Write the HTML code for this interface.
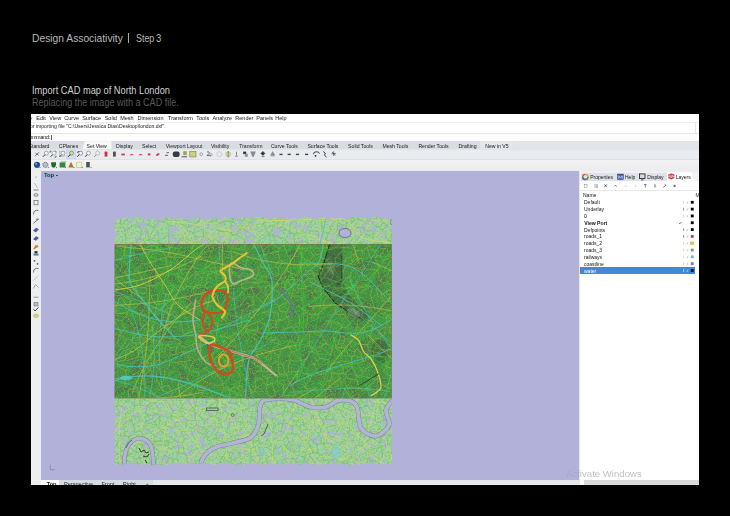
<!DOCTYPE html>
<html><head><meta charset="utf-8">
<style>
*{margin:0;padding:0;box-sizing:border-box}
html,body{width:730px;height:516px;overflow:hidden;background:#000}
body{position:relative;font-family:"Liberation Sans",sans-serif}
.a{position:absolute;white-space:nowrap}
#win{position:absolute;left:31px;top:114px;width:668px;height:371px;overflow:hidden;background:#fff;will-change:transform}
svg{position:absolute;left:0;top:0}
</style></head><body>
<div class="a" style="left:31.60px;top:32.73px;font-size:10.6px;line-height:10.6px;color:#b8b8b8;transform:scaleX(0.97);transform-origin:0 0">Design Associativity</div>
<div class="a" style="left:128.3px;top:33px;width:0.8px;height:10.3px;background:#a8a8a8"></div>
<div class="a" style="left:135.60px;top:32.73px;font-size:10.6px;line-height:10.6px;color:#b8b8b8;transform:scaleX(0.84);transform-origin:0 0">Step</div>
<div class="a" style="left:155.90px;top:32.73px;font-size:10.6px;line-height:10.6px;color:#b8b8b8;transform:scaleX(0.9);transform-origin:0 0">3</div>
<div class="a" style="left:32.00px;top:85.09px;font-size:11.0px;line-height:11.0px;color:#d0d0d0;transform:scaleX(0.842);transform-origin:0 0">Import CAD map of North London</div>
<div class="a" style="left:32.00px;top:97.19px;font-size:11.0px;line-height:11.0px;color:#585858;transform:scaleX(0.822);transform-origin:0 0">Replacing the image with a CAD file.</div>
<div id="win">
<div class="a" style="left:0.00px;top:0.00px;width:668.00px;height:8.00px;background:#fff;"></div>
<div class="a" style="left:0.00px;top:8.00px;width:668.00px;height:1.00px;background:#ededed;"></div>
<div class="a" style="left:0.00px;top:9.00px;width:668.00px;height:10.00px;background:#fff;"></div>
<div class="a" style="left:664.00px;top:9.00px;width:1.00px;height:10.00px;background:#e6e6e6;"></div>
<div class="a" style="left:0.00px;top:19.00px;width:668.00px;height:1.00px;background:#e6e6e6;"></div>
<div class="a" style="left:0.00px;top:20.00px;width:668.00px;height:7.00px;background:#fcfcfc;"></div>
<div class="a" style="left:0.00px;top:27.00px;width:668.00px;height:8.00px;background:#e1e4e8;"></div>
<div class="a" style="left:0.00px;top:27.00px;width:481.00px;height:8.00px;background:#d9dde3;"></div>
<div class="a" style="left:0.00px;top:35.00px;width:668.00px;height:1.00px;background:#e2e4e8;"></div>
<div class="a" style="left:0.00px;top:36.00px;width:668.00px;height:9.00px;background:#e9ebef;"></div>
<div class="a" style="left:0.00px;top:45.00px;width:668.00px;height:1.00px;background:#e0e2e6;"></div>
<div class="a" style="left:0.00px;top:46.00px;width:668.00px;height:11.00px;background:linear-gradient(#f2f2f4,#ececef);"></div>
<div class="a" style="left:0.00px;top:57.00px;width:10.00px;height:314.00px;background:#eceef1;"></div>
<div class="a" style="left:10.00px;top:57.00px;width:538.00px;height:309.00px;background:#b1b1d9;"></div>
<div class="a" style="left:548.00px;top:57.00px;width:1.00px;height:314.00px;background:#e4e6ea;"></div>
<div class="a" style="left:549.00px;top:57.00px;width:119.00px;height:314.00px;background:#ffffff;"></div>
<div class="a" style="left:10.00px;top:366.00px;width:538.00px;height:5.00px;background:#e7e8ec;"></div>
<div class="a" style="left:-2.00px;top:1.74px;font-size:5.5px;line-height:5.5px;color:#151515;">e</div>
<div class="a" style="left:5.30px;top:1.74px;font-size:5.5px;line-height:5.5px;color:#151515;">Edit</div>
<div class="a" style="left:18.30px;top:1.74px;font-size:5.5px;line-height:5.5px;color:#151515;">View</div>
<div class="a" style="left:33.30px;top:1.74px;font-size:5.5px;line-height:5.5px;color:#151515;">Curve</div>
<div class="a" style="left:51.20px;top:1.74px;font-size:5.5px;line-height:5.5px;color:#151515;">Surface</div>
<div class="a" style="left:73.70px;top:1.74px;font-size:5.5px;line-height:5.5px;color:#151515;">Solid</div>
<div class="a" style="left:89.20px;top:1.74px;font-size:5.5px;line-height:5.5px;color:#151515;">Mesh</div>
<div class="a" style="left:106.50px;top:1.74px;font-size:5.5px;line-height:5.5px;color:#151515;">Dimension</div>
<div class="a" style="left:137.00px;top:1.74px;font-size:5.5px;line-height:5.5px;color:#151515;">Transform</div>
<div class="a" style="left:165.30px;top:1.74px;font-size:5.5px;line-height:5.5px;color:#151515;">Tools</div>
<div class="a" style="left:181.50px;top:1.74px;font-size:5.5px;line-height:5.5px;color:#151515;">Analyze</div>
<div class="a" style="left:204.30px;top:1.74px;font-size:5.5px;line-height:5.5px;color:#151515;">Render</div>
<div class="a" style="left:225.30px;top:1.74px;font-size:5.5px;line-height:5.5px;color:#151515;">Panels</div>
<div class="a" style="left:244.30px;top:1.74px;font-size:5.5px;line-height:5.5px;color:#151515;">Help</div>
<div class="a" style="left:-1.00px;top:9.90px;font-size:5.08px;line-height:5.08px;color:#1a1a1a;">or importing file "C:\Users\Jessica Dias\Desktop\london.dxf".</div>
<div class="a" style="left:-1.60px;top:20.80px;font-size:5.2px;line-height:5.2px;color:#111;letter-spacing:-0.12px">ommand:</div>
<div class="a" style="left:20.20px;top:20.60px;width:0.70px;height:5.00px;background:#666;"></div>
<div class="a" style="left:51.00px;top:27.20px;width:29.50px;height:8.30px;background:#f7f8fa;clip-path:polygon(3px 0,100% 0,100% 100%,0 100%)"></div>
<div class="a" style="left:448.50px;top:27.20px;width:33.50px;height:8.30px;background:#e3e6eb;"></div>
<div class="a" style="left:-2.40px;top:29.84px;font-size:5.15px;line-height:5.15px;color:#1a1a1a;">Standard</div>
<div class="a" style="left:27.80px;top:29.84px;font-size:5.15px;line-height:5.15px;color:#1a1a1a;">CPlanes</div>
<div class="a" style="left:55.60px;top:29.84px;font-size:5.15px;line-height:5.15px;color:#1a1a1a;">Set View</div>
<div class="a" style="left:85.00px;top:29.84px;font-size:5.15px;line-height:5.15px;color:#1a1a1a;">Display</div>
<div class="a" style="left:111.00px;top:29.84px;font-size:5.15px;line-height:5.15px;color:#1a1a1a;">Select</div>
<div class="a" style="left:134.70px;top:29.84px;font-size:5.15px;line-height:5.15px;color:#1a1a1a;">Viewport Layout</div>
<div class="a" style="left:179.90px;top:29.84px;font-size:5.15px;line-height:5.15px;color:#1a1a1a;">Visibility</div>
<div class="a" style="left:208.20px;top:29.84px;font-size:5.15px;line-height:5.15px;color:#1a1a1a;">Transform</div>
<div class="a" style="left:239.90px;top:29.84px;font-size:5.15px;line-height:5.15px;color:#1a1a1a;">Curve Tools</div>
<div class="a" style="left:276.40px;top:29.84px;font-size:5.15px;line-height:5.15px;color:#1a1a1a;">Surface Tools</div>
<div class="a" style="left:317.10px;top:29.84px;font-size:5.15px;line-height:5.15px;color:#1a1a1a;">Solid Tools</div>
<div class="a" style="left:351.40px;top:29.84px;font-size:5.15px;line-height:5.15px;color:#1a1a1a;">Mesh Tools</div>
<div class="a" style="left:387.40px;top:29.84px;font-size:5.15px;line-height:5.15px;color:#1a1a1a;">Render Tools</div>
<div class="a" style="left:427.50px;top:29.84px;font-size:5.15px;line-height:5.15px;color:#1a1a1a;">Drafting</div>
<div class="a" style="left:454.20px;top:29.84px;font-size:5.15px;line-height:5.15px;color:#1a1a1a;">New in V5</div>
<div class="a" style="left:549.40px;top:56.60px;width:118.60px;height:2.00px;background:#eef0f3;"></div>
<div class="a" style="left:549.40px;top:58.60px;width:118.60px;height:8.80px;background:#f2f3f5;"></div>
<div class="a" style="left:550.00px;top:58.60px;width:85.50px;height:8.80px;background:#dfe3e9;"></div>
<div class="a" style="left:635.50px;top:58.20px;width:28.00px;height:9.40px;background:#ffffff;clip-path:polygon(0 0,90% 0,100% 100%,0 100%)"></div>
<div class="a" style="left:559.20px;top:60.77px;font-size:5.0px;line-height:5.0px;color:#151515;">Properties</div>
<div class="a" style="left:594.00px;top:60.77px;font-size:5.0px;line-height:5.0px;color:#151515;">Help</div>
<div class="a" style="left:616.20px;top:60.77px;font-size:5.0px;line-height:5.0px;color:#151515;">Display</div>
<div class="a" style="left:644.70px;top:60.77px;font-size:5.0px;line-height:5.0px;color:#151515;">Layers</div>
<div class="a" style="left:549.40px;top:76.20px;width:118.60px;height:0.50px;background:#e6e8ee;"></div>
<div class="a" style="left:552.00px;top:79.47px;font-size:5.0px;line-height:5.0px;color:#111;">Name</div>
<div class="a" style="left:664.60px;top:78.97px;font-size:5.0px;line-height:5.0px;color:#333;">M</div>
<div class="a" style="left:553.00px;top:86.37px;font-size:5.0px;line-height:5.0px;color:#151515;">Default</div>
<div class="a" style="left:553.00px;top:93.19px;font-size:5.0px;line-height:5.0px;color:#151515;">Underlay</div>
<div class="a" style="left:553.00px;top:100.01px;font-size:5.0px;line-height:5.0px;color:#151515;">0</div>
<div class="a" style="left:553.20px;top:106.74px;font-size:5.1px;line-height:5.1px;color:#151515;font-weight:bold;">View Port</div>
<div class="a" style="left:553.00px;top:113.65px;font-size:5.0px;line-height:5.0px;color:#151515;">Defpoints</div>
<div class="a" style="left:553.00px;top:120.47px;font-size:5.0px;line-height:5.0px;color:#151515;">roads_1</div>
<div class="a" style="left:553.00px;top:127.29px;font-size:5.0px;line-height:5.0px;color:#151515;">roads_2</div>
<div class="a" style="left:553.00px;top:134.11px;font-size:5.0px;line-height:5.0px;color:#151515;">roads_3</div>
<div class="a" style="left:553.00px;top:140.93px;font-size:5.0px;line-height:5.0px;color:#151515;">railways</div>
<div class="a" style="left:553.00px;top:147.75px;font-size:5.0px;line-height:5.0px;color:#151515;">coastline</div>
<div class="a" style="left:549.40px;top:153.20px;width:115.10px;height:6.90px;background:#3f8ad6;"></div>
<div class="a" style="left:664.50px;top:153.20px;width:3.50px;height:6.90px;background:#fff;border-radius:3px 0 0 3px"></div>
<div class="a" style="left:553.00px;top:154.57px;font-size:5.0px;line-height:5.0px;color:#ffffff;">water</div>
<div class="a" style="left:10.20px;top:365.60px;width:111.80px;height:5.40px;background:#d8dbe1;"></div>
<div class="a" style="left:10.40px;top:365.60px;width:17.40px;height:5.40px;background:#ffffff;"></div>
<div class="a" style="left:15.70px;top:367.66px;font-size:5.6px;line-height:5.6px;color:#111;font-weight:bold;">Top</div>
<div class="a" style="left:33.00px;top:367.66px;font-size:5.6px;line-height:5.6px;color:#222;">Perspective</div>
<div class="a" style="left:70.40px;top:367.66px;font-size:5.6px;line-height:5.6px;color:#222;">Front</div>
<div class="a" style="left:91.80px;top:367.66px;font-size:5.6px;line-height:5.6px;color:#222;">Right</div>
<div class="a" style="left:114.60px;top:367.66px;font-size:5.6px;line-height:5.6px;color:#555;">+</div>
<div class="a" style="left:10.90px;top:57.70px;width:13.40px;height:7.40px;background:#a4b6d2;"></div>
<div class="a" style="left:13.00px;top:58.81px;font-size:5.9px;line-height:5.9px;color:#1e2a46;font-weight:bold;letter-spacing:-0.1px">Top</div>
<div class="a" style="left:25.10px;top:61.10px;width:2.10px;height:1.00px;background:#3a4560;"></div>
<div class="a" style="left:535.00px;top:355.07px;font-size:9.6px;line-height:9.6px;color:#c2c2c4;clip-path:inset(0 0 0 13.6px)">Activate Windows</div>
<div class="a" style="left:535.00px;top:355.07px;font-size:9.6px;line-height:9.6px;color:rgba(140,140,185,0.35);clip-path:polygon(0 0,13px 0,13px 100%,0 100%)">Activate Windows</div>
<div class="a" style="left:553.00px;top:366.00px;width:115.00px;height:5.00px;background:#dadada;"></div>
</div>
<svg width="730" height="516" viewBox="0 0 730 516">
<defs><clipPath id="vpc"><rect x="41.2" y="170.8" width="537.6" height="308.8"/></clipPath></defs>
<g clip-path="url(#vpc)"><filter id="mblur" x="-2%" y="-2%" width="104%" height="104%"><feGaussianBlur stdDeviation="0.4"/></filter>
<g filter="url(#mblur)">
<filter id="spk" x="0" y="0" width="100%" height="100%" color-interpolation-filters="sRGB">
<feTurbulence type="fractalNoise" baseFrequency="0.7" numOctaves="2" seed="4" result="t"/>
<feColorMatrix in="t" type="matrix" values="0 0 0 0 0.24  0 0 0 0 0.72  0 0 0 0 0.24  0 4 0 0 -1.9" result="g"/>
<feComposite in="g" in2="SourceGraphic" operator="in"/>
</filter>
<filter id="blt" x="0" y="0" width="100%" height="100%" color-interpolation-filters="sRGB">
<feTurbulence type="fractalNoise" baseFrequency="0.07" numOctaves="3" seed="9" result="t"/>
<feColorMatrix in="t" type="matrix" values="0 0 0 0 0.36  0 0 0 0 0.38  0 0 0 0 0.33  0 0 -6 0 2.85" result="g"/>
<feComposite in="g" in2="SourceGraphic" operator="in"/>
</filter>
<filter id="spl" x="0" y="0" width="100%" height="100%" color-interpolation-filters="sRGB">
<feTurbulence type="fractalNoise" baseFrequency="0.55" numOctaves="2" seed="2" result="t"/>
<feColorMatrix in="t" type="matrix" values="0 0 0 0 0.44  0 0 0 0 0.78  0 0 0 0 0.42  0 5 0 0 -2.5" result="g"/>
<feComposite in="g" in2="SourceGraphic" operator="in"/>
</filter>
<filter id="lav" x="0" y="0" width="100%" height="100%" color-interpolation-filters="sRGB">
<feTurbulence type="fractalNoise" baseFrequency="0.16" numOctaves="2" seed="5" result="t"/>
<feColorMatrix in="t" type="matrix" values="0 0 0 0 0.69  0 0 0 0 0.69  0 0 0 0 0.85  0 0 7 0 -4.0" result="g"/>
<feComposite in="g" in2="SourceGraphic" operator="in"/>
</filter>
<clipPath id="lt"><path d="M114.5 218.1L118.7 219.7L122.6 218.3L127 217.1L131 218.7L136.2 216.8L139.4 216.8L144.6 218.9L146.8 219.9L152.6 218.8L157.1 217.1L159.2 218.3L161.4 217.2L164.4 216.6L168.2 218L173.6 218.3L178.2 218.2L182.8 218.1L185.9 220L191.9 219.4L196.7 217.6L199.7 217.5L201.9 219.2L205.5 219.5L209.1 219.9L214.5 216.5L217.3 219.7L221.2 219.9L224.8 216.8L229.3 219.2L232.4 216.8L235.7 219.9L240.7 216.9L243.7 216.9L246 219.3L248.7 218.5L252.5 217.2L257.4 217L262 216.9L265.7 217.2L268.7 219.9L273.9 217.6L279.5 217.2L283.1 219.5L287.6 216.9L293.6 217.2L296.6 219.2L299.9 217.5L302.2 216.8L306.6 217.4L311 217.8L314.8 219.9L318.7 218.5L324.2 217.1L326.8 219.7L332.1 217.4L334.8 219.1L340.6 217.2L346.4 219.6L350.8 218L353.2 216.6L359.1 217.3L363.9 217.4L369.2 218.6L372.4 217.1L377.2 216.7L380.2 218.5L385.6 218.7L388.7 219.7L391.5 216.6L391.9 216.5L391.9 244.0L114.5 244.0ZM114.5 398.4L391.9 398.4L391.9 465.3L391.1 463.6L387.7 464.6L385 463.5L381.1 465.3L378.4 464.1L375.6 463.6L369.8 463.3L365.1 463.7L361.3 463.7L359.2 464.9L356.2 463.2L354.1 464.2L351.6 465.3L346.4 464.5L342.1 463.5L340 463.1L337.8 465.1L334 462.8L328.7 464.5L324.7 463.7L321 464.8L317.9 464.2L315.2 464.6L309.4 463.5L304.1 463.2L300.1 465L296.8 463.8L293.3 463.1L287.6 463.3L283.9 464.8L279.2 464.5L273.7 464.2L269 463L266.3 464.8L261.6 464.5L259.6 464.7L253.9 463.8L249.9 463.6L247 464.1L242.6 465.2L237.6 465.1L232.2 464.2L227.9 463.5L224.3 463.5L218.8 462.8L214.3 465.1L209.8 463.8L206.3 463.7L202 463.1L196.9 464.3L191.4 463L186.6 464.4L181 463.3L176.2 463.5L170.6 463.5L166.4 465.1L160.4 464.5L155.4 464.1L150.9 465.2L145.1 463.5L139.4 465.3L137.3 464.9L132.9 463.6L128.3 462.8L122.7 464.4L120.2 463.9L116.7 464.9L114.5 464.2Z"/></clipPath>
<g clip-path="url(#lt)">
<rect x="114.5" y="214.5" width="277.4" height="252.8" fill="#a6d0a0"/>
<rect x="114.5" y="216.5" width="277.4" height="248.8" fill="#000" filter="url(#spl)" opacity="0.75"/>
<rect x="114.5" y="216.5" width="277.4" height="248.8" fill="#000" filter="url(#lav)"/>
<path d="M382.6 207l-12 -1.9M382.6 207l0.4 1.4M370.5 205.1l-0.8 1.5M383 208.4l-7 6.6M369.8 206.6l1.9 8.5M313.1 218.4l-6.3 12.2M313.1 218.4l7.7 1M320.9 219.4l1.5 10.8M306.8 230.6l11.7 0.7M376.1 227.2l-1 3.1M376.1 227.2l3.5 -0.7M379.6 226.6l2.8 3.5M382.4 230l5.4 9.6M391.5 201.6l-3.2 8M388.2 209.6l11.9 -0.6M383 208.4l4.5 1.8M382.5 223.2l5.4 1.4M382.5 223.2l-1.2 -4.9M381.3 218.3l7.3 -3.1M379.6 226.6l2.9 -3.3M382.4 230l5.5 -5.4M369.3 219.5l6.8 7.7M371.7 215l-0 0M387.5 210.2l1.1 5.1M395.2 216.2l6 -5.5M395.2 216.2l-4.6 0.6M400.1 208.9l1.1 1.8M364.8 222.2l4.5 -2.7M364.8 222.2l-6.7 -3.4M358.1 218.8l-1 -8M369.8 206.6l-10.2 -1.2M359.6 205.4l-3 4.3M357.1 210.8l-0.5 -1.2M325.3 250.4l15 7.5M317.6 246.5l6.7 0.7M317.6 246.5l0.9 -15.2M327.5 233.2l-5.1 -3M327.5 233.2l-1.1 11.9M329.4 231.9l-1.9 1.2M333.8 242.7l4.1 -6.9M337.8 235.8l-3.5 -3M326.3 245.1l4.6 -0.3M382.8 242.8l-0.3 14M382.8 242.8l-8.4 0.2M374.5 243l0 0M374.5 243l-6 3.1M368.5 246l-0.2 9M363.3 232.2l9.1 5.8M363.7 230.7l10.8 0.2M372.4 238l2.1 -7.1M363.5 227.7l0.2 3M333.8 242.7l7.7 -1.7M337.8 235.8l5.5 0.7M343.4 236.5l-1.9 4.5M348.8 231.1l5 -4.1M348.8 231.1l-3 -5.8M345.8 225.3l0.8 -2M346.6 223.3l8.7 -2.5M363.5 227.7l-9.6 -0.7M358.1 218.8l-1.4 0.5M295.1 246.3l2 2.6M295.1 246.3l6.1 1M301.2 247.4l-4.1 1.5M308.5 243.6l-4.2 3.4M308.5 243.6l-1.6 -3M295.1 246.3l-1.8 -1.1M306.9 240.5l-12.1 3.2M306.9 240.5l-1.8 -7.9M294.8 243.8l-1.2 -10.2M293.7 233.6l11.5 -0.9M306.8 230.6l-1.2 0.9M305.7 231.5l-0.5 1.2M329.4 231.9l2.7 -8.2M320.9 219.4l0.1 -0M309.7 212.1l6.4 -6.5M309.7 212.1l3.5 6.3M316.1 205.6l7.6 10M321 219.3l2.7 -3.7M337.4 223.1l6 2M337.4 223.1l0.2 7M343.4 225.1l-4.1 5.1M337.6 230.1l1.7 0.1M334.3 232.7l3.2 -2.6M332.1 223.7l3.1 -2.3M335.2 221.5l2.2 1.6M349 234.4l-4.2 1.2M349 234.4l-0.1 -3.3M344.8 235.7l-5.5 -5.5M345.8 225.3l-2.4 -0.2M344.8 235.7l-1.4 0.8M231 232.8l0.1 -11.7M231 232.8l-14.4 -3.1M231.2 221.1l-8 0.7M223.2 221.8l-5.1 2.4M216.7 229.6l1.4 -5.5M232.5 234.6l-1.4 -1.9M232.5 234.6l-4 9.4M224.7 245.2l3.7 -1.1M224.7 245.2l-9.3 -6M215.5 230.8l1.1 -1.2M214.4 208.7l2 12.4M216.4 221.2l1.7 3M249.8 202.2l-6.9 4M254.1 202.3l-4.3 -0.1M253.8 213.1l-0.2 0.1M244.7 209.1l-1.8 -2.8M242.9 206.3l0 -0.1M99.6 245.6l9.4 8.7M99.6 245.6l2.3 -2.2M104.4 237.8l-2.6 5.6M406.8 229.4l-2.1 3.3M404.7 232.7l-13.4 2.8M391.3 235.5l1 -6.8M394.8 227.2l-2.4 1.5M404.9 240.4l-14.6 -3.1M404.9 240.4l-0.2 -7.8M390.3 237.4l1 -1.9M390.3 237.4l-2.1 2.2M397.7 222.8l-2.5 -6.6M397.7 222.8l-3 4.4M402.9 222.1l2.2 -9.7M405.3 212.4l-0.1 0M397.7 222.8l5.2 -0.7M401.2 210.7l3.9 1.6M405.4 241.2l-0.5 -0.8M240 257.1l0 -2.2M240 254.8l13.1 -4.6M240 257.1l-11.6 0.7M224.7 245.2l-2.2 5.5M228.4 244.1l11.1 8.1M240 254.8l-0.5 -2.7M228.4 257.8l-5.8 -7.1M220.1 204.9l-0.3 1.3M241.1 207.1l-8.2 -1M241.1 207.1l-7.9 11.2M344.4 203.8l-9.9 -2M344.4 203.8l1.3 -1.1M341 212.6l-3.4 1M341 212.6l3.4 -8.7M337.5 213.6l-4.9 -7.1M334.2 202l-1.5 4.4M334.2 202l0.3 -0.2M353.5 209.6l3.1 0.1M353.5 209.6l-7.9 -6.9M349.6 213.2l-6.7 0.5M351.1 217l-4.7 3.7M342.9 213.7l3.6 7.1M356.7 219.3l-5.6 -2.3M353.5 209.6l-3.9 3.6M341 212.6l1.9 1.1M346.6 223.3l-0.1 -2.5M337.5 213.6l-1.8 2.3M348.2 258.8l-0.5 -0.5M341.9 256.6l-0.8 0.4M325.3 250.4l-1 -3.2M331 244.8l5.6 2.5M341.1 257l-4.6 -9.7M368.5 246l-9 -3.3M358 252.4l1.5 -9.6M357.2 239.4l6.1 -7.1M358.9 242l0.6 0.7M356.7 239.3l-3.5 -1.2M351.4 250.7l7.5 -8.7M351.4 250.7l-1.3 -1.5M356.7 239.3l-6.6 9.9M253.6 213.2l-2.8 9.3M244.7 209.1l-0.6 11.2M244.1 220.3l5.7 2M250.8 222.5l-0.9 -0.2M253.1 250.2l1.5 -2.9M259.1 245.6l-4.4 1.7M270.4 253.6l-11.4 -8M259.1 245.6l0 -0M239.5 252.2l5.2 -9M232.5 234.6l3.9 -0.3M236.3 234.4l8.5 5.4M244.9 239.8l-0.2 3.4M278.4 221.8l-1.5 -1.5M278.4 221.8l-0.7 2.1M277.7 223.8l-2.6 -0.8M274.2 221.6l0.9 1.5M253.8 213.1l8.9 3.1M257.4 205.5l6.3 2M263.7 207.5l-0.4 7.1M265.8 201.7l1.5 3.4M263.7 207.5l3.6 -2.4M297.1 254.3l3.5 -2M304.3 246.9l-3.8 5.4M282.4 202.9l-0.7 5M292.6 201.7l-1.1 2.3M281.7 207.8l9.7 -3.8M304.1 206.4l3.3 4.9M304.1 206.4l-3.9 -0.2M307.4 211.3l-7.6 4.8M299.8 216.1l-5.6 -5M292.6 201.7l7.7 4.5M292.7 210.8l1.5 0.3M297.9 220.5l1.9 -4.4M297.9 220.5l-6.7 0.6M291.2 221.1l-2.4 -1.9M288.8 219.2l2.1 -6.9M328.7 207l-6.9 -4.3M328.7 207l-2.3 7.3M321.8 202.8l2.4 12.4M326.4 214.3l-2.2 0.8M332.6 206.5l-4 0.6M335.7 215.9l-9.3 -1.6M242.6 220.9l-2 7.7M242.6 220.9l-9.5 -2.2M233.1 218.7l-0.5 0.5M240.2 228.9l-8.5 -8.4M240.2 228.9l0.4 -0.3M231.7 220.5l0.8 -1.3M244.1 220.3l-1.5 0.6M243.8 229.2l6 -6.9M243.8 229.2l-3.2 -0.6M233.2 218.3l-0.1 0.5M223 212.5l9.5 6.7M219.7 206.3l0.1 -0.1M236.3 234.4l3.9 -5.5M231.2 221.1l0.5 -0.6M108.4 203.3l-7.7 -0.8M109 254.3l6 -0.9M109.2 245.9l5.7 7.4M104.4 237.8l1.1 -1.2M117.6 245.7l0.5 -0.8M114.9 253.4l0.7 0.2M117.5 257.8l-1.9 -4.2M115.6 253.6l2.2 -3.9M216.4 221.2l-4.9 -0.6M211.5 220.6l-3.5 2.5M208.2 229.3l-0.1 -6.2M214.4 208.7l-0.2 -0M206.1 218.4l-0.7 -0.7M205.4 217.7l8.8 -9M214.3 208.7l-7.5 -4.2M215.5 239.2l-2.2 1.6M222.6 250.7l-4 3.2M213.3 240.8l0 7.1M213.3 247.9l5.2 5.9M218.6 253.9l-0.1 0.1M191 256.9l0.2 -0.1M191.2 256.8l3.8 -0.6M382.5 256.8l11.3 -1.4M350.7 255.9l3.9 3M350.7 255.9l1.7 -3M352.4 252.9l4.6 0.7M348.2 258.8l6.4 0M343.9 253.3l8.1 -0.8M352 252.5l0.4 0.4M351.4 250.7l0.6 1.8M344.6 250.5l-1.3 -4.4M344.6 250.5l4.2 -1.7M348.8 248.8l-0.2 -5.3M343.2 246.1l5.4 -2.6M343.9 253.3l0.7 -2.8M342.5 245.6l0.7 0.5M350.1 249.2l-1.4 -0.5M353.2 238.1l-4.6 5.4M260.3 239.8l-9.6 -4.9M260.3 239.8l8.4 -5.2M268.8 234.6l-5.4 -10.3M259.1 245.6l1.3 -5.8M244.9 239.8l5.9 -4.9M270.8 253.5l-1.1 -18.5M270.8 253.5l-0.4 0M269.8 235l-0.8 -0.4M269 234.6l-0.2 -0.1M264.3 221.8l6.9 -2.7M264.3 221.8l-0.9 2.5M269 234.6l6.1 -11.6M271.2 219.1l3 2.5M262.7 216.2l1.6 5.5M250.8 222.5l2.7 2.7M243.8 229.2l7 5.1M271.8 211.9l0.4 -6.5M271.8 211.9l1.6 3.9M273.4 215.8l6.6 -0.5M272.2 205.4l-0.1 0M281.6 207.9l0 0M281.6 207.9l-0.8 7.3M263.3 214.5l8.5 -2.6M267.3 205.1l4.9 0.3M271.2 219.1l2.2 -3.2M276.9 220.3l3.1 -4.9M281.7 207.8l-0.1 0.1M282.4 217l-1.6 -1.8M282.4 217l2.7 2M278.4 221.8l4 -4.7M290.6 248l4.4 5.8M295 253.7l-0 -0M297.1 254.3l-2.1 -0.6M277.7 223.8l0.1 0.1M285.1 219.1l-2.4 5.1M105.5 236.6l0.6 -8.3M196.5 214.4l0.9 0.2M196.5 214.4l-5.7 -9.1M197.4 214.6l2.1 -3.6M190.8 205.3l2.3 -3.5M186.3 216.5l10.2 -2.1M186.3 216.5l2.5 9.8M199.9 218.5l-2.5 -3.9M199.9 218.5l-0.4 2.6M199.5 221.1l-10.7 5.2M186.3 216.5l-0.3 -0.2M183.1 208.3l2.9 8.1M183.1 208.3l7.7 -3M199.9 218.5l5.5 -0.8M206.8 204.5l-7.3 6.5M183.1 208.3l-1.3 -0.9M193.9 233.2l8.7 -4M193.9 233.2l2.3 8.5M199.8 241.9l-3.5 -0.2M199.8 241.9l3.7 -5.6M203.5 236.3l-0.1 -6.8M203.4 229.6l-0.8 -0.4M195.9 242.1l0.4 -0.4M205 245.6l6.9 -4.4M211.9 241.2l-8.4 -4.9M211.9 241.2l1.4 -0.4M191 256.9l-3.5 -3.8M174.5 258l5.4 -9.4M187.5 253.1l-7.6 -4.5M209.5 251.7l2 1.3M209.5 251.7l-1.8 -0.1M213.3 247.9l-3.8 3.7M218.5 254l-6.9 -1M204.9 248.8l2.9 2.8M389 240.5l5.6 12.9M389 240.5l13.2 6.2M405.4 241.2l-2.6 5.4M388.2 239.6l0.8 1M402.8 246.7l-0.5 0.1M290.6 248l-0 -1.6M290.6 246.3l-0 0M275.8 255.4l1.8 -8.9M275.8 255.4l2.5 2.1M278.3 257.5l4.4 -8.6M278.5 245.9l4.9 -0.3M270.8 253.5l5 1.8M269.8 235l2.7 0.2M272.4 235.2l5.2 11.3M290.6 246.3l-7.9 2.6M286.4 241.2l-3 4.4M286.4 241.2l4.2 5.1M278.5 245.9l5.8 -7.3M272.6 235.2l11.6 3.4M286.4 241.2l-0.8 -2.5M285.6 238.7l-1.3 -0.1M293.7 233.6l-3.3 -0.5M285.6 238.7l4.8 -5.6M291.2 221.1l-1.4 10.8M290.3 233.1l-0.5 -1.2M108.7 220.4l-7.1 -2.6M108.7 220.4l1.7 -10.8M109.3 208l-9.5 4.9M109.3 208l1.2 1.6M109.9 223l-3.8 5.3M108.4 203.3l0.9 4.7M120.5 203.4l0.8 2.8M121.4 206.2l-7.3 4.2M114.1 210.4l-3.6 -0.8M179.4 223.8l9.2 3.5M184.2 233.9l4.3 -3.1M188.8 226.3l-0.3 1M186.1 216.3l-2.5 1.2M193.9 233.2l-5.4 -2.4M135.6 216l-1.8 -2.1M135.6 216l10.1 -0.4M145.8 215.6l1.6 -0.7M121.4 206.2l2.7 1.6M192.5 241.9l-9.4 -5.2M187.4 243.9l-4.9 -6.2M183.1 236.7l-0.7 1.1M195.9 242.1l-3.4 -0.3M187.5 253.1l-0.1 -9.2M179.9 248.6l-0.9 -1.2M179 247.4l-0.8 -3.8M178.2 243.6l1.1 -3.6M179.3 240l3.1 -2.3M394.5 254.4l7.5 4.6M394.5 254.4l0.1 -0.3M394.6 254.1l10.9 0.1M402 259l2.4 -1.6M404.4 257.4l1.2 -3.2M394.7 253.5l-0 0.6M283 226.6l-5.6 2.9M283 226.6l3.2 3.2M286.2 229.8l-11 2.9M277.4 229.5l-2.3 3.2M277.8 223.9l-0.4 5.6M282.7 224.2l0.3 2.4M289.8 231.9l-3.7 -2.2M272.6 235.2l2.5 -2.5M174.3 213.1l0.9 -1.9M174.3 213.1l-7 0.8M175.3 211.2l-8.2 -3.2M167.3 213.9l-0.2 -5.9M181.8 207.4l-5.9 3M181.9 207.4l-0 0M175.5 217.4l-1.2 -4.4M134.4 224.7l5.1 1.6M145.8 215.6l-3.9 8.5M147.4 215l0.8 0.5M148.2 215.5l2.1 10.1M141.9 224.2l8.4 1.4M154.8 217.4l5.7 -4.4M159.2 209.6l1.3 3.4M148.2 215.5l0.4 0M165.6 216.1l0.3 5.8M160.8 213.3l-2.7 7.5M166 221.9l-7.4 -0.6M158.6 221.3l-0.4 -0.6M169.4 226.2l-3.4 -4.3M169.4 226.2l1.6 -0.5M167.3 213.9l-1.7 2.2M160.5 213l0.4 0.3M154.8 217.4l3.3 3.3M124.6 212l7.3 2.2M124.6 212l-4.1 4.3M131.9 214.2l-10.4 10.6M120.6 216.4l-0 7.5M133.8 214l-1.9 0.2M124.1 207.8l0.5 4.2M134.4 224.7l-8.3 5.4M125.1 230.1l0.1 0M125.1 230.1l-3.5 -5.4M126 230.1l-0.9 0M109.9 223l10.7 0.8M127.6 251.9l0.1 2.9M126.6 256.6l1.1 -1.7M133.3 248.1l-5.6 3.5M133.3 248.1l1.5 -5.2M134.8 242.9l-9.3 -0.2M127.7 251.5l-2.9 -7.5M127.6 251.9l0.1 -0.4M140 252.4l-2.2 5.1M127.7 254.8l10.1 2.6M138 239.2l-3.2 3.7M125.1 230.1l0.3 12.6M138 239.2l2.4 -0.1M139.5 226.4l2.2 3.2M140.4 239.1l1.3 -9.5M169.4 226.2l-1.2 2.7M168.9 234l-0.7 -5M140 252.4l5.3 -3.3M140.4 239.1l3.9 2M144.3 241.1l1 7.9M145.3 249l2.9 2.3M148.2 251.3l0.3 0.1M148.5 251.4l3.2 0.9M149 237.7l-3.2 -8.7M149 237.7l5 -8.6M153.4 228l-2.8 -1.8M153.4 228l0.6 1.1M144.3 241.1l4.2 -2M148.5 239.1l0.5 -1.3M158.3 231.1l-0 1.1M158.3 231.1l-4.3 -2M158.3 232.2l-6.7 7.8M148.5 239.1l3.1 0.9M150.3 225.6l0.3 0.6M158.6 221.3l-5.2 6.7M158.3 232.2l0.6 8.8M151.6 240l6.6 2.3M158.9 241l-0.7 1.3M168.9 234l-0.4 0.7M158.9 241l9.7 -6.3M178.2 243.6l-9.7 0.7M168.5 244.3l0.1 -9.6M157.3 251.1l1.3 -7.9M157.3 251.1l4.6 3.8M158.5 243.2l9.6 1.5M168.1 244.7l0.3 7.7M168.4 252.4l-0.2 0.5M168.1 252.9l-4.3 1.9M163.8 254.8l-1.9 0.1M158.2 242.3l0.3 0.9M168.5 244.3l-0.4 0.4M179 247.4l-10.6 5" stroke="#5ec452" stroke-width="0.6" fill="none" opacity="0.85"/>
<path d="M386.6 203.9l0.1 12.7M110 245.4l6.8 7.4M110 245.4l3.4 -5.3M99.7 231.3l13.7 8.8M386.8 216.6l-2.6 3.4M384.1 220l14.4 3.2M361.9 204.7l10.5 15.3M347 216.7l9 28.3M372.3 220l-16.3 25M384.1 220l-3 2.1M381.1 222.1l-8.8 -2.1M118.1 223.5l4.9 3.1M113.4 240l12.1 -7.8M157.4 252l-19 -2.8M179.7 249.6l5.3 -11.8M157.4 252l6.8 -7.8M356 245l-0.4 1.6M360.2 253.7l25.1 -22.4M360.2 253.7l-1.9 -2.4M355.7 246.6l2.6 4.7M363.1 259l-3 -5.3M355.7 246.6l-20.7 -4.8M347 216.7l-8.3 0.6M338.8 217.3l-5.9 -11.7M335 241.8l1.7 -22.5M338.8 217.3l-2.1 2.1M320.9 239.1l8.5 4.2M320.9 239.1l-1.4 -18.5M336.7 219.4l-17.2 1.2M292.5 207l-12.1 1.5M248.6 255.7l-29.9 -7M248.9 252.4l9.5 -16.4M268.7 228.5l-10.3 7.5M154.9 228.3l0.2 2.5M137.4 246.3l17.7 -14.1M137.4 246.3l-5.2 -7.1M155.1 230.8l-0 1.4M166.4 212.6l16.7 21.4M138.4 249.1l-1 -2.9M116.7 252.7l15.5 -13.6M392.3 253.3l-11.4 -2.3M392.3 253.3l8.3 -14.1M380.9 251l8.2 -15.5M400.6 239.2l-11.3 -3.7M389.3 235.6l-0.1 -0M363.1 259l17.8 -8M398.5 223.2l-9.2 12.4M302.8 238.2l14.7 1.6M317.4 239.8l-5.8 14M275.3 226.5l2.4 0.3M299.1 232.4l3.6 5.8M320.9 239.1l-3.5 0.7M325.5 258.9l-13.9 -5.1M332.9 205.6l-6.8 -2.7M197.5 206.1l-7.2 7.8M318.6 219.7l5.1 -13.1M323.7 206.6l-17.6 0.8M304.9 211.6l-0.2 -0.7M304.8 210.9l1.3 -3.5M326.2 202.8l-2.4 3.8M299.1 232.4l8.8 -15.5M277.7 226.7l27.3 -15.1M292.5 207l12.3 3.9M257.4 211.2l-17.5 -2.3M245.8 218.2l-6.4 -4.5M258.4 236l-9.7 -6.2M245.8 218.2l3 11.6M199.3 206.2l2.5 3.9M197.5 206.1l1.8 0.1M218 213l0.8 6.7M218.7 219.7l20.3 -5.4M248.8 229.8l-11.5 -4.3M237.2 225.6l1.8 -11.3M248.9 252.4l-22 -19.5M237.2 225.6l-10.3 7.4M218.7 248.7l0.4 -1.5M219.1 247.2l7.6 -14.3M226.9 232.9l-0.3 -0M218.1 223.7l1 2.5M218.1 223.7l-17.6 -1M219.1 226.2l-11 10M208.1 236.2l-17.1 6.3M200.5 222.6l-11.4 7.9M189.1 230.6l-4.2 5.5M185 237.8l-0.1 -1.7M218.7 219.7l-0.6 3.9M226.6 232.9l-7.5 -6.7M201.8 210.2l-1.3 12.5M219.1 247.2l-11 -11M185 237.9l0 -0" stroke="#d0d868" stroke-width="0.6" fill="none" opacity="0.9"/>
<path d="M390 224.7l0.7 -20.3M366.2 242l-15.2 -6.4M273.4 256.2l26.5 -2.2M272 240.9l8.3 0.4M373.8 232.8l-3.3 -29.6M166.6 208.8l-18.1 13.2M148.5 222l12.6 18.2M161.1 240.3l15.5 -25.1M185.7 211.2l4.9 3.1M280.3 241.3l8.1 -4.3M307.6 256.3l-1.8 -20.4M344.6 238.3l-7.3 2.5M337.3 240.8l-24.1 -16.9M317.1 213.1l-3.8 10.8M347.4 237.5l-2.8 0.8M307.3 229.5l-1.5 6.3M202.6 231.5l-8.1 -3.3M221.4 212.4l-4.9 4.5M217 236.5l-3.4 -13.7M176.6 215.1l9.1 -4M127.4 234.9l0 -0.3M127.4 234.9l-4.9 3.3M140.2 214.9l-4.5 -9.1M230 220.2l16.9 2.4M247.7 242.5l5.4 -3.9M272 240.9l-2.7 -3.2M269.3 237.7l-14.2 1.1M288.4 237.1l-0.5 -11.5M307.3 229.5l-15.9 -7.5M269.3 237.7l1 -3.2M287.9 225.6l-17.6 9M117.3 217l-13.7 -3.7M101.4 237.6l2.9 -1.6M101.4 237.6l0.4 -23.5M122.5 238.2l-18.2 -2.2M289.2 217.7l-13.8 -7.7M291.4 222.1l-2.2 -4.4M272.9 211.2l-2.9 8.8M275.4 209.9l-2.5 1.3" stroke="#8ad4cc" stroke-width="0.6" fill="none" opacity="0.85"/>
<path d="M155.3 248.3C156.9 248.8 161.6 250.4 164.8 251.5C167.9 252.6 171 253.8 174.1 255.1C177.2 256.3 180.3 257.6 183.3 259C186.3 260.5 189.3 262 192.2 263.5C195.2 265 198.1 266.6 201 268.2C204 269.9 206.8 271.5 209.7 273.3C212.5 275.1 215.3 276.9 218 278.8C220.7 280.7 224.7 283.7 226.1 284.7M119.6 217.1C119.1 218.7 117.4 223.4 116.5 226.6C115.5 229.8 114.7 233 113.9 236.3C113.1 239.5 112.4 242.8 111.7 246C111 249.3 110.4 252.6 109.8 255.8C109.2 259.1 108.7 262.4 108.2 265.7C107.7 269 107.3 272.3 106.8 275.6C106.4 278.9 106 282.2 105.6 285.5C105.1 288.8 104.7 292.2 104.3 295.5C103.9 298.8 103.5 302.1 103.2 305.4C102.9 308.7 102.6 312 102.3 315.4C102 318.7 101.8 322 101.5 325.3C101.2 328.7 100.9 332 100.6 335.3C100.4 338.6 100.1 341.9 99.8 345.3C99.6 348.6 99.3 351.9 99.1 355.2C98.8 358.6 98.7 361.9 98.5 365.2C98.3 368.5 97.9 373.5 97.8 375.2M234.3 231.6C232.6 231.3 227.7 230.3 224.5 229.7C221.2 229.1 217.9 228.5 214.6 227.9C211.3 227.3 208.1 226.7 204.8 226.1C201.5 225.5 198.2 225 194.9 224.5C191.6 224 188.3 223.6 185 223.1C181.7 222.7 178.4 222.3 175.1 222C171.7 221.6 166.8 221.3 165.1 221.1M183.1 232.5C183.7 234.1 185.6 238.7 186.7 241.8C187.9 245 189.1 248.1 190.2 251.2C191.3 254.4 192.3 257.6 193.3 260.7C194.3 263.9 195.2 267.1 196.1 270.3C196.9 273.6 197.7 276.8 198.4 280.1C199.1 283.3 199.7 286.6 200.2 289.9C200.8 293.2 201.3 296.5 201.7 299.8C202.2 303.1 202.6 306.4 202.9 309.7C203.2 313 203.4 316.4 203.6 319.7C203.7 323 203.9 326.4 203.9 329.7C203.9 333 203.9 336.4 203.8 339.7C203.7 343 203.4 346.3 203.2 349.7C202.9 353 202.5 356.3 202 359.6C201.6 362.9 201 366.2 200.4 369.5C199.8 372.7 199.1 376 198.3 379.2C197.5 382.5 196.7 385.7 195.7 388.9C194.8 392.1 193.8 395.3 192.6 398.4C191.5 401.6 190.3 404.7 189.1 407.8C187.9 410.9 185.9 415.5 185.2 417M342 214.3C340.7 213.3 336.8 210.1 334.2 208C331.7 205.9 329.1 203.7 326.6 201.5C324.1 199.3 321.7 197 319.3 194.7C316.9 192.4 314.5 190.1 312.1 187.8C309.7 185.4 307.4 183 305.1 180.6C302.7 178.3 300.4 175.9 298.1 173.5C295.8 171.1 293.5 168.6 291.2 166.2C289 163.8 286.7 161.3 284.5 158.8C282.2 156.4 279.9 154 277.6 151.6C275.3 149.1 271.9 145.5 270.7 144.3M321.4 233.7C322.5 232.4 325.8 228.8 328 226.2C330.1 223.6 332.2 221 334.2 218.4C336.2 215.7 338.1 213 340 210.2C341.9 207.5 343.7 204.7 345.4 201.8C347.2 199 348.8 196.1 350.4 193.2C352 190.3 353.6 187.3 355.1 184.3C356.6 181.3 358 178.3 359.3 175.3C360.7 172.2 362 169.2 363.3 166.1C364.6 163 366.4 158.4 367 156.8M266.9 244.1C267.1 245.8 267.6 250.7 268.1 254C268.6 257.3 269.1 260.6 269.8 263.9C270.4 267.2 271.1 270.4 271.9 273.7C272.6 276.9 273.5 280.1 274.4 283.3C275.3 286.6 276.3 289.7 277.4 292.9C278.4 296 279.6 299.2 280.8 302.3C282 305.4 283.3 308.5 284.7 311.5C286 314.5 287.4 317.6 288.9 320.6C290.4 323.6 292.8 328 293.5 329.4M175.4 214.1C174.8 212.5 173 207.9 171.8 204.8C170.6 201.6 169.4 198.5 168.2 195.4C167.1 192.3 165.9 189.2 164.6 186.1C163.4 183 162.1 179.9 160.9 176.8C159.6 173.7 158.4 170.6 157.1 167.5C155.9 164.5 154.6 161.4 153.2 158.3C151.9 155.3 150.5 152.2 149.2 149.2C147.8 146.2 146.4 143.1 145.1 140.1C143.7 137 142.4 134 141.1 130.9C139.8 127.8 138.5 124.8 137.2 121.7C135.9 118.6 134.5 115.6 133.2 112.5C131.9 109.4 130.7 106.4 129.4 103.3C128.1 100.2 126.8 97.1 125.4 94.1C124.1 91.1 122.6 88 121.2 85C119.8 82 118.5 79 117 76C115.6 73 114.1 70 112.6 67C111 64 109.5 61.1 107.9 58.2C106.2 55.3 103.7 51 102.8 49.5M229.2 210.1C230.8 210.6 235.7 211.8 238.9 212.6C242.1 213.5 245.3 214.4 248.5 215.4C251.7 216.3 254.9 217.3 258.1 218.2C261.3 219.2 264.5 220.2 267.6 221.2C270.8 222.2 274 223.3 277.2 224.3C280.3 225.3 283.5 226.2 286.7 227.3C289.9 228.3 293 229.4 296.2 230.5C299.3 231.6 302.5 232.7 305.6 233.9C308.7 235 311.9 236.1 315 237.3C318.1 238.5 321.2 239.7 324.3 241C327.3 242.3 330.4 243.7 333.4 245C336.5 246.4 339.5 247.8 342.5 249.2C345.5 250.6 348.6 252 351.6 253.5C354.6 254.9 357.5 256.4 360.5 257.8C363.5 259.3 366.5 260.7 369.6 262.2C372.6 263.6 375.6 265 378.6 266.4C381.7 267.8 384.7 269.1 387.7 270.5C390.7 271.9 393.8 273.4 396.8 274.8C399.8 276.3 402.8 277.7 405.7 279.3C408.7 280.8 413 283.3 414.5 284.1M241.3 225.2C242.3 223.8 245.1 219.7 247 216.9C248.8 214.2 250.8 211.4 252.6 208.7C254.5 205.9 256.4 203.2 258.3 200.4C260.1 197.6 262 194.9 263.8 192.1C265.6 189.3 267.4 186.5 269.2 183.6C270.9 180.8 272.6 177.9 274.2 175C275.8 172.1 277.3 169.1 278.7 166.1C280.2 163.1 281.6 160 282.9 157C284.2 153.9 285.4 150.8 286.5 147.7C287.7 144.5 288.7 141.4 289.7 138.2C290.8 135 291.7 131.8 292.7 128.7C293.7 125.5 295 120.7 295.5 119.1M368.3 216.2C367.1 217.3 363.3 220.6 360.8 222.8C358.3 225 355.8 227.2 353.3 229.4C350.9 231.7 348.4 233.9 346 236.2C343.6 238.5 341.2 240.9 338.9 243.3C336.6 245.7 334.4 248.2 332.2 250.7C330 253.2 327.9 255.8 325.8 258.4C323.8 261 321.7 263.7 319.7 266.3C317.7 269 314.8 273 313.8 274.4M179.8 223.7C180.7 225 183.6 229.1 185.5 231.9C187.4 234.6 189.3 237.4 191.1 240.1C192.9 242.9 194.7 245.8 196.4 248.6C198.2 251.4 200 254.2 201.7 257.1C203.5 259.9 205.3 262.7 207.1 265.5C208.9 268.3 210.6 271.2 212.5 274C214.3 276.7 216.2 279.5 218.1 282.2C220 285 221.9 287.7 223.8 290.4C225.7 293.2 227.7 295.8 229.6 298.5C231.6 301.2 233.6 303.9 235.5 306.6C237.5 309.3 239.4 312 241.5 314.7C243.5 317.3 245.5 320 247.6 322.6C249.7 325.2 251.8 327.8 254 330.3C256.2 332.8 258.4 335.3 260.7 337.7C263 340.1 265.3 342.5 267.8 344.7C270.2 347 272.7 349.3 275.2 351.5C277.7 353.6 280.3 355.8 282.9 357.8C285.5 359.9 288.2 361.9 290.9 363.8C293.6 365.7 296.4 367.6 299.2 369.3C302 371.1 306.4 373.6 307.8 374.5M267.2 213C266.8 211.3 265.5 206.5 264.8 203.3C264 200 263.3 196.8 262.5 193.5C261.7 190.3 261 187 260.2 183.8C259.4 180.5 258.6 177.3 257.8 174.1C257 170.8 256.2 167.6 255.4 164.4C254.6 161.1 253.8 157.9 252.9 154.7C252.1 151.5 251.2 148.2 250.3 145C249.4 141.8 248.6 138.6 247.8 135.4C246.9 132.1 246 128.9 245.1 125.7C244.2 122.5 242.8 117.7 242.3 116.1" stroke="#d8dc70" stroke-width="0.6" fill="none" opacity="0.85" stroke-linejoin="round"/>
<path d="M106.3 461.3l0.6 4.3M105.5 466.9l1.4 -1.3M103.7 473.8l-0.1 4.5M103.7 473.8l1.7 -6.9M110 466.7l-3.2 -1.1M110 466.7l-3.3 10.3M106.1 452.3l2 4.9M111.3 467.1l4.5 -4.1M115.8 463l-4 -5M111.8 457.9l-3.7 -0.7M344.3 479.2l-5.5 -3.5M337.1 477.3l-2.1 0.5M399.5 477.8l0.3 -0.5M399.8 477.2l0.1 -0M103.7 387.8l2.7 1.1M121.3 384l-0.7 0.3M115.8 463l6.1 0.2M111.8 457.9l6.2 -3.7M121.9 463.2l1.2 -1.8M123.1 461.4l-3.1 -7.2M118 454.2l2.1 -0.1M134.7 476.8l-1.7 -2.1M133 474.7l-5.9 3.7M313.9 475.8l-3.8 1.1M306.6 476.1l3.5 0.7M335 477.8l-3.7 -3.3M331.3 474.5l-8.3 3.1M360 477.2l2.7 -1.3M363.2 476.1l-0.6 -0.1M373.9 477.6l-2.8 -3.4M363.2 476.1l7.9 -1.9M372.3 461.6l7.5 -0.8M372.3 461.6l-1.9 5.4M370.4 467l2.5 3.2M372.8 470.2l6.4 -3.2M379.8 460.8l-0.6 6.2M373.9 477.6l9 -1.5M382.9 476.1l-2.2 -7.7M371.1 474.2l1.7 -4M380.8 468.4l-1.6 -1.3M370.6 460.4l-2.3 -2.6M370.6 460.4l-2.2 5.4M367.2 465.3l1.2 0.5M367.2 465.3l0.3 -6.7M367.5 458.6l0.8 -0.8M372.3 461.6l-1.7 -1.2M369.4 454.3l-1.1 3.5M369.4 454.3l10.9 5.3M370.4 467l-1.9 -1.2M361.5 466.2l1.1 9.8M361.5 466.2l5.7 -0.9M383.5 477.5l0.2 -0.8M383.6 476.7l5.4 -0.4M389 476.3l2 2.4M382.4 453l10.9 -1M382.4 453l-1.2 -5.4M381.3 447.5l0.1 -0.2M386.3 445.2l-4.9 2.1M303.1 386.7l-2.8 -0.9M300.4 385.8l-2.9 0M382.4 453l-0 4.7M393.3 452l1.4 0.6M394.7 452.6l0.8 2.7M400 459.1l-2.6 5.4M399.6 468.4l-2.4 -3.1M397.2 465.3l0.2 -0.8M399.9 477.2l-0.2 -8.7M387.1 460.5l-1.3 -1.7M395.5 455.3l4.4 3.7M133.3 424.8l7.5 -4.2M133.3 424.8l-2.4 -4.6M130.9 420.1l1.4 -5.1M132.3 415.1l5.9 2.2M140.8 420.6l-2.5 -3.3M128.8 436.7l-3.8 -1.3M128.8 436.7l2.1 -0.6M130.9 436.2l2.5 -2.2M134.6 432.3l-1.2 1.6M134.6 432.3l-1.3 -7.6M123.1 422.7l1.9 12.7M123.1 422.7l7.8 -2.6M121.3 384l3 0.8M113 476.2l1.5 -5.7M112.1 468.6l2.5 1.9M106.7 477l1.1 -0.4M119.1 470.6l-4.5 -0.1M119.1 470.6l-2 5.5M117.1 476.1l-2.9 0.7M119.1 470.6l2.9 -1.4M121.9 469.3l0.2 -0.3M128.8 436.7l-1.4 9.1M121.6 450.7l-4.8 -5M121.6 450.7l3.3 -1.6M127.5 445.8l-2.6 3.2M125 435.4l-5.3 0.5M116.8 445.6l2.9 -9.7M119.3 477.6l3 0.9M117.1 476.1l2.1 1.5M123.3 477.8l-1.3 -8.5M123.3 477.8l-1 0.7M123.3 477.8l3.9 0.7M154.1 478.9l-9.8 -0.5M155.3 477.8l-1.8 -6.1M155.3 477.8l4.5 0.2M159.8 478.1l2.5 -12.6M161 464.5l-5.8 0M161 464.5l1.1 0.9M155.2 464.5l-1.6 6.4M162.1 465.3l0.1 0.2M153.5 471.7l0.1 -0.8M154.5 464.1l-0.1 -0M153.6 470.9l-6.5 -1.4M154.4 464.1l-7.3 5.5M154.5 464.1l-1.8 -12.8M151.4 463.1l3 1M151.4 463.1l-3.5 -7.7M147.9 455.5l4.8 -4.2M133 474.7l-0 -2.2M122.2 468.9l9.6 3M133 472.5l-1.3 -0.7M300.6 472.8l-7.5 5.3M300.6 472.8l-8.6 1.7M225.8 419.9l3.1 -6.3M225.6 410.9l3.3 2.8M225.6 410.9l-2.4 1.4M222.1 419.4l1.1 -7.2M230.2 422.2l-3.5 10.1M224.5 428.3l2.1 4M225.8 419.9l1 1.7M221.1 426.5l-0.2 -6.8M221.1 426.5l3.4 1.7M222.1 419.4l-1.2 0.3M235.8 421.1l-1.5 -5.8M234.1 422.6l-4 -0.4M234.2 415.3l-4.7 -1.6M229.6 384.5l-4.9 -0.8M215.7 384.6l1.4 2.4M224.7 383.6l-7.6 3.4M166.2 401.5l0.2 -10.3M166.4 391.2l-6.9 1.7M195.7 474.7l-0.6 -0.9M195.1 473.9l-4.3 -1.2M189.2 474.2l1.6 -1.5M204.8 479l-5.8 -3.3M196.9 470.9l-1.2 -8.9M196.9 470.9l5.2 -3.2M195.7 462l5.8 -3.6M202 467.7l-0.6 -9.3M347.1 463.9l3.9 0.9M347.1 463.9l-0 -1.3M347.1 462.7l4.3 -4.2M351.7 460.1l5.8 5.5M357.6 465.6l-6.5 1M351 464.9l-0.1 1.5M351 466.4l0.1 0.2M351 466.4l-5.1 0.6M347.1 462.7l-4.6 0.7M344.4 466.9l-1.9 -3.5M345.8 467l-0.8 0.3M381.3 447.5l-8.4 1.1M369.4 454.3l-0.7 -2.6M372.9 448.6l-4.1 3M367.5 458.6l-3.2 0.9M361.2 455.6l3.1 3.9M361.2 455.6l5.5 -4.7M368.8 451.7l-2 -0.8M387.8 463.1l-2.6 5.2M387.8 463.1l4.2 6M385.2 468.3l6 1.7M392 469.1l-0.6 0.8M391.4 469.9l-0.2 0.1M380.8 468.4l4.4 -0M387.1 460.5l0.7 2.6M397.2 465.3l-5.2 3.7M389 476.3l2.2 -6.3M399.8 477.2l-8.4 -7.3M284.7 403.8l-8.4 1.8M284.7 403.8l-0.3 8.1M284.4 412l-1.9 1.4M281.8 413.2l0.7 0.2M276 406.6l0.4 -0.9M294.7 395.7l-9.5 -4M297.4 400.1l-0.4 0M304.9 408.6l-4.4 -6.9M304.9 408.6l-3.1 2.2M301.8 410.8l-3.8 -1.9M298 408.9l-2 -7.4M297.1 400.1l-1.1 1.4M245.4 386.9l5 -2.1M138.2 417.3l5.8 -4.3M131.4 411.6l2.5 -2.9M106.1 452.3l2.5 -4M103.4 440.9l5.1 7.4M118 454.2l-8.5 -6.2M108.6 448.3l0.9 -0.3M121.6 450.7l-1.6 3.5M116.8 445.6l-7.3 2.4M109.5 448l0 -0M144.7 475l2.3 -2.2M144.7 475l-3.7 -5.4M147 472.9l-0.1 -3.2M146.9 469.7l-2.6 -2.8M155.3 477.8l-1.2 1.1M144.3 478.5l0.3 -3.4M135.9 469.1l-2.9 3.5M135.9 469.1l5.1 0.5M147.2 469.6l-0.3 0.1M190.8 472.7l-5.1 -8.4M141.9 444.7l-1.1 7.1M140.8 451.8l3 0.3M143.8 452l0.5 -0.7M142.3 444.6l2 6.7M133.4 434l15.4 8.2M137.8 443.9l4.1 0.7M142.3 444.6l6.6 -2.4M134.6 432.3l5.5 -1.9M140.1 430.5l9.3 11.6M149.4 442.1l-0.6 0.1M125 461l0.7 0.1M131.7 471.9l-2.3 -5.2M125.7 461.1l3.7 5.6M135.9 469.1l-0.1 -1.7M135.8 467.4l-3.9 -4.3M127 456.7l0.2 -1.5M127 456.7l4.4 -2.6M127.2 455.2l2.6 -1.6M131.4 454.1l-1.6 -0.6M125 461l2 -4.3M124.9 449l1.3 1.9M126.2 450.9l1 4.2M126.2 450.9l3.6 2.6M292.5 440.8l-3.4 2M292.5 440.8l3.7 3.7M296.2 444.5l-9.9 2.4M289 442.8l-3 3.2M286 446l0.2 0.9M286.4 434.8l-0 0.1M286.4 434.8l5.9 -1M286.4 434.9l2.6 8M292.3 433.8l0.2 0.1M283 440.9l3.4 -6M284.2 444.2l1.9 1.8M286.3 447.4l-0 -0.5M286.3 447.4l-2.6 3.1M278.9 448.2l3.3 -3.5M361.2 455.6l-2.2 0.4M364.3 459.5l-2.9 2.9M359.1 455.9l2.4 6.4M361 465.7l0.5 0.5M361 465.7l-0.1 -2.2M361 463.5l0.5 -1.2M342.5 463.4l-0.9 -0.9M341.6 462.5l9.9 -5M361 465.7l-2.5 0.3M361 463.5l-9.2 -7.1M351.5 457.5l0.3 -1M304.1 461.4l-2.2 -4.8M304.1 461.4l1.6 -5.5M305.7 455.9l-3.8 0.7M300.6 472.8l0.9 -0.4M305.4 473.9l0.2 0M256.7 479.6l-0.3 -1.6M248.6 477.4l-1.1 2.8M248.6 477.4l6.5 -0.2M260.1 473.9l-0.1 -0.6M260.1 473.9l5.4 2.2M260 473.2l2.8 -4.6M265.5 476.1l2.8 -2.3M268.3 473.8l1.1 -1.3M269.4 472.5l-6.5 -3.9M260.5 465.3l2.2 2.2M260.5 465.3l6.2 -5.7M266.7 459.6l1.1 5.2M267.8 464.8l-5.1 2.8M269.4 472.5l2.8 -1.3M267.8 464.8l5.4 4.5M262.9 468.7l-0.1 -1.1M273.2 469.3l-1 2M239.5 431l4.1 -5.7M243.6 425.2l3.5 6.1M242 436.8l-1.5 -2M243.6 422.8l-7.8 -1.7M243.6 422.8l0.3 0.3M232.7 429.6l6.8 1.4M234.2 415.3l3.9 -3.8M232.4 407.8l3.9 2M238.1 411.5l-1.8 -1.7M227 388.9l1.4 4.5M245.4 386.9l0.4 2.5M241.9 395.4l3.9 -5.9M237.9 391.6l1.3 2.3M219.1 426.7l-0.4 -0.2M221 419.7l-0.4 -0.1M220.5 419.6l-2.9 4M140.1 430.5l4.6 -3M144.7 427.5l0.7 -2.3M145 422.8l0.4 1.8M145.4 425.2l0 -0.6M192.9 428.2l3.6 -2.7M192.9 428.2l13.8 8.5M196.5 425.5l8 2.3M204.4 427.8l1.5 2.7M205.9 430.5l0.8 6.2M194.7 439.5l-4.2 -10.4M184.1 439.7l-2.7 -8.2M181.4 431.5l0 -0M181.4 431.4l4.8 -4.2M224.6 476.9l8.8 1.4M192.1 450.7l-5.7 4.3M192.1 450.7l9.9 -3.7M201.5 458.4l2 -2.9M186.4 455l0.4 7.4M207.4 439.3l-0.6 -2.5M207.4 439.3l0.2 1.4M190.5 429.1l2.4 -0.8M184.1 439.7l-1.2 2.1M203.1 444.2l-1.1 2.9M168.8 469l1 3.2M204.8 479l5.4 -1.9M322.3 475.4l0.8 2.2M322.3 475.4l3.5 -6.5M325.8 468.8l2.8 -0M328.7 468.8l-0.1 -0M338.9 475.7l0.1 -0.1M338.9 475.6l-1 -6M337.9 469.6l-2.5 -4.2M328.7 468.8l6.6 -3.4M325.8 468.8l-3.5 -2.8M323.7 459.7l-1.3 6.4M323.7 459.7l4.7 1.2M328.7 468.8l-0.3 -7.9M337.9 469.6l6.5 -2.7M341.6 462.5l-4.5 -2.4M335.3 465.4l1.8 -5.3M360 477.2l-2.1 -0.3M358.6 466l-2.3 2.4M356.9 476.9l0.9 0M356.3 468.3l-1.7 0.8M356.9 476.9l-3 -1.3M351.1 466.6l0 0.2M351.1 466.7l3.4 2.3M405.8 422.7l0.5 -0.4M386.3 445.2l1.4 -1.3M381.4 447.3l-1.6 -4.3M379.8 443l1.7 -6.4M381.4 436.6l2.5 -1.3M387.7 443.9l-0.1 -5.9M297.4 400.1l6.9 -5.7M303.1 386.7l3.3 2.6M294.7 395.7l2.4 4.4M263.4 417.9l0.3 -1.4M263.4 417.9l-6.2 1.9M263.8 416.5l-7.4 -4.6M257.2 419.8l-5.4 -1.6M251.9 418.2l0.5 -5.6M256.4 411.8l-1 0M264.6 415.8l-0.8 0.7M261.5 406.5l-5.1 5.3M283 423.8l-1.8 7M281.2 430.8l5.2 4M292.5 426.3l-0.2 7.5M292.5 426.3l-5 -2.7M283.9 423l3.6 0.6M289.7 411.5l3.2 2.4M289.7 411.5l-5.3 0.5M282.5 413.4l1 4.5M292.9 413.9l-1.4 3.4M283.9 423l-0.4 -5.1M287.5 423.7l4.1 -5.9M291.6 417.7l0 -0.4M239.2 452.5l-0.5 -1.1M239.2 452.5l11.1 3M245.2 443.8l5.8 4.5M251 448.3l-0.7 7.1M247.4 440.5l11.4 0.3M258.9 440.8l0.4 -2.5M274.1 407.1l-3 -5.6M274.1 407.1l-4.2 1.9M269.9 409.1l-1.9 -2.1M275.1 416.1l6.7 -2.8M275.1 416.1l-5.4 -5.8M269.6 410.3l0.2 -1.2M276 406.6l-1.9 0.5M284.9 403.4l-5.3 -5.1M279.7 398.3l5.3 -6.5M285 391.8l0.1 -0.1M284.7 403.8l0.2 -0.4M276.4 405.7l0.4 -6.6M276.8 399.1l2.9 -0.7M289.7 411.5l3.9 -8.8M293.6 402.7l-6.1 -0.5M293.6 402.7l2.4 -1.2M403.6 456.6l0.3 -0.5M400.3 449.3l-4.6 0.7M395.7 450l0.1 -2.3M401 444.4l2.4 2.2M395.7 447.7l0.3 -0.5M402.7 457.4l-2.4 -8.1M403.9 446.8l-0.5 -0.2M394.7 452.6l0.9 -2.6M388.8 443.8l7 4M400.5 441.6l-1.5 -2.2M400.5 441.6l0.5 2.8M394.8 440.5l1.3 -1.6M394.8 440.5l1.2 6.7M399 439.4l-2.9 -0.5M388.8 443.8l6.1 -3.2M102.4 431.7l-0.7 -0.1M102.4 431.7l3.4 -2.7M105.8 429l-2.8 -7.2M100.7 406.3l5.1 -4.6M100.7 406.3l3.7 6.6M123.1 422.7l-1.4 -0.9M131.4 411.6l-3.2 -0.6M121.7 421.8l6.5 -10.8M149.3 401.3l-7.9 -2.9M145.5 389.9l-6.7 4.2M145.5 389.9l-1.7 -4.1M143.8 385.8l-7.5 -0.1M135.3 391l0.2 -1.8M135.3 391l0.8 2.9M136.1 393.9l2.7 0.2M136.3 385.7l-0.9 3.5M124.9 385.3l4.5 -0.2M124.9 385.3l1.1 5.9M126 391.2l5.1 -1.8M131.2 389.4l-1.1 -3.2M129.4 385.2l0.7 1M124.3 384.8l0.6 0.6M135.3 391l-4.1 -1.5M135.4 389.2l-5.3 -3M166.4 391.2l3.6 -2.4M164.9 384l-3.3 0.4M164.9 384l5 3.8M159.5 392.8l-1.1 -1M169.9 387.8l0.2 1M158.3 391.8l3.3 -7.4M113.1 437.7l-1.7 4.4M111.4 442l-7.4 -3M117.6 435.2l2.2 0.8M109.5 448l1.9 -6M102.4 431.7l1.9 6.2M105.8 429l6 -1.4M168.8 469l3.3 -3.4M181.7 466.3l-7.7 7.4M181.7 466.3l0.3 -0.8M182.1 465.5l-9.9 0.1M292.5 426.3l2.6 -1.7M298.5 434.9l3 -3.1M298.5 434.9l-6.1 -1M301.5 431.9l-2.4 -5.2M299.1 426.7l-4 -2M291.6 417.7l4.2 5.4M287.4 448.3l6.3 0.7M288.4 450l5.5 1.6M293.8 448.9l0.1 2.6M297.4 445.2l-1.2 -0.7M297.4 445.2l-3.6 3.7M286.3 447.4l1.1 0.8M283 452.2l0.7 -1.6M285.5 458.2l6.4 0.7M292 457.6l-0.1 1.3M294.1 453.1l-0.2 -1.6M318.5 466.7l-4.3 -1.4M314.3 465.2l1.6 9.3M318.5 473.8l-2.7 0.7M321.5 454.9l2.1 4.8M321.5 454.9l-1.5 -0.3M320 454.6l-5.5 7.9M322.4 466.1l-3.8 0.6M313.9 465l0.6 -2.5M313.9 465l0.4 0.2M322.3 475.4l-3.8 -1.6M313.9 475.8l2 -1.3M323.9 453.4l7.6 -0.2M324.9 447.8l8.6 -0.9M331.5 453.2l2.1 -6.3M323.9 453.4l-2.3 1.4M328.4 460.9l6.8 -2.5M331.5 453.2l3.7 5.2M337.1 460.1l-0.1 -0.5M335.1 458.4l1.8 1.1M326 443.2l-1.8 0.8M326 443.2l9 1.2M324.9 447.8l-0.8 -3.7M333.6 446.9l1.4 -2.5M257.1 470.4l-5.5 -2.8M257.1 470.4l0.1 0.2M257.3 470.6l-3.9 2.7M249.3 469.5l1.6 -1.8M251 467.6l0.7 -0.1M258.3 464.1l0.9 0.8M259.2 464.9l-2.1 5.5M259.2 464.9l1.3 0.4M260 473.2l-2.8 -2.6M255.1 477.2l-1.7 -3.9M256.5 478l3.6 -4.1M292 474.5l-0.8 -1.3M301.4 472.4l-2.1 -1.8M299.4 470.7l-4.6 -0.7M294.8 470l-3.6 3.2M283 478.2l1.2 -5M284.2 473.2l6.5 -0.1M291.2 473.2l-0.4 -0.2M275.5 478.1l7.6 0.1M275.5 478.1l-0.9 1.5M268.3 473.8l1.9 4.9M274.6 479.6l-4.4 -0.9M225.2 407.9l0.8 -2.1M225.2 407.9l-4.4 -0.6M226 405.8l-7 -4.7M223.2 412.2l-5.2 0.9M218 413.1l0.5 -5.4M241.1 410.4l-1.4 -3.4M241.1 410.4l1.6 0.3M242.7 410.7l5.5 -2M240.9 401.6l7.3 7.1M240.9 401.6l-1.2 5.4M248.1 408.7l0 -0M243.6 422.8l-0.9 -12.2M243.9 423.1l5.4 -1.1M249.3 422l2.6 -3.8M240.8 400.7l1.7 -4.6M240.8 400.7l0.1 0.9M248.4 407.8l-0.3 0.9M248.4 407.8l-0.2 -9M242.5 396.1l2.8 1M248.2 398.8l-2.9 -1.8M245.3 397l4.8 -7.2M250.4 384.7l2.7 4M253 388.7l-2.9 1.1M215.7 384.6l-9.3 0.3M206.4 384.9l-0.2 -1.1M237 395.7l-5.5 2.8M237 395.7l-1.3 7.3M231.6 398.5l-1.7 4.1M233.9 403.6l1.3 -0.2M233.9 403.6l-2.6 -0.3M231.2 403.4l-1.4 -0.8M235.7 402.9l-0.5 0.5M239.1 393.9l-2.1 1.7M240.8 400.7l-5.1 2.3M228.8 402.8l-4.9 -5.2M228.8 402.8l1 -0.2M224 397.6l4.4 -4.2M239.7 406.9l-4.5 -3.5M226 405.8l2.9 -3M215.2 416l0.2 0.4M215.2 416l-4.5 0.5M208.6 418.7l2 -2.2M214.6 421.9l-1.4 2.2M212.3 424.4l0.9 -0.3M218 413.1l-2.5 1.9M215.6 415l-0.4 1M220.5 419.6l-5.1 -3.1M204.2 408.6l6.4 7.9M204.2 408.6l-9.2 3.7M195 412.3l9.4 8.7M204.4 420.9l4.2 -2.3M204.4 420.9l0 6.8M205.9 430.5l6.3 -6.1M218.6 426.5l-2.3 0.2M216.4 426.7l-3.2 -2.6M207.4 439.3l9 -12.6M160 415.9l-0.1 -0M160 415.9l-1 12.4M160 415.9l-5.1 5.6M154.9 421.5l2.1 4.8M159 428.3l-2 -2M157 426.3l0 0.1M150.4 423l6.6 3.3M154.1 421.2l0.7 0.3M144.7 427.5l10.2 8.9M160.6 430.7l-1.5 -2.4M145.4 425.2l11.6 1.1M160.5 431.4l-5.6 5M150.4 423l-5 1.6M149.3 401.3l0.5 1.5M161.1 399.3l-6.2 3.8M150.3 392l2.1 -1.1M158.3 391.8l-6 -0.9M154.9 403.2l-5.1 -0.4M152.8 442.4l0.6 -1.2M154.9 436.4l-1.5 4.6M153.3 441.2l0.1 -0.3M166.2 401.5l2.8 2M159.1 409.5l-4.2 -6.3M196.8 398.1l-9 -1M196.8 398.1l4.5 -4.4M201.2 393.7l-9.2 -6M192 387.7l-4.6 9M187.4 396.7l0.3 0.4M170.1 388.8l5.2 5.1M175.9 395.1l-0.1 -0.4M175.3 393.9l0.6 0.8M160.6 430.7l4.6 -5.6M160 415.9l8.5 1.8M168.5 417.7l-3.3 7.4M168.3 435.4l-7.8 -4M165.2 425.2l7.3 2.9M170.2 437.4l-1.9 -2M181.4 431.4l-6.2 -5.1M172.4 428l2.7 -1.7M239.6 475.9l3.3 0.6M239.6 475.9l7.5 -5M242.9 476.5l4.1 -3.3M247.1 471l-0.1 2.2M233.4 478.3l1.3 -2.5M234.8 475.8l4.8 0.1M247.1 470.4l-0.1 0.5M247.1 470.4l-3.9 -2M235.2 473.5l8.1 -5.1M210.3 477.1l0.2 -1M224.6 476.9l-1.6 -3.7M216.5 471.5l6.5 1.7M201.4 473.7l2.8 -4.9M201.4 473.7l4.7 -2.5M206.1 471.3l-1.9 -2.4M204.2 468.8l0 0M199.1 475.7l2.3 -2M202 467.7l2.2 1.1M210.4 476.1l-1.3 -2.5M209.2 473.6l-3.1 -2.4M203.4 455.6l3.9 2.8M204.2 468.8l5.7 -4.9M207.3 458.4l2.6 5.6M209.2 473.6l1.4 -9M216.5 471.5l-0.8 -5.7M174.3 477.8l-0.2 -4M353.9 475.6l-0.9 -0.1M351.1 466.7l-0.7 4.3M353 475.5l-2.5 -4.4M345 467.3l0.2 3.3M403.7 435.2l2.1 -5.8M399 439.4l3.6 -4M403.7 435.2l-1.2 0.2M387.6 438l2.8 -2M395.2 437.3l-4.7 -1.3M405.6 389.7l-6 -3.4M399.6 386.3l-0.4 -1.9M304.9 408.6l4.2 0.3M300.4 401.7l8.7 0.6M309.3 408.5l-0.1 -6.2M304.4 394.3l6.2 6.2M309.2 402.3l1.4 -1.8M273.7 423.1l2.2 1.2M279.8 423.3l-5.7 -5.3M274.2 418l-1.2 0.9M273 418.9l-0.9 2.5M272.7 432.5l3.2 -8.2M272.7 432.5l-0.4 -0.6M272.3 431.8l1.5 -8.8M270.8 429.7l1.5 2.1M283 423.8l-3.2 -0.6M269.6 410.3l-4.7 5.3M265 415.6l8.1 3.3M264.2 420.9l3.2 2M264.2 420.9l-0.7 -3M265 415.6l-0.4 0.2M268.5 427.8l-1.1 -4.9M295.4 412.7l-1.4 1.3M295.4 412.7l6.4 0.9M294 414l5.1 5M299.1 419l3.1 -0.6M301.9 413.6l1.1 4.1M303 417.7l-0.8 0.7M298 408.9l-2.6 3.8M292.9 413.9l1 0.1M301.8 410.8l0.1 2.8M295.7 423.1l3.3 -4.1M303.9 424.5l-4.8 2.2M303.9 424.5l-1.7 -6M250 459.6l1 8.1M250 459.6l0.7 -0.9M250.6 458.6l7.6 5.2M271 401.5l0.4 -5.1M268 407l-4 -2.8M264 404.2l7.5 -7.7M107.9 419.7l-0.6 -4.3M103.1 421.8l4.9 -2.1M111.8 427.6l1.1 -3.2M104.4 412.9l7.2 -4.7M111.6 408.1l2.5 6M121.7 421.8l-4.2 -1.9M105.8 401.6l2.1 -1.4M111.7 406l-3.8 -5.7M106.4 388.9l4.2 4.3M120.6 384.2l-9.7 8.9M125.9 392.7l-5.4 4.2M119.1 396.8l-8.2 -3.6M110.9 393.2l-0.3 0M119.3 413.2l-2.9 -7.1M116.4 406.2l1.4 -1M117.8 405.2l6.4 2M124.1 407.2l1.3 2.9M117 415.7l2.3 -2.5M111.7 406l4.7 0.2M119.1 396.8l-1.3 8.4M128.9 400.5l5.6 4.6M128.9 400.5l1.8 -5.4M134.5 405.2l1.1 -10.9M130.7 395.1l4.9 -0.8M124.1 401l4.8 -0.4M133.9 408.7l1 -2.6M134.9 406.2l-0.4 -1M125.9 392.7l4.8 2.4M137.4 405.3l-2.4 0.8M137.4 405.3l4.1 -7M136.1 393.9l-0.5 0.4M152.3 390.9l0.4 -3M186.4 455l-2.3 -1.3M184.1 453.7l-1.8 -11.3M153.3 441.2l15.5 1.3M153.4 441l15.9 -0.5M168.8 442.5l0.5 -2M184.1 453.7l-5.3 -0.4M178.8 453.3l-0.1 -9M182.3 442.4l-2.8 0.8M179.5 443.2l-0.8 1.1M170.2 437.4l0.1 0.4M179.5 443.2l-9.3 -5.5M152.8 442.4l0.3 1.1M168.8 442.5l-0.2 3M168.6 445.5l-15.6 -2M155.1 464.4l3.4 -13.5M152.7 451.3l1.8 -3.4M158.5 450.9l-4 -2.9M147.9 455.5l-2 -0.1M146 455.4l-2.2 -3.4M144.3 451.3l8.8 -7.4M154.5 447.9l-1.4 -4M153.1 443.9l-0 -0.4M167.2 462l1.9 -0.7M167.2 462l1.8 -3.2M162.1 465.3l5.1 -3.3M172.1 465.6l0 -2.3M131.9 463.1l-0.6 -0.7M137.7 463.9l-0.8 -4.7M136.9 459.1l-1.3 -0.1M135.5 459l-4.2 3.3M125.7 461.1l2.2 -0.1M128 460.9l3.4 1.4M135.8 451.2l0.7 0.5M135.8 451.2l-1.7 0.1M136.5 451.8l-2.6 5.9M134.2 451.3l-2.5 2.8M131.7 454.1l0.2 2.6M137.8 443.9l-2 7.3M140.8 451.8l-2.6 1M138.2 452.8l-1.7 -1M127.5 445.8l6.7 5.5M139 457.1l-2.1 2.1M135.5 459l-1.6 -1.4M137.7 463.9l1.9 -0.6M151.4 463.1l-5.1 0.5M146.3 463.6l-1.2 1.2M333.3 436.6l-3.7 -1.2M326 443.2l1.4 -6.8M336 443.6l-1 0.8M337 459.5l7.3 -7.3M344.2 452.2l-4.1 -7.9M351.8 456.4l0 -2.4M344.2 452.2l7.6 1.8M366.7 450.8l-4.7 -4.8M357.8 445.6l4.2 0.4M357.8 445.6l-1.7 0.4M356.1 445.9l-4.2 8M351.9 453.9l-0.1 0.1M320 454.6l-2.3 -1.9M309.8 455.5l4.7 7.1M309.8 455.5l-0.1 -1.4M309.6 454.1l3.4 -1.1M317.7 452.7l-4.3 0.2M313 453l0.4 -0.1M307.1 452.4l-0.4 -1.6M307.1 452.4l-6.7 1M300.4 453.4l-1.2 -2.2M299.2 451.1l0.3 -4.1M300 455.7l0.5 -2.3M300 455.7l2 0.9M305.7 455.9l2.3 -2.4M300 455.7l-4.8 4.4M294.1 453.1l5.1 -2M295.2 460.1l-3.1 -1M291.9 458.9l0.2 0.2M297.4 445.2l1.3 0M298.5 434.9l2.9 5.3M299.5 447l-0.5 -1.3M298.7 445.2l0.3 0.5M297.2 461.9l7 0.4M298.1 465l9.8 3.1M308.4 466.8l-0.6 1.3M295.2 460.1l1.3 1.3M304.1 461.4l0 0.9M296.5 461.4l0.7 0.4M305.6 473.9l2.3 -5.8M299.4 470.7l-1.3 -5.7M309.8 455.5l-3 8.7M309.6 454.1l-1.6 -0.6M313.9 465l-5.4 1.8M290.3 466.7l0 0.1M290.3 466.7l4.4 0M290.3 466.8l4.1 2.4M294.7 466.7l-0.3 2.5M284.2 473.2l-0.3 -0.6M290.8 473.1l-0.4 -6.3M290.2 466.6l-6.3 6M290.2 466.6l0.1 0.1M292.1 459.1l-2.3 5.5M296.5 461.4l-1.8 5.3M289.8 464.6l0.4 2M294.8 470l-0.4 -0.8M285.9 465.7l-2.5 6.1M285.9 465.7l-4.9 -4.4M283.4 471.8l-6.9 -4.7M276.5 467.2l1.3 -5M289.8 464.6l-3.9 1.1M284 472.6l-0.5 -0.8M285.5 458.2l-4.4 3.1M273.2 469.3l3.3 -2.1M265.5 476.1l-0 0.1M212.8 394l2.3 -3.7M217.5 388.4l-2.4 2M204.4 394.9l8.4 -0.9M217.7 399.8l-11.4 -0.6M217.7 399.8l0.4 -0.9M204.4 394.9l-1.4 -1.5M203 393.5l1.6 -3.8M204.6 389.7l10.5 0.7M224 397.6l-3.8 -0.7M217.1 387l0.4 1.4M219 401.1l-1.3 -1.3M217.7 399.8l-0 -0M206.4 384.9l-1.1 2.2M204.6 389.7l0.7 -2.6M253 388.7l2.7 1.3M257 389.2l-1.3 0.9M201.2 393.7l1.7 -0.2M192 387.7l-1.3 -2.7M186.8 396.5l0.7 0.2M186.8 396.5l-3 -8M190.7 385l-6.9 3.6M175.9 395.1l3.1 1.7M186.8 396.5l-7.7 0.3M175.8 394.7l6.6 -6M183.8 388.6l-1.3 0.1M159.1 409.5l-1 4.1M158.1 413.7l-3.1 0.1M155 413.7l-6.7 -8.4M144 413l1.4 -0.1M137.4 405.3l10.4 0.4M145.4 413l2.4 -7.2M147.8 405.7l0.5 -0.5M196.5 425.5l-1.8 -12.7M194.9 412.3l-0.3 0.5M239.2 452.5l-0.1 4.6M250.3 455.4l0.8 1.5M250.6 458.6l0.4 -1.7M243.3 468.4l-1.9 -6.1M241.4 462l-0 0.2M219.1 426.7l-3.7 12M209.4 440.9l5.9 -2.2M215.4 438.7l-0.1 0.1M177.6 475.2l1.8 2.5M177.6 475.2l3.8 -2.5M181.7 466.3l-0.2 6.4M189.2 474.2l-4.1 3M185.8 464.3l-3.5 1.1M348.8 478.4l2.8 -2.4M342.6 473.9l1.6 -1.3M348.3 479.3l0.5 -0.9M353 475.5l-1.3 0.5M345.2 470.6l-1 2M357.8 445.6l3.3 -12M362 446l4.4 -5.2M361.1 433.6l3 3.2M366.3 440.8l3.8 -0.7M405.8 422.7l-2.2 1.8M405.8 429.4l-1.7 -1.7M403.6 424.6l0.6 3.1M395.2 437.3l1 -6.8M398.7 430.9l-2.5 -0.4M399.2 384.4l-9.8 2.7M386.7 383.7l2.6 3.4M342.4 427.3l-2.2 1.2M340.2 428.5l3.8 8.7M343.9 437.2l5.9 -7.1M349.8 430.1l0.1 0M346 419.2l-3.6 8.1M349.2 418.7l0.6 11.4M339.3 428.5l-4.2 -3.3M334.7 418.5l-0.4 1M335.2 425.2l-0.9 -5.7M346 419.2l-4.7 -4.6M333.3 436.6l6 -8.1M340.1 444.3l4.6 -3.9M344.7 440.4l-0.8 -3.2M344.7 440.4l2.9 -0.2M349.9 430.1l0.2 0.1M350.1 430.2l-2.4 10M356.1 445.9l-3.9 -4.5M352.2 441.4l-4.5 -1.2M334.7 418.5l-3 -4.9M341.3 414.6l-0.2 -3.9M341.1 410.6l-4.4 -1.3M331.6 413.7l5.1 -4.3M249.3 422l0.6 0.7M247.1 431.3l2.3 0.8M242.6 439.4l2.5 2.6M250.6 435.2l-0.1 -2.5M259.2 438.3l0.1 -0.2M259.2 434.9l-8.6 -2.2M250.6 432.8l0.1 -0.1M257.2 419.8l0.6 4.5M249.9 422.7l2.3 2.1M257.8 424.3l-5.6 0.6M264.2 420.9l-1.7 2.7M257.8 424.3l2.1 1.4M250.7 432.7l3.2 -3.4M252.2 424.8l1.7 4.4M259.2 434.9l0.1 -0.7M253.9 429.3l2.5 0.7M259.3 434.2l-3 -4.3M259.9 425.6l-0 0.1M259.9 425.7l-3.6 4.2M254 447.6l4.5 7.9M254 447.6l3.9 -2.5M258 445.1l3.5 10.4M258.6 455.5l2.2 0.2M251 448.3l3 -0.7M251.1 456.9l7.5 -1.4M258.3 463.8l2.4 -8M245.2 443.8l-0.1 -1.8M258.9 440.8l0.5 2.2M259.4 443l-0.1 0.2M182.3 465.3l-6.1 -6.5M178.8 453.3l-0.1 0M178.7 453.3l-2.5 5.5M172.2 463.3l1.2 -3.9M176.1 458.8l-2.8 0.6M140.4 462.3l-0.2 -4.8M143.3 458.3l-3.2 -0.8M146.3 463.6l-2.5 -3.7M146 455.4l-2.7 2.9M139 457.1l1.1 0.5M335.2 425.2l-7.9 2M329.6 435.4l-2.4 -6.5M327.3 427.2l-0.1 1.6M319.8 412.3l8.9 -0.3M319.8 412.3l-0.8 2.5M319 414.8l3.8 6.2M329 412.5l-0.2 -0.5M329 412.5l-3.3 6.9M325.7 419.4l-2.8 1.6M322.8 420.9l-0 -0M334.2 419.5l-8.6 -0.2M331.6 413.7l-2.7 -1.2M323.5 423.5l-0.7 -2.6M323.5 423.5l0.2 0.3M303.9 424.5l0 0M308.4 430.2l-4.5 -5.6M309.8 446.2l0.1 -0.1M309.8 446.2l-2 0.9M309.9 446.1l-3 -6.8M307.8 447.1l-1 -1M306.8 446.1l-1.5 -6M306.9 439.3l-1.5 0.8M313 453l-3.2 -6.8M313.4 452.9l-2 -7.5M311.4 445.5l-1.6 0.6M306.7 450.8l1 -3.7M299 445.7l7.8 0.4M301.4 440.3l3.9 -0.2M308.4 430.2l1 0.3M308.9 437.9l0.6 -7.5M308.9 437.9l-2 1.4M217 406.6l0.5 -6.4M217 406.6l-4.3 1.6M217.5 400.2l-7.5 6.3M212.7 408.2l-2.8 -1.7M218.5 407.7l-1.5 -1.1M217.7 399.8l-0.2 0.4M206.5 406l-0.2 -6.8M204.2 408.6l2.3 -2.6M257 389.2l2.7 -0M248.2 398.8l3.1 -1M255.7 390l-0.2 3.1M251.3 397.8l4.2 -4.7M152.3 418.6l-6.8 3M152.6 415.4l-6.4 -0.9M145.5 421.5l0.7 -7.1M160 415.9l-1.9 -2.2M155 413.7l-2.4 1.7M145 422.8l0.5 -1.2M145.4 413l0.8 1.5M182 405.6l5.9 -5.2M182 405.6l-0.3 2.5M181.7 408.1l13 3.9M187.9 400.4l6.6 10M194.5 410.4l0.2 1.6M187.8 397.1l0.1 3.3M179.1 396.8l2.9 8.8M196.8 398.1l-2.3 12.3M194.9 412.3l-0.2 -0.3M177.8 386l0.8 -0.7M169.9 387.8l2.7 -4M175.3 393.9l2.6 -7.9M182.5 388.7l-0.8 -1.4M178.7 385.3l1.3 -0.2M226.6 432.3l0.1 0.2M232.7 429.6l-4.2 3.3M226.7 432.5l1.8 0.4M215.4 438.7l8.3 -4.1M215.3 438.7l11.7 5.7M223.6 434.6l3.4 9.9M240.5 434.8l-9.7 1.5M228.5 432.8l2.3 3.5M242.6 439.4l-10.4 1.8M230.8 436.3l1.4 5M209.4 440.9l5 5M214.4 446l4.9 11.2M365.6 428.9l2.1 6.3M365.6 428.9l1.8 -0.8M367.4 428.1l1.5 0.1M368.9 428.3l4.3 7.4M367.7 435.2l4.3 2.9M373.2 435.6l-0.8 2.3M372.4 437.9l-0.3 0.2M364.1 436.7l3.7 -1.5M379.8 443l-7.4 -5.1M377 433.7l-3.8 2M383.9 435.3l0.9 -4.1M377 433.7l1.7 -5.7M384.9 431.2l-6.1 -3.2M368.9 428.3l8.2 -4.6M378.8 428l-1.7 -4.3M394.8 399.6l-6.7 -5.8M394.8 399.6l0.2 -8.6M388.1 393.8l1.5 -5.8M395 391l-5.4 -3M378.1 387.7l9.3 6.6M389.4 387.1l0.3 0.9M398.1 390.4l1.5 -4.1M398.1 390.4l-3 0.6M365.9 386.6l-0.1 -0.1M358.3 421.8l-5.4 -1.2M352.9 420.6l-1.7 9.5M360.2 430.7l0.5 -0.7M360.2 430.7l-4.3 1.2M355.9 431.9l-4.7 -1.8M366 417.3l1.4 10.8M366 417.3l-4.5 0.9M365.6 428.9l-4.9 1.1M349.2 418.7l1 -0.2M350.2 418.5l2.7 2.1M361.1 433.6l-0.9 -2.9M352.2 441.4l3.7 -9.5M358.4 409.8l-4.4 -0.7M358.4 409.8l0.6 4.5M353.9 409.1l-2.1 1.9M361.5 418.2l-2.6 -3.9M350.2 418.5l1 -2.3M341.1 410.6l2.1 -2.9M343.2 407.7l8.6 3.3M331.4 400.1l-0.1 5.1M331.4 400.1l4 -2M333.2 406.2l-1.9 -1M333.2 406.2l7.8 -4.5M341 401.8l-2.3 -2.6M336.7 409.4l-3.5 -3.2M329.1 407.1l2.2 -1.8M329.1 407.1l-0.4 5M343.2 407.7l0.6 -3.9M343.8 403.8l-2.8 -2.1M320.6 410.5l1.8 -6.4M322.5 404.1l1.1 -0.5M319.7 411.4l0.9 -1M319.7 411.4l0.1 0.8M329.1 407.1l-3 -0.6M324.1 396.2l1.7 0.3M324.1 396.2l-0.6 7.3M325.8 396.5l5.6 3.6M329.2 386.6l-7.6 3.6M320.9 389.2l0.7 1M263.6 431.7l-1.5 0M262 428.9l3 -1.2M266.3 428.1l-1.3 -0.4M259.3 434.2l2.8 -2.6M259.9 425.7l2.1 3.2M268.5 427.8l-2.3 0.3M169.2 457.6l2.6 0.4M169.2 457.6l-4.7 -2.7M171.8 458l1.9 -6.7M164.2 453.2l5 -4.8M169.3 448.4l1.8 0.6M169 458.8l0.2 -1.3M173.3 459.4l-1.5 -1.3M161 464.5l3.5 -9.6M178.7 453.3l-5 -2M168.6 445.5l0.6 2.8M178.8 444.2l-7.7 4.7M323.5 423.5l-8.8 7M311.3 429.5l0.5 -2.5M314.6 423.5l-2.8 3.4M319 414.8l-6.1 1.1M314.6 423.5l-1.7 -7.7M327.4 436.4l-1.6 0M323.7 423.8l-3.5 8.5M322.6 432.2l-2.4 0.1M314.7 430.6l3.2 2.7M320.2 432.3l-2.3 1M271.6 387.6l1.3 6M271.6 387.6l-3.8 -1M267.8 386.6l-2.6 5.7M266 394l-0.8 -1.7M266 394l5.6 2.2M271.9 396.1l-0.3 0.1M274.6 392.5l-1.7 1M265.7 383.5l2 3.1M276.8 399.1l-4.9 -3M248.4 407.8l7.9 -4.5M251.3 397.8l4.7 4M256 401.8l0.3 1.6M255.4 411.9l1.4 -8.2M256.8 403.7l-0.5 -0.4M261.5 406.5l0.5 -1.2M256.8 403.7l5.3 1.7M264 404.2l-0 -0M262 405.4l1.9 -1.2M266 394l-0.4 0.3M265.6 394.3l-2.3 8.4M264 404.2l-0.6 -1.5M169.2 404.9l3.3 5.9M172.5 410.8l6 -1M181.7 408.1l-2.9 1.6M178.8 409.7l-0.3 0.1M168.5 417.7l1.6 -0.8M175.2 426.3l-0.7 -3.4M170.2 416.9l4.3 6M172.5 410.8l-1.4 4.5M170.2 416.9l0.9 -1.6M231.6 443.4l-3.9 1.6M227.7 445l-2.2 3.9M229.9 452.4l3.7 -0.1M229.9 452.4l-4 -1.1M237.2 450.8l-3.7 1.5M232.3 441.3l-0.7 2.1M227 444.5l0.7 0.5M238.8 451.3l-1.6 -0.5M214.4 446l11 2.9M231.4 465.1l-7 1.7M231.4 465.1l1.2 1M233.2 469.1l-0.7 -2.9M233.2 469.1l-9.7 2.7M223.5 471.7l0.8 -4.9M235.2 473.5l-2 -4.5M241.3 462.2l-8.8 3.9M215.6 465.8l4.8 -3.9M220.4 461.9l3.9 4.9M222.9 456.3l-2.2 1.8M222.9 456.3l6.4 1M229.3 457.3l1.6 1.1M220.8 458.1l0 0.3M220.8 458.4l10.2 3.8M230.9 458.4l0.8 1.9M225.9 451.3l-2.9 5M229.9 452.4l-0.6 4.9M233.5 452.3l-2.7 6.1M220.4 461.9l0.4 -3.5M231.4 465.1l-0.4 -3M239.1 457.1l-7.4 3.2M395.2 400.4l-0.4 -0.8M403.2 395.9l-0.8 0.8M399.5 411.2l7.1 3.9M398.6 408.7l6.2 -2.4M398.4 416l1.1 -4.8M397.1 417l-7.2 -4.8M394.8 406.5l-4.4 3.9M406.6 417.1l-5.3 1.1M406.6 417.1l0.1 -2M401.3 418.2l-2.9 -2.2M394.8 406.5l-0.5 -3.2M395.2 400.4l-0.9 2.9M402.4 396.8l2.3 9.5M391 423.5l4.2 -3.4M395.2 420.1l5.9 1.3M392.6 426.3l10 -2.2M392.6 426.3l-0.9 -0.5M401 421.4l1.5 2.8M389.4 428.8l2.3 -3M377.4 422.9l7 -3.3M384.3 419.6l2.4 0.1M386.8 419.7l4.2 3.8M397.1 417l-1.9 3.1M389.9 412.3l-3.2 7.4M401.3 418.2l-0.2 3.2M403.6 424.6l-1 -0.4M396.2 430.5l-3.6 -4.2M366 417.3l0.3 -0.2M358.4 409.8l2.6 -1.7M366.3 417.1l-5.4 -9M374.9 419.8l-7.3 -3.3M374.9 419.8l1.2 -6.9M376.1 412.9l-3.3 -2.2M372.8 410.7l-2.9 -0.9M377.4 422.9l-2.5 -3M366.3 417.1l1.3 -0.6M384.3 419.6l-4.1 -8.4M390.3 410.4l-3.7 -1.3M380.2 411.2l0 -0.2M386.6 409l-6.4 2M372.8 410.7l6.2 -3.9M380.3 411l-1.3 -4.3M367.7 394.2l-7.4 -1.6M367.7 394.2l-1.7 -7.6M365.8 386.5l-7.2 2.5M360.2 392.6l-1.5 -3.6M358.2 388.8l0.5 0.2M317.1 407.5l1 -1.4M322.5 404.1l-2.5 0.3M321.9 394.6l-0.1 -0.4M321.9 394.6l-3.6 3.2M321.8 394.2l-10.8 -1.5M317.5 398.2l-3.8 1.6M311 392.7l1.7 6.9M312.6 399.6l1.1 0.1M319.9 404.3l-1.7 -6.5M318.1 406.1l-0.6 -7.9M316.4 407.2l-2.7 -7.5M316.4 407.2l0.7 0.3M310.5 400.5l2.1 -0.9M320.9 389.2l-1.2 -0.7M311 392.7l-2 -2.5M319.7 388.5l-10.7 1.7M306.4 389.3l0.7 -0.1M307.1 389.2l1.9 1M266.6 447.6l6.6 4.1M267 457.4l6.1 -2M273.2 451.7l0.2 2.8M262.8 455.5l1.3 -4.4M273.4 454.5l-0.3 0.9M266.7 459.6l0.3 -2.2M277.8 462.2l-4.7 -6.8M261.5 455.5l1.3 -0M259.3 443.2l4.8 7.8M283 452.2l-9.6 2.3M308.3 421.9l1.7 1.2M308.3 421.9l-3.2 -4.6M310 423.1l1.9 -7.5M310 414.7l1.9 1M303.9 424.5l4.4 -2.6M309.5 430.4l1.8 -0.9M311.8 427l-1.8 -3.9M312.9 415.8l-0.9 -0.2M309 408.9l1 5.8M321.3 438.1l-3 -3M321.3 438.1l-0.2 4.7M318.3 435.2l-5 5.7M321.1 442.9l-3.9 2M317.2 444.9l-2.9 -1.6M314.3 443.3l-1.1 -2.5M325.8 436.4l-4.5 1.7M324.1 444.1l-3.1 -1.2M308.9 437.9l4.4 2.9M317.7 452.7l-0.5 -7.8M255.5 393.1l0.4 0.4M265.6 394.3l-1.6 0.8M255.8 393.5l8.1 1.6M180.6 416.7l2.8 -0.3M180.6 416.7l-1.3 1.5M182.3 421.3l3.8 1.1M186.1 422.4l1.4 -2.6M187.5 419.8l-4.2 -3.3M178.8 409.7l4.5 6.8M171.1 415.3l8.2 3M174.5 422.9l7.8 -1.6M186.2 427.3l-0.1 -4.9M378.1 387.7l-1.2 4M368.1 394.9l5.6 0.1M376.9 391.8l-3.1 3.2M366.7 398.9l0.2 7.2M366.7 398.9l7.5 4.9M367 406.1l2.2 1.4M374.3 403.8l-5.1 3.7M368.1 394.9l-1.5 2.5M366.6 397.3l0.1 1.5M376.6 402.3l-2.8 -7.4M376.6 402.3l-2.4 1.5M360.9 408.1l0.1 -0.2M369.9 409.8l-0.7 -2.3M361.1 407.9l4.9 -1.7M366 406.2l0.9 -0.1M366.6 397.3l-6.1 1.7M360.2 392.6l-2.3 3.5M357.9 396.1l2.6 3M361.1 407.9l-2.6 -5.7M366 406.2l-5.9 -6.1M358.5 402.2l1.6 -2.1M360.5 399.1l-0.4 1M329.2 386.6l2.8 0.3M332 386.9l1.5 3.1M335.4 398.2l-0.1 -7M316.8 383.9l1 2.3M317.8 386.3l-8 -0.5M319.7 388.5l-1.9 -2.3M307.1 389.2l2.7 -3.5M259.4 443l5.3 1.2M266.6 447.4l0.1 0.3M264.7 444.2l0.5 0.3M266.6 447.4l4.7 -2.3M273.2 451.7l1 -2.7M271.3 445.1l2.9 3.9M278.9 448.2l-3.7 -0.2M276.4 445l-1.3 3M283 440.9l-7.3 -2.1M275.1 448l-0.9 1M257.1 400.7l5.4 0.8M259.1 397.6l1.5 0.5M256 401.8l1.1 -1M263.3 402.7l-0.9 -1.2M378.9 403.6l3.8 -0.7M384.8 401.1l0.1 -4.8M386.6 409l-4 -6.1M379 406.7l-0.1 -3.1M376.6 402.3l1.1 0.6M376.9 391.8l5.4 3.5M394.2 403.3l-9.5 -2.1M387.4 394.3l-2.5 2M351.6 397.8l2.7 4.6M351.6 397.8l-3.7 0.7M344.1 403.6l3.9 -5.1M344.1 403.6l9.1 2M353.2 405.6l1.2 -3.1M353.3 395.5l4.6 0.5M343.8 403.8l0.3 -0.2M338.7 399.1l3.3 -4.9M342 394.2l5.3 3.4M347.3 397.6l0.7 1M358.2 388.8l-5 -1.1M270 442.6l-2.6 -4.4M270 442.6l0.3 0M270.3 442.6l5.4 -3.9M275.7 438.7l-1.2 -5.1M272.7 432.7l1.8 0.9M272.7 432.7l-3.1 1.5M269.6 434.1l-2.3 2.5M264.7 444.2l2.8 -6M265.2 444.5l4.8 -1.9M271.3 445.1l-1 -2.4M275.7 438.7l-0 -0M281.2 430.8l-6.7 2.8M272.7 432.5l0.1 0.2M342 388.5l10.7 0.1M342 388.5l-0.5 1.2M341.8 390.3l5 2.3M341.8 390.3l-0.3 -0.6M346.8 392.7l5.7 -3.4M352.6 389.3l0.1 -0.7M353.2 387.7l-0.5 0.9M335.3 391.1l6.2 -1.4M342 394.2l-0.2 -3.9M353.3 395.5l-0.7 -6.3" stroke="#5ec452" stroke-width="0.6" fill="none" opacity="0.85"/>
<path d="M393.9 477.1l0.1 -2.4M394 474.6l-8.7 -10.4M402.4 457.9l-10.1 -0.7M392.3 457.3l-7.1 7M106.7 408.3l4.4 9.5M175.9 411.8l-6.6 -10.1M175.9 411.8l11.3 -14.6M173.3 395.3l4.5 -1.8M177.8 393.5l3.4 0.2M187.2 397.1l-6.1 -3.5M159.4 383.4l1 3.6M162.3 448.7l3 -20.6M162.3 448.7l-10.2 -3.9M141.3 432.2l0.6 -8.4M165.3 428.1l-23.5 -4.3M169 401.8l0.3 -0.2M169 401.8l-5.6 11.9M171.9 424.8l4.3 -4.2M171.9 424.8l-3.1 0.4M175.9 411.8l1.6 4.8M168.8 425.2l-5.4 -11.5M177.5 416.5l-1.3 4M171.9 424.8l5.7 5.7M196.2 426.2l-0.3 2.8M195.5 422.9l-19.3 -2.3M177.6 430.5l18.3 -1.4M162.6 449.4l10.9 1.9M160.9 462.8l0.9 0.6M161.8 463.4l8.7 1.9M159.7 463.5l1.2 -0.7M333.3 477.4l0.6 -4.9M297.5 478.5l-14.4 -8M275.1 470.6l8 -0.1M297.5 478.5l6.6 -9.5M304 469l-14.1 -9.4M283 470.5l6.9 -11M362.2 396.4l-3 -0.2M367.3 397.6l6.1 19M367.3 397.6l-5.1 -1.3M349 398.8l7.9 15.1M349 398.8l0.4 -1.9M349.4 397l9.8 -0.8M356.8 414l16.5 2.7M356.8 414l-8.3 4.5M348.6 418.5l-10.9 -7.2M345.9 391.7l-10.2 -1M329.9 393.1l3.1 18.9M346.8 445.3l2 6.7M346.8 445.3l-18.9 2.7M331.1 466.6l17.7 -14.5M331.1 466.6l-4.7 -2.9M331.1 466.6l2.8 5.9M326.4 463.6l-11.8 0.5M304 469l6.8 -6M314.6 464.2l-3.8 -1.1M324.9 426.1l-15.1 -5.2M324.9 426.1l4.4 -5.3M314.1 406l17 7.6M314.1 406l-6.8 12.1M307.3 418.1l2.5 2.7M377.7 475.8l-19.1 -9.8M377.7 475.8l2.4 -5.9M358.6 466l0.4 -3.2M359 462.8l3.2 -1.5M385.3 464.2l-0.9 0.3M384.3 464.5l-4.3 5.5M350.9 453.6l-2.1 -1.6M347.5 440.6l-0.7 4.7M350.9 453.6l15.6 -8.9M354 435.1l3.5 -0.7M357.5 434.3l9 10.3M260.3 406.7l9.1 8M260.3 406.7l13.2 -15.7M273.8 414.3l6.7 -12M280.5 402.3l-7 -11.3M274 388l-0.6 3M143.9 469l-7.9 5M136 474l-4 5.7M146.3 465.6l-2.4 3.5M162.6 449.2l0 0.1M146.3 465.6l-1.9 -2.1M152.1 444.7l-4.9 3.2M144.4 463.4l2.8 -15.5M152.5 401.2l-1 -2.8M151.5 398.4l-7.3 -4.7M150.4 409.9l-7.3 7.2M143 417.1l-6.8 -20M169 401.8l-16.5 -0.6M163.4 413.7l-13.1 -3.8M141.8 423.8l-1.2 -2.2M140.7 421.6l2.4 -4.5M113.9 470.2l1.5 2.7M132 479.7l-10.4 -5.9M236.5 451.7l4.1 -3.8M240.6 447.9l8.2 1.2M252 450.1l-3.2 -1.1M252 450.1l2.9 8.3M211.1 453.8l18.6 3.1M213.7 444.5l11.5 0.7M225.2 445.2l8.4 7.3M215.8 479.9l-7.8 -6.4M215.8 479.9l8.4 -13M224.2 466.9l-14.6 -3.9M208 473.5l-2.4 -5.6M205.5 467.9l-12.7 -0.4M182.1 461.2l7.2 -0.8M192.8 467.6l-3.6 -7.1M185.5 450.4l-11.9 0.8M185.5 450.4l4.1 7.1M200.6 385.6l-1.9 8.2M208.4 396.2l-9.6 -2.4M177.5 416.5l15.8 -10.8M193.3 405.7l-1.3 -6.5M167.7 446.6l18 -4.2M185.7 442.4l0.2 -0.5M185.5 450.4l0.2 -8.1M162.6 449.2l5.1 -2.6M177.6 430.5l2.2 5.6M197.4 435.8l-1.4 -6.8M197.4 435.8l-11.5 6M286.5 389.2l-12.5 -1.2M329.9 393.1l-3.3 -0.9M289.4 393.6l8.2 0.3M340.5 429l-7.8 -6.3M340.5 429l4.2 -5.9M344.7 423.1l-12 -0.5M343.1 437.2l-2.6 -8.2M343.1 437.2l-18.1 -3.2M347.5 440.6l-4.4 -3.4M354 435.1l-5.6 -14.6M348.4 420.5l-3.7 2.6M348.4 420.5l0.2 -2M333 412l-1.9 1.6M324.5 434.8l2.4 11.7M326.9 446.5l-19.4 3.4M307 441l1.3 -1.2M309.8 420.8l-1.6 18.9M327.9 448l-1 -1.5M306.8 453l4.1 10M306.8 453l0.7 -3.1M307.3 418.1l-10.3 0.5M307 441l-0.6 -0.3M392.3 457.3l-5.7 -12.5M384.3 464.5l-10.7 -8.5M362.2 461.4l8.1 -6.1M366.5 444.7l2.9 1.4M369.4 446l0.9 9.3M370.3 455.3l3.3 0.7M386.3 440.3l-6 -3.8M380.3 436.5l-7.2 -15M373.8 417.1l-0.7 4.5M400 446.9l-7.6 -9M402.4 457.9l-2.3 -11M386.6 444.7l-0.3 -4.4M369.4 446l10.9 -9.5M357.5 434.3l15.6 -12.7M236.5 451.7l-2.8 0.8M240.5 446.2l-13.6 -12.4M248.7 449l6.5 -18.3M255.3 430.7l-13.3 6.9M267.5 420.9l9.8 18.7M267.5 420.9l-11 9.9M256.6 430.9l9.1 11.9M277.3 439.6l-9.6 3.6M265.7 442.7l2 0.5M269.3 414.7l-1.8 6.3M255.4 430.6l1.2 0.3M252 450.1l13.7 -7.4M284.1 402.2l4.8 -6M284.1 402.2l9.4 9M289 396.2l7.3 8.6M293.5 411.2l2.7 -6.3M280.5 402.3l3.7 -0M273.8 414.3l15.7 6.9M293.8 418.1l-4.4 3M298.7 402.5l-2.4 2.4M112.3 404l2.2 -0.9M114.5 403.1l0 -3.7M106.7 408.3l5.6 -4.3M125.4 417.9l-5.3 3.8M120.1 421.7l-9 -3.9M124.1 412l-9.6 -8.9M118 393.2l-3.5 6.3M135.1 396.9l-5.5 2.3M136.2 397.1l-1.1 -0.1M118 393.2l4.9 0.7M108 453l5.9 0.9M113.9 470.2l2.6 -9.9M243.3 466.6l3.8 2.5M243.3 466.6l-10.2 6.9M227.1 466.1l6 7.4M242.9 463l0.4 3.6M227.1 466.1l-2.9 0.8M258 470.7l-1.8 -10.7M258 470.7l3 3.5M271.2 471.5l-8.5 -14.3M271.2 471.5l-10.2 2.8M262.7 457.2l-6.6 2.8M254.9 458.4l1.3 1.6M247.1 469.1l10.9 1.7M275 470.7l-3.7 0.7M275.1 470.6l-0.4 -7.5M268.1 453l6.6 10.1M268.1 453l-5.3 4.1M210.9 454.1l-0.4 0.8M210.5 454.9l-16.5 -0.6M197.6 436l0.9 10.4M189.6 457.5l4.4 -3.2M197.6 436l-0.2 -0.2M236.1 386.6l6.9 -0.4M243.1 386.2l4.2 5.1M236.1 386.6l-3.3 4M224.6 395.6l8.3 -5.1M247.6 396.9l-12.4 -3M235.2 393.9l-2.4 -3.4M248.9 406.5l-11.4 3.3M325.3 392.8l-11.8 10M313.5 402.7l-2 -1.6M311.5 401.2l-4.3 -10.8M315.4 388.1l-8.3 2.3M326.6 392.3l-1.4 0.5M314.1 406l-0.7 -3.2M293.8 418.1l3.2 0.5M304 387.3l3.2 3.1M299 438.8l-12.6 -4M299 438.8l-7.2 14.4M286.3 434.8l-5 4.9M281.3 439.7l3.5 8.6M284.8 448.3l5.9 5M291.8 453.2l-1.1 0.1M289.4 421.1l-3.1 13.6M277.3 439.6l4 0.1M274.7 463.2l10.1 -14.8M290 459.5l0.7 -6.2M226.9 433.8l-0.1 -0.3M242 437.6l-6 -10.4M226.8 433.6l9.1 -6.3M226.8 433.6l-9.7 -3.5M196.2 426.2l20.2 -2M216.4 424.2l0.8 5.9M251.8 425.6l-15.8 1.5M106.1 434.5l8.3 -1.5M120.1 421.7l-4.8 10.4M115.3 432.1l-0.9 0.8M121.6 473.8l5.3 -7.6M136 474l-5.6 -8.1M130.4 465.9l-3.5 0.3M128.6 448.4l3.9 -7.7M128.6 448.4l3.6 7M141.3 450.3l-5.8 -11.4M137.2 457.1l-3 -0.5M123.5 460.3l8.6 -5M147.1 447.9l-5.9 2.4M130.4 465.9l3.7 -9.3M208.4 396.2l6.1 5.4M193.3 405.7l4.2 6.2M207.2 408.7l-9.8 3.2M195.5 422.9l2.2 -9.4M234.9 410.8l-1.3 3.4M233.5 414.2l-16.9 8.7M223.9 401.7l-3.6 0.8M220.4 402.5l-5.6 11.9M214.7 414.4l0.3 6M224.6 395.6l-0.7 6.1M236 427.1l-2.4 -12.9M216.4 424.2l0.3 -1.2M207.2 408.7l7.5 5.7M197.7 413.5l17.4 6.9" stroke="#d0d868" stroke-width="0.6" fill="none" opacity="0.9"/>
<path d="M112 401l5.7 9.7M132.3 400.8l-14.6 9.9M385.6 477.9l-23.3 -2.8M228.6 396.8l1.3 -4.9M275.8 460.6l2.9 6.4M275.8 460.6l-13.3 8.5M256.7 467.2l-0.5 12.1M301 466l1.7 -5M301 466l-1.4 0.6M299.6 466.6l-20.3 -14.9M302.7 461l-7.3 -17.5M289.3 436.7l6.1 6.7M289.3 436.7l-11.1 10.6M278.2 447.4l1.1 4.3M275.8 460.6l3.5 -9M294 474.1l5.6 -7.5M314.4 447.7l-19 -4.2M319.2 444.4l-4.8 3.3M319.2 444.4l0.8 -6.7M292.4 427.9l-3.1 8.8M320 437.7l-9.4 -8.9M362.3 475.1l-3.3 -5.7M359 469.4l6 -14.9M267.4 444.3l-1.6 -0.2M232.9 456.2l-3.2 -4.8M241.5 407.4l17.2 -14.4M258.7 393l4.4 22.1M258.1 416.7l-8.4 13.6M263.1 415.1l7 2.3M130 479.6l2.4 -24.7M319.2 444.4l9.6 14M301 466l1.3 0.6M347.2 470.3l-2.1 0.6M347.2 470.3l11.8 -0.9M333.8 426.9l0.6 -21.8M315.8 414.6l18.6 -9.5M315.8 414.6l-11.7 -10.9M299.9 392.1l4 7.3M299.9 392.1l-4.6 -2.6M295.2 389.5l-4.1 6.6M304.1 403.8l-0.2 -4.4M302.5 390.7l-2.6 1.3M303.9 399.4l30.5 -1.4M334.4 405.1l1.7 -2.8M365.1 454.5l-1.8 -2.4M363.2 452.1l-17.5 -4.4M332.4 432.4l9.8 5.5M330.5 459.4l-1.7 -1M330.5 459.4l14.8 -11.9M134 400.8l6.7 6.3M134 424.1l9.8 -6.3M140.8 407.2l3 10.7M139.8 394.1l15.6 6.5M130 479.6l18.7 -4.8M132.5 454.9l2.7 -5.2M154.5 467l-5.7 7.8M154.5 467l-15.3 -16.2M143.7 417.9l5.5 1.7M149.2 419.5l4.7 9.7M153.9 429.3l-20.2 15.1M248 429.6l-7.7 -22.1M235 407l5.3 0.6M228.2 432.3l7 -11.1M274.3 417l-1.9 -10.2M277.4 417.7l3.4 0.2M280.5 402.4l-2.6 -3.3M267.4 444.3l10 -26.7M284.9 419.4l-4.1 -1.5M333.5 465.7l1.9 2.3M345.3 447.5l0.5 0.2M397.4 397.5l1.5 1.2M385.6 472.2l14.1 -24.8M351.2 423.1l2.2 7.8M363.1 433.9l6.3 -5.6M342.1 438l11.4 -7.1M227.1 430.3l-13.3 -5.6M227.1 430.3l-6.1 -14.1M221 416.2l-1 0.1M233 405.9l-12 10.3M228.2 432.3l-1.1 -2M210.6 434.9l-4.5 2.4M210.6 434.9l1 -1.7M211.6 433.2l-0.7 -3.8M210.8 429.4l-12.5 -8.5M206.1 437.3l-15.6 -6.3M219.8 452.7l-6.3 3.1M228.3 433.8l-16.8 -0.6M213.7 424.7l-2.9 4.8M199.1 416.6l-0.9 4.4M212.6 455.7l-30.5 16M189 383.6l-11 14.8M178 398.4l-16.8 -3M197.6 410.4l1.5 -4.6M199.1 405.8l13.5 -8.6M154.5 467l22.7 -3.5M173.5 453.3l3.6 10.2M107.1 466.8l-7 -14.4M115.7 458.6l-5.8 -11.8M109.9 446.8l-9.8 5.6M399.7 447.4l-4.2 -0.9M387.4 445.7l8.1 0.7M223.3 473.4l-2.2 -0.2M231.6 472.7l-8.3 0.7M213.7 468.5l7.4 4.7M182 471.6l-3.7 -6.9M190.4 430.4l-8.6 -6.1M174.1 448.2l16.2 -17M181.8 424.3l-14.9 8.3M173.5 453.3l0.6 -5.1M165.1 431.2l1.8 1.4M198.9 447.5l-5.7 -9.3M186.5 457.2l6.6 -19.1M202.9 447.3l-4 0.2M178.4 464.7l8.1 -7.5M115.2 440.9l-1.5 0.8M113.7 441.7l-12.9 -5.2M110.5 434.2l-5.3 -1.9M384.9 422.8l-11.4 4.2M384.9 422.8l5.8 -4.3M372.1 402.9l1 24M375.3 397.7l-2.3 4.4M351.4 406.5l20.7 -3.6M180.4 408.6l-0.2 0.3M181.8 424.3l-3.9 -10.2M167.3 418.4l2.8 -2.1M167.3 418.4l-11.2 -4.2M170.1 416.4l-5.9 -9.5M158.9 402.2l5.3 4.7" stroke="#8ad4cc" stroke-width="0.6" fill="none" opacity="0.85"/>
<path d="M174.9 460C176.3 460.8 180.6 463.3 183.6 464.9C186.5 466.5 189.4 468.1 192.4 469.6C195.4 471.1 198.4 472.5 201.4 473.9C204.5 475.2 207.6 476.5 210.6 477.8C213.7 479.1 216.8 480.3 220 481.4C223.1 482.6 226.3 483.6 229.4 484.6C232.6 485.6 235.8 486.5 239 487.4C242.3 488.3 245.5 489 248.8 489.7C252 490.5 255.3 491.1 258.6 491.8C261.8 492.4 265.1 493 268.4 493.7C271.7 494.3 274.9 494.8 278.2 495.4C281.5 495.9 284.8 496.5 288.1 497C291.4 497.4 294.7 497.8 298 498.1C301.3 498.5 304.7 498.8 308 499C311.3 499.2 316.3 499.3 318 499.3M261.5 468.8C260.8 467.3 258.7 462.7 257.4 459.7C256.1 456.6 254.8 453.6 253.5 450.5C252.3 447.4 251.1 444.2 250 441.1C248.9 438 247.9 434.8 246.9 431.6C245.9 428.4 245 425.2 244.1 422C243.3 418.8 242.5 415.5 241.7 412.3C241 409 240.3 405.8 239.6 402.5C238.9 399.3 237.9 394.3 237.6 392.7M376.6 418.8C376.8 417.1 377.2 412.1 377.5 408.8C377.7 405.5 377.9 402.2 378 398.8C378.2 395.5 378.3 392.2 378.4 388.8C378.6 385.5 378.8 382.2 379 378.8C379.2 375.5 379.4 372.2 379.6 368.9C379.8 365.5 380.1 362.2 380.2 358.9C380.4 355.6 380.5 352.2 380.6 348.9C380.6 345.6 380.5 342.2 380.4 338.9C380.3 335.6 380.1 332.2 379.9 328.9C379.6 325.6 379.3 322.3 379 318.9C378.7 315.6 378.4 312.3 378 309C377.6 305.7 376.9 300.7 376.7 299.1M168.5 407.6C169.6 408.9 172.6 412.9 174.6 415.6C176.6 418.2 178.7 420.8 180.7 423.5C182.8 426.1 184.8 428.8 186.8 431.4C188.8 434.1 190.9 436.7 192.8 439.4C194.8 442.1 196.8 444.8 198.7 447.5C200.7 450.2 202.6 452.9 204.5 455.7C206.4 458.4 209.2 462.5 210.2 463.9M103.9 441.4C105.1 440.2 108.6 436.6 111 434.3C113.4 432 115.7 429.6 118.2 427.4C120.6 425.1 123.1 422.8 125.6 420.7C128.1 418.5 130.7 416.4 133.3 414.3C135.9 412.2 138.6 410.2 141.2 408.2C143.9 406.2 146.5 404.1 149.2 402.2C151.9 400.2 156.1 397.4 157.4 396.5M385.1 468.6C383.5 468.2 378.7 466.9 375.5 466C372.3 465.2 369 464.3 365.8 463.5C362.6 462.7 359.3 462 356.1 461.3C352.8 460.6 349.5 460.1 346.2 459.5C342.9 459 339.6 458.4 336.3 458C333 457.6 329.7 457.1 326.4 456.8C323.1 456.5 318.1 456.3 316.4 456.2M207.5 406.1C206 406.8 201.5 408.8 198.4 410.2C195.4 411.6 192.3 412.9 189.3 414.3C186.3 415.8 183.3 417.2 180.3 418.7C177.3 420.2 174.4 421.7 171.4 423.3C168.5 424.9 165.5 426.4 162.6 428C159.7 429.6 156.8 431.3 153.9 432.9C151 434.6 148.1 436.2 145.3 437.9C142.4 439.6 139.5 441.3 136.7 443.1C133.9 444.9 131.1 446.7 128.3 448.5C125.5 450.3 122.7 452.1 119.9 454C117.2 455.9 114.5 457.8 111.8 459.8C109.1 461.8 106.4 463.8 103.8 465.9C101.2 467.9 98.6 470.1 96.1 472.2C93.5 474.3 91 476.5 88.5 478.7C85.9 480.8 82.1 484.1 80.8 485.1M314.9 407.8C315.5 409.4 317.1 414.1 318.3 417.3C319.4 420.4 320.7 423.5 322 426.5C323.2 429.6 324.6 432.7 325.9 435.7C327.3 438.8 328.7 441.8 330.2 444.8C331.7 447.7 333.3 450.7 335 453.6C336.6 456.5 338.4 459.3 340.1 462.1C341.9 465 343.7 467.7 345.5 470.5C347.4 473.3 349.2 476.1 351 478.9C352.9 481.7 354.7 484.5 356.5 487.3C358.3 490.1 360.1 492.9 361.9 495.7C363.6 498.5 365.3 501.4 367.1 504.3C368.8 507.1 370.5 510 372.1 512.9C373.8 515.7 376.2 520.1 377 521.6M393.4 406.5C395.1 406.5 400.1 406.6 403.4 406.5C406.8 406.5 410.1 406.4 413.4 406.3C416.8 406.2 420.1 406.1 423.4 405.9C426.8 405.7 430.1 405.4 433.4 405C436.7 404.7 440 404.3 443.3 403.8C446.6 403.4 449.9 402.8 453.2 402.2C456.5 401.5 459.7 400.8 462.9 400C466.2 399.2 471 397.8 472.6 397.4M298.7 458C299.5 456.5 301.7 452 303 449C304.4 445.9 305.8 442.9 307 439.8C308.2 436.7 309.4 433.6 310.5 430.4C311.6 427.3 312.7 424.1 313.7 420.9C314.7 417.8 315.7 414.6 316.7 411.4C317.7 408.2 318.6 405 319.6 401.8C320.5 398.6 321.5 395.4 322.4 392.2C323.4 389 324.9 384.3 325.4 382.7M359.5 460.4C360 458.9 361.6 454.1 362.6 450.9C363.6 447.8 364.5 444.6 365.4 441.4C366.3 438.1 367.2 434.9 368 431.7C368.9 428.5 369.8 425.3 370.6 422C371.5 418.8 372.3 415.6 373.1 412.3C373.9 409.1 374.6 405.9 375.4 402.6C376.2 399.4 377 396.1 377.8 392.9C378.6 389.7 379.5 386.4 380.4 383.2C381.3 380 382.3 376.9 383.4 373.7C384.4 370.5 386.3 365.9 386.8 364.3M387.7 412C386.5 410.8 382.9 407.4 380.5 405C378.2 402.6 375.9 400.2 373.7 397.7C371.4 395.3 369.2 392.8 367 390.3C364.8 387.8 362.6 385.2 360.5 382.7C358.3 380.2 356.2 377.6 354 375.1C351.9 372.5 349.7 370 347.6 367.4C345.4 364.9 342.1 361.2 341 359.9M227 459.5C226.9 457.8 226.5 452.8 226.3 449.5C226 446.2 225.6 442.9 225.2 439.6C224.9 436.2 224.5 432.9 224 429.6C223.6 426.3 223.2 423 222.7 419.7C222.3 416.4 221.8 413.1 221.3 409.8C220.7 406.5 220.2 403.2 219.5 400C218.8 396.7 218.2 393.4 217.4 390.2C216.6 387 215.7 383.7 214.7 380.6C213.8 377.4 212.7 374.2 211.6 371.1C210.5 367.9 209.3 364.8 208.1 361.7C206.8 358.6 205.4 355.6 204 352.6C202.6 349.6 201.1 346.6 199.5 343.6C198 340.7 196.4 337.8 194.7 334.9C193.1 331.9 191.4 329.1 189.7 326.2C188 323.3 186.3 320.5 184.6 317.6C182.9 314.8 181.2 311.9 179.4 309.1C177.6 306.2 175.9 303.4 174 300.6C172.2 297.9 169.3 293.8 168.3 292.4M361 439.2C359.9 438 356.7 434.1 354.5 431.6C352.3 429.1 350 426.7 347.7 424.3C345.4 421.9 343 419.6 340.6 417.2C338.3 414.9 335.9 412.5 333.5 410.2C331.1 407.9 328.7 405.6 326.3 403.3C323.9 401 321.5 398.7 319 396.4C316.5 394.2 314 392 311.4 389.9C308.8 387.8 306.2 385.7 303.6 383.7C300.9 381.7 298.2 379.7 295.5 377.8C292.8 375.8 290.1 373.9 287.3 372.1C284.5 370.2 281.8 368.4 278.9 366.6C276.1 364.9 273.2 363.2 270.3 361.6C267.3 360 264.4 358.5 261.4 357.1C258.4 355.6 255.3 354.3 252.2 352.9C249.2 351.6 244.5 349.8 243 349.1M371 401.8C372.7 401.9 377.7 402.3 381 402.5C384.3 402.8 387.6 403 391 403.3C394.3 403.6 397.6 403.9 400.9 404.2C404.2 404.5 407.6 404.8 410.9 405.2C414.2 405.5 417.5 405.8 420.8 406.2C424.1 406.5 427.5 406.8 430.8 407.1C434.1 407.5 437.4 407.9 440.7 408.2C444 408.6 447.3 408.9 450.7 409.3C454 409.7 457.3 410.1 460.6 410.5C463.9 411 467.2 411.4 470.5 412C473.8 412.6 477 413.2 480.3 413.9C483.5 414.6 486.8 415.4 490 416.2C493.2 417 496.5 418 499.6 419C502.8 420 506 421.1 509.1 422.2C512.2 423.4 516.9 425.2 518.4 425.8M299.8 415.4C301.1 416.5 304.8 419.8 307.4 421.9C309.9 424.1 312.5 426.2 315.1 428.3C317.7 430.4 320.3 432.5 322.9 434.5C325.5 436.6 328.2 438.6 330.8 440.6C333.5 442.6 336.1 444.7 338.8 446.6C341.5 448.6 344.2 450.5 347 452.4C349.7 454.3 353.9 457 355.3 457.9M390.5 460.4C391.4 459 394 454.7 395.8 452C397.7 449.2 399.5 446.4 401.5 443.7C403.4 441 405.5 438.3 407.5 435.7C409.5 433.1 411.6 430.5 413.8 427.9C415.9 425.4 418.1 422.8 420.3 420.3C422.5 417.8 424.7 415.4 427 412.9C429.2 410.5 431.5 408 433.8 405.6C436.1 403.2 438.5 400.8 440.9 398.5C443.3 396.2 445.7 393.9 448.2 391.7C450.7 389.5 453.3 387.4 455.9 385.3C458.5 383.2 461.1 381.2 463.8 379.2C466.4 377.1 469.1 375.1 471.7 373.1C474.4 371.1 477.1 369.1 479.7 367.1C482.4 365.1 485.1 363.1 487.8 361.2C490.5 359.2 493.2 357.3 495.9 355.4C498.6 353.5 501.4 351.6 504.2 349.7C507 347.9 509.8 346.1 512.6 344.3C515.4 342.6 518.3 340.8 521.1 339.1C524 337.5 526.9 335.8 529.8 334.2C532.8 332.6 537.3 330.4 538.7 329.7M271.5 436.4C271.6 438.1 272.1 443.1 272.3 446.4C272.5 449.7 272.6 453.1 272.7 456.4C272.7 459.7 272.8 463.1 272.8 466.4C272.8 469.7 272.7 473.1 272.6 476.4C272.5 479.7 272.4 483.1 272.2 486.4C272 489.7 271.7 493 271.5 496.4C271.2 499.7 270.9 503 270.6 506.3C270.3 509.6 269.7 514.6 269.5 516.3M121.6 408.2C121.4 409.9 120.6 414.8 120.3 418.1C119.9 421.4 119.7 424.8 119.5 428.1C119.3 431.4 119.2 434.8 119.2 438.1C119.1 441.4 119.2 444.8 119.3 448.1C119.4 451.4 119.5 454.7 119.8 458.1C120 461.4 120.3 464.7 120.6 468C120.9 471.4 121.3 474.7 121.7 478C122.1 481.3 122.6 484.6 123.1 487.9C123.6 491.2 124.6 496.1 124.9 497.7M241.8 448.2C242.1 449.9 243.1 454.8 243.6 458.1C244.2 461.4 244.7 464.7 245.1 468C245.5 471.3 245.9 474.6 246.1 477.9C246.4 481.2 246.6 484.6 246.7 487.9C246.8 491.2 246.9 494.5 246.9 497.9C246.9 501.2 246.8 504.5 246.7 507.9C246.6 511.2 246.5 514.5 246.3 517.9C246.1 521.2 245.8 524.5 245.4 527.8C245 531.1 244.6 534.4 244 537.7C243.5 541 243 544.3 242.3 547.6C241.7 550.9 241 554.1 240.2 557.4C239.3 560.6 238.5 563.8 237.5 567C236.5 570.2 235.5 573.3 234.3 576.5C233.2 579.6 232 582.7 230.7 585.8C229.4 588.9 228 591.9 226.6 594.9C225.2 597.9 223.7 600.9 222.1 603.9C220.6 606.8 218.2 611.2 217.4 612.7M100 439.8C99.7 438.1 98.8 433.2 98.3 429.9C97.8 426.6 97.3 423.3 96.9 420C96.6 416.7 96.2 413.4 96 410.1C95.8 406.7 95.6 403.4 95.6 400.1C95.5 396.7 95.5 393.4 95.6 390.1C95.7 386.7 95.9 383.4 96.2 380.1C96.5 376.8 96.8 373.5 97.2 370.1C97.7 366.8 98.1 363.5 98.6 360.2C99.1 356.9 99.7 353.7 100.3 350.4C101 347.1 101.7 343.9 102.5 340.6C103.3 337.4 104.2 334.2 105.2 331C106.1 327.8 107.2 324.6 108.3 321.5C109.4 318.3 110.6 315.2 111.9 312.2C113.1 309.1 114.4 306 115.8 302.9C117.1 299.9 119.2 295.4 119.9 293.9M208.2 402.8C209.4 401.7 213.3 398.5 215.8 396.4C218.4 394.2 220.9 392.1 223.5 390C226.1 387.9 228.8 385.9 231.4 383.9C234.1 381.8 236.7 379.8 239.4 377.8C242.1 375.8 244.8 373.9 247.5 372C250.2 370.1 252.9 368.1 255.7 366.2C258.4 364.3 261.2 362.4 264 360.6C266.8 358.8 269.6 357.1 272.5 355.4C275.4 353.8 279.9 351.4 281.3 350.6M296.9 428.4C297.7 429.8 300.3 434.1 301.9 437C303.6 439.9 305.3 442.7 307.1 445.6C308.8 448.5 310.5 451.3 312.2 454.2C313.9 457 315.7 459.9 317.4 462.7C319.1 465.6 320.9 468.4 322.6 471.2C324.4 474.1 326.1 476.9 327.8 479.8C329.5 482.7 331.1 485.6 332.8 488.5C334.4 491.4 336.1 494.2 337.7 497.2C339.3 500.1 340.9 503 342.4 506C343.9 509 345.3 512 346.7 515C348.2 518 350.2 522.6 350.9 524.1M268.3 463.8C269.9 464.2 274.7 465.7 277.9 466.5C281.1 467.4 284.3 468.3 287.6 469C290.8 469.8 294.1 470.5 297.3 471.1C300.6 471.7 303.9 472.3 307.2 472.7C310.5 473.2 313.8 473.5 317.1 473.9C320.5 474.2 323.8 474.4 327.1 474.5C330.4 474.7 333.8 474.8 337.1 474.7C340.4 474.7 343.8 474.7 347.1 474.5C350.4 474.3 353.8 474.1 357.1 473.8C360.4 473.5 363.7 473.2 367 472.8C370.4 472.4 373.7 472.1 377 471.7C380.3 471.2 383.6 470.7 386.9 470.2C390.2 469.7 393.5 469.2 396.8 468.7C400.1 468.2 403.4 467.8 406.6 467.2C409.9 466.7 413.2 466.2 416.5 465.6C419.8 465.1 424.7 464.1 426.3 463.8M320.7 426.4C320.1 424.8 318.1 420.2 316.9 417.1C315.7 414 314.6 410.9 313.5 407.7C312.4 404.6 311.4 401.4 310.5 398.2C309.5 395 308.6 391.8 307.7 388.6C306.9 385.3 306.1 382.1 305.4 378.8C304.7 375.6 304 372.3 303.4 369C302.9 365.8 302.3 362.5 301.9 359.2C301.5 355.9 301.1 352.5 300.8 349.2C300.5 345.9 300.3 342.6 300.2 339.2C300.1 335.9 300.2 330.9 300.1 329.2M123.8 474.2C125.5 474.4 130.4 475 133.7 475.4C137.1 475.8 140.4 476.2 143.7 476.6C147 476.9 150.3 477.2 153.6 477.5C157 477.8 160.3 478 163.6 478.3C166.9 478.6 170.2 478.8 173.6 479C176.9 479.2 180.2 479.4 183.6 479.5C186.9 479.6 191.9 479.6 193.6 479.6M98.5 393C97.8 394.5 95.7 399.1 94.1 402C92.6 405 90.9 407.9 89.2 410.7C87.5 413.6 85.8 416.4 83.9 419.2C82.1 422 80.2 424.7 78.2 427.4C76.2 430.1 74.2 432.7 72.1 435.3C70 437.9 67.8 440.5 65.7 443C63.5 445.5 61.3 448 59 450.5C56.8 452.9 54.4 455.3 52.1 457.7C49.8 460.2 47.6 462.6 45.2 464.9C42.9 467.3 40.5 469.6 38.1 471.9C35.6 474.2 33.2 476.5 30.7 478.7C28.2 480.9 25.7 483.1 23.2 485.3C20.7 487.5 16.9 490.8 15.6 491.9M350.1 412.2C348.6 411.3 344.3 408.9 341.3 407.3C338.4 405.7 335.4 404.2 332.4 402.8C329.4 401.3 326.4 399.9 323.4 398.6C320.3 397.2 317.2 396 314.1 394.8C311 393.5 307.9 392.4 304.7 391.3C301.6 390.2 298.4 389.2 295.2 388.1C292.1 387.1 288.9 386.1 285.7 385.1C282.5 384.1 277.8 382.6 276.2 382.1M200.3 475C198.7 475.5 194 477.1 190.9 478.2C187.7 479.4 184.6 480.6 181.6 481.9C178.5 483.2 175.4 484.6 172.4 486C169.4 487.5 166.5 489 163.5 490.6C160.6 492.2 157.7 493.8 154.9 495.6C152 497.3 149.2 499.1 146.5 501C143.7 502.9 141 504.8 138.3 506.8C135.7 508.8 133.1 510.9 130.5 513C128 515.2 125.4 517.3 122.9 519.6C120.4 521.8 118 524 115.6 526.4C113.2 528.7 110.9 531.1 108.6 533.5C106.3 536 104.1 538.5 101.9 541C99.7 543.5 97.6 546 95.4 548.5C93.2 551 90 554.9 88.9 556.1M235.8 435.2C235.3 433.6 233.9 428.8 233 425.6C232.1 422.3 231.3 419.1 230.5 415.9C229.7 412.6 228.9 409.4 228.1 406.2C227.3 402.9 226.5 399.7 225.6 396.5C224.8 393.2 224 390 223.1 386.8C222.2 383.6 221.3 380.4 220.3 377.2C219.4 374 218.4 370.8 217.4 367.6C216.3 364.5 215.2 361.3 214.1 358.2C213 355.1 211.9 351.9 210.7 348.8C209.6 345.6 208.4 342.5 207.2 339.4C206.1 336.3 204.9 333.2 203.8 330C202.7 326.9 201.6 323.7 200.6 320.6C199.5 317.4 198.5 314.2 197.6 311C196.6 307.8 195.7 304.6 194.9 301.4C194.1 298.1 193.3 294.9 192.6 291.6C191.9 288.4 191.3 285.1 190.6 281.8C190 278.6 189.3 275.3 188.7 272C188.2 268.7 187.3 263.8 187.1 262.2M387.1 448.2C386.4 449.7 384.4 454.3 383.2 457.4C381.9 460.5 380.5 463.5 379.3 466.6C378.1 469.7 376.9 472.8 375.8 476C374.6 479.1 373.5 482.2 372.5 485.4C371.5 488.6 370.4 491.8 369.5 495C368.6 498.2 367.8 501.4 367 504.6C366.3 507.9 365.5 511.1 364.9 514.4C364.3 517.7 363.7 521 363.3 524.3C362.8 527.6 362.4 530.9 362.1 534.2C361.8 537.5 361.6 540.9 361.4 544.2C361.3 547.5 361.2 550.9 361.2 554.2C361.3 557.5 361.4 560.9 361.5 564.2C361.7 567.5 361.9 570.8 362.2 574.2C362.5 577.5 363.1 582.4 363.3 584.1M343.2 436.3C344.6 437.3 348.6 440.2 351.3 442.1C354 444.1 356.8 446 359.5 447.9C362.3 449.8 365 451.7 367.8 453.5C370.5 455.4 373.3 457.3 376 459.2C378.8 461 381.6 462.8 384.4 464.6C387.2 466.4 390 468.3 392.8 470C395.7 471.7 398.5 473.5 401.4 475.1C404.4 476.7 407.3 478.3 410.3 479.8C413.2 481.3 416.3 482.7 419.3 484.1C422.4 485.4 425.5 486.7 428.6 487.9C431.7 489.1 434.8 490.2 437.9 491.4C441 492.6 444.2 493.7 447.3 494.9C450.4 496 455.2 497.7 456.7 498.2M98.5 452.2C97.7 450.8 95.1 446.5 93.4 443.6C91.6 440.8 89.9 437.9 88.1 435.1C86.4 432.3 84.6 429.4 82.9 426.5C81.2 423.7 79.6 420.8 77.9 417.9C76.2 415 74.6 412.1 72.9 409.2C71.3 406.3 69.6 403.4 68 400.5C66.4 397.6 64.1 393.2 63.3 391.7" stroke="#d8dc70" stroke-width="0.6" fill="none" opacity="0.85" stroke-linejoin="round"/>
<ellipse cx="143" cy="224.5" rx="4" ry="2.5" fill="#b1b1d9" opacity="0.85"/>
<ellipse cx="171.6" cy="230.5" rx="3" ry="3" fill="#b1b1d9" opacity="0.85"/>
<ellipse cx="235.3" cy="228.5" rx="3" ry="4" fill="#b1b1d9" opacity="0.85"/>
<ellipse cx="251.8" cy="234.7" rx="2.5" ry="2.5" fill="#b1b1d9" opacity="0.85"/>
<ellipse cx="276.7" cy="231.6" rx="4" ry="3" fill="#b1b1d9" opacity="0.85"/>
<ellipse cx="305.5" cy="227.5" rx="3" ry="2.5" fill="#b1b1d9" opacity="0.85"/>
<ellipse cx="373.3" cy="228.5" rx="3" ry="3" fill="#b1b1d9" opacity="0.85"/>
<ellipse cx="160" cy="219" rx="5" ry="2" fill="#b1b1d9" opacity="0.85"/>
<ellipse cx="290" cy="219" rx="4" ry="2" fill="#b1b1d9" opacity="0.85"/>
<ellipse cx="330" cy="220" rx="3" ry="2" fill="#b1b1d9" opacity="0.85"/>
<path d="M262 221C268.3 220.8 286.6 220.3 300 220C313.4 219.7 333 216.9 342.5 219C352 221.1 353.1 229.3 356.8 232.6C360.6 235.9 359.5 237.1 365 238.8C370.5 240.5 385.6 242.2 389.7 242.9" stroke="#d8d860" stroke-width="0.9" fill="none" stroke-linejoin="round" stroke-linecap="round" opacity="0.9"/>
<path d="M192 244C195.8 242.7 207 238.5 215 236C223 233.5 232.2 231.3 240 229C247.8 226.7 258.3 223.2 262 222" stroke="#c8d058" stroke-width="0.8" fill="none" stroke-linejoin="round" stroke-linecap="round" opacity="0.8"/>
<path d="M320 244C320.5 242 322 236.3 323 232C324 227.7 325.5 220.3 326 218" stroke="#58c0c8" stroke-width="1.0" fill="none" stroke-linejoin="round" stroke-linecap="round" opacity="0.9"/>
<ellipse cx="345" cy="233" rx="6" ry="4.6" fill="#b1b1d9" stroke="#4a4a5a" stroke-width="0.6"/>
<ellipse cx="391.5" cy="222" rx="1" ry="3" fill="none" stroke="#666" stroke-width="0.5"/>
<path d="M394 399C392.7 400.8 386.8 405.7 386 410C385.2 414.3 390.7 420.7 389 425C387.3 429.3 380.7 435.5 376 436C371.3 436.5 364.3 433.2 361 428C357.7 422.8 359.5 409.7 356 405C352.5 400.3 345 399.7 340 400C335 400.3 331 405.8 326 407C321 408.2 315.7 408.2 310 407C304.3 405.8 299 400.8 292 399.5C285 398.2 273.2 398.6 268 399.5C262.8 400.4 262.1 400.8 260.5 405C258.9 409.2 260.1 419.1 258.5 424.5C256.9 429.9 255.2 434.4 251 437.5C246.8 440.6 239.2 441.2 233 443C226.8 444.8 219 445.5 214 448C209 450.5 205.3 454.3 203 458C200.7 461.7 200.5 468 200 470" stroke="#4a4a60" stroke-width="4.8" fill="none" stroke-linejoin="round" stroke-linecap="round" opacity="0.45"/>
<path d="M394 399C392.7 400.8 386.8 405.7 386 410C385.2 414.3 390.7 420.7 389 425C387.3 429.3 380.7 435.5 376 436C371.3 436.5 364.3 433.2 361 428C357.7 422.8 359.5 409.7 356 405C352.5 400.3 345 399.7 340 400C335 400.3 331 405.8 326 407C321 408.2 315.7 408.2 310 407C304.3 405.8 299 400.8 292 399.5C285 398.2 273.2 398.6 268 399.5C262.8 400.4 262.1 400.8 260.5 405C258.9 409.2 260.1 419.1 258.5 424.5C256.9 429.9 255.2 434.4 251 437.5C246.8 440.6 239.2 441.2 233 443C226.8 444.8 219 445.5 214 448C209 450.5 205.3 454.3 203 458C200.7 461.7 200.5 468 200 470" stroke="#b3b3d8" stroke-width="3.8" fill="none" stroke-linejoin="round" stroke-linecap="round" opacity="1"/>
<path d="M154 470C153.5 466 153.3 451.2 151 446C148.7 440.8 143.7 438.8 140 438.5C136.3 438.2 131.6 440.8 129 444C126.4 447.2 125.2 453.7 124.5 458C123.8 462.3 124.9 468 125 470" stroke="#4a4a60" stroke-width="4.4" fill="none" stroke-linejoin="round" stroke-linecap="round" opacity="0.45"/>
<path d="M154 470C153.5 466 153.3 451.2 151 446C148.7 440.8 143.7 438.8 140 438.5C136.3 438.2 131.6 440.8 129 444C126.4 447.2 125.2 453.7 124.5 458C123.8 462.3 124.9 468 125 470" stroke="#b3b3d8" stroke-width="3.4" fill="none" stroke-linejoin="round" stroke-linecap="round" opacity="1"/>
<path d="M268 424 l-4 10 l-3 2" stroke="#445" stroke-width="0.8" fill="none"/>
<path d="M141 452 l3 -2 l2 3 l3 -1 M143 456 l4 1 l2 -3 M139 448 l2 4 M145 460 l2 3" stroke="#2a2a3a" stroke-width="0.9" fill="none"/>
<path d="M126 448 q2 -6 6 -8" stroke="#2a2a3a" stroke-width="0.6" fill="none"/>
<ellipse cx="336" cy="452" rx="4" ry="9" fill="#80ccd0" opacity="0.6"/>
<ellipse cx="262" cy="452" rx="3" ry="6" fill="#80ccd0" opacity="0.5"/>
<rect x="206.5" y="408" width="11.5" height="2.5" fill="none" stroke="#334" stroke-width="0.6"/>
<circle cx="232.6" cy="415" r="1.5" fill="none" stroke="#334" stroke-width="0.5"/>
</g>
<clipPath id="dk"><rect x="114.5" y="244.0" width="277.4" height="154.39999999999998"/></clipPath>
<g clip-path="url(#dk)">
<rect x="114.5" y="244.0" width="277.4" height="154.39999999999998" fill="#4c8a48"/>
<rect x="114.5" y="244.0" width="277.4" height="154.39999999999998" fill="#000" filter="url(#blt)" opacity="0.65"/>
<rect x="114.5" y="244.0" width="277.4" height="154.39999999999998" fill="#000" filter="url(#spk)"/>
<path d="M329.6 244 L343 244 L342 256 L341 270 L343 283 L348 294 L358 305 L369 314 L366 322 L352 317 L336 305 L323 289 L318 277 L324 261 Z" fill="#3a4a40" opacity="0.5"/>
<path d="M329.6 244 L324.4 261 L318.3 276.6 L322.6 287 L334.8 302.7 L350.5 313.2 L364.5 320" stroke="#101810" stroke-width="0.8" fill="none"/>
<path d="M341.8 255.7 L341.8 280 L336.6 285.3" stroke="#182018" stroke-width="0.6" fill="none"/>
<ellipse cx="354" cy="313" rx="7" ry="4" fill="#8a9488" opacity="0.55" transform="rotate(25 354 313)"/>
<ellipse cx="331" cy="268" rx="4" ry="7" fill="#7a8478" opacity="0.4"/>
<ellipse cx="380" cy="352" rx="9" ry="12" fill="#3e5044" opacity="0.5"/>
<path d="M401.4 250.4l2.6 -6.7M401.4 250.4l-6.2 -7.6M395.2 242.7l8.8 0.9M403 235.4l1.7 0.6M99.7 333.6l0.6 -5.8M134.5 258.9l-2 4.7M134.5 258.9l5.8 3.5M140.3 270.4l0.8 -4.3M140.3 270.4l-1.1 -0.3M132 266l7.2 4.1M132 266l-0.1 -0.6M131.9 265.3l0.6 -1.8M132 266l-5.7 7.2M402.2 302.1l-4.1 -4.2M398 297.9l1.9 -3.7M405 292.6l-5 1.6M401.4 250.4l0.8 2.6M395.2 242.7l-2.7 -1.1M402.2 253l-5.9 2.7M396.3 255.6l-5.8 -2.3M390.5 253.3l2 -11.8M149.7 274.1l0.3 0.1M149.7 274.1l-4.3 9.9M150 274.2l2.7 13.3M145.3 284l4.5 4.2M149.9 288.2l1 0.1M162.8 283.2l-3.9 -3.6M162.8 283.2l-1.2 7.8M158.9 279.6l-6.1 7.8M152.8 287.5l8.1 3.8M160.9 291.3l0.7 -0.2M156.9 297.2l3.2 -4M152.6 295.8l-1.6 -7.5M160 293.2l0.8 -1.9M144 293.8l5.9 -5.5M152.6 295.8l-4.4 5.3M148.2 301l-3.7 -4.8M134.5 258.9l-0.8 -3.2M133.7 255.6l3.5 -2M140.3 262.4l3.6 -3.5M137.2 253.7l6.7 5.2M133.7 255.6l-0.6 -0.3M132.5 263.5l-5.1 -3.2M122.4 267.6l3.9 5.5M122.4 267.6l0.7 -4.3M106 263.5l0.6 0.4M106.6 264l-4.7 7.4M401.3 308.9l0.3 2.6M370.1 389.7l-2.3 4.7M367.8 394.4l8.2 4.3M376 398.7l4.3 -2.1M381.3 389.5l-0.4 6.5M380.9 396l-0.5 0.7M386.1 407.5l2.2 5.6M348.1 337.4l7.2 -2M348.1 337.4l5.1 -6.4M355.3 335.3l-1.3 -4.2M353.2 330.9l0.8 0.1M401.3 308.9l-0.4 -0.2M398 297.9l-0.7 0.6M376.3 318.1l-1.7 -3.9M365.2 308.9l5.2 -1.9M345.2 340.1l8.9 2.3M345.2 340.1l2.8 -2.8M355.3 335.3l1.1 2.4M354.2 342.4l1.1 0.1M356.4 337.7l-0.6 4.1M318.4 303.4l0.1 1.5M318.5 304.9l2.1 4.1M320.6 309l1.2 0.5M325.6 295.5l4.4 3.1M330.5 302.1l-0.7 2.4M340.4 292.7l-5.7 -4.8M340.4 292.7l-10.4 5.9M334.7 287.9l-4 -0.3M324.9 293.3l5.8 -5.7M324.9 293.3l0.8 2.2M306.2 305.6l5.5 -5.4M306.2 305.6l-0 0.1M306.2 305.7l12.3 -0.7M318.4 303.4l-1.1 -1.5M317.3 301.9l-5.6 -1.7M304.2 294.8l2 10.8M141.1 266.1l6.7 -3.1M143.9 258.9l2.8 -0.8M147.7 263l-1.1 -4.9M147.9 272.6l1.8 1.5M150 265.3l1.2 -0.4M158.9 269.1l2.6 -2.8M151.2 264.8l4.2 -4.9M161.5 266.3l-1.6 -3.2M158.8 277.6l8.3 -2M162.8 283.2l7.7 0.1M167.1 275.7l3.4 7.7M167.1 292.5l-5.5 -1.4M167.1 292.5l6.8 -7M170.5 283.3l3.4 2.1M402.2 253l1.5 0.3M102.4 370.7l4.7 -1.4M107.1 369.3l4.4 3.3M218.4 386.5l-1.6 3.1M102.1 335l2.5 0.5M102.1 335l-1.7 7.3M104.5 335.5l1.9 5.4M106.4 340.9l-6.1 1.4M99.7 333.6l2.4 1.4M143.9 293.7l-4.9 -9.3M138.9 293.5l-1.8 -0.9M137.1 292.6l-0.7 -2.8M136.4 289.8l2.6 -5.4M126.5 291l1.8 -1.9M126.5 294.7l6 2.2M137.1 292.6l-4.6 4.3M136.4 289.8l-8 -0.7M144 293.8l-0.1 -0M145.3 284l-6.1 -0.8M136.7 308.3l8.1 2.8M136.7 308.3l-0.3 -1.3M136.4 307l1.3 -1M144.8 311.1l3.2 -3M147.9 308.2l-0.2 -2.9M146.3 304.8l1.4 0.4M135 311.1l7.4 6M142.5 317.1l2.3 -5.9M137.2 253.7l5.1 -5.7M142.3 247.9l6.3 7.4M154.6 257.8l0.8 2.1M154.6 257.8l-5.6 -2.5M150 265.3l-2.2 -2.3M148.9 255.3l-0.3 0M129.3 256.9l-9.4 -0.8M123.2 263.3l-4 -5.2M119.2 258.2l0.7 -2M121.7 267.8l-4.8 3.2M121.7 267.8l-8 -2.7M113.7 265.1l3.3 5.9M122.4 267.6l-0.8 0.1M111 262.8l1.1 -1.2M112.1 261.6l7.1 -3.5M107.7 264.2l3.5 11.7M114.5 278l-0.4 0M114.5 278l2.4 -7M111.1 275.9l2.9 2.1M101.9 271.3l4.4 5.2M111.1 275.9l-4.8 0.7M106.4 276.5l-5.2 3.2M101.2 279.8l-0.3 0.8M101.3 247.8l0.8 -0.1M102.1 247.7l2.9 2.3M366.9 350.1l-3.2 2M366.9 350.1l1 -6.3M357.5 349.7l-2.2 -7.2M357.5 349.7l4 2.6M380.1 381l-5 -3.8M375.1 377.1l-6.1 1.1M369 378.3l-0.8 6.9M386.2 384.4l0 -0.3M386.2 384.4l-4.9 5.1M370.1 389.7l-1.9 -4.3M386.2 384.1l-6.2 -3.1M368.2 385.4l0 -0.1M406.5 351.3l-6.3 2.6M402.1 344.1l-1.9 9.9M376.4 353l3 -3.6M367.9 343.8l4.2 -4.3M379.4 344.5l0 4.9M393.4 404.8l1.6 -1.4M393.4 404.8l-0.1 0.3M395 403.4l1.1 -0.2M402.4 405.7l-6.3 -2.5M349.4 412.1l-8.2 0.3M383.4 397.5l1.3 7.2M393.4 404.8l-6.5 -1.5M390.6 397.4l4.5 6M390.6 397.4l-3.7 1.6M386.2 384.4l5.5 5.2M380.9 396l2.5 1.5M391.8 389.7l-1.2 7.7M380.4 396.7l0.9 8.8M384.2 405.2l-2.9 0.3M384.2 405.2l0.5 -0.5M386.1 407.5l-1.9 -2.4M373.4 407.5l3.5 1.8M376.8 409.3l1.7 3.9M376 398.7l-3 8.4M381.3 405.5l-4.5 3.9M373.1 407.1l0.3 0.4M387.2 299.5l4.7 1.6M387.2 299.5l-0.2 -3.7M397.3 298.5l-4.8 2.8M392.5 301.2l1.1 5.7M377.9 292.5l-4.8 6M373.1 298.5l8.3 2.5M381.4 301l1.5 -0.1M387.2 299.5l-3.6 1.6M391.9 301.1l-6.4 9.9M376.8 318.4l1.3 -0.4M376.8 318.4l-0.5 -0.3M378 318l3.4 -6.4M374.6 314.2l-0.2 -7.2M377.4 307.8l4 3.9M371.6 301.2l5.8 2.6M371.6 301.2l0.2 4.1M371.8 305.3l0.2 0.1M372 305.4l4.9 -0.8M377.4 303.8l-0.5 0.9M371.1 299.1l0.5 2.1M381.4 301l-4 2.8M370.4 307.1l1.4 -1.7M377.4 307.8l-0.5 -3.1M383.7 301.1l-0.7 -0.2M214.4 313.8l1.5 5.1M214.4 313.8l0.5 -3.8M215.9 318.9l8.4 -6.2M224.3 312.8l-5.3 -3.9M214.9 310l4 -1.1M224.3 312.8l2.6 -0.1M219 308.9l5.7 -5M226.9 312.7l-2.2 -8.8M362.6 332.9l-4.9 4M362.6 332.9l1 3.4M357.7 337l5.5 0.9M356.4 337.7l1.3 -0.8M363.2 340.7l0 -2.9M372.1 337.8l-8.5 -1.5M330.5 302.1l9.8 1.3M338.8 309.6l-4.4 -0.4M334.4 309.2l-0.4 -0.2M312.5 290.4l0.8 -3.6M313.3 286.9l3.8 6.7M317.3 301.9l-1.8 -7.3M324.9 293.3l-3.6 -2.2M321.3 291.1l-4.2 2.4M275.7 364.5l-6.2 0.9M275.7 364.5l-0.2 -5.5M267.9 361l1.5 4.4M312.1 345.1l-9.7 3.8M312.1 345.1l-0.1 -2.1M302.4 348.9l-0.9 -0.4M301.6 348.5l1.7 -9.1M306.1 338.3l-2.9 1.1M321.1 349.3l1.7 -6M315 339.1l-3 3.9M315.9 339l0.8 0.3M322.9 343.3l-6.1 -4M295.3 342.4l4.2 6.3M297.9 338.5l2.5 10M289.7 336.8l-0.3 2.8M298.4 337.5l-0.5 1M298.9 337.2l4.3 2.2M301.6 348.5l-1.1 0M320.6 309l-5.1 3.7M225.7 301l3 -3.7M215.7 296.8l-0.4 -1.1M215.3 295.7l0.5 -2.8M215.8 292.9l8.6 -1M195.6 293.5l-0.1 3.8M184.5 297.8l9.3 3.2M195.4 297.3l-1.6 3.7M161.5 266.3l6.8 0.4M167.1 275.7l2.9 -5.3M169.9 270.3l-1.7 -3.6M164.2 254.8l5 10.5M202.4 277.8l2.5 -5.9M204.9 271.9l1.5 0.2M213.1 280.6l-6.7 -8.4M213.1 280.6l-1 0.5M212.1 281.1l-7.9 0.3M217.8 288.6l7.7 -1.5M217.5 281.8l6.3 1.1M223.8 282.9l1.9 4.1M225.7 287l-0.2 0.1M213.1 280.6l3.4 -0.8M216.5 279.8l1 2.1M210.8 288l1.3 -6.9M396.3 255.6l1.3 3.8M403.8 253.2l0.7 6.7M401 260.8l3.4 -0.9M404.5 259.9l1.9 1.5M403 235.4l-10.1 -1.5M392.5 241.6l-1.5 -3.5M392.9 233.9l-1.9 4.2M391 238.1l-0 -0M234.9 258.4l4.1 -7.3M234.9 258.4l1.2 3.6M242.6 251.1l-0.4 -0.5M242.6 251.1l0.8 10M238.9 251.1l3.3 -0.5M236 262l7.4 -1M223.7 265.9l8.1 6.4M223.7 265.9l4.2 -7.7M227.9 258.1l7 0.3M231.8 272.3l4.4 -6.4M236 262l0.1 3.9M242.6 251.1l9.1 7.9M251.7 258.9l-5 4.4M243.4 261l3.3 2.3M238.9 251.1l-8 -6.4M230.9 244.7l-8.8 6M101.4 404.6l1.4 0.5M111.7 410l-3.3 -2M109.4 403.7l-1 4.4M118.5 408.1l1.5 -1M118.5 408.1l-0.1 -0.1M120 407.2l1.9 -4.9M121.9 402.3l-3.5 -3.8M116.2 399.1l-1.7 4.5M116.2 399.1l2.3 -0.6M108.2 402.2l1.2 1.4M135.9 406.8l0.3 1.4M135.9 406.8l-8.6 -2.7M136.2 408.3l-7.8 2M127.3 404.2l-5.2 3.2M137.3 409.7l-1.1 -1.5M120 407.2l2.1 0.2M124.2 401.3l3.1 2.9M105.9 385.3l2.3 -4.8M102.4 370.7l-0.3 -0.8M104.4 362.4l-1.7 -2.5M104.4 362.4l-3.1 4.3M102.1 369.9l-0.9 -3.2M108.3 363.8l-3.9 -1.4M101 355.6l0.5 0.2M101.5 355.9l1.2 4.1M108.3 363.8l2.1 -1M110.4 362.8l-2.3 -8.2M294.2 408.9l-3.6 -3.1M290.6 405.8l-0.8 -0.2M315.6 409l0 -11M305.6 410.5l-1.8 -1.9M315.6 398l-5.3 1.6M310.3 399.6l-6.4 7.7M303.8 408.6l0.2 -1.2M318.3 413.3l-2.7 -4.3M303.7 408.6l0.1 -0.1M301.3 395.4l2.9 0.6M304.1 396l6.2 3.6M298.4 400.9l5.6 6.4M290.6 405.8l7.8 -4.9M357.4 389.5l3.6 -4.6M355.2 380.5l-1.1 4.6M355.2 380.5l3.5 -0.5M358.6 380l2.4 5M356.8 389.3l-2.6 -4.2M350.8 355.5l-3.7 -0.3M350.8 355.5l1.4 -3.8M347.1 355.3l0.5 -3.1M352.2 351.7l-3.3 -1.3M357.5 349.7l-5.3 2M352.8 361.7l3.1 -0.2M352.8 361.7l-0.9 -0.9M351.8 360.8l-1 -5.3M358.7 358.6l2.8 -6.3M354.2 342.4l-6.1 7M348.1 349.4l0.9 1M345 347.3l-0.3 6.1M345 347.3l3.1 2.1M344.6 353.4l3 -1.3M343.4 361.4l4.2 -1.3M343.4 361.4l-2 -3.9M347.6 360.1l-1.6 -4.4M341.4 357.5l1.5 -2.2M346 355.7l-2.3 -0.6M351.8 360.8l-4.2 -0.7M344.6 353.4l-0.9 1.7M352.8 361.7l-0.7 1.2M352.1 362.9l-4.8 2.8M343.4 361.4l-0.9 3.2M347.3 365.7l-4.9 -1.2M238.1 409.7l-1 1M137 403.2l9.1 -3.3M137 403.2l0.3 -1.1M137.3 402.1l5.8 -4.8M143.1 397.3l2.8 2.1M206.6 389.3l-1.8 0.6M216.8 389.5l0.3 3M217.1 392.5l-2.2 4.8M205.7 396.2l-1 -6.2M205.7 396.2l2.7 0.7M214.9 397.3l-6.4 -0.4M204.8 389.9l-0.1 0.1M100.4 315.5l0.1 -2.4M100.3 327.8l0.6 -0.7M107.1 313l0.2 6.8M101.3 316.8l5.9 3.1M107.1 313l0.6 -0.3M107.2 319.9l0.7 0.9M107.9 320.8l4.9 -4.7M107.7 312.7l5.2 3.3M110.2 338.2l-3.1 -4.6M110.2 338.2l1.1 -4.7M111.3 333.5l-1.2 -0.7M110.1 332.8l-3 0.8M111.3 333.5l2.1 0.5M111.6 327l-0.4 0.4M113.5 328.4l-0 5.6M120.8 306.4l9.4 0.5M130.1 306.9l0.3 4.4M130.5 311.3l-10.4 1.8M119.9 312.3l0.2 0.8M120.3 302.1l0.5 4.3M120.3 302.1l2.4 -1.9M122.7 300.2l9.5 4M132.2 304.2l-2 2.7M132.2 304.2l1 -0.4M131.8 312.1l-1.4 -0.8M131.8 312.1l2 -0.2M128.3 289.1l2 -7.4M130.3 281.6l8 0.3M126.5 291l-6.2 -4.1M126.5 274.4l-0.1 1.1M119.1 279.5l-4.7 -1.5M125.9 276.7l0.4 -1.2M134.3 300.2l4.4 -2.3M134.3 300.2l5.6 1.8M138.7 297.9l2 1M140.4 301.9l-0.5 0.1M122.7 300.2l3.2 -4.9M133.2 303.8l1.1 -3.6M144.5 296.3l-3.9 2.6M148.2 301l0.1 2.8M148.3 303.8l-0.6 1.4M146.3 304.8l-5.9 -2.9M153.1 249.4l-4.1 5.9M153.1 249.4l8 -0.9M162.1 250l-1.1 -1.5M136.8 232l-4.3 8.7M114.7 238.4l-3.7 -6.3M133 255.4l-4.9 -7.7M119.9 256.1l-0.1 -3.3M119.8 252.8l8.3 -5.2M114.7 238.4l1.6 2.9M116.3 241.3l5.6 -1.4M132.2 243.4l-3.7 2.2M132.2 243.4l10.2 2.2M142.3 245.5l-0.1 2.4M132.2 243.4l0.4 -2.6M128.8 236.4l-5.7 4.1M128.5 245.6l-5.4 -5M122 240l1.1 0.5M107.8 251.1l7.6 -6.9M107.8 251.1l2.9 1.7M105.2 250.8l2.5 0.3M119.8 252.8l-2.1 -2M358.7 358.6l6.1 4.8M363.7 352.1l4.3 8.7M364.8 363.5l3.2 -2.7M394 351.5l-6.3 0.9M387.8 352.4l-2.2 -2.1M378 370.7l7.2 -5.2M379.4 349.4l6.2 0.9M386.6 359.7l-9.8 -4.9M371.3 361.8l-3.3 -1M376.8 354.8l-1.8 5.8M378 370.7l-0 0M401.8 343.7l-7 8.4M401.8 343.7l0.3 0.3M394.9 352.1l-0.8 -0.6M386.6 359.7l1.1 2.1M396 353.7l-8.4 8.1M406.9 356.7l-0.4 -5.4M401.3 342.4l0.5 1.3M404.1 360l1.7 2.8M404.1 360l-4.6 -2.1M399.5 358l-2.4 3.6M397.1 361.5l2.5 6.6M403.9 368.2l-4.2 -0.1M406.9 356.7l-2.7 3.3M388 364.1l-0.3 -2.3M388 364.1l9.2 -2.6M385 339.3l2.1 1.1M387.2 340.7l6.2 3.3M406.1 319.5l-5 8.9M387.6 381.4l0.5 -1.7M375.1 377.1l1.1 -4.6M376.2 372.6l1.6 -1.4M388.2 379.7l-0.4 -2M391.8 389.7l1 0.3M396.1 403.2l1.8 -6.7M392.8 389.9l2.7 2.3M387.6 381.4l13.3 1.4M401 382.9l-0.9 4.2M392.8 389.9l7.3 -2.9M398 396.5l4.1 -0.3M402 396.1l0.6 -4M400.1 387l4.4 2.9M402.6 392.1l1.9 -2.2M349.4 412.1l0.2 -1M355 407.2l-3.1 1.5M351.9 408.7l-2.4 2.4M357.4 401.7l7.1 -5.3M357.4 401.7l0.2 2.3M362.6 408.1l6.8 -2.9M365.8 396.3l-1.2 0.1M357.6 390l-2.3 5.5M357.6 390l6.9 6.4M355.9 400.7l1.5 0.9M355 407.2l2.6 -3.2M357.4 389.5l0.3 0.5M361 384.9l7.2 0.4M340.4 292.7l1.8 0.3M342.3 293.1l3.5 2M340.2 303.4l5.7 -7M345.9 296.5l-0.1 -1.4M342.3 293.1l-0 -9.5M342.2 283.6l3.4 -2.9M347.4 290.2l-0.6 4.1M345.7 295.1l1 -0.8M338.8 309.6l0.5 0.8M339.3 310.4l8.3 -0.7M354.4 319.4l0.3 -0.8M354.4 319.4l4.2 8.7M354.7 318.6l7.4 -0.1M354.7 318.6l-0 0M358.7 328.2l4.8 0.7M363.3 318.9l-1.2 -0.4M363.3 318.9l1.5 9.4M364.8 328.3l-1.3 0.6M354 331.1l4.7 -2.9M372.1 329.1l4.6 -10.7M372.1 329.1l-7.3 -0.8M368.1 316l-4.8 2.9M373.6 331.8l-1.5 6M339.3 310.4l0 0.2M348.7 314.2l-1 -4.5M348.7 314.2l-5.8 3.6M284.4 281.4l10.4 -8.5M282.3 279.7l4.7 -10M287 269.8l1 -0.4M294.7 273l-0.1 -0.9M287.9 269.4l6.7 2.7M313.8 284.6l4.8 0.2M313.8 284.6l-0.2 0.3M313.5 284.9l-0.3 2M319.8 286.1l-1.2 -1.3M330.7 287.6l-2.9 -4.4M319.8 286.1l8 -2.9M391.6 312l4.4 7.5M391.6 312l-0 -0.2M391.6 311.8l0.2 -0.2M391.9 311.6l6.6 1.7M396.1 319.5l2.1 -4.1M393.6 306.9l-1.7 4.7M401.5 311.5l-3.1 1.8M405.8 319.5l-9.6 1.7M405.8 319.5l-7.6 -4.1M396.2 321.2l-0.1 -1.7M397.4 259.9l-7.2 3.7M390.2 263.6l-1.7 -9M405 292.6l0.3 -5.5M406 285.4l-0.7 1.7M397.5 291.6l-1.8 -2M405.3 287l-5.6 -3.2M395.7 289.6l4 -5.7M399.7 283.9l-0.7 -2.9M397.4 259.9l-0.8 6.2M390.2 263.6l0.1 4.7M387 295.8l-0.8 -9.8M377.9 292.5l0.5 -5.2M386.2 286l-7.8 1.3M366.7 296.8l0.1 -1.7M369 282.4l-7 3.8M365.6 276l-5.9 8.6M362 286.3l-2.3 -1.6M366.7 295.1l-4.4 -6.3M362.3 288.8l-0.3 -2.6M374.8 285.9l-1.3 -1.8M375.7 277.1l-2.1 7M207.3 333.2l-0.9 7.1M206.4 340.3l4.4 1.2M210.8 341.5l2.4 -5.5M211.6 378.3l1 -2.1M212.6 376.2l1.2 -1.1M213.8 375.1l6.2 0.4M256 312l-9.3 -2.4M259 308.6l-7 -4M252 304.6l-5.5 4.1M342.9 355.3l-3.2 -5.7M343.6 331.9l-5.3 1M343.6 331.9l0.8 8.3M344.4 340.2l-1.5 1.3M338.3 332.9l-5.5 6.8M332.8 339.6l0.1 0.1M332.9 339.7l10 1.8M339.2 365.5l-6.1 4.8M339.2 365.5l1.8 0.4M341.6 368.3l-0.5 -2.4M339.9 371.1l-6.2 1.6M333.2 370.3l0.5 2.4M329.9 332.4l0.8 2.6M329.9 332.4l-7 -2M322.9 330.4l-0.2 0M322.7 330.5l-1.8 2.4M320.8 333.3l0 -0.4M322.5 337.6l2.7 3M331.6 338.7l-6.3 1.9M337.4 332l-3.3 -7.2M315.9 339l4.9 -5.7M316.7 339.3l5.8 -1.7M332.8 339.6l-1.2 -0.9M326.7 352.6l4.1 -0.7M314.2 336.9l-7.4 -0.7M311.6 332.5l-4.2 -0M306.7 336.2l0.6 -3.8M306.1 338.3l0.6 -2.1M304.2 294.8l-0.8 -0.8M303.4 294l4.4 -2.6M313.5 284.9l-2.7 1.5M324.5 314l2.9 0.3M327.4 314.3l4.8 2.3M333.8 318.1l1.8 5.6M324.6 326.2l5.1 -2.9M322.5 320.1l1.3 -1.2M334 309l-6.5 5.3M334.4 309.2l-2.1 7.4M339.3 310.6l-5.5 7.5M342.9 317.7l-0.8 3.1M245.7 341.9l2.7 -8.7M240.6 339.4l2.2 -8.4M248.4 333.3l-5.6 -2.3M255.6 346l-3 0.1M254.3 356.9l-8.3 -2.4M252.5 346.1l-6.5 8.4M240.8 363.6l8.8 3.7M240.8 363.6l-0.2 0.1M240.7 363.7l-2.7 10.9M247.7 373.2l2 -5.9M238.2 375.3l-0.3 -0.5M238 374.8l-0 -0.1M275.7 358.1l0.1 -5.9M275.7 358.1l-4.4 -2.7M271.3 355.4l2.1 -4.6M275.8 352.2l-2.4 -1.4M272.2 348.8l-3.2 0.8M272.2 348.8l1.2 2M269 349.6l-0 5.6M275.8 358.2l-0.1 -0.1M267.9 361l-3.4 -2.9M268.9 355.1l-4.4 2.9M276.3 342.7l0.6 -0.4M276.3 342.7l-0.6 -0M281 335.2l-1.6 5.4M275.7 342.7l-4.4 -2.9M271 338.9l1.2 -6.2M272.2 332.7l2.7 -2M271.3 339.8l-4.6 3.4M271 338.9l-8.5 -3.4M266.7 343.2l-7.8 -5.4M262.5 335.5l-3.6 2.4M289.3 352.1l-3.7 -2.5M289.3 352.1l3.1 -0.4M292.4 351.7l-1 -6.5M291.3 345.2l-5.5 0.3M285.6 347l0.2 -1.5M293.6 352l-1.2 -0.3M293.6 352l5.9 -3.4M291.6 342.1l-0.2 3.1M289.3 339.7l-3.6 2.4M285.7 342.1l0.1 3.3M285.7 342.1l-6.4 -1.5M296.1 307.6l2.5 1.2M294.1 317.6l2 0M294.1 317.6l-1.1 -1.1M294.9 305.6l1.2 2M287.8 306.6l-1.5 1.8M286.3 308.4l0.7 5.4M292.2 311.4l-5.3 2.4M298.7 328l-2.8 -0.6M298.7 328l2.2 -0.8M295.9 327.4l0.3 -9.7M299.9 314.8l1.7 1.8M301.7 316.6l-0.8 10.6M307.4 332.5l-3.5 -4.8M300.9 327.2l3 0.4M289.7 336.8l-0.5 -1.5M295.9 327.4l-1 0M289.2 335.3l0 -0.1M289.2 335.3l-6.9 -0.9M294.1 317.6l-3.1 3.8M291 321.4l0.6 3.8M291 321.4l-2.7 -3.9M287 313.8l-1.5 1.7M288.3 317.5l-2.8 -2.1M294.9 305.6l-0.6 -3M278.2 297l1.3 -0.6M279.5 296.4l14.8 6.3M268.9 291.3l0.1 -3.7M284.4 281.4l1.4 2.7M282.3 279.7l-1.2 -0.3M281.1 279.5l-12.2 8.1M277.5 297.2l0.7 -0.2M285.8 284.1l-1.4 6.5M284.3 290.6l-0.7 1.9M279.5 296.4l4.1 -3.9M253.4 299.7l5.7 2.1M253.4 299.7l-1.4 4.9M259 308.6l2.3 -0.6M261.3 308.1l-2.1 -6.3M257.2 291.8l-4.6 5.2M268.1 292.4l-9 9.4M261.3 308.1l0.9 0.3M262.2 308.3l0.2 -0.1M268.1 292.4l-4.7 14.7M263.5 307.1l-1.1 1.2M254.2 247.6l2.4 1.4M254.2 247.6l-2 11.4M252.1 259l3.5 1.4M256.6 249l2.8 9.2M255.6 260.3l3.8 -2.1M238.2 290.8l4.9 2.3M238.2 290.8l-5 2.1M241.6 304.8l2.7 -9.4M244.3 295.4l-1.3 -2.3M229.1 288.4l-1.3 -1.3M229.1 288.4l4.1 4.6M227.7 287.1l-2.1 -0.1M252.6 297l-8.3 -1.6M205.6 287.1l-1.4 -5.4M198.9 285.6l5.3 -3.9M204.6 294.7l-1 -0.6M203.6 294.1l-1.1 -1.4M210.8 288l-5.2 -0.8M195.6 293.5l-0.4 -8.3M195.6 293.5l0 -0M201.9 292.6l-1.6 0.1M193.6 283.6l1.5 1.7M193.6 283.6l-0.4 -2.9M202.4 277.8l-5 0.4M197.4 278.3l-4.1 2.4M188.8 280.1l1.9 -0.6M188.8 280.1l-10 -0.5M189.1 272.8l-5.2 -4.1M178.9 279.7l-0.2 -5.2M184.8 291.4l4.1 -11.3M184.8 291.4l0.7 0.8M197.4 278.3l-2.9 -6.8M184.2 266.2l-9 -6.2M175.2 260l-6.1 5.3M194.4 271.5l3.5 -5M184.2 266.2l3.1 -2.8M197.9 266.5l-3.1 -3.2M216 267.3l-3.2 -3.4M216 267.3l-5.9 4.6M212.8 263.9l-9 3M210.1 271.9l-3.8 0.2M203.1 267.8l0.7 -1M212.8 263.2l-7.6 -3.2M281.1 279.5l-6.2 -8.5M273.8 264.4l13.2 -5.4M287 259l0.9 10.4M274.8 268.3l0.1 0.1M260.4 239.7l-2.5 -1.6M264 230.8l2.8 1M257.9 238.1l1.4 -5.2M273.3 231.2l-0.6 0.4M264.3 252.7l-0.2 -6.2M259.1 249l3.5 -3.6M264.1 246.5l-1.4 -1.1M256.6 249l2.5 -0.1M266.2 257.1l-2 -4.3M252.7 237.8l-8.9 5.8M256.1 239l-3 7M253.1 246l-8.9 2.2M260.4 239.7l2.3 5.7M254.2 247.6l-1.1 -1.6M257.9 238.1l-1.8 1M242.2 250.6l2 -2.4M234.2 238.4l-3.3 4.1M230.9 244.7l0 -2.3M231.9 273.7l-0.3 0.5M231.6 274.2l-0.6 2.7M231 276.9l0.3 2.6M237.7 275.8l1.9 9M231.3 279.4l3 4.1M234.3 283.5l3.8 4.1M239.6 284.8l-1.5 2.8M231.8 272.3l0.1 1.4M243 275.8l0.9 -0.3M240.9 268.9l3 6.7M240.9 268.9l-3.4 -2.7M236.2 265.9l1.4 0.2M227.7 287.1l3.6 -7.6M225 280.9l-1.3 2M229.1 288.4l5.2 -4.8M238.2 290.8l-0.1 -3.2M250.9 283.7l-0 -0M219.7 277.3l-3 1.8M215.7 276.8l1 2.2M215.7 276.8l1.6 -9.3M220.9 276.1l-1.3 -8.9M217.4 267.6l2.3 -0.4M225 280.9l-5.3 -3.6M231.6 274.2l-10.7 1.9M216.5 279.8l0.3 -0.7M216 267.3l1.3 0.2M223.7 265.9l-1.8 0M221.8 265.9l-2.2 1.3M243.9 275.6l0.5 -0.1M244.4 275.5l7.5 4.5M368.9 246.6l-4.2 -4.7M368.9 246.6l6 -0.1M374.9 246.6l2.1 -1.6M377.8 235.3l13.2 2.8M377.8 235.3l-1.1 8.2M391 238.1l-10.9 7.8M377 245l3.1 1M387.5 254.7l-4.8 -1.3M380.1 245.9l2.7 7.5M377.3 234.9l0.7 -2.3M377.3 234.9l-9 -1.2M377.8 235.3l-0.5 -0.4M366.8 238.4l1.5 -4.7M374.9 246.6l0.1 3.7M382.7 253.4l-4.3 1.7M375 250.2l3.5 4.8M356.8 283.2l-2.5 -5.8M356.8 283.2l2.9 1.4M365.6 276l-8.2 0.3M354.4 277.4l3 -1.1M345.7 280.7l4.4 -5.3M347.4 290.2l3.5 -14.8M334.5 257.7l3.2 9.7M334.9 257l9.9 3.7M344.8 260.7l-3.4 5.5M221.8 265.9l-5.1 -11.3M222.1 250.7l-2.5 -0.1M219.6 250.7l-2.9 3.9M226.3 231.4l-0.3 0.1M222.6 232l-1.4 -2M234.2 238.4l0.2 -4.2M230.3 241.9l0.7 0.6M230.3 241.9l-4.2 -10.4M226.3 231.4l4.6 0.6M234.4 234.2l-3.5 -2.2M215.3 239.1l1.3 1.5M216.5 240.7l4.6 -3M214.1 233.4l8 -0.5M230.3 241.9l-9.2 -4.2M215.9 245l3.7 5.7M213.5 232.2l0.4 -0.6M213.5 232.2l0.6 1.3M222.6 232l-0.4 0.9M105.9 385.3l2.6 3.6M108.5 388.9l-4.7 3.9M116.2 399.1l-3.9 -3.9M118.5 398.5l0.7 -0.9M112.5 391l-0.2 4.2M119.1 397.5l-2.2 -7.8M163.2 313.9l-2.3 4.8M155.1 314.1l2.6 4.4M160.9 318.8l-3.2 -0.3M213.3 322l-9.4 -4.7M199.1 320.2l-2.2 4.2M197.1 324.8l-0.3 -0.5M115.5 380.8l4.3 0.1M119.9 381l1.9 -1.6M121.7 379.4l-4.3 -5M114.2 379.8l-0.7 -1.2M109.5 389.1l3 1.9M109.5 389.1l4.8 -9.3M117.8 389.2l-2.2 -8.3M118.5 389.1l-0.7 0M118.5 389.1l4.2 -3M122.6 386.1l-2.8 -5.1M108.3 380.6l5.3 -1.9M108.5 388.9l0.9 0.2M111.9 373.8l1.9 2.2M282.6 407l3 -4.3M282.6 407l-13.8 -4M285.6 402.7l-1 -3.4M283.1 398.3l-0.8 -0.1M282.3 398.2l-13.1 3.4M268.9 403l-0.1 -0.3M290.4 395.2l-5.8 4.1M290.4 395.2l8 5.4M289.8 405.6l-4.2 -2.9M274.8 389.4l-3.5 -0.1M283.5 386l-0.4 12.3M283.5 386l7.2 -0M290.7 385.9l1.1 7.2M301.3 395.4l-1.8 -3M291.8 393.1l7.6 -0.8M350.6 393.3l3.2 -3.2M350.6 393.3l-4.1 2.2M346.5 395.5l-1 -1.1M345.5 394.4l3.9 -7.5M353.8 390.1l-4.5 -3.2M348.4 379.2l2.4 0.2M350.8 379.5l-0.2 5.3M350.6 384.8l-1.4 1.5M340.2 388.8l4.7 -4.3M340.2 388.8l0.1 2.9M340.3 391.7l5.2 2.7M344.9 384.5l0.2 -0.1M355.2 380.5l-3.5 -1.4M351.6 379.1l-0.8 0.3M354.1 385.1l-3.5 -0.3M330 400.4l4.5 -0.4M334.4 400l-2.4 8.6M326.3 405.7l-0.2 -0.4M326.3 405.7l5 3.1M331.3 408.8l0.7 -0.3M329.8 393.6l-11.2 2.9M318.6 396.6l7.6 8.7M330.3 393.4l-0.5 0.2M330.3 393.4l5.5 1.4M335.9 397.8l-1.4 2.2M335.9 397.8l5.8 6.7M338.6 408.3l3.1 -3.9M338.6 408.3l-6.6 0.2M318.3 413.3l8 -7.6M318.6 396.6l-0.1 -0.1M341.2 412.4l-2.6 -4.1M355.9 361.5l3.6 6.2M358.3 368.4l1.2 -0.8M358.3 368.4l-5.9 -1.4M352.3 367l-0.2 -0.3M358.3 368.4l-3.4 2.4M352.3 367l2.6 3.8M345.3 375.2l3.5 -3.7M345.3 375.2l-3.4 -6.7M341.9 368.5l6.2 1.7M348 370.2l0.7 0.9M348.7 371.1l0.1 0.5M351.6 379.1l1.2 -5.7M344.9 376.1l0.4 -0.9M344.9 376.1l3.4 3.1M347.3 365.7l0.7 4.5M341.6 368.3l0.3 0.2M352.1 366.7l-3.3 4.3M354.9 370.8l-1.1 2.2M352.8 373.4l1 -0.4M225.9 404.9l5.4 -1.9M225.9 404.9l-1 1.5M225.2 408.6l5.6 -2.2M230.8 406.5l1.3 -2.1M231.3 403l0.8 1.4M225.1 409.9l0.9 2.1M225.1 409.9l0.1 -1.3M238.1 409.7l0.5 -1.7M238.6 408.1l-7.8 -1.6M233 399.4l4.4 1.1M239.9 406l-2.4 -5.4M239.9 406l-1.2 1.8M226.9 401l3 -1.5M229.9 399.6l-3.7 -4.9M224.5 396.4l0.1 -0.6M233 399.4l-0.1 -0.1M232.9 399.3l-3 0.3M223.7 405.4l-2.7 -5.1M217.1 392.5l7.5 3.3M214.9 397.3l0.7 1.8M258.2 405l4.5 8.4M268.8 402.7l-10.5 2.3M145.9 395.5l4.9 -4.8M150.4 389.9l0.4 0.7M150.4 389.9l-11.3 1.7M139.1 391.6l4.5 4.3M143.1 397.3l0.5 -1.3M146 399.4l-0 -3.9M137.3 402.1l1 -10.6M165.3 396.9l4.4 1.3M165.3 396.9l-3.9 5.7M161.4 402.6l4.3 -0.7M165.7 401.9l4.1 -3.7M157.9 399.2l-9 5.3M157.9 399.2l-2.9 -4.8M154.6 394.2l0.4 0.1M146.1 399.9l2.5 1.1M150.8 390.7l3.8 3.5M137 403.2l-1 1.6M136 404.7l-0.1 2.1M137.3 409.7l11.4 -2M148.7 407.7l0.1 -3.3M148.7 407.7l0.3 0.2M216.3 404.4l-0.7 -5.2M216.3 404.4l-1.2 2.3M215.1 406.7l-5.7 -1M210.5 403.6l-1.1 2.1M223.7 405.4l-7.4 -1.1M215.6 399.1l-0 0M208.5 396.9l2.1 6.7M214.8 412.1l0 -0.2M211.6 378.3l-5.6 0.5M204.8 389.9l-1 -6.4M206.1 378.8l-2.3 4.6M214.9 310l-2.3 -3.8M212.6 306.2l-0.7 -1.7M204.6 294.7l0.7 4.7M205.2 299.4l6.2 5.1M211.9 304.5l-0.5 -0M193.8 301l0.1 0.4M200.3 300.3l0.2 1.6M200.5 301.9l-2.3 0.9M205.2 299.4l-2.8 3.8M200.5 301.9l2 1.2M208.2 305.1l-5.1 -0.5M202.4 303.2l0.8 1.4M197.8 306.6l0.3 0.9M197.8 306.6l-4.8 -2.6M193 304l-3.5 4.4M190.5 313.5l7.3 1.2M190.5 313.5l-0.3 -4.3M197.8 314.7l0.1 -1.2M197.9 313.5l-4.1 -4M201 308.8l-2.9 -1.3M193.9 301.4l-0.9 2.5M115.6 291.4l0.2 -0.8M109.7 304.1l10.6 -2M109.7 304.1l0.8 -5.6M116.3 297.7l-5.8 0.8M120.3 302.1l-0 -0M115.1 292.7l0.5 -1.2M115.1 292.7l0.1 1.3M116.3 297.7l-1.2 -3.8M102.5 302l1.8 -4.8M104.3 297.2l-1.1 -5.4M110.5 298.5l-1.4 -1.2M115.1 292.7l-5.6 -0.4M109.9 295.8l-0.4 -3.6M100.9 327.1l0 -0M101 327.1l1.4 -2.4M107.9 320.8l0 0.6M108 321.3l-1 0.8M102.3 324.6l4.6 -2.5M112.9 316l6.4 -1.2M108 321.3l3.9 3.3M111.9 324.7l5.7 -2.5M119.3 314.8l-1.4 6.7M117.6 322.2l0.3 -0.7M131.8 312.1l-0.2 1.1M120.1 313.1l-0.1 0.9M120 314l7.9 5.9M172.5 301.5l1 -3.6M172.5 301.5l7.9 4.8M183.4 299.7l-0.9 6.4M183.4 299.7l-8.5 -2.5M180.4 306.4l1.7 0.1M184.5 297.8l-1.1 1.8M189.5 308.4l-7 -2.4M167.1 292.5l0.2 1.1M167.3 293.6l6.2 4.3M190.5 313.5l-1.3 6M182.1 306.4l-1.2 7.7M180.8 314.1l8.3 5.4M199.1 320.2l-1.3 -5.4M196.9 324.4l-6.9 -2.1M189.1 319.5l0.9 2.8M170.1 314.9l-1.7 4.8M168.4 319.6l1.8 1.3M170.2 321l8.5 0.3M154.9 312.5l4.2 -3.8M159.1 308.7l7.2 2.8M166.4 320.8l-5.5 -2.1M170.1 314.9l-0.9 -3.3M166.3 311.5l2.9 0.1M180.8 314.1l-2.3 2.2M169.2 311.6l0.3 -0.8M139 277.9l-6.7 -2.8M139 277.9l2.2 -6.2M132.3 275.1l8.4 -4.1M141.2 271.7l-0.6 -0.7M160.1 233.9l-14.4 6.3M160.5 234.9l-0.1 10.8M148.7 243.9l-3.2 -2.5M153.1 249.4l-4.4 -5.6M161 248.5l-0.6 -2.8M164.2 254.8l0.1 -1.9M162.1 250l1 0.5M164.3 252.9l-1.2 -2.4M111.1 232.2l-7.1 2.8M112.8 243.2l-4.7 -2.6M108.1 240.6l-4.1 -5.6M104 234.9l-2.9 0.4M106.6 246l-6.7 -6.7M105 249.9l1.6 -3.9M108.1 240.6l-1.5 2.4M364.8 363.5l-0.1 0.6M360.1 368l0.6 -0M360.7 367.9l3.9 -3.9M357.7 375.1l2.4 -7M360.1 368.1l1.3 8.7M359.8 377.6l1.6 -0.7M353.8 373l3.9 2.1M358.6 380l1.2 -2.4M387.1 340.5l4.6 -2.6M393.4 344l3.9 -2.2M401.3 342.4l-1.6 -1.4M399.7 368.1l-0.5 0.3M399.2 368.4l1 6.5M401 382.9l1.7 -1.8M402.7 381.1l0.8 -0.2M361.7 307.1l3.5 -9.2M365.1 297.9l-4.8 -0.8M360.3 297.2l-7.7 7M360.4 307.5l-0.4 0M365.2 308.9l-3.6 -1.9M362.1 318.5l-1.7 -11M366.7 296.8l-1.6 1.1M348.7 314.2l3.5 1.9M352.2 316.1l2.7 -10.4M350.8 303.5l1.8 0.7M354.7 318.6l5.3 -11.1M358.3 295.8l-10.8 -1.7M351.1 291.2l-3.6 2.9M362.3 288.8l-3.3 2.2M360.3 297.2l-2.1 -1.4M356.8 283.2l-5.8 7.9M354.4 277.4l-3.5 -2M353.2 330.9l-1.4 -0.9M354.4 319.4l-2.4 1.8M351.8 330l0.3 -8.8M343.9 329.8l3.2 -0.7M351.8 330l-4.6 -0.9M337.8 235.3l-7.6 -5.4M330.2 229.9l-0.1 -0.4M290.8 241.4l-3.4 -0.6M283.8 242.1l-0.5 7.6M273.8 264.4l-0.1 -0.1M273.7 264.3l-1 -1.9M272.6 262.4l10 -9.6M287 259l0.9 -1.7M287.9 257.3l-5.2 -4.5M282.4 229.8l-1.8 2.3M282.4 229.8l7.8 2.3M292.2 240.4l-2 -8.3M295.8 270.7l-1.7 -14M287.9 257.3l4.3 -1.4M294.1 256.7l-1.9 -0.8M290.4 244.3l1.9 8.5M281.9 251.5l1.4 -1.8M292.4 252.7l-0.2 3.2M297.4 240l4.4 3M292.4 252.7l10.1 -8.9M396.2 321.2l-1.5 2M394.6 323.2l-6.7 -2.4M401.1 328.3l-2.9 0.5M394.8 324.2l0.4 0.8M388.2 274.9l-0.4 -3.4M387.9 271.5l-2.3 -1.7M388 275.4l-10.7 0.7M387.5 254.7l-4.6 7.6M385.6 269.8l-2.6 -7.4M377.5 256l1 -1M383 262.4l-3 -0.4M393 288l5 -6.4M393 288l-6.4 -2.3M386.5 285.7l0.4 -1.9M395.7 289.6l-2.7 -1.6M386.2 286l0.3 -0.3M377.3 276.1l-1.6 0.9M399.1 278.4l-2.6 -2.3M396.5 276.1l5.8 -7.6M402.8 268.4l-0.6 0.1M399.5 279l-0.4 -0.6M388.2 274.9l8.2 1.2M396.6 266.1l5.7 2.4M211.5 343.2l2.7 0.7M216.7 339.9l-2.4 4M211.5 343.2l-4.8 6.9M206.7 350.1l-1.7 -2.7M213.8 375.1l0.3 -2.2M220 375.5l2.3 -0.9M214.1 372.9l6.3 -3.1M223.3 371.3l-1 3.3M232.9 399.3l-0.8 -3.2M232.1 396.1l0.3 -0.4M240 395.3l-2.5 5.3M240 395.3l-1.7 -3.3M238.3 391.9l-5.9 3.7M232.1 396.1l-4.3 -2.1M226.1 394.6l0.2 -0.2M226.3 394.5l1.5 -0.4M226.3 394.5l-1.5 -4.5M268.6 399.4l-7.4 -5.9M261.2 393.5l0.3 -1.3M243.6 378.3l7.7 7M243.6 378.3l7.3 -1.3M251.3 385.3l4.5 -4.4M250.6 390.8l3.1 5.7M250.6 390.8l-8.4 4.8M253.6 396.5l-1 7.5M251.9 404.4l0.8 -0.4M261.2 393.5l-7.6 3M250.1 387.1l1.2 -1.8M250.1 387.1l0.4 3.6M256.5 380.7l-0.7 0.2M261.1 388.7l0.5 3.5M250.1 387.1l-12.6 -1.1M240 395.3l2.2 0.3M237.6 386l0.7 5.9M239.9 406l9.6 -1.8M206.7 313.6l-0.6 -2.3M204.3 316l-3.4 -6M206.1 311.3l-1.3 -1.3M204.8 310l-3.7 -0.7M201.1 309.3l-0.2 0.7M216 321.7l-0.1 -2.8M214.4 313.8l-7.7 -0.2M203.9 317.3l0.5 -1.3M212.6 306.2l-6.5 5.1M197.9 313.5l3 -3.5M208.2 305.1l-3.4 4.9M234.4 310l2.8 7.6M232.4 317l4.5 1.1M237.1 317.6l-0.3 0.5M226.9 312.7l0.2 0.1M227 312.8l-0.2 4.9M244.3 325.5l0.2 -0.1M242.1 327l2.2 -1.5M241.9 329.5l0.9 1.5M249.5 333l-1.1 0.3M246.5 324.8l-2 0.6M244.6 315.1l-0.1 0.1M244.6 315.1l2.9 9.2M247.5 324.3l-1 0.5M237.1 317.6l4.7 -1.3M229.5 327.6l2.6 -0.9M232.1 326.7l4.4 -4.6M226 320.5l10.4 -0M220.5 327.2l0.1 0.1M225.1 338.3l8 1.1M225.1 338.3l-4.5 -11M233.1 339.4l0.9 -4M234 335.4l-4.5 -7.8M236.8 331.4l-2.8 4M236.8 331.4l-4.7 -4.7M242.1 327l-5.6 -4.9M236.8 331.4l5.1 -1.9M226.9 317.7l-0.9 2.8M216 321.7l4.4 4.8M213.1 333.5l7.4 -6.3M224.9 338.7l-2.5 1.5M224.9 338.7l0.2 -0.4M216.7 339.9l5.7 0.2M344.9 384.5l-2.2 -3.6M339.9 371.1l1.3 5.1M315.7 353.8l4.5 4.1M326.7 352.6l-1.8 5.7M320.2 357.9l4.8 0.4M341.4 357.5l-4.3 -0.1M339.7 349.7l-6.5 2.9M337.1 357.4l-3.9 -4.9M337.1 357.4l-1.4 4.9M330.9 351.9l0.2 0.1M328.3 363.2l3.3 -0.3M328.3 363.2l0.2 5.7M333 370.1l-4.5 -1.2M333 370.1l-0.9 -7.1M332.1 363.1l-0.5 -0.2M325 358.3l-0 3.5M324.8 370.8l3.8 -1.9M324.8 370.8l-0.1 -8.7M324.7 362.1l0.3 -0.2M333.2 370.3l-0.2 -0.2M335.7 362.3l-3.6 0.8M285.1 360l0.7 0.9M285.1 360l-7.4 5.5M285.7 360.9l-2.6 7.5M233.1 339.4l0.7 0.7M240.6 339.4l-4.6 0.9M254.3 356.9l3.2 2.7M257.5 359.6l-0 0.4M246 354.5l-1 -0.1M240.8 363.6l2.4 -6.7M251.6 366.7l5.5 -5.9M243.2 356.9l1.7 -2.5M257.4 360l-0.4 0.8M275.5 328.4l-5.6 -2.2M275.5 328.4l1.4 -2.4M269.9 326.2l3.2 -4.2M276.3 301.8l0.6 -1.5M283.1 316.1l2.4 -0.6M283.1 316.1l-0.5 -0.4M268.9 291.3l-0.1 0M274.4 303.9l-10.9 3.2M274.5 315.1l-2.4 3.1M274.5 315.1l-2.8 -5.2M268.5 313.3l3 5.4M271.7 309.9l-2.9 1.2M279.3 314l-4.8 1.1M262.9 314.9l3.3 -0.5M262.9 314.9l-0.7 -6.6M262.3 308.2l6.5 2.8M270.6 319.4l-4.5 -5M270.6 319.4l0.5 -0.1M271.1 319.3l0.4 -0.6M250.6 332.3l3.4 -1.4M258.7 337.9l-4.7 -7M258.7 337.9l-1 1.5M257.8 339.4l-5.8 -0.7M245.8 342l-0.1 -0.1M245.8 342l2.1 -0.8M265.5 345.9l-8.1 -3.5M265.5 345.9l0 2.1M265.5 348l-2.8 2.4M262.7 350.4l-6.5 -4.8M256.1 345.5l0.9 -2.6M257.1 342.9l0.3 -0.6M266.7 343.2l-1.2 2.6M258.9 337.9l-0.2 0.1M257.8 339.4l-0.4 3M269 349.6l-3.5 -1.6M260.9 357.7l3.6 0.3M260.9 357.7l1.8 -7.4M255.6 346l0.6 -0.5M257.5 359.6l3.4 -1.9M245.8 342l0.1 0.6M245.9 342.7l6.6 3.5M247.9 341.2l9.1 1.7M265.2 329.1l0.2 -2.9M265.2 329.1l-1 1M264.2 330.1l-9.4 -1.4M265.3 326.2l-1 -4.2M264.3 322l-2.9 -1.7M261.4 320.3l-5.7 0.4M254.3 322.5l0.8 -1.4M255.1 321.2l0.7 -0.4M272.2 332.7l-7 -3.6M274.9 330.7l0.6 -2.3M269.9 326.2l-4.6 -0.1M254 330.9l0.8 -2.2M270.6 319.4l-6.4 2.6M273.1 322.1l-2 -2.8M262.9 314.9l-1.5 5.4M247.5 324.3l6.8 -1.7M246.2 313.6l8.9 7.5M282.5 353.9l1.7 -4.2M284.2 349.8l-4.1 -0.3M280.2 357.4l0.1 0M280.1 349.4l-0.4 0.7M285 359.8l2.6 -4.7M289.3 352.1l-1.7 2.9M275.8 358.2l4.4 -0.8M285.1 360l-0.1 -0.2M275.7 364.5l0.9 1M276.6 365.5l1 0M311.6 332.5l0.8 -6.7M303.9 327.7l3.1 -2.2M307 325.4l5.4 0.3M312.4 325.8l4.4 -1.2M322.5 320.1l-5.3 2.7M322.7 330.5l-5.8 -5.9M316.8 324.6l-0 0M297.2 296l-6.5 -2.8M290.7 293.2l2.5 -4.7M301.6 293l-1 -5.7M293.2 288.5l7.3 -1.5M283.7 292.5l7.1 0.7M294.3 302.7l2.9 -6.7M303.4 294l-1.8 -1M292.5 288.2l0.7 0.3M310.8 286.4l-10.2 0.9M208.5 245.5l7.5 -0.5M208.5 245.5l-3 -4.1M175.2 260l-0 -1.9M175.2 258.1l-0.3 -0.6M267.4 283.5l6.6 -11M268.2 240.1l0.9 0.4M272.6 231.6l-1.4 8.3M271.3 239.9l-2.1 0.5M264.1 246.5l4.1 -0.8M269.2 240.5l-1 5.3M268.7 257.6l2.4 -4M268.7 257.6l-1.2 -0.1M271.1 253.6l-2.6 -7.4M268.2 245.8l0.3 0.4M245.6 269.9l0.3 1.2M245.6 269.9l0.2 -4.6M245.9 271.1l7 -1.4M252.9 269.7l-6.8 -4.9M245.7 265.3l0.4 -0.5M240.9 268.9l4.6 1M244.4 275.5l1.5 -4.4M237.5 266.1l8.2 -0.8M246.7 263.3l-0.5 1.5M274.8 268.3l-7.2 3.1M273.9 272.5l-7.8 2M267.6 271.4l-1.5 3.2M251.9 280l5 -3.6M252.9 269.7l1.9 0.4M254.8 270l2 6.4M267.6 271.4l-4.4 -0.6M262.9 279.5l-4.8 -2.8M263.2 270.7l-5 5.9M273.7 264.3l-10.2 4.1M263.2 270.7l0.3 -2.3M256.9 276.4l1.3 0.2M364.7 241.9l-1.5 0.6M344.5 229.6l-1.2 4.4M343.3 234l11 -1.2M355.6 230.8l-1.2 2M347.8 253.9l0.6 0.9M347.8 253.9l-4 -3.1M345.3 260.5l3 -5.7M334.7 255.6l9.1 -4.8M334.5 257.7l-2.8 2.2M323.6 254.9l3.2 4.5M327.3 251.4l6.6 2.8M331.7 259.9l-4.9 -0.5M323.6 254.9l-0 0M327.3 251.4l-0.1 -0.9M318.7 251l4.8 3.9M318.7 251l1.3 -3.4M327.2 250.5l-7.2 -2.8M352.1 270.8l6 -6.2M352.1 270.8l-4.6 -8.2M347.5 262.5l6.1 0.3M350.1 275.4l-0.3 -0.1M350.8 275.4l1.3 -4.6M341.4 266.2l3.5 4.4M345.3 260.5l2.2 2.1M349.7 275.3l-4.9 -4.6M349.7 254.7l-1.4 0M349.7 254.7l3.9 8.1M212.8 263.2l0.6 -4.8M205.2 260.1l0 -0.3M205.2 259.7l0.3 -0.2M216.7 254.6l-1.1 0.6M213.4 258.4l2.3 -3.3M111.2 396.2l-4.5 -0.9M107.8 400.9l0.3 -0.5M123.2 395.6l-0.5 -2.5M123.2 395.6l2.8 1.8M127.8 389.5l1.1 7.2M126 397.3l2.9 -0.6M118.5 389.1l4.2 3.9M124.2 401.3l1.8 -4M136 404.7l-6.8 -7.9M156.2 322.5l1.5 -4M156.2 322.5l6.7 3.8M162.9 326.3l1 -0.6M165.6 323.7l-1.7 2M197.1 324.8l0.2 0.6M197.3 325.4l7.1 5.1M207.3 333.2l-1.9 -1.1M204.5 330.5l0.9 1.6M170.2 321.1l5.6 5.5M175.9 326.5l-4.4 1.6M177.8 338.1l-7.2 4.4M170.6 337.9l3.1 -2.2M170.6 337.9l-0 4.6M173.7 335.7l2.8 0.5M170.2 321.1l-0.1 -0.1M167.5 386.2l-0.6 0.6M167.5 386.2l-0.3 -2.5M151.4 382.1l12 -2.2M163.4 380l3.9 3.7M112.8 350.4l1.3 -2.1M114.1 348.3l-6.7 -1.6M108.2 352.4l-0.7 -5.7M115.6 355.8l-2.7 -5.4M115.6 355.8l-7.5 -1.2M107.7 354.3l0.5 -1.9M116 345.9l-7.6 -3.5M116 345.9l-3.1 -6.4M110.6 340.3l-2.1 1.9M110.6 340.3l2.4 -0.8M107.5 346.7l1 -4.2M110.2 338.2l0.4 2.1M104.5 335.5l2.5 -1.9M106.4 340.9l2 1.4M107.1 333.6l0 -0M113.4 334l4.5 2.1M278.5 410.2l3 -1.2M290.7 385.9l0 -0M290.7 385.9l1.7 -0.5M299.5 392.4l1.7 -5.1M307.8 388l-4.9 -2.4M302.9 385.6l-1.8 1.7M154.7 413.2l3.3 -9.8M161.3 402.6l-1.5 -0.6M159.9 402l-1.9 1.4M161.4 402.6l-0.1 0M169.8 412.1l-0.4 -9.6M165.7 401.9l3.8 0.7M149.1 407.9l9 -4.5M165.3 396.9l1.7 -10M157.9 399.2l2 2.8M210.8 410.5l-2.8 -4.2M207.9 406.4l-0.5 -0M209.4 405.7l-1.5 0.6M202.9 400.1l3.1 5.7M206 405.8l1.4 0.6M212.6 376.2l-6.7 -6.7M205.9 369.5l-2.5 -0.3M202.4 372.3l0.2 3.1M100.9 280.6l5.9 5.3M115.8 290.6l-1.5 -1.4M110.6 283.6l3.6 5.6M108.7 310.2l-8.4 -4.2M102.6 302.8l-2.3 3.2M102.6 302.8l6.9 1.5M119.9 312.3l-1.6 -0.6M119.3 314.8l0.7 -0.8M118.3 311.7l-8.9 -7.2M102.5 302l0 0.8M109.7 304.1l-0.2 0.2M109.7 327.7l-3.5 2.8M109.7 327.7l-2.9 -0.5M106.8 327.3l-2.6 1.1M106.2 330.5l-2 -2.2M107.1 333.6l-0.9 -3M111.9 324.7l-0.3 2.3M101 327.1l3.2 1.3M121.3 330.1l-1 1.4M118 336.1l1.1 -0.1M120.4 331.5l-1.3 4.5M128.4 325l-5.6 4.7M131.1 323.7l5.6 10.4M122.8 329.7l6.4 4.1M129.2 333.8l5 1.1M134.2 334.9l2.5 -0.8M117.9 321.5l10.5 3.4M134.6 321.2l-3.5 2.6M120.8 338.5l-1.7 -2.5M120.8 338.5l8.4 -4.7M186.8 324.3l-5.9 2.2M186.8 324.3l3.5 14.7M189.7 339.3l-8.8 -12.8M189.7 339.3l0.6 -0.3M180.9 326.5l0 -0M190 322.3l-3.2 2.1M178.7 321.3l2.3 5.2M177.8 338.1l3.1 3.9M188.9 340.1l-8 2M180.3 327l-3.8 9.2M180.3 327l0.6 -0.5M180.3 327l-4.5 -0.5M147.9 308.2l7 4.3M159.5 306.9l-5.3 -4.3M156.9 297.2l0.6 2.1M157.5 299.3l-3.3 3.3M163.5 301.3l2 -1M162.4 302.3l-0 0.2M165.5 300.3l4.8 2.3M170.3 302.6l-0.8 8.1M160 293.2l3.5 8.1M167.3 293.6l-1.9 6.8M157.5 299.3l4.9 3M159.5 306.9l2.8 -4.4M169.5 310.8l-0 -0.1M172.5 301.5l-2.2 1.1M364.1 370.1l4.1 -2.4M364.1 370.1l2.2 5.9M367.4 376.4l3.4 -6.6M370.8 369.8l-0.2 -0.8M370.6 369l-0.9 -1.1M369.8 367.8l-1.6 -0.1M360.7 367.9l3.3 2.2M361.4 376.8l4.9 -0.9M369 378.3l-1.7 -1.9M376.2 372.6l-5.4 -2.7M377.9 371.1l0.1 -0.4M371.3 361.8l-1.5 6.1M397.8 369l-0.5 0.8M397.8 369l-9.9 -4.8M397.4 369.8l-9.3 2.6M388.1 372.4l-0.9 -7.1M387.2 365.3l0.8 -1.1M388 364.1l-0 0.1M399.2 368.4l-1.3 0.6M385.2 365.5l2 -0.2M387.8 377.7l0.3 -5.4M398.5 377.4l1.6 -2.5M398.5 377.4l-5.2 0.1M400.2 374.9l-0 0M388.2 379.7l5.1 -2.2M341.7 404.4l1 -0.4M349.6 411.1l-0.3 -0.4M342.6 404.1l2.6 2M342.6 404.1l0.6 -0.9M355.9 400.7l-3.9 -0.7M346.7 396.1l5.4 4M350 404.3l-1.3 0.7M350.1 403.2l-1.9 0.3M351.9 408.7l-1.9 -4.4M349.3 410.7l-0.6 -5.7M352 400.1l-1.9 3.2M346.9 321.5l1.2 5.2M346.9 321.5l5 -0.2M351.9 321.3l-3.8 5.4M342.1 320.8l4.8 0.7M347.2 329.1l0.9 -2.5M352 321.3l-0.1 0M299.3 269l2.8 0M299.3 269l1.8 -8M302.2 269.1l2.8 -2.4M304.9 266.6l0.1 -5.5M301.1 261l3.8 -0M294.1 256.7l1.9 -0M313.5 266.9l-8.5 -5.7M306.1 272.3l-4 8.7M302.2 281l2.5 -0.3M304.7 280.8l9.2 -8.4M314.1 271.8l-0.2 0.5M300.1 282l-1.6 -1.3M313.8 284.6l-1.4 -1.9M312.3 282.7l-7.6 -2M312.3 282.7l1.5 -10.4M296 256.7l7.4 -4.9M302.4 243.9l0.8 0.7M303.4 251.8l5.2 3.9M318.7 251l-5 0.4M323.5 254.9l-1.4 1.4M312.4 256.9l-0.9 -1.2M312.4 256.9l3.7 10.7M316.1 267.6l-2.6 -0.7M311.5 255.7l-2.9 0M382.7 320.6l2.6 0.6M385.3 321.2l2.3 7.7M387.5 328.9l-0.7 3.4M386.8 332.3l-2.9 1.9M382.7 333.6l1.2 0.7M378 318l4.6 2.6M388 320.7l-2.7 0.4M373.6 331.8l9.1 1.8M385 339.3l-1.1 -5.1M397.3 334.2l-3.5 0.6M393.8 334.8l-6 -2.5M387.8 332.3l3.3 -1.9M391.6 337.9l2.2 -3.1M399.3 337.4l-2.1 -3.2M398.2 328.9l-0.8 3.4M395.2 325l-4.1 5.5M386.8 332.3l1 0M376.9 266.4l0.6 -2.9M381.3 268.8l-3 -5.4M377.5 263.6l0.9 -0.2M377.1 270.6l-4.7 -1.8M240.7 363.7l-4.6 -1M236.1 362.7l-8.2 4.3M214.1 372.9l-0.5 -5.7M220.4 369.8l-2.5 -2.8M217.8 367l-4.3 0.2M236.1 384.1l0.2 0.8M236.1 384.1l-9.9 -2.7M227.1 388.4l-2 -6M232.2 388.4l-0.9 0.5M238.2 375.8l-2.2 8.3M237.6 386l-1.2 -1.1M238 374.8l-8.4 0.5M229.5 375.2l-3.7 3.7M225.8 379l0.4 2.4M227.8 394.1l3.5 -5.1M224.7 390l2.3 -1.6M218.8 385.6l6.2 -3.2M222.3 374.6l3.5 4.3M333.7 372.7l-0.1 0.5M341.1 376.2l-5.9 2.2M333.6 373.2l1.6 5.2M275 371.6l1.1 -3.8M277.8 373.7l3.1 -3M289.9 379.9l0.8 6M289.9 379.9l-8.7 1.2M281.2 381.1l-0.4 0.3M280.9 381.4l0.5 2.8M274.8 389.4l3.2 -2.8M281.4 384.2l-3.3 2.4M239.4 346.1l-1.9 2.4M237.5 348.5l6.2 4.6M244.4 347.8l0.1 5.7M243.7 353.1l0.8 0.3M232.9 348l4.7 0.5M236 340.2l3.4 5.8M245.9 342.7l-1.5 5.1M245 354.4l-0.5 -1M269.5 365.4l-0.9 1.6M257.4 360l3.4 3.2M268.6 367l-7.7 -3.8M256.5 380.7l0.1 -0.1M256.5 380.6l-0.8 -7M257.1 360.8l2.5 8M255.7 373.6l3.8 -4.8M260.9 363.1l4.3 6.8M265.2 370l-3.7 0.2M261.1 388.7l7.9 -2.1M275 371.6l-2.9 0.8M277.8 373.7l0.1 0.1M278.3 379.6l2.5 1.8M278.1 386.6l-6.2 -5.6M273.2 380.1l-1.4 0.9M269.9 386.9l1.9 -5.9M282.9 317l3.9 8.4M282.9 317l-2.7 3.4M280.2 320.4l-2.2 5.2M283.3 327.4l1.3 -0.4M291.6 325.3l-4.8 0.2M283.1 316.1l-0.2 0.9M272.1 318.2l8.1 2.2M276.9 326l1.2 -0.4M282.3 334.4l1 -7M310.8 378.2l0.4 10.4M316.6 394.2l-0.2 -0.3M307.8 388l3.3 0.6M316.4 393.9l-4 -4.6M307.1 325.2l6.4 -7.5M307.1 325.2l-0.1 -8.4M307.6 316.5l5.6 0.7M313.2 317.2l0.2 0.5M307 325.4l0.1 -0.2M317.2 322.9l-3.8 -5.2M286.6 284l5.6 -1.2M292.2 282.9l-0.1 4.8M285.8 284.1l0.8 -0.1M292.5 288.2l-0.4 -0.5M298.5 280.7l-6.3 2.2M209.4 231.9l4.1 0.3M209.4 231.9l-1.6 1.2M207.8 233.1l0 1.5M202.4 231.2l-2.6 1.5M199.9 232.7l-4.2 -1.3M160.5 234.9l9.1 4.9M169.6 239.8l4 -2.8M171.9 232.1l0 0.1M173.6 237l-1.6 -4.8M163.1 250.5l8.9 -4.2M174.9 257.5l0.6 -9.1M177.6 237.4l-4 -0.4M177.6 237.4l0.1 1.9M171.9 244.4l0.1 1.8M182.3 246.1l-0.5 0.5M175.2 258.1l8.1 -3.8M191.2 262.5l1.2 -11.5M185 255.3l-1.7 -1M208.5 245.5l-0.5 0.7M205.4 241.4l-4.6 -1M200.8 240.4l-2.1 1.6M208 246.2l-5.1 3.3M197.8 246.7l5.1 2.8M192.4 251l0.4 -0.7M192.8 250.3l0.3 -0M193 250.3l6.1 6.2M205.2 259.7l-4.5 -3.5M199.1 256.5l1.5 -0.2M277 241.8l1.5 0.9M277 241.8l-1 0.1M278.5 242.7l1.9 8.1M274.2 245.5l-1 6.6M283.8 242.1l-5.3 0.6M268.5 246.1l5.7 -0.7M281.9 251.5l-1.5 -0.8M271.1 253.6l2.1 -1.5M254.8 270l0.8 -2.6M255.6 260.6l-0 6.9M358 264.6l1 -0.6M359.1 264.1l3.6 3M349.7 254.7l7.2 -0.8M359.1 264.1l0.9 -6.1M368.6 270.2l0 -0.9M372.4 268.8l-3.1 -0.2M368.6 269.4l0.7 -0.7M377.5 263.6l-6.1 -2.3M369.4 268.6l2 -7.3M368.9 246.6l-0.1 2.8M358.3 249.9l4.8 0.8M358.3 249.9l0.7 -5.3M363.1 242.5l-4.1 2.1M368.8 249.4l-5.7 1.4M359 244.6l-1.5 -0.9M354.4 232.8l-0.5 3.2M353.9 236l3.6 7.7M337.8 235.3l1.2 2.3M343.3 234l-2.6 3.7M340.8 237.7l-1.9 -0.1M208.8 251.4l-5.6 0.2M209.8 253.6l-2.3 1M207.5 254.6l-4.3 -2.6M208 246.2l0.8 5.2M202.9 249.6l0.3 2M215.6 255.1l-5.8 -1.5M205.5 259.5l2.1 -5M200.7 256.3l2.5 -4.2M197.8 246.7l-4.8 3.6M234.4 234.2l2.6 -3.3M237 230.9l-0.1 -0.7M236.9 229.9l0.1 0.3M246.8 229.9l-3.6 2.9M246.8 229.9l4.6 7.2M251.3 237.1l-8.4 1.5M237 230.9l6.2 1.9M259.2 232.9l-1 -1.5M156.2 322.5l-6.4 7.2M162.9 326.3l-4.3 6.8M149.8 329.7l8.3 3.5M158.6 333.1l-0.5 0M173.7 335.7l-3 -3M170.7 332.7l-7.7 3.3M145.4 332l1.8 -0.7M147.3 331.3l1.8 -1.5M149.1 329.7l-2.6 -8.5M134.6 321.2l2 -1M139.9 335.4l-3.2 -1.3M149.8 329.7l-0.7 0.1M133.8 311.9l3.1 8M120.8 338.5l1.9 3.8M134.2 334.9l-5.7 4.9M128.5 339.8l-5.8 2.5M164.9 331.6l1 -2.6M165.9 329l4.2 1.3M170.1 331.1l-0 -0.7M163.9 325.7l2 3.3M161.1 334.2l3.8 -2.6M170.7 332.7l-0.6 -1.6M161.1 334.2l1.9 1.8M170.4 329.1l-0.3 1.3M180.9 342l-0.7 1.6M169.2 346l0.7 0.1M181.7 383.8l4.2 -2.2M182.4 374l-5.7 3.2M173.3 390.7l-5.8 -4.5M148.4 367.4l-4.3 12.2M148.4 367.4l0.8 -0.5M296.2 378.3l1.6 -3.8M296.2 378.3l0.7 1.8M297.8 374.5l8.9 -1.5M302.8 383.5l4.6 -8.4M289.9 379.9l0.5 -1.9M290.4 378l5.8 0.3M292.4 385.4l4.5 -5.3M295 371.8l2.9 2.7M295 371.8l4.8 -4.3M299.7 367.5l7 5.5M310.8 378.2l-3.3 -3.2M204.6 352.2l-7.8 -1.1M203.1 360.7l-10.2 -7M203.2 360.7l-2 3.7M203.2 360.7l-0 -0.1M201.1 364.4l-2.5 0.2M192.9 353.6l-2.5 2.3M192.9 353.6l0 -0M198.6 364.7l-8.2 -8.7M200.3 408.1l-3.3 3.7M202.9 412l-5.8 -0.2M206 405.8l-2.7 2.3M200.3 408.1l-2.4 -4.3M173.3 390.7l0.6 1.7M173.8 392.4l7.1 1.8M181.4 387.2l2.8 1.9M184.3 389.1l-1.3 4.6M180.9 394.1l2 -0.5M185.9 381.6l3 0.2M184.3 389.1l0.2 0M188.9 381.8l-1.1 4.7M184.5 389.1l3.3 -2.5M108.6 291.7l-3.4 -1.4M111.5 289.5l-5 -2.8M105.2 290.3l1.4 -3.6M103.2 291.8l1.9 -1.5M330.1 229.5l-4.3 0.4M324.1 229.5l1.6 0.4M328.1 280.8l-0.2 -0.8M328.1 280.8l7.7 0.3M335.7 274.1l2 2.8M335.7 274.1l-2.4 -2.9M333.2 271.3l-1.5 -0.2M337.5 278.6l-1.7 2.4M334.7 287.9l1.1 -6.8M331.7 259.9l-1.7 10M330 270l1.7 1.1M342.2 283.6l-4.8 -4.9M320.5 278.3l3.4 0.4M320.5 278.3l-3.6 -8.9M323.8 278.7l4.2 -9.2M316.8 269.4l0.3 -0.7M323.2 268.2l-5.8 0.4M314.1 271.8l2.8 -2.4M330 270l-2 -0.4M316.1 267.6l1 1.1M224.9 338.7l0.7 10.8M222.4 340.2l-4.4 6M218 346.2l-0.9 0.4M206.8 350.2l-0 -0.1M206.8 350.2l1.8 0.8M208.5 351l8.5 -4.1M217.1 346.6l-0.1 0.3M225.3 362.1l2.4 5M219.6 364.9l1 -2M219.6 364.9l5.2 5.2M227.7 367l-1.8 2.3M223.3 371.3l1.5 -1.2M227.8 367.1l-0.1 -0M234 355l-2.1 2.9M232 357.8l-5.6 -0.2M232.5 348.7l1.5 3M232.5 348.7l-6.2 1.9M226.2 350.6l-1.5 3.9M226.4 357.7l-1.7 -3.2M243.2 356.9l-9.2 -2M243.7 353.1l-9.8 -1.5M236.1 362.7l-4.1 -4.9M225.3 362.1l1.1 -4.4M232.9 348l-0.4 0.7M212.3 367l-3.9 -1.7M212.3 367l0.8 -0.2M205.9 369.5l6.4 -2.5M203.5 369.2l-0.1 -0.2M203.4 369l5 -3.8M213.6 367.2l-0.4 -0.5M203.2 360.7l0.8 0.1M209.4 351.8l8.2 1.3M212.7 360.5l2.9 -1.2M218.6 354.5l-1 -1.4M208.5 351l0.9 0.8M217 346.9l0.6 6.3M206.8 350.2l-2.1 1.9M342.7 380.9l-4.9 1.3M335.2 378.4l2.6 3.8M340.2 388.8l-0.9 -1.1M339.3 387.6l-1.4 -5.5M318.4 396.5l5.5 -7.6M316.6 394.2l6.2 -11.4M316.4 393.9l2.4 -13.8M318.8 380.1l-0.1 -0.2M307.4 372.8l-0.2 0.2M307.4 372.8l12.8 2.7M318.7 379.9l1.5 -4.4M308.4 370.9l9.6 -2.5M318 368.4l4.2 4.5M320.2 375.6l2 -2.6M324.8 370.8l-1.6 2.1M333.6 373.2l-8.4 1.4M325.2 374.5l-2.1 -1.6M316.1 349.6l-8 3.2M302.4 348.9l1.6 3.4M308.1 352.8l-4.1 -0.5M291.3 368.9l-0.2 1.2M291.1 370.1l3.8 1.7M299.7 367.5l-0.9 -2M320.2 357.9l-2.7 3.8M324.7 362.1l-5.7 2M317.5 361.7l1.5 2.3M318 368.4l0.8 -4M323.1 372.9l-0.9 0M319 364.1l-0.1 0.3M283.4 369.1l-0 0M283.4 369.1l-0.6 5.1M289.7 371.2l-0.9 3.5M288.8 374.7l-4.2 1.5M284.6 376.2l-1.9 -2M276.6 365.5l-0.5 2.3M283.1 368.4l0.3 0.6M281 370.7l2.4 -1.6M285.7 360.9l1.3 0.7M287 361.6l4.3 7.3M277.9 373.8l4.8 0.4M290.4 378l-1.6 -3.3M281.2 381.1l3.4 -4.8M268.1 371.5l-2.5 5.5M268.1 371.5l-0.4 -0.7M267.8 370.8l-0.8 -0.2M259.7 380.1l-1.8 0.2M257.9 380.2l2.6 -6.6M272.1 372.4l-4 -0.9M268.6 367l-0.8 3.8M261.5 370.2l-0.9 3.4M269 386.6l-9.3 -6.5M200.8 238.9l4.7 -3.2M200.3 235.4l5.2 0.3M207.8 234.5l-2.2 1.1M199.9 232.7l0.5 2.7M198.7 242l-4.9 -2.4M192.8 250.3l-5.8 -5.2M195.6 231.4l-3.7 3.3M193.8 239.6l-1.9 -5M172 232.2l7.2 1.9M179 230.5l0.2 3.5M177.6 237.4l2 -2.4M179.5 235l-0.4 -1M263.3 268.2l-0.5 -2.2M258.8 267.3l3.2 -1.6M262.8 266l-0.7 -0.2M263.5 268.4l-0.2 -0.3M255.6 267.4l3.3 -0.1M267.5 257.4l-4.7 8.6M374.3 257.3l-3.3 -4.8M371.4 261l-6 -3.6M365.4 257.4l2.3 -4.5M367.7 252.9l1.3 -1.4M375 250.2l-4 2.3M377.5 256l-3.2 1.3M360 257.9l5.4 -0.5M368.8 249.4l0.2 2.1M350.2 245.5l4.3 -1.6M350.2 245.5l-6.9 -3.9M354.5 243.9l-6.9 -4.8M343.3 241.6l-0.7 -2.2M357.5 243.8l-3 0.1M343.8 250.8l-0.8 -1.9M343 248.9l0.3 -7.4M353.9 236l-6.3 3M340.8 237.7l1.8 1.7M333.9 254.2l1.2 -3.6M327.9 246.2l-0.1 0.1M338.9 237.6l-1.8 10.9M333.4 244.3l2.9 4.4M337.1 248.4l-0.8 0.3M330.8 245.6l2.6 -1.3M343 248.9l-5.9 -0.5M338.9 237.5l-0 0M335 250.6l1.3 -1.8M164.8 339.5l-0.5 4.1M167.5 346.2l1.7 -0.2M167.5 346.2l-2.8 -1.6M158.1 333.1l-1.6 8.7M117.2 346.8l2.8 0.2M122.7 342.3l-0.1 1.5M122.6 343.8l-2.5 3.2M197.1 349l-5.2 -9.1M200 344.7l-0.4 -1.2M205.1 347.4l-5 -2.7M188.9 340.1l1.2 6.1M190.1 346.2l2.9 7.5M190.3 339.1l0.4 -0.1M190.7 339l1.2 0.9M205.4 340.8l-2.8 -0.6M202.6 340.1l-3 3.3M203.3 334.5l-8.9 -0.6M203.3 334.5l-2 3.1M201.3 337.6l-7.9 -1.3M197.3 325.4l-2.9 8.5M190.7 339l2.7 -2.7M174.6 373.9l1.4 3.3M174.6 373.9l-5.9 -3.7M168.7 370.2l-6 5.5M180.2 343.6l0 1.3M190.1 346.2l-5.8 5.4M184.3 351.5l-2.5 -2.8M181.8 348.8l-1.6 -3.8M138.3 391.5l-1 -1.2M139 384.1l-1.7 6.2M129.3 396.9l7.1 -6.5M137.3 390.3l-0.9 0M120.1 347l0.1 2.1M115.6 355.8l2.6 -0.9M110.4 362.8l3 0.3M115.6 355.8l-2.3 7.2M111.5 372.6l4 -7.5M125.7 354.2l-1.6 2.4M125.7 354.2l-3.1 -3.3M118.2 354.9l2.1 2.1M193.8 399l1.5 -3.5M172.8 404.2l-2.2 7.6M194.7 384l-5.8 -2.3M194.7 384l2.2 -4.4M197 378.5l-6.1 -5.5M197 378.5l-0.1 1.1M188.9 381.8l0.1 -0M195 384.7l-5.7 2.5M195 384.7l-0 -0M203.2 383.3l-8.3 1.4M202.4 372.3l-11.8 -0.1M202.5 375.4l-5.6 3.1M190.6 372.3l0.3 0.8M203.8 383.5l-0.6 -0.2M189.7 371.1l-6.9 2.5M182.4 374l0.4 -0.4M301.8 243l6 -8.8M303.2 244.5l4.6 -0.3M313 236.3l0.5 0.9M313.7 251.4l-1 -3.8M312.7 247.6l-4.9 -3.4M321.5 230.6l0.2 2.1M321.7 232.7l-6.3 5.5M331.7 380.5l0.1 5.4M331.7 380.5l-3.9 -0.4M325.1 382.7l1.9 3.9M327.1 386.6l2.8 1.6M329.9 388.2l2 -2.3M335.2 378.4l-3.5 2.1M325.2 374.5l2.6 5.6M323.1 382.9l2 -0.2M323.9 388.9l3.2 -2.4M330.3 393.4l-0.4 -5.2M287 361.6l8.9 -1.7M296.3 363.6l-0.2 -3.4M295.9 359.9l0.1 0.4M293.6 352l2.4 7.2M295.9 359.9l0.1 -0.7M304 352.3l0.1 3.7M296 359.2l8.1 -3.2M191.9 234.7l-4.2 -0.2M187 245.1l-0.4 -0.1M182.3 246.1l2 -0.8M182 235.4l2.3 9.8M184.4 245.2l2.2 -0.3M186.7 229.6l0.5 4.5M187.3 234.1l-0.4 0.1M179 230.5l1.7 -1.4M182 235.4l4.9 -1.3M164.7 344.6l-5.5 5.4M156.5 341.9l-1.5 1.2M159.2 349.9l-4.3 -6.9M147.3 331.3l5.3 12.1M152.6 343.3l2.4 -0.3M133.1 358.8l-1.2 -5.2M133.1 358.8l-6.9 -0.2M131.8 353.5l0.1 0.1M122.6 350.9l9 0.8M131.6 351.6l-0 -2.8M131.6 348.9l2.8 -2.7M170.1 364.3l-0.6 -7.6M170.1 364.3l-0.6 0.5M169.5 364.8l-10.8 0M167 355.4l2.5 1.3M167 355.4l-6.6 0.8M168.7 370.2l0.7 -5.4M156.6 367.1l2 -2.2M167.5 346.2l-0.5 9.2M158.3 353.5l-0.1 -0.4M158.2 353.1l1.1 -3.2M198.6 364.7l-8.1 4.4M190.4 355.9l-0.8 0.4M189.6 356.3l0.9 12.8M189.6 356.3l-2.5 -0.2M187.1 356.2l-0.1 0.1M189.7 371.1l0.2 -1.2M190 369.9l0.5 -0.8M172.5 355.4l2.5 -0M175 355.4l2 -6.2M172.3 349.9l4.6 -0.7M169.5 356.7l3 -1.2M180.2 344.9l-3.3 4.2M176.7 356.2l-1.7 -0.8M179.5 367.9l-4.4 2.8M179.5 367.9l-0.1 -1.2M179.4 366.7l-4.6 -2.3M175.1 370.7l-2 -5.9M190 369.9l-7.1 -6.1M182.9 363.8l-3.5 2.9M170.1 364.3l3 0.6M135.3 380.6l-6 7.2M132 377l1.3 -0.5M132 377l-5.3 6.6M126.7 383.6l-0.3 2M126.4 385.6l2 2.1M128.4 387.7l1 0M139 384.1l-3.6 -3.5M136.4 390.4l-7 -2.6M135.2 371.8l-2 4.7M123.1 378.9l3.6 4.7M124.2 376.5l3.1 -0.1M127.3 376.3l4.7 0.7M121.7 379.4l1.4 -0.5M117.4 374.4l0.9 -0.6M124.2 376.5l-1.7 -2.6M127.3 376.3l-2 -7.4M122.5 373.8l2.8 -4.9M124.3 361l-3.4 -1M120.8 360l-2.6 5.5M127.1 367.1l-1.2 0.5M125.9 367.5l-7.1 -1.6M118.3 365.5l0.5 0.4M126.2 358.7l-1.9 2.3M120.3 357l0.5 3M131.9 366.8l1.9 -6.7M133.9 360.2l-0.8 -1.3M115.5 365l2.8 0.4M131.9 366.8l3.3 5M118.3 373.7l0.5 -7.8M189.2 399.3l-5.7 3.7M183.5 402.9l-0.1 -4.1M183 393.7l2.2 3.2M184.5 389.1l5.5 4.2M189.9 393.2l-2.2 3.2M180.9 394.1l-0.1 3.8M180.9 398l2.5 0.8M190.8 389.3l-0.5 3.9M190.8 389.3l4.4 -3.6M194.7 393.9l3.2 -4M197.9 389.9l-2.7 -4.2M189.3 387.2l1.5 2M189.9 393.2l0.4 -0.1M195 384.7l0.3 0.9M191.1 401.1l2.7 -2.1M191.1 401.1l-1.9 -1.9M195.2 395.6l-0.5 -1.7M178 407.5l-4.2 3.8M178 407.5l4.7 3.9M182.8 411.4l-0.2 1M182.6 412.3l-6.5 0.4M179.2 404.8l-1.1 2.7M184.3 410l-1.6 -5.9M184.3 410l-1.5 1.4M170.6 411.8l3.3 -0.5M174.7 403.2l3.7 0.6M174.7 403.2l-2.3 -5.1M178.3 403.8l-0.9 -5.4M177.4 398.4l-3.5 -3.3M173.9 395.1l-1.5 2.4M172.4 397.5l-0.1 0.6M179.2 404.8l-0.9 -1M180.9 398l-3.4 0.4M169.7 398.1l2.7 -0.7M191.9 410.2l0.5 -3.1M190 409.8l-7.2 -5.8M192.4 407l-1.5 -2.9M190.9 404.1l-7.5 -0.9M183.5 403.2l-0.7 0.8M184.3 410l5.7 -0.2M191.1 401.1l-0.1 3M183.5 402.9l-0 0.3M330.5 237.6l-1.3 -0.6M329.2 237l-0.8 -1.7M312.7 247.6l5 -4.4M320.1 245.4l-2.4 -2.1M315.4 238.1l2 2.2M317.7 243.3l-0.2 -2.9M300.8 364.6l1.8 -3.2M308.1 364.9l0.1 -0.9M308.3 364l-0.1 -2.7M308.2 361.3l-1.2 -0.8M298.8 365.5l2 -0.9M296.1 360.3l6.6 1.1M308.4 370.9l-0.3 -6M304.1 356l2.9 4.5M318.8 364.4l-10.6 -0.3M134.4 346.2l3.7 -2.2M140.1 340.7l-1.9 3.3M182.9 361.8l-0.1 0.9M182.8 362.7l-7 0.3M182.9 363.8l-0.1 -1.1M176.7 356.2l0.8 3M327.4 234.7l-5.4 -1.6M328 235.1l-5.3 1.5M322 233.1l0.7 3.5M325.7 229.9l1.7 4.8M321.7 232.7l0.3 0.4M328.3 235.3l-0.3 -0.2M322.8 237.7l2.4 1.6M317.8 240.3l7 1.6M325.2 239.3l-0.4 2.6M322.7 236.6l0.1 1.1M133.9 360.2l1.2 -0.2M135.1 360l11.1 0M131.9 353.7l4.3 -1.2M138.1 344l0.8 2.3M138.9 346.3l0.3 2.3M136.2 352.5l3.1 -3.9M146.2 360l0.1 -0.6M146.6 359.2l-0.3 0.2M158.2 353.1l-5.7 -3.1M146.6 359.2l5.8 -9.1M152.6 343.3l-3.1 3.3M136.2 352.5l2.6 -0M139.2 348.6l1 3.1M135.1 360l3.5 -5.1M138.6 354.9l0.2 -2.4M146.3 359.4l-1.2 -4M145.1 355.4l-2.4 -1.9M142.7 353.6l-0.7 -0.8M138.9 346.3l3.9 3.2M142 352.8l0.8 -3.3M143.6 349.3l2.4 3.7M143.6 349.3l3.3 -3.6M145.9 353l3.3 -6.3M146.9 345.7l2.4 1.1M142.8 349.5l0.7 -0.1M149.5 346.7l-0.2 0" stroke="#44c040" stroke-width="0.45" fill="none" opacity="0.6"/>
<path d="M209.5 295.1C209.3 296.8 208.4 301.7 207.8 305C207.2 308.3 206.5 311.5 205.9 314.8C205.3 318.1 204.6 321.4 204.1 324.6C203.5 327.9 203.1 331.2 202.6 334.5C202.2 337.8 201.7 341.1 201.3 344.4C200.9 347.8 200.5 351.1 200.2 354.4C199.8 357.7 199.5 361 199.1 364.3C198.8 367.6 198.1 372.6 197.9 374.3M183.5 258.5C183.7 256.9 184.6 252 185.1 248.7C185.6 245.4 186 242.1 186.4 238.8C186.8 235.5 187.2 232.1 187.5 228.8C187.8 225.5 188 222.2 188.2 218.8C188.3 215.5 188.2 212.2 188.2 208.8C188.1 205.5 188 202.2 187.9 198.8C187.7 195.5 187.6 192.2 187.5 188.9C187.3 185.5 187.1 182.2 186.8 178.9C186.5 175.6 186.2 172.2 185.9 168.9C185.5 165.6 185 162.3 184.5 159C183.9 155.7 182.9 150.8 182.6 149.2M216.2 410.6C217.8 410.8 222.8 411.4 226.1 411.8C229.4 412.2 232.7 412.6 236 413C239.3 413.4 242.6 413.8 246 414.3C249.3 414.8 252.5 415.3 255.8 415.8C259.1 416.2 262.5 416.7 265.8 417.1C269 417.6 272.3 418.1 275.6 418.6C278.9 419.1 282.2 419.6 285.5 420.1C288.8 420.6 292.1 421.1 295.4 421.7C298.7 422.3 301.9 423 305.2 423.6C308.5 424.3 311.7 425 315 425.7C318.2 426.5 321.5 427.2 324.7 428.1C327.9 429 332.7 430.5 334.3 431M204.5 402.2C205.5 403.5 208.6 407.5 210.5 410.2C212.4 412.9 214.2 415.7 216 418.5C217.7 421.4 219.4 424.2 221 427.2C222.6 430.1 224.1 433.1 225.5 436.1C226.9 439.1 228.2 442.2 229.5 445.3C230.7 448.4 231.8 451.5 232.9 454.7C233.9 457.8 234.9 461 235.7 464.3C236.6 467.5 237.3 470.7 238 474C238.7 477.3 239.2 480.6 239.7 483.9C240.2 487.2 240.6 490.5 240.9 493.8C241.3 497.1 241.5 500.4 241.7 503.8C241.8 507.1 241.9 510.4 241.8 513.8C241.7 517.1 241.6 520.4 241.3 523.7C241.1 527.1 240.8 530.4 240.5 533.7C240.1 537 239.4 542 239.2 543.6M99.1 412.8C98.1 411.4 95.1 407.4 93.2 404.7C91.2 402 89.2 399.4 87.2 396.7C85.3 394 83.4 391.3 81.5 388.5C79.6 385.7 77.8 382.9 76.1 380.1C74.4 377.2 72.8 374.3 71.2 371.3C69.7 368.4 68.2 365.4 66.9 362.3C65.5 359.3 64.3 356.2 63.1 353.1C61.9 350 60.9 346.8 59.9 343.6C58.8 340.4 57.9 337.2 57 334C56.1 330.8 54.7 326 54.2 324.4M376.7 413.3C377.5 411.9 379.9 407.5 381.5 404.5C383 401.6 384.6 398.6 386.1 395.7C387.7 392.7 389.2 389.8 390.8 386.8C392.4 383.9 394.1 381 395.7 378.1C397.4 375.2 399 372.3 400.7 369.4C402.3 366.6 404 363.7 405.8 360.8C407.5 358 409.3 355.2 411.1 352.4C412.9 349.6 414.8 346.9 416.8 344.2C418.7 341.4 420.7 338.7 422.6 336C424.6 333.4 427.6 329.3 428.6 328M330.9 263.6C331.8 265 334.3 269.3 336.2 272.1C338 274.9 340 277.6 342 280.3C344 282.9 346.1 285.6 348.2 288.1C350.4 290.6 352.6 293.1 354.9 295.5C357.2 297.9 359.6 300.2 362.1 302.5C364.5 304.8 367 306.9 369.6 309.1C372.2 311.2 374.9 313.2 377.6 315.1C380.3 317.1 383 319 385.8 320.8C388.6 322.5 391.5 324.2 394.4 325.9C397.4 327.5 400.3 329 403.3 330.4C406.3 331.9 409.4 333.2 412.5 334.5C415.6 335.7 418.7 336.9 421.9 337.9C425 339 428.2 340.1 431.4 341C434.6 341.9 439.5 343 441.1 343.5M243.4 250.5C242.7 249 240.7 244.4 239.3 241.4C237.9 238.4 236.5 235.4 235 232.4C233.5 229.4 231.9 226.4 230.4 223.5C228.8 220.6 227.2 217.6 225.6 214.7C223.9 211.8 222.2 209 220.5 206.1C218.7 203.3 216.9 200.5 215.2 197.7C213.4 194.8 211.5 192.1 209.7 189.2C208 186.4 206.2 183.6 204.4 180.8C202.7 177.9 200.9 175.1 199.2 172.3C197.5 169.4 195.7 166.6 194 163.7C192.2 160.9 190.4 158.1 188.7 155.2C186.9 152.4 185.2 149.6 183.4 146.7C181.7 143.9 179.9 141.1 178.2 138.2C176.4 135.4 174.7 132.5 173 129.7C171.3 126.8 169.6 123.9 168 121C166.3 118.1 164.7 115.2 163.2 112.2C161.6 109.3 160.2 106.3 158.7 103.3C157.3 100.3 155.9 97.3 154.5 94.2C153.1 91.2 151.7 88.2 150.4 85.1C149 82.1 147.6 79.1 146.3 76C145 72.9 143.7 69.8 142.4 66.8C141.2 63.7 139.2 59.1 138.6 57.5M221.9 307.5C220.6 306.4 216.7 303.3 214.1 301.3C211.4 299.3 208.8 297.2 206.1 295.2C203.5 293.2 200.8 291.3 198 289.4C195.3 287.5 192.4 285.7 189.6 283.9C186.8 282.2 184 280.4 181.1 278.7C178.2 277 175.3 275.4 172.4 273.9C169.4 272.3 166.5 270.8 163.5 269.2C160.5 267.7 156.1 265.5 154.6 264.7M389.6 339.2C388 338.7 383.2 337.2 380 336.3C376.8 335.4 373.6 334.5 370.4 333.6C367.1 332.8 363.9 331.9 360.7 331.1C357.5 330.3 354.2 329.5 351 328.6C347.8 327.7 344.6 326.8 341.4 325.8C338.2 324.8 335.1 323.8 331.9 322.6C328.8 321.4 325.7 320.1 322.7 318.8C319.6 317.4 316.6 316 313.6 314.6C310.6 313.1 307.7 311.6 304.7 310C301.8 308.4 298.8 306.9 295.9 305.2C293.1 303.5 290.2 301.8 287.4 300C284.6 298.2 281.9 296.3 279.2 294.3C276.5 292.4 273.9 290.3 271.3 288.2C268.7 286.1 264.9 282.8 263.6 281.8M376.8 308.8C378.3 309.5 382.8 311.8 385.8 313.2C388.8 314.7 391.8 316.1 394.8 317.5C397.8 318.9 400.9 320.3 403.9 321.6C407 322.8 410.1 324 413.3 325.2C416.4 326.3 419.5 327.4 422.7 328.4C425.9 329.3 429.1 330.2 432.4 331C435.6 331.7 438.9 332.4 442.2 333C445.5 333.6 448.8 334 452.1 334.4C455.4 334.9 458.7 335.2 462 335.5C465.3 335.9 468.7 336.1 472 336.4C475.3 336.6 478.6 336.7 482 336.8C485.3 337 488.6 337.1 492 337.2C495.3 337.3 498.6 337.5 501.9 337.7C505.3 337.9 508.6 338.2 511.9 338.5C515.2 338.8 518.6 339.1 521.9 339.5C525.2 339.9 528.5 340.2 531.8 340.7C535.1 341.2 540 342.1 541.7 342.4M320.5 365.4C319.7 363.9 317.1 359.6 315.6 356.7C314 353.7 312.5 350.8 311 347.8C309.6 344.8 308.2 341.7 306.9 338.7C305.6 335.6 304.3 332.5 303 329.4C301.8 326.3 300.5 323.3 299.3 320.2C298.1 317.1 296.9 313.9 295.7 310.8C294.5 307.7 293.4 304.6 292.1 301.5C290.9 298.4 289.6 295.3 288.2 292.3C286.9 289.2 285.5 286.2 284.1 283.2C282.7 280.1 280.5 275.6 279.8 274.1M382.7 229.3C382 230.8 379.9 235.4 378.4 238.4C377 241.3 375.4 244.3 373.8 247.2C372.2 250.2 370.6 253.1 368.9 255.9C367.2 258.8 365.4 261.6 363.5 264.4C361.7 267.1 359.7 269.8 357.7 272.5C355.7 275.1 353.6 277.7 351.4 280.3C349.3 282.8 347 285.3 344.7 287.7C342.5 290.1 338.9 293.7 337.7 294.9M114.1 254.6C112.4 254.5 107.5 254.1 104.1 253.8C100.8 253.5 97.5 253.2 94.2 252.9C90.9 252.6 87.5 252.2 84.2 251.9C80.9 251.5 77.6 251.1 74.3 250.6C71 250.1 67.7 249.6 64.4 249C61.2 248.4 57.9 247.8 54.6 247C51.4 246.3 48.2 245.4 45 244.5C41.8 243.5 38.6 242.5 35.5 241.3C32.3 240.2 27.7 238.3 26.2 237.7M346.8 277.2C345.3 277.9 340.7 280 337.7 281.3C334.7 282.7 331.6 284 328.6 285.4C325.5 286.8 322.5 288.1 319.4 289.5C316.4 290.9 313.4 292.3 310.4 293.7C307.4 295.2 304.4 296.7 301.4 298.1C298.4 299.6 295.4 301.1 292.4 302.5C289.5 304 286.5 305.5 283.5 307.1C280.6 308.6 277.6 310.2 274.7 311.9C271.8 313.5 269 315.2 266.1 316.9C263.2 318.6 259 321.2 257.5 322.1M268.6 385.1C270.2 384.5 274.9 382.9 278.1 381.8C281.3 380.8 284.5 379.9 287.7 379C290.9 378.1 294.1 377.3 297.4 376.6C300.6 375.8 303.9 375.1 307.1 374.4C310.4 373.7 313.7 373 316.9 372.3C320.2 371.7 323.5 371 326.7 370.4C330 369.7 333.3 369 336.5 368.3C339.8 367.6 343 366.9 346.3 366C349.5 365.2 352.7 364.4 355.9 363.4C359.1 362.4 362.3 361.3 365.4 360.2C368.5 359 371.6 357.8 374.6 356.4C377.7 355.1 380.7 353.6 383.7 352.1C386.7 350.6 389.6 349.1 392.5 347.5C395.4 345.9 398.3 344.2 401.2 342.5C404.1 340.9 407 339.2 409.9 337.6C412.8 336 415.8 334.4 418.7 332.9C421.6 331.3 424.6 329.7 427.5 328.1C430.4 326.5 433.4 324.9 436.3 323.4C439.3 321.9 443.8 319.8 445.3 319M120.7 250.8C122.4 251.1 127.3 252 130.6 252.7C133.8 253.4 137.1 254.2 140.3 255C143.5 255.7 146.8 256.6 150 257.3C153.3 258.1 156.5 258.8 159.8 259.5C163 260.3 166.3 261.1 169.5 261.8C172.8 262.6 176 263.3 179.3 264.1C182.5 264.8 185.8 265.6 189 266.3C192.3 267 195.5 267.8 198.8 268.5C202 269.2 206.9 270.2 208.5 270.5M296.1 406.8C297.6 407.6 302.2 409.7 305.2 411.2C308.1 412.7 311 414.3 313.9 416C316.8 417.6 319.7 419.4 322.5 421.1C325.4 422.8 328.2 424.6 331.1 426.3C333.9 428 336.8 429.7 339.7 431.4C342.5 433.1 345.4 434.8 348.3 436.5C351.1 438.2 353.9 440 356.8 441.8C359.6 443.6 362.4 445.4 365.1 447.3C367.9 449.1 370.6 451 373.3 453C376 454.9 378.7 456.9 381.4 458.9C384 461 386.6 463 389.2 465.2C391.7 467.3 394.2 469.6 396.6 471.9C399 474.2 402.4 477.8 403.6 479M298.6 327.2C298.7 328.9 298.8 333.9 299 337.2C299.1 340.5 299.3 343.9 299.6 347.2C299.8 350.5 300.1 353.8 300.4 357.1C300.8 360.5 301.2 363.8 301.6 367.1C302.1 370.4 302.7 373.7 303.3 376.9C304 380.2 304.8 383.4 305.6 386.7C306.4 389.9 307.3 393.1 308.3 396.3C309.2 399.5 310.2 402.7 311.3 405.8C312.3 409 313.4 412.1 314.5 415.3C315.6 418.5 316.6 421.6 317.7 424.8C318.8 427.9 319.8 431.1 321 434.2C322.1 437.4 323.2 440.5 324.4 443.6C325.5 446.8 326.8 449.9 327.9 453C329.1 456.1 330.2 459.2 331.3 462.4C332.4 465.5 333.5 468.7 334.5 471.9C335.4 475.1 336.4 478.3 337.2 481.5C338 484.7 338.6 488 339.3 491.3C339.9 494.6 340.5 497.8 341 501.1C341.6 504.4 342 507.7 342.5 511C342.9 514.3 343.3 517.6 343.6 521C343.9 524.3 344.3 529.3 344.4 530.9M344.4 380.5C345 382.1 346.9 386.7 348.2 389.8C349.5 392.8 350.8 395.9 352.1 399C353.4 402 354.8 405.1 356.1 408.2C357.4 411.2 358.8 414.3 360.1 417.3C361.4 420.4 362.7 423.5 364 426.5C365.3 429.6 366.5 432.7 367.8 435.8C369.1 438.9 370.4 441.9 371.7 445C372.9 448.1 374.2 451.2 375.4 454.3C376.6 457.4 377.8 460.5 378.8 463.7C379.9 466.8 381 470 382 473.2C383 476.4 383.8 479.6 384.7 482.8C385.6 486 386.9 490.8 387.3 492.4M168.7 234.5C167.8 233.1 165.1 228.9 163.2 226.2C161.3 223.5 159.3 220.8 157.2 218.2C155.1 215.5 153 213 150.8 210.5C148.6 208 146.3 205.5 144 203.2C141.6 200.8 139.2 198.5 136.8 196.2C134.3 194 131.8 191.8 129.2 189.7C126.6 187.7 123.9 185.7 121.2 183.7C118.5 181.8 115.7 179.9 113 178C110.2 176.1 107.4 174.3 104.6 172.5C101.8 170.8 98.9 169 96 167.4C93.1 165.8 90.1 164.3 87.1 162.9C84.1 161.5 81 160.1 77.9 158.9C74.9 157.6 71.7 156.4 68.6 155.3C65.5 154.2 62.3 153.1 59.1 152.1C55.9 151.2 52.7 150.3 49.4 149.5C46.2 148.8 42.9 148.1 39.7 147.5C36.4 146.9 33.1 146.3 29.8 145.9C26.5 145.5 23.2 145.1 19.8 144.9C16.5 144.6 13.2 144.4 9.9 144.3C6.5 144.1 1.5 144 -0.1 144M302.1 285.9C302 284.2 301.7 279.2 301.6 275.9C301.5 272.6 301.3 269.2 301.3 265.9C301.3 262.6 301.3 259.2 301.5 255.9C301.6 252.6 301.9 249.3 302.2 245.9C302.6 242.6 303 239.3 303.6 236C304.1 232.7 304.8 229.5 305.5 226.2C306.2 223 307 219.7 307.8 216.5C308.7 213.3 309.6 210 310.5 206.8C311.4 203.6 312.4 200.5 313.4 197.3C314.5 194.1 315.6 191 316.8 187.9C318 184.8 319.2 181.7 320.5 178.6C321.8 175.5 323.2 172.5 324.5 169.4C325.8 166.4 327.2 163.3 328.5 160.3C329.9 157.2 331.3 154.2 332.8 151.2C334.3 148.2 335.7 145.2 337.3 142.3C338.9 139.3 340.5 136.5 342.2 133.6C343.8 130.7 345.5 127.8 347.3 125C349 122.1 350.8 119.3 352.5 116.5C354.3 113.6 356.1 110.8 357.8 108C359.5 105.1 361.2 102.2 362.9 99.3C364.5 96.4 366.9 92 367.7 90.6M181.7 409.3C183 410.3 187 413.4 189.7 415.3C192.4 417.2 195.2 419 198 420.8C200.8 422.7 203.6 424.4 206.5 426.2C209.3 427.9 212.2 429.5 215.2 431.1C218.1 432.7 221.1 434.3 224.1 435.7C227.1 437.1 230.1 438.4 233.2 439.7C236.3 441 239.4 442.1 242.6 443.2C245.7 444.3 248.9 445.3 252.1 446.2C255.3 447.1 258.6 447.9 261.8 448.7C265.1 449.4 268.3 450.1 271.6 450.7C274.9 451.3 278.2 451.7 281.5 452.1C284.8 452.5 288.2 452.8 291.5 453C294.8 453.3 298.1 453.5 301.5 453.6C304.8 453.6 308.1 453.6 311.5 453.5C314.8 453.4 319.8 453.1 321.5 453.1M372.4 379.2C373.8 378.4 378.1 375.9 381 374.2C383.8 372.4 386.7 370.7 389.5 368.9C392.3 367.1 395.2 365.4 397.9 363.5C400.7 361.7 403.4 359.8 406.2 357.9C408.9 355.9 411.6 354 414.3 352C417 350.1 419.7 348.1 422.4 346.2C425.1 344.2 427.8 342.2 430.5 340.3C433.1 338.3 435.8 336.3 438.5 334.4C441.3 332.5 444 330.6 446.8 328.7C449.6 326.9 452.3 325 455.2 323.2C458 321.5 460.8 319.7 463.7 318.1C466.6 316.4 471 314.1 472.5 313.3M343.8 388.7C344.8 390.1 347.8 394.1 349.8 396.7C351.8 399.4 353.8 402.1 355.9 404.7C358 407.3 360.1 409.9 362.3 412.4C364.5 414.9 366.8 417.3 369 419.8C371.3 422.2 373.5 424.7 375.9 427.1C378.2 429.5 380.5 431.9 382.8 434.2C385.2 436.6 387.6 438.9 390.1 441.1C392.5 443.4 395.1 445.5 397.6 447.7C400.2 449.8 402.7 451.9 405.4 454C408.1 456 412.2 458.8 413.6 459.8M148.5 326.1C147.5 327.4 144.4 331.3 142.4 334C140.4 336.6 138.4 339.4 136.5 342.1C134.6 344.8 132.7 347.6 130.9 350.3C129 353.1 127.1 355.9 125.3 358.6C123.4 361.4 121.6 364.2 119.8 367C118 369.8 116.1 372.6 114.4 375.4C112.7 378.3 111.1 381.2 109.5 384.1C107.9 387.1 106.4 390.1 105 393.1C103.5 396.1 102.1 399.1 100.8 402.1C99.5 405.2 98.2 408.3 97 411.4C95.8 414.5 94.6 417.6 93.5 420.8C92.5 423.9 91.6 427.1 90.6 430.3C89.7 433.5 88.9 436.8 88.1 440C87.3 443.2 86.6 446.5 86 449.8C85.4 453.1 84.9 456.4 84.4 459.7C84 463 83.6 466.3 83.3 469.6C82.9 472.9 82.5 476.2 82.2 479.5C81.9 482.9 81.5 487.8 81.3 489.5M237.6 387.2C235.9 387.4 231 387.9 227.7 388.4C224.4 388.8 221.1 389.4 217.8 390.1C214.6 390.8 211.3 391.6 208.1 392.5C204.9 393.3 201.7 394.2 198.5 395.1C195.3 396.1 192.1 397.1 188.9 398C185.7 398.9 182.5 399.9 179.3 400.8C176.1 401.8 172.9 402.7 169.7 403.7C166.5 404.7 161.8 406.3 160.2 406.8M392.3 234.1C390.8 234.8 386.2 236.7 383.1 237.9C379.9 239 376.8 240.1 373.6 241C370.4 242 367.1 242.8 363.9 243.6C360.7 244.4 357.4 245 354.1 245.6C350.8 246.2 347.5 246.6 344.2 247C340.9 247.4 337.6 247.6 334.2 247.8C330.9 248 327.6 248.1 324.2 248.2C320.9 248.3 317.6 248.2 314.2 248.2C310.9 248.1 307.6 248 304.3 247.8C300.9 247.6 297.6 247.4 294.3 247C291 246.6 287.7 246.1 284.4 245.5C281.1 245 276.2 244 274.6 243.7M300.5 349.2C300.7 347.6 301.4 342.6 301.7 339.3C302.1 336 302.4 332.7 302.7 329.3C303 326 303.3 322.7 303.5 319.4C303.7 316 303.8 312.7 303.9 309.4C303.9 306 303.9 302.7 303.9 299.4C303.8 296 303.7 292.7 303.5 289.4C303.2 286.1 302.9 282.7 302.5 279.4C302 276.1 301.5 272.8 300.9 269.6C300.3 266.3 299.1 261.4 298.7 259.8M316.9 231C315.2 231.1 310.2 231.4 306.9 231.4C303.6 231.4 300.2 231.3 296.9 231.2C293.6 231 290.3 230.7 286.9 230.4C283.6 230 280.3 229.6 277 229.1C273.8 228.5 270.5 227.8 267.2 227.1C264 226.4 260.7 225.7 257.5 224.9C254.2 224.1 249.4 222.8 247.8 222.4M247 257.6C245.4 258.1 240.6 259.5 237.5 260.6C234.3 261.7 231.1 262.7 228 264C224.9 265.2 221.9 266.5 218.8 267.9C215.8 269.3 212.8 270.8 209.9 272.3C206.9 273.9 204 275.6 201.2 277.3C198.4 279 195.6 280.9 192.8 282.8C190.1 284.7 187.4 286.7 184.8 288.7C182.1 290.7 179.6 292.9 177 295C174.5 297.2 172 299.4 169.5 301.6C167.1 303.9 164.7 306.3 162.5 308.7C160.2 311.1 158 313.6 155.8 316.2C153.7 318.7 150.6 322.7 149.5 324M201.5 373.8C202.6 372.6 205.9 368.8 208.1 366.3C210.4 363.9 212.7 361.5 215 359C217.3 356.6 219.6 354.2 221.8 351.7C224.1 349.3 226.3 346.9 228.6 344.4C230.8 341.9 232.9 339.3 235.1 336.8C237.3 334.3 239.4 331.7 241.6 329.2C243.8 326.7 245.9 324.1 248.1 321.6C250.3 319.1 252.5 316.6 254.8 314.2C257 311.7 259.3 309.3 261.7 306.9C264 304.5 266.3 302.2 268.7 299.8C271.2 297.5 273.6 295.3 276.1 293.1C278.6 290.8 281.1 288.7 283.6 286.5C286.1 284.3 288.6 282.1 291.1 279.8C293.6 277.6 296.1 275.4 298.6 273.2C301.1 271.1 303.7 268.9 306.3 266.8C308.8 264.7 311.4 262.5 314 260.5C316.7 258.5 319.4 256.5 322.1 254.6C324.8 252.7 327.6 250.8 330.4 249C333.2 247.2 336 245.4 338.8 243.6C341.6 241.8 344.5 240.1 347.3 238.3C350.1 236.5 354.3 233.8 355.7 232.9M192.8 245.4C192.1 246.9 190.1 251.5 188.7 254.5C187.3 257.5 185.9 260.6 184.5 263.6C183.1 266.6 181.6 269.6 180.1 272.6C178.7 275.6 177.3 278.6 175.8 281.6C174.3 284.6 172.8 287.5 171.3 290.5C169.8 293.5 168.4 296.5 166.9 299.5C165.4 302.5 164 305.5 162.4 308.4C160.9 311.4 159.4 314.4 157.8 317.3C156.2 320.3 154.7 323.2 153.1 326.1C151.6 329.1 150 332 148.5 335C147 338 145.4 340.9 143.9 343.9C142.4 346.9 140.9 349.9 139.4 352.8C137.8 355.8 136.3 358.7 134.6 361.6C133 364.5 131.3 367.4 129.6 370.2C127.8 373.1 126 375.9 124.1 378.6C122.3 381.4 120.4 384.2 118.4 386.8C116.4 389.5 114.4 392.1 112.3 394.7C110.1 397.3 107.9 399.7 105.6 402.2C103.4 404.7 101.1 407.1 98.8 409.5C96.4 411.8 94 414.2 91.7 416.5C89.3 418.8 86.9 421.2 84.5 423.5C82.1 425.8 78.5 429.2 77.2 430.4M342.2 347.6C343.8 348.1 348.5 349.6 351.7 350.5C354.9 351.5 358.1 352.4 361.4 353.1C364.6 353.9 367.9 354.6 371.2 355.3C374.4 355.9 377.7 356.6 381 357C384.3 357.5 387.6 357.9 390.9 358.2C394.2 358.5 397.6 358.7 400.9 358.8C404.2 358.9 407.6 359 410.9 359C414.2 359 417.6 358.9 420.9 358.8C424.2 358.6 427.6 358.3 430.9 358.1C434.2 357.8 437.5 357.5 440.8 357.2C444.2 356.9 447.5 356.6 450.8 356.3C454.1 356 457.4 355.7 460.8 355.4C464.1 355.1 469.1 354.6 470.7 354.4M222.1 254.1C222.5 252.5 223.7 247.6 224.6 244.4C225.4 241.2 226.3 238 227.2 234.7C228.1 231.5 229 228.3 229.8 225.1C230.6 221.9 231.4 218.6 232.2 215.4C233 212.1 233.7 208.9 234.5 205.7C235.2 202.4 236 199.2 236.7 195.9C237.4 192.6 238 189.4 238.7 186.1C239.5 182.9 240.2 179.6 240.9 176.4C241.6 173.1 242.4 169.9 243.1 166.6C243.8 163.3 244.6 160.1 245.3 156.8C246 153.6 246.6 150.3 247.2 147C247.8 143.7 248.4 140.5 248.8 137.2C249.3 133.9 249.6 130.5 249.9 127.2C250.2 123.9 250.4 120.6 250.6 117.2C250.7 113.9 250.6 108.9 250.6 107.2M243.6 386.4C242.6 387.7 239.6 391.7 237.5 394.3C235.4 396.9 233.3 399.5 231.1 402C228.8 404.5 226.5 406.9 224.2 409.3C221.9 411.6 219.4 413.9 217 416.2C214.5 418.4 212 420.6 209.5 422.8C207 425.1 204.5 427.3 202 429.4C199.4 431.5 196.8 433.6 194.2 435.7C191.6 437.8 189 439.8 186.4 441.9C183.7 444 181.2 446.1 178.5 448.1C175.9 450.1 173.2 452.1 170.6 454.2C167.9 456.2 165.3 458.2 162.6 460.3C160 462.3 157.3 464.3 154.7 466.3C152 468.3 149.4 470.3 146.7 472.4C144.1 474.4 141.5 476.5 138.9 478.6C136.3 480.6 133.6 482.7 131 484.7C128.3 486.7 124.2 489.6 122.9 490.6M162 249.7C160.5 249.1 155.8 247.2 152.8 245.9C149.7 244.6 146.7 243.2 143.6 241.8C140.6 240.5 137.6 239.1 134.5 237.7C131.5 236.3 128.5 234.9 125.5 233.5C122.4 232.1 119.4 230.7 116.4 229.3C113.4 227.9 110.3 226.5 107.3 225.2C104.2 223.8 101.2 222.4 98.2 221.1C95.1 219.7 90.6 217.7 89 217M355 402.8C356.2 401.6 359.6 397.9 361.8 395.5C364.1 393 366.3 390.5 368.5 388C370.7 385.5 372.9 383 375.1 380.5C377.2 377.9 379.4 375.4 381.4 372.7C383.4 370.1 385.4 367.4 387.3 364.6C389.1 361.9 390.9 359.1 392.6 356.2C394.4 353.3 396 350.4 397.6 347.5C399.2 344.6 400.7 341.6 402.3 338.7C403.8 335.7 405.4 332.8 407 329.8C408.5 326.9 410.1 323.9 411.6 321C413.1 318 414.5 315 415.9 311.9C417.3 308.9 418.5 305.8 419.7 302.7C420.9 299.6 422 296.4 423 293.3C424 290.1 425.4 285.3 425.9 283.7M204.4 295.6C204.9 297.2 206.6 301.9 207.8 305C209 308.1 210.3 311.2 211.6 314.3C212.9 317.3 214.2 320.4 215.5 323.5C216.8 326.5 218.2 329.6 219.6 332.6C221 335.6 222.4 338.6 223.8 341.6C225.3 344.6 226.8 347.6 228.3 350.6C229.9 353.5 231.5 356.4 233.1 359.4C234.7 362.3 236.4 365.2 238 368.1C239.7 371 241.3 373.9 243 376.7C244.7 379.6 246.4 382.5 248.1 385.4C249.8 388.2 251.4 391.1 253.1 394C254.7 397 256.3 399.9 257.8 402.8C259.3 405.8 260.7 408.8 262.2 411.8C263.6 414.9 265 417.9 266.3 420.9C267.7 424 269.1 427 270.4 430C271.8 433.1 273.2 436.1 274.6 439.1C276 442.2 277.4 445.2 278.8 448.2C280.3 451.2 282.5 455.7 283.3 457.2M379.3 264.7C378.1 265.8 374.3 269 371.7 271.2C369.2 273.4 366.7 275.6 364.2 277.8C361.7 279.9 359.1 282.1 356.6 284.3C354.1 286.4 351.6 288.6 349 290.8C346.5 292.9 343.9 295.1 341.3 297.1C338.7 299.2 336 301.2 333.4 303.2C330.7 305.2 328 307.1 325.2 309C322.4 310.8 319.6 312.6 316.7 314.3C313.8 316 310.9 317.5 307.9 319.1C305 320.6 302 322.1 298.9 323.5C295.9 324.8 292.9 326.2 289.8 327.4C286.7 328.6 283.5 329.8 280.4 330.8C277.2 331.9 272.4 333.3 270.8 333.8M370 282.9C370.8 281.5 373.1 277.1 374.8 274.2C376.5 271.3 378.3 268.5 380.1 265.7C381.9 262.9 383.7 260.1 385.6 257.3C387.4 254.6 389.4 251.8 391.3 249.1C393.3 246.4 395.3 243.8 397.3 241.2C399.4 238.5 401.4 235.9 403.5 233.3C405.6 230.7 407.8 228.2 410.1 225.8C412.3 223.3 414.6 220.9 417 218.5C419.3 216.1 421.7 213.8 424.1 211.5C426.6 209.3 429 207 431.5 204.8C434 202.6 436.6 200.4 439.2 198.4C441.8 196.3 444.4 194.3 447.1 192.3C449.8 190.3 453.8 187.3 455.2 186.3M392.7 278C393.8 279.3 397.1 283.1 399.2 285.6C401.4 288.2 403.5 290.7 405.6 293.3C407.8 295.8 409.9 298.4 412 301C414.1 303.6 416.2 306.2 418.2 308.8C420.2 311.5 422.2 314.2 424.1 316.9C426 319.6 427.9 322.4 429.8 325.1C431.7 327.9 433.6 330.6 435.5 333.4C437.4 336.1 439.2 338.9 441.2 341.6C443.1 344.3 445.1 347 447 349.7C449 352.4 451 355 453 357.7C455 360.4 457 363.1 459 365.7C461 368.3 463.1 371 465.2 373.5C467.3 376.1 469.5 378.6 471.8 381.1C474.1 383.5 476.4 385.9 478.8 388.2C481.2 390.5 483.7 392.7 486.2 394.9C488.8 397 491.4 399.1 494.1 401.1C496.7 403.1 499.5 405 502.2 406.9C505 408.7 509.3 411.2 510.8 412.1M324.3 247.8C322.6 247.8 317.6 247.8 314.3 247.9C311 248 307.6 248 304.3 248.2C301 248.4 297.6 248.6 294.3 248.9C291 249.2 287.7 249.7 284.4 250.2C281.1 250.7 277.8 251.4 274.6 252C271.3 252.7 268 253.4 264.8 254.3C261.6 255.1 258.4 256.1 255.2 257.1C252.1 258.1 248.9 259.3 245.8 260.4C242.7 261.6 239.6 262.9 236.5 264.2C233.5 265.5 230.4 266.9 227.4 268.4C224.4 269.8 221.5 271.3 218.5 272.9C215.6 274.4 212.7 276.1 209.8 277.8C206.9 279.5 204.1 281.3 201.3 283.1C198.5 284.9 195.8 286.8 193 288.7C190.3 290.6 187.7 292.6 185.1 294.7C182.5 296.8 179.9 299 177.5 301.2C175 303.5 171.5 307 170.3 308.2M226.4 342.9C225.1 344 221.2 347.1 218.7 349.2C216.1 351.4 213.6 353.6 211.2 355.8C208.7 358.1 206.2 360.3 203.8 362.6C201.4 364.9 199 367.2 196.7 369.6C194.4 372.1 192.2 374.5 190 377.1C187.9 379.6 185.8 382.3 183.8 384.9C181.8 387.6 179.8 390.2 177.9 393C176 395.7 174.1 398.5 172.4 401.3C170.6 404.2 169 407.1 167.4 410C165.8 412.9 164.3 415.9 162.8 418.9C161.3 421.8 159.9 424.9 158.5 427.9C157.1 430.9 155.8 434 154.5 437.1C153.1 440.1 151.8 443.2 150.4 446.2C149 449.2 147.6 452.2 146.1 455.2C144.7 458.3 143.3 461.3 141.8 464.3C140.4 467.3 139 470.3 137.6 473.3C136.1 476.3 134.7 479.3 133.3 482.3C131.8 485.4 130.4 488.4 128.9 491.3C127.4 494.3 125.8 497.2 124.1 500.1C122.5 503 120.7 505.8 118.9 508.6C117 511.4 115.1 514.1 113.1 516.8C111.1 519.4 107.9 523.3 106.8 524.6M320.3 393.4C320.8 391.8 322.2 387 323.1 383.8C324 380.6 324.9 377.4 325.7 374.1C326.5 370.9 327.3 367.7 328.1 364.4C328.9 361.2 329.7 358 330.5 354.7C331.3 351.5 332 348.2 332.7 345C333.5 341.7 334.2 338.5 335 335.2C335.7 332 336.5 328.7 337.4 325.5C338.2 322.3 339.2 319.1 340.2 315.9C341.3 312.8 343 308.1 343.6 306.5M283.7 256.7C284.6 255.4 287.5 251.3 289.4 248.5C291.3 245.8 293.1 243 294.9 240.2C296.8 237.4 298.6 234.6 300.3 231.8C302 228.9 303.6 226 305.3 223.1C306.9 220.2 308.5 217.2 310.1 214.3C311.7 211.4 313.3 208.5 314.9 205.5C316.5 202.6 318.1 199.7 319.8 196.8C321.4 193.9 323.1 191 324.8 188.2C326.4 185.3 328.1 182.4 329.8 179.5C331.5 176.7 334.1 172.4 335 171M123.7 227.8C122.4 226.8 118.3 223.9 115.7 221.8C113.1 219.7 110.6 217.5 108.1 215.2C105.7 213 103.3 210.6 101 208.3C98.6 205.9 96.3 203.5 94.1 201C91.9 198.5 89.7 196 87.6 193.4C85.5 190.8 83.5 188.1 81.6 185.4C79.6 182.7 77.7 180 75.9 177.2C74.1 174.4 72.3 171.5 70.6 168.7C68.9 165.9 67.1 163 65.4 160.1C63.7 157.3 62.1 154.4 60.5 151.4C58.9 148.5 57.3 145.6 55.8 142.6C54.2 139.7 51.9 135.3 51.1 133.8M319.9 379.2C320.2 380.9 321 385.8 321.5 389.1C322.1 392.4 322.6 395.7 323.1 399C323.5 402.3 323.9 405.6 324.3 408.9C324.6 412.2 324.9 415.5 325.1 418.9C325.3 422.2 325.4 425.5 325.5 428.9C325.6 432.2 325.6 435.5 325.6 438.9C325.7 442.2 325.7 447.2 325.7 448.9M108.2 408.2C109.8 408.1 114.8 407.9 118.1 407.7C121.5 407.6 124.8 407.4 128.1 407.3C131.5 407.2 134.8 407.2 138.1 407.2C141.5 407.2 144.8 407.3 148.1 407.4C151.5 407.5 154.8 407.7 158.1 407.8C161.5 408 164.8 408.2 168.1 408.2C171.4 408.3 174.8 408.3 178.1 408.3C181.4 408.3 184.8 408.4 188.1 408.3C191.4 408.3 194.8 408.2 198.1 408.1C201.4 408 204.8 407.8 208.1 407.7C211.4 407.5 214.8 407.3 218.1 407.1C221.4 406.9 224.7 406.8 228.1 406.6C231.4 406.4 234.7 406.3 238.1 406.1C241.4 406 244.7 405.8 248.1 405.7C251.4 405.7 254.7 405.7 258.1 405.7C261.4 405.7 264.7 405.7 268.1 405.7C271.4 405.8 274.7 405.8 278.1 405.9C281.4 406 286.4 406.1 288 406.2M314.3 334.4C315.9 334.8 320.8 335.8 324.1 336.4C327.3 337.1 330.6 337.9 333.8 338.6C337.1 339.3 340.4 340 343.6 340.7C346.9 341.4 350.1 342.2 353.4 342.9C356.6 343.6 359.9 344.2 363.2 344.9C366.4 345.6 369.7 346.3 372.9 347.1C376.2 347.9 379.4 348.7 382.6 349.6C385.8 350.6 389 351.6 392.1 352.7C395.3 353.7 398.4 354.9 401.5 356.1C404.6 357.3 409.3 359.2 410.8 359.8M344.8 259.2C345.8 257.9 348.9 254 351.1 251.5C353.3 248.9 355.6 246.5 357.9 244.1C360.2 241.7 362.6 239.3 364.9 237C367.3 234.6 369.7 232.3 372 229.9C374.4 227.6 376.8 225.3 379.1 222.8C381.4 220.4 383.7 218 385.9 215.5C388.1 213 390.3 210.6 392.5 208C394.6 205.4 396.6 202.8 398.6 200.1C400.5 197.4 402.4 194.6 404.2 191.8C406 189 407.7 186.2 409.4 183.3C411 180.3 412.5 177.4 414 174.4C415.5 171.4 416.8 168.4 418.2 165.3C419.6 162.3 421 159.3 422.4 156.2C423.7 153.2 425.1 150.1 426.5 147.1C427.8 144.1 429.2 141 430.6 138C431.9 134.9 433.2 131.9 434.5 128.8C435.8 125.7 437 122.6 438.2 119.5C439.5 116.4 440.8 113.4 442 110.3C443.2 107.1 445 102.5 445.5 100.9M214.7 271.2C214.9 272.9 215.7 277.8 216.2 281.1C216.6 284.4 216.9 287.7 217.2 291C217.5 294.4 217.7 297.7 217.9 301C218 304.3 218.1 307.7 218 311C218 314.3 218 317.7 217.8 321C217.6 324.3 217.3 327.7 217 331C216.7 334.3 216.3 337.6 215.9 340.9C215.4 344.2 214.8 347.5 214.2 350.8C213.5 354 212.4 358.9 212 360.5M329.3 286.8C331 286.9 335.9 287.4 339.3 287.6C342.6 287.8 345.9 288 349.3 288C352.6 288 355.9 287.9 359.3 287.7C362.6 287.6 365.9 287.3 369.2 286.9C372.5 286.6 375.8 286.1 379.1 285.6C382.4 285.1 385.7 284.5 389 283.8C392.2 283.2 395.5 282.5 398.8 281.7C402 281 405.2 280 408.4 279.1C411.6 278.2 414.8 277.1 417.9 276.1C421.1 275.1 424.3 274 427.4 273C430.6 272 433.8 271 436.9 269.9C440.1 268.8 443.2 267.7 446.3 266.5C449.5 265.3 452.6 264 455.6 262.7C458.6 261.3 461.6 259.8 464.6 258.3C467.6 256.8 472 254.4 473.4 253.6M180.1 301.2C180.6 302.7 182 307.5 183.1 310.7C184.1 313.9 185.2 317 186.4 320.1C187.6 323.2 188.8 326.4 190.1 329.4C191.4 332.5 192.8 335.5 194.3 338.5C195.8 341.5 197.4 344.4 199 347.3C200.7 350.2 202.5 353 204.3 355.8C206.1 358.6 208 361.4 209.9 364.1C211.8 366.8 213.8 369.5 215.8 372.2C217.8 374.8 219.8 377.5 222 380C224.1 382.6 226.3 385.1 228.6 387.5C230.9 389.9 233.3 392.3 235.7 394.5C238.2 396.8 240.7 399 243.2 401.1C245.8 403.3 248.4 405.4 251 407.4C253.6 409.5 256.2 411.6 258.8 413.7C261.4 415.7 264.1 417.8 266.7 419.8C269.3 421.9 272 423.9 274.6 426C277.2 428 279.9 430.1 282.5 432.1C285.1 434.1 289.1 437.1 290.5 438.2M266 343.5C266.9 342.1 269.7 337.9 271.4 335C273.1 332.2 274.7 329.3 276.3 326.3C277.8 323.4 279.2 320.3 280.6 317.3C282 314.3 283.2 311.2 284.4 308.1C285.6 304.9 286.7 301.8 287.8 298.7C288.9 295.5 289.9 292.3 291 289.2C292 286 293 282.8 294.1 279.7C295.1 276.5 296.2 273.3 297.3 270.2C298.4 267.1 299.6 263.9 300.9 260.9C302.2 257.8 303.6 254.8 305.1 251.8C306.6 248.8 309 244.4 309.7 242.9M151.5 359.7C151.4 358 151.2 353 151.3 349.7C151.3 346.3 151.5 343 151.7 339.7C151.8 336.3 152 333 152.4 329.7C152.7 326.4 153.1 323.1 153.6 319.8C154.1 316.5 154.7 313.2 155.3 309.9C156 306.7 156.7 303.4 157.6 300.2C158.4 296.9 159.4 293.7 160.4 290.6C161.4 287.4 162.4 284.2 163.6 281.1C164.8 278 166.1 274.9 167.4 271.9C168.8 268.8 170.2 265.8 171.8 262.9C173.3 259.9 175 257 176.7 254.1C178.3 251.3 180.1 248.4 181.8 245.6C183.6 242.8 186.3 238.5 187.2 237.1M268.5 270.4C267.3 271.5 263.5 274.8 261 277C258.5 279.2 256 281.4 253.5 283.6C250.9 285.7 248.3 287.9 245.7 289.9C243.1 292 240.5 294 237.8 296.1C235.2 298.1 232.6 300.2 229.9 302.2C227.2 304.2 224.5 306.1 221.8 308.1C219.1 310 216.4 311.9 213.7 313.9C211 315.8 208.3 317.8 205.7 319.8C203 321.8 200.3 323.8 197.6 325.7C194.8 327.6 192.1 329.5 189.3 331.4C186.6 333.2 183.8 335.1 181.1 337C178.3 338.9 175.6 340.8 172.8 342.6C170 344.4 167.1 346.2 164.3 347.8C161.4 349.5 158.4 351.1 155.5 352.6C152.5 354.1 149.5 355.5 146.4 356.8C143.3 358.2 140.2 359.4 137.1 360.5C134 361.6 130.8 362.7 127.6 363.6C124.4 364.6 121.2 365.5 117.9 366.2C114.7 367 111.4 367.7 108.2 368.2C104.9 368.8 101.6 369.3 98.3 369.7C94.9 370 91.6 370.3 88.3 370.5C85 370.7 80 370.7 78.3 370.7M360.9 371.3C362.4 370.5 366.9 368.3 369.9 366.8C372.9 365.3 375.9 363.9 378.9 362.5C381.9 361.1 385 359.7 388 358.3C391 356.9 394 355.5 397 354.1C400 352.6 403 351 405.9 349.5C408.9 348 411.9 346.4 414.8 345C417.8 343.5 420.8 342 423.8 340.6C426.9 339.2 429.9 337.8 432.9 336.5C436 335.1 439.1 333.9 442.1 332.6C445.2 331.3 448.3 330 451.4 328.7C454.4 327.4 457.5 326 460.6 324.8C463.7 323.5 466.8 322.4 469.9 321.2C473 320 476.2 318.9 479.3 317.8C482.4 316.7 485.6 315.6 488.8 314.6C492 313.6 495.2 312.7 498.4 311.8C501.6 311 504.9 310.2 508.1 309.5C511.4 308.8 514.7 308.2 517.9 307.6C521.2 307.1 524.5 306.6 527.8 306.2C531.2 305.8 534.5 305.4 537.8 305.1C541.1 304.8 544.4 304.5 547.8 304.3C551.1 304 556.1 303.6 557.7 303.5M114.8 271.3C115.6 269.9 118 265.5 119.4 262.5C120.9 259.5 122.4 256.5 123.7 253.4C125.1 250.4 126.4 247.3 127.6 244.2C128.8 241.1 130 238 131.1 234.8C132.2 231.7 133.4 228.6 134.4 225.4C135.5 222.3 136.6 219.1 137.5 215.9C138.5 212.7 139.4 209.5 140.3 206.3C141.2 203.1 142 199.9 142.9 196.6C143.7 193.4 144.6 190.2 145.5 187C146.4 183.8 147.3 180.6 148.3 177.4C149.2 174.2 150.1 171 151.1 167.8C152.1 164.6 153.2 161.5 154.3 158.3C155.3 155.1 156.3 152 157.5 148.8C158.6 145.7 159.8 142.6 161 139.5C162.3 136.4 163.6 133.3 165 130.3C166.4 127.3 167.8 124.3 169.2 121.2C170.6 118.2 172 115.2 173.4 112.2C174.8 109.1 177 104.7 177.8 103.2M391.1 243.1C390 242 386.4 238.5 384.1 236C381.9 233.6 379.7 231 377.5 228.5C375.4 225.9 373.3 223.3 371.3 220.7C369.2 218.1 367.1 215.5 365.1 212.8C363.1 210.1 361.2 207.4 359.3 204.7C357.4 202 355.5 199.2 353.7 196.4C351.9 193.6 350.1 190.8 348.4 187.9C346.8 185 345.2 182.1 343.7 179.1C342.2 176.1 340.8 173.1 339.5 170C338.1 167 336.9 163.9 335.8 160.7C334.6 157.6 333.5 154.5 332.5 151.3C331.4 148.1 330.5 144.9 329.6 141.7C328.7 138.5 327.8 135.3 326.9 132.1C326.1 128.9 325.3 125.6 324.5 122.4C323.7 119.2 322.9 115.9 322.1 112.7C321.4 109.4 320.6 106.2 319.8 102.9C319 99.7 318.1 96.5 317.2 93.3C316.4 90.1 315.5 86.8 314.7 83.6C313.9 80.4 313.1 77.1 312.2 73.9C311.4 70.7 310.2 65.8 309.8 64.2M165.9 376.3C164.3 376.5 159.3 377 156 377.5C152.7 378 149.4 378.6 146.2 379.3C142.9 379.9 139.6 380.6 136.4 381.4C133.2 382.2 130 383.1 126.8 384.1C123.6 385.1 120.4 386.2 117.3 387.4C114.2 388.6 111.1 389.9 108.1 391.2C105 392.6 102 394.1 99.1 395.6C96.1 397.2 93.2 398.8 90.4 400.5C87.5 402.2 84.7 404 82 405.9C79.2 407.8 76.5 409.8 73.9 411.8C71.3 413.9 68.7 416 66.2 418.2C63.7 420.4 61.3 422.7 58.9 425C56.5 427.4 54.2 429.8 51.9 432.2C49.7 434.7 47.5 437.2 45.4 439.8C43.3 442.4 41.3 445 39.3 447.8C37.4 450.5 34.7 454.7 33.8 456.1M172 411.9C171.1 413.2 168.2 417.4 166.3 420C164.3 422.7 162.3 425.4 160.2 428C158.1 430.6 156 433.2 153.8 435.7C151.6 438.2 149.4 440.7 147 443C144.7 445.4 142.3 447.7 139.8 449.9C137.3 452.2 134.8 454.3 132.2 456.5C129.7 458.6 127.1 460.8 124.5 462.8C121.9 464.9 119.2 466.9 116.5 468.8C113.8 470.8 111 472.6 108.3 474.5C105.5 476.4 102.7 478.2 100 480.1C97.2 481.9 94.4 483.8 91.6 485.6C88.8 487.4 86 489.2 83.2 491C80.4 492.7 77.5 494.5 74.7 496.2C71.8 497.9 67.4 500.3 66 501.1M392.2 354.7C393.4 353.5 397 350 399.3 347.6C401.6 345.2 403.8 342.7 406 340.2C408.2 337.7 410.3 335.1 412.4 332.6C414.6 330 416.7 327.4 418.8 324.9C420.9 322.3 423 319.6 425 317C427.1 314.4 429.2 311.9 431.3 309.2C433.3 306.6 435.3 303.9 437.3 301.2C439.3 298.6 441.2 295.8 443.1 293.1C445 290.4 446.9 287.6 448.8 284.9C450.7 282.2 452.7 279.5 454.6 276.8C456.5 274 458.5 271.3 460.3 268.5C462.1 265.8 463.9 262.9 465.7 260.1C467.5 257.3 469.2 254.4 471 251.6C472.7 248.8 474.4 245.9 476.1 243C477.8 240.2 479.5 237.3 481.2 234.4C482.9 231.5 485.5 227.3 486.3 225.8M117 393.2C118.3 394.3 122.1 397.5 124.7 399.6C127.2 401.8 129.7 404 132.3 406.1C134.8 408.3 137.4 410.4 139.9 412.6C142.4 414.8 144.9 416.9 147.4 419.2C149.9 421.4 152.4 423.6 154.8 425.9C157.3 428.1 159.8 430.4 162.2 432.6C164.6 434.9 167.1 437.2 169.4 439.6C171.8 441.9 174.1 444.3 176.3 446.8C178.5 449.3 180.6 451.9 182.7 454.5C184.8 457.1 187.8 461.1 188.9 462.4M234.9 237.1C233.3 237.6 228.5 239.1 225.3 240C222.1 240.9 218.9 241.8 215.6 242.5C212.4 243.3 209.1 243.9 205.8 244.5C202.6 245.1 199.3 245.7 196 246.2C192.7 246.7 189.4 247.1 186.1 247.5C182.8 247.9 179.4 248.3 176.1 248.6C172.8 248.9 169.5 249.2 166.1 249.3C162.8 249.5 159.5 249.5 156.1 249.5C152.8 249.5 149.5 249.4 146.1 249.3C142.8 249.1 139.5 248.9 136.2 248.6C132.9 248.3 127.9 247.6 126.2 247.5M104.9 344.4C103.3 344 98.4 342.8 95.2 341.9C92 341 88.9 340 85.7 338.9C82.6 337.8 79.4 336.6 76.4 335.3C73.3 334 70.3 332.6 67.3 331.2C64.3 329.7 61.3 328.2 58.4 326.6C55.5 325 52.6 323.3 49.8 321.5C46.9 319.7 44.2 317.9 41.5 315.9C38.8 314 36.1 311.9 33.5 309.8C30.9 307.7 28.4 305.5 26 303.3C23.5 301.1 21 298.8 18.7 296.4C16.3 294.1 14 291.7 11.8 289.2C9.5 286.8 7.4 284.2 5.3 281.6C3.2 279 1.2 276.3 -0.7 273.6C-2.7 270.9 -4.5 268.1 -6.3 265.3C-8.1 262.5 -9.8 259.6 -11.6 256.8C-13.3 254 -15 251.1 -16.7 248.2C-18.4 245.4 -20 242.4 -21.7 239.6C-23.3 236.7 -25 233.8 -26.7 230.9C-28.3 228 -30 225.1 -31.7 222.3C-33.5 219.4 -35.2 216.5 -36.9 213.7C-38.7 210.9 -40.6 208.1 -42.5 205.4C-44.4 202.7 -47.4 198.7 -48.4 197.3M237.2 401.4C236.9 399.8 236 394.9 235.3 391.6C234.6 388.3 233.9 385.1 233.2 381.8C232.4 378.6 231.7 375.3 230.9 372.1C230.2 368.8 229.5 365.6 228.7 362.3C227.9 359.1 227.2 355.8 226.3 352.6C225.5 349.4 224.6 346.2 223.6 343C222.5 339.8 221.4 336.7 220.3 333.6C219.1 330.5 217 325.9 216.4 324.4M305.4 238.8C306.3 240.2 309 244.5 310.9 247.2C312.8 250 314.7 252.6 316.8 255.3C318.8 257.9 321 260.5 323.2 263C325.4 265.5 327.6 267.9 330 270.3C332.3 272.6 334.8 274.9 337.3 277.2C339.7 279.4 342.3 281.5 344.8 283.7C347.3 285.9 349.9 288 352.5 290.1C355 292.3 357.6 294.4 360.2 296.5C362.8 298.6 365.4 300.7 368 302.8C370.5 304.9 373 307.1 375.6 309.2C378.1 311.4 380.7 313.5 383.3 315.7C385.8 317.8 388.4 319.9 391 322C393.6 324.1 396.2 326.1 398.9 328.1C401.6 330.1 404.3 332.1 407 334C409.6 336 412.3 338 415 340C417.7 342 420.4 343.9 423.1 345.8C425.9 347.7 428.6 349.6 431.4 351.4C434.2 353.3 438.4 356 439.8 356.9M263.4 234.6C262 235.4 257.7 238 254.9 239.7C252 241.4 249.1 243.1 246.2 244.7C243.3 246.4 240.4 248 237.5 249.6C234.6 251.3 231.7 252.9 228.8 254.5C225.8 256.1 222.9 257.7 220 259.3C217.1 260.9 214.2 262.5 211.3 264.2C208.4 265.9 205.5 267.5 202.7 269.3C199.8 271 197 272.8 194.3 274.7C191.5 276.5 188.7 278.4 186 280.4C183.3 282.3 180.7 284.3 178 286.4C175.4 288.4 172.7 290.4 170.2 292.5C167.6 294.6 163.8 297.9 162.5 299M161.6 260.5C161.4 258.9 160.8 253.9 160.6 250.6C160.3 247.3 160.2 243.9 160.1 240.6C160.1 237.3 160.1 233.9 160.1 230.6C160.2 227.3 160.4 223.9 160.6 220.6C160.8 217.3 161 213.9 161.3 210.6C161.6 207.3 162 204 162.5 200.7C163 197.4 163.5 194.1 164.1 190.8C164.7 187.5 165.4 184.3 166.1 181C166.8 177.8 167.5 174.5 168.2 171.3C169 168 169.8 164.8 170.5 161.5C171.3 158.3 172 155 172.8 151.8C173.6 148.6 174.5 145.3 175.4 142.1C176.3 138.9 177.2 135.7 178 132.5C178.9 129.3 179.8 126 180.6 122.8C181.4 119.6 182.1 116.3 182.8 113.1C183.5 109.8 184.1 106.5 184.6 103.2C185.1 99.9 185.5 96.6 185.8 93.3C186.2 90 186.4 86.6 186.5 83.3C186.6 80 186.7 76.7 186.7 73.3C186.6 70 186.4 65 186.4 63.3M337.7 290.4C336.6 289.1 333.5 285.2 331.5 282.5C329.4 279.9 327.5 277.2 325.5 274.5C323.6 271.8 321.7 269 320 266.2C318.2 263.4 316.5 260.5 314.9 257.6C313.3 254.7 311.7 251.7 310.2 248.7C308.7 245.8 307.2 242.8 305.7 239.8C304.2 236.8 302.8 233.8 301.3 230.8C299.9 227.8 298.5 224.8 297.2 221.7C295.8 218.7 294.5 215.6 293.2 212.5C292 209.4 290.8 206.3 289.7 203.2C288.5 200.1 287.4 196.9 286.4 193.7C285.4 190.6 284.1 185.7 283.6 184.1M320.6 271.6C320.7 273.3 321.1 278.3 321.2 281.6C321.3 284.9 321.2 288.3 321.1 291.6C321 294.9 320.8 298.3 320.5 301.6C320.2 304.9 319.7 308.2 319.2 311.5C318.7 314.8 318.1 318.1 317.4 321.3C316.7 324.6 316 327.9 315.3 331.1C314.5 334.3 313.6 337.6 312.7 340.8C311.8 344 310.8 347.1 309.7 350.3C308.6 353.5 307.5 356.6 306.2 359.7C305 362.8 303.6 365.8 302.2 368.8C300.8 371.9 299.4 374.9 297.9 377.8C296.3 380.8 294.8 383.8 293.2 386.7C291.5 389.6 289.8 392.4 288 395.2C286.2 398 283.3 402.1 282.4 403.5M290.1 277.9C290.2 276.2 290.6 271.2 290.7 267.9C290.7 264.6 290.7 261.2 290.6 257.9C290.5 254.6 290.2 251.3 289.9 247.9C289.6 244.6 289.2 241.3 288.8 238C288.5 234.7 288 231.4 287.6 228.1C287.2 224.8 286.8 221.5 286.2 218.2C285.7 214.9 285.1 211.6 284.5 208.3C283.9 205 283.1 201.8 282.4 198.5C281.7 195.3 281 192 280.2 188.8C279.3 185.6 278.5 182.3 277.5 179.1C276.6 175.9 275.6 172.8 274.5 169.6C273.4 166.5 272.2 163.3 271 160.3C269.7 157.2 268.4 154.1 267 151.1C265.6 148.1 264.1 145.1 262.5 142.2C260.9 139.2 259.2 136.3 257.5 133.5C255.7 130.7 253.8 127.9 251.9 125.2C250 122.5 246.9 118.5 245.9 117.2M228.3 388C228.7 389.6 229.8 394.5 230.4 397.7C231.1 401 231.7 404.3 232.3 407.6C232.9 410.8 233.5 414.1 234.2 417.4C234.8 420.7 235.4 424 236 427.2C236.7 430.5 237.4 433.8 238 437C238.7 440.3 239.4 443.5 240.1 446.8C240.8 450.1 241.6 453.3 242.3 456.6C243 459.8 243.6 463.1 244.3 466.3C245 469.6 245.7 472.9 246.4 476.1C247.2 479.4 247.9 482.6 248.7 485.9C249.5 489.1 250.2 492.4 251.1 495.6C251.9 498.8 252.7 502 253.7 505.2C254.7 508.4 255.7 511.6 256.8 514.7C258 517.9 259.2 520.9 260.5 524C261.8 527.1 263.3 530.1 264.7 533.1C266.1 536.1 267.6 539.1 269.1 542.1C270.6 545 273 549.4 273.8 550.9M185.4 333.5C187 333.2 192 332.5 195.2 331.8C198.5 331.1 201.7 330.3 205 329.5C208.2 328.7 211.4 327.8 214.6 326.9C217.8 326 221 325.1 224.3 324.2C227.5 323.3 230.7 322.5 233.9 321.6C237.1 320.7 240.3 319.8 243.5 318.9C246.7 317.9 249.9 317 253.1 315.9C256.3 314.9 259.4 313.8 262.5 312.7C265.7 311.6 268.8 310.3 271.9 309.1C275 307.8 278.1 306.6 281.1 305.3C284.2 303.9 287.2 302.5 290.1 301C293.1 299.4 297.5 297 298.9 296.2M162.7 344.3C163.1 342.7 164.4 337.9 165.2 334.6C166 331.4 166.7 328.2 167.4 324.9C168.1 321.6 168.8 318.4 169.4 315.1C169.9 311.8 170.4 308.5 170.7 305.2C171.1 301.9 171.4 298.5 171.6 295.2C171.9 291.9 172 288.6 172.1 285.2C172.1 281.9 172.2 278.6 172.1 275.2C172 271.9 171.8 268.6 171.5 265.2C171.2 261.9 170.8 258.6 170.3 255.3C169.9 252 169.3 248.7 168.7 245.4C168.1 242.2 167.4 238.9 166.7 235.6C166.1 232.4 165.4 229.1 164.7 225.9C163.9 222.6 163.2 219.4 162.4 216.1C161.7 212.9 160.9 209.6 160.1 206.4C159.3 203.1 158.5 199.9 157.7 196.7C156.9 193.4 156.1 190.2 155.3 187C154.5 183.7 153.7 180.5 152.9 177.3C152.1 174 151.3 170.8 150.5 167.6C149.7 164.3 148.6 159.4 148.2 157.8M212.8 308.3C214.2 309.3 218.2 312.2 221 314.2C223.7 316.1 226.5 317.9 229.2 319.8C232 321.6 234.8 323.4 237.6 325.2C240.5 327 243.3 328.7 246.2 330.3C249.2 331.9 252.1 333.5 255.1 334.9C258.1 336.4 261.2 337.7 264.2 339C267.3 340.3 270.5 341.4 273.6 342.5C276.7 343.6 279.9 344.7 283.1 345.6C286.3 346.5 289.6 347.3 292.8 348.1C296.1 348.8 299.3 349.5 302.6 350.2C305.8 350.9 309.1 351.7 312.4 352.3C315.6 352.9 318.9 353.5 322.2 354C325.5 354.5 328.8 354.9 332.1 355.3C335.4 355.6 338.8 356 342.1 356.3C345.4 356.5 348.7 356.6 352.1 356.7C355.4 356.8 358.7 356.8 362.1 356.8C365.4 356.9 368.7 356.9 372.1 356.9C375.4 356.9 378.7 356.9 382.1 356.7C385.4 356.6 388.7 356.3 392 356.1C395.4 355.9 398.7 355.7 402 355.4C405.3 355.1 408.7 354.7 412 354.4C415.3 354 420.3 353.5 421.9 353.3M349 224.8C347.3 225 342.4 225.7 339.1 226C335.8 226.4 332.4 226.7 329.1 227C325.8 227.4 322.5 227.7 319.2 228.1C315.9 228.4 312.5 228.7 309.2 229.1C305.9 229.4 302.6 229.8 299.3 230.1C296 230.4 292.6 230.7 289.3 230.9C286 231 282.6 231.1 279.3 231.1C276 231 272.6 230.9 269.3 230.7C266 230.4 262.7 230.1 259.4 229.7C256.1 229.3 252.8 228.8 249.5 228.2C246.2 227.6 242.9 226.9 239.7 226.1C236.5 225.3 231.7 223.9 230 223.5M330.1 413.7C329.2 412.3 326.5 408.1 324.7 405.3C323 402.4 321.3 399.5 319.7 396.7C318 393.8 316.4 390.9 314.8 387.9C313.2 385 311.6 382.1 310 379.1C308.5 376.2 306.9 373.2 305.5 370.2C304 367.2 302.6 364.2 301.3 361.2C299.9 358.1 298.6 355.1 297.3 352C296.1 348.9 294.9 345.8 293.7 342.6C292.6 339.5 290.9 334.8 290.4 333.2M123 308.8C121.4 308.5 116.4 307.7 113.1 307.1C109.9 306.6 106.6 306 103.3 305.4C100 304.8 96.8 304.1 93.5 303.4C90.2 302.8 87 302.1 83.7 301.3C80.5 300.6 77.2 299.7 74 298.9C70.8 298 67.6 297.1 64.4 296.2C61.2 295.3 57.9 294.5 54.7 293.6C51.5 292.7 48.3 291.7 45.1 290.8C41.9 289.8 38.7 288.9 35.6 287.8C32.4 286.8 29.3 285.7 26.2 284.5C23 283.3 20 282 16.9 280.8C13.8 279.5 10.7 278.2 7.6 276.9C4.6 275.7 1.5 274.4 -1.6 273.1C-4.7 271.8 -7.7 270.4 -10.8 269.1C-13.8 267.7 -16.9 266.4 -19.9 265.1C-23 263.7 -26 262.3 -29 261C-32.1 259.6 -35.1 258.3 -38.2 256.9C-41.2 255.6 -45.8 253.5 -47.3 252.8M98.2 361.6C98.6 363.2 99.9 368.1 100.7 371.3C101.5 374.5 102.4 377.7 103.1 381C103.9 384.2 104.6 387.5 105.2 390.8C105.9 394 106.4 397.3 106.8 400.6C107.2 403.9 107.6 407.3 107.8 410.6C108 413.9 108.2 417.2 108.2 420.6C108.2 423.9 108.2 427.2 108 430.6C107.9 433.9 107.6 437.2 107.3 440.5C106.9 443.9 106.4 447.2 105.9 450.5C105.4 453.7 104.8 457 104.2 460.3C103.5 463.6 102.9 466.8 102.1 470.1C101.4 473.3 100.6 476.6 99.8 479.8C99 483.1 97.8 487.9 97.4 489.5M128.9 349.2C130.6 349 135.6 348.3 138.9 347.9C142.2 347.4 145.5 347 148.8 346.5C152.1 346.1 155.4 345.7 158.7 345.4C162 345 165.3 344.7 168.7 344.4C172 344.1 175.3 343.8 178.6 343.4C181.9 343.1 185.2 342.6 188.5 342.2C191.8 341.8 195.1 341.4 198.4 340.9C201.7 340.4 205 339.9 208.3 339.4C211.6 338.9 214.9 338.4 218.2 337.8C221.5 337.3 224.8 336.6 228 336C231.3 335.3 234.6 334.6 237.8 333.9C241.1 333.2 244.3 332.6 247.6 331.8C250.8 331 254.1 330.1 257.2 329.2C260.4 328.2 263.6 327.2 266.7 326C269.9 324.9 273 323.7 276 322.3C279.1 321 282.1 319.6 285.1 318.1C288 316.6 291 314.9 293.9 313.3C296.8 311.7 299.7 310 302.5 308.3C305.3 306.5 308.1 304.7 310.9 302.8C313.6 300.9 317.6 297.8 318.9 296.8M263 267.3C264.6 267.4 269.6 267.5 273 267.6C276.3 267.7 279.6 267.9 283 267.9C286.3 268 289.6 268 293 268C296.3 267.9 299.6 267.9 303 267.7C306.3 267.5 309.6 267.3 312.9 266.9C316.2 266.5 319.5 266 322.8 265.5C326.1 265 329.4 264.3 332.7 263.7C335.9 263.1 339.2 262.4 342.5 261.8C345.8 261.2 349 260.5 352.3 260C355.6 259.4 358.9 258.9 362.2 258.5C365.5 258 368.8 257.6 372.1 257.3C375.4 256.9 378.8 256.7 382.1 256.4C385.4 256.2 388.8 256.1 392.1 255.9C395.4 255.8 398.7 255.7 402.1 255.7C405.4 255.7 410.4 255.9 412.1 255.9M241.7 401.6C240.6 402.8 237.3 406.6 235.1 409C232.8 411.5 230.5 413.9 228.2 416.3C225.9 418.7 223.6 421.1 221.3 423.5C219 426 216.7 428.4 214.4 430.8C212.2 433.3 209.9 435.7 207.7 438.2C205.4 440.7 203.3 443.2 201.1 445.7C198.9 448.2 196.7 450.8 194.6 453.3C192.4 455.8 190.3 458.4 188.1 460.9C185.9 463.5 183.8 466 181.6 468.5C179.5 471.1 176.3 474.9 175.2 476.2M382.5 270.8C384.1 270.8 389.1 270.5 392.5 270.5C395.8 270.4 399.1 270.4 402.5 270.5C405.8 270.6 409.1 270.8 412.4 271C415.8 271.3 419.1 271.7 422.4 272.2C425.7 272.7 429 273.2 432.2 273.9C435.5 274.6 438.7 275.4 442 276.2C445.2 277.1 448.4 278 451.6 279C454.7 280 459.5 281.6 461.1 282.2M305 235.7C304.7 237.3 303.6 242.2 303.1 245.5C302.6 248.8 302.2 252.1 301.9 255.4C301.5 258.7 301.3 262.1 301.2 265.4C301 268.7 301 272.1 301.1 275.4C301.1 278.7 301.3 282.1 301.4 285.4C301.6 288.7 301.8 292 302 295.4C302.2 298.7 302.4 302 302.6 305.3C302.9 308.7 303.1 312 303.3 315.3C303.5 318.6 303.7 322 303.8 325.3C303.9 328.6 303.8 333.6 303.8 335.3M235.1 391.9C233.6 392.7 229.2 395 226.2 396.5C223.3 398.1 220.4 399.7 217.5 401.4C214.6 403.1 211.8 404.8 209 406.6C206.2 408.4 203.4 410.3 200.7 412.2C198 414.2 195.4 416.2 192.8 418.3C190.1 420.4 187.6 422.5 185.1 424.7C182.6 426.9 180.1 429.2 177.8 431.6C175.4 433.9 173.2 436.4 170.9 438.8C168.7 441.3 166.5 443.8 164.3 446.4C162.2 448.9 160 451.4 157.9 454C155.8 456.6 153.8 459.3 151.8 462C149.9 464.7 148 467.4 146.2 470.3C144.5 473.1 142.8 476 141.2 478.9C139.6 481.8 137.4 486.3 136.6 487.8M168.8 291.1C170.5 290.9 175.4 290.3 178.7 289.9C182.1 289.6 185.4 289.3 188.7 288.9C192 288.6 195.3 288.2 198.6 287.8C201.9 287.4 205.2 287 208.6 286.6C211.9 286.3 215.2 286 218.5 285.7C221.8 285.4 225.2 285.1 228.5 284.8C231.8 284.5 236.8 284.3 238.5 284.2M367.4 284C365.8 284.3 360.8 285 357.5 285.6C354.3 286.3 351 287 347.8 287.8C344.6 288.7 341.4 289.6 338.2 290.6C335 291.7 331.9 292.8 328.8 294C325.7 295.2 322.6 296.5 319.6 297.9C316.6 299.3 313.6 300.8 310.6 302.4C307.7 304 303.4 306.6 302 307.4M137.7 386.8C136.2 387.6 131.7 389.7 128.7 391.1C125.7 392.6 122.6 393.9 119.6 395.4C116.6 396.8 113.6 398.3 110.7 399.8C107.7 401.3 104.7 402.7 101.7 404.2C98.7 405.7 95.7 407.2 92.7 408.7C89.7 410.1 86.7 411.6 83.7 413.1C80.8 414.5 77.8 416 74.8 417.5C71.7 418.9 67.2 420.9 65.7 421.6M380.8 379.7C379.1 379.4 374.2 378.5 370.9 377.9C367.7 377.3 364.4 376.6 361.1 376.1C357.8 375.6 354.5 375.1 351.2 374.7C347.9 374.3 344.6 374.1 341.2 373.8C337.9 373.6 334.6 373.3 331.3 373.2C327.9 373 324.6 372.9 321.3 372.9C317.9 372.9 314.6 373 311.3 373.1C307.9 373.3 304.6 373.5 301.3 373.7C298 374 294.6 374.3 291.3 374.6C288 375 284.7 375.3 281.4 375.8C278.1 376.3 274.8 376.8 271.5 377.4C268.2 378 265 378.7 261.7 379.4C258.5 380.2 255.3 381.2 252.1 382.1C248.9 383 245.7 384 242.5 385.1C239.4 386.1 236.2 387.2 233.1 388.4C230 389.5 226.9 390.7 223.8 391.9C220.6 393.1 217.5 394.3 214.4 395.6C211.4 396.8 206.8 398.8 205.3 399.5M382.1 402.4C383.2 403.6 386.4 407.5 388.5 410.1C390.6 412.7 392.6 415.3 394.6 418C396.6 420.6 398.6 423.3 400.6 426C402.5 428.7 404.4 431.5 406.3 434.2C408.1 437 410 439.8 411.8 442.5C413.7 445.3 415.4 448.1 417.2 450.9C419 453.7 421.7 458 422.6 459.4M99.7 328C100.8 326.8 104.4 323.3 106.8 321C109.1 318.6 111.5 316.2 113.8 313.8C116.1 311.4 118.4 309 120.6 306.5C122.8 304 125 301.5 127.1 299C129.3 296.4 131.3 293.7 133.2 291C135.2 288.3 137 285.6 138.8 282.8C140.7 280 142.4 277.1 144.1 274.2C145.8 271.4 147.4 268.5 149 265.5C150.5 262.6 152.1 259.6 153.5 256.6C155 253.6 156.3 250.6 157.6 247.5C159 244.4 160.2 241.3 161.5 238.3C162.7 235.2 164 232.1 165.3 229C166.5 225.9 167.7 222.8 168.9 219.7C170.1 216.6 171.2 213.4 172.3 210.3C173.4 207.1 174.4 204 175.3 200.7C176.2 197.5 177 194.3 177.8 191.1C178.5 187.8 179.3 182.9 179.7 181.2M311.8 373C313.2 372.1 317.3 369.3 320.1 367.5C322.9 365.7 325.8 364 328.6 362.2C331.4 360.4 334.3 358.7 337.1 356.9C339.9 355.1 342.7 353.3 345.5 351.5C348.3 349.6 351 347.8 353.7 345.8C356.4 343.8 359 341.8 361.6 339.7C364.2 337.6 366.8 335.4 369.3 333.2C371.8 331.1 374.3 328.8 376.8 326.6C379.2 324.3 381.6 322.1 384 319.7C386.4 317.4 388.8 315.1 391.1 312.7C393.5 310.3 395.8 307.9 398.1 305.5C400.4 303.1 402.7 300.7 405 298.3C407.3 295.9 409.6 293.5 411.9 291C414.1 288.5 416.3 286.1 418.5 283.6C420.8 281.1 422.9 278.6 425.1 276C427.3 273.5 430.5 269.7 431.5 268.4M137.8 313.4C136.1 313.4 131.1 313.3 127.8 313.3C124.4 313.2 121.1 313.1 117.8 313C114.4 312.9 111.1 312.7 107.8 312.5C104.5 312.3 101.1 312 97.8 311.8C94.5 311.6 91.2 311.3 87.8 311.1C84.5 310.8 81.2 310.6 77.9 310.4C74.5 310.2 71.2 310 67.9 309.9C64.5 309.8 61.2 309.6 57.9 309.6C54.5 309.6 51.2 309.6 47.9 309.8C44.5 309.9 41.2 310.2 37.9 310.5C34.6 310.8 31.3 311.1 28 311.6C24.7 312 21.4 312.6 18.1 313.2C14.8 313.9 11.6 314.6 8.3 315.5C5.1 316.3 1.9 317.3 -1.2 318.3C-4.4 319.3 -7.6 320.3 -10.8 321.4C-13.9 322.5 -17 323.6 -20.1 324.9C-23.2 326.1 -26.3 327.4 -29.3 328.9C-32.3 330.3 -35.3 331.8 -38.2 333.3C-41.2 334.9 -45.5 337.4 -47 338.2M372.5 358C373.9 358.8 378.4 361.1 381.2 362.8C384.1 364.5 387 366.2 389.8 368C392.6 369.8 395.3 371.7 398 373.7C400.7 375.7 403.3 377.8 405.8 379.9C408.4 382 410.9 384.3 413.3 386.5C415.8 388.8 418.1 391.1 420.5 393.5C422.8 395.9 425 398.4 427.2 400.9C429.4 403.5 431.5 406.1 433.5 408.7C435.5 411.4 437.4 414.1 439.3 416.9C441.1 419.6 442.9 422.5 444.6 425.4C446.2 428.2 447.8 431.2 449.3 434.1C450.9 437.1 452.3 440.1 453.6 443.2C454.9 446.2 456.2 449.3 457.4 452.5C458.5 455.6 459.6 458.7 460.6 461.9C461.5 465.1 462.4 468.3 463.2 471.6C464.1 474.8 464.9 478 465.6 481.3C466.3 484.5 466.9 487.8 467.4 491.1C468 494.4 468.4 497.7 468.8 501C469.2 504.3 469.4 507.7 469.6 511C469.7 514.3 469.8 517.7 469.7 521C469.7 524.3 469.4 529.3 469.3 531M313.3 287.1C311.6 287 306.6 286.7 303.3 286.4C300 286.1 296.7 285.8 293.4 285.4C290 285 286.8 284.6 283.5 284.1C280.2 283.6 276.9 283.1 273.6 282.6C270.3 282 267 281.4 263.7 280.8C260.5 280.1 257.2 279.4 254 278.6C250.7 277.8 247.5 276.9 244.3 276C241.1 275 238 273.9 234.8 272.8C231.7 271.6 228.6 270.5 225.5 269.2C222.4 267.9 219.4 266.5 216.4 265.1C213.4 263.6 210.5 262 207.6 260.4C204.7 258.8 201.8 257 199 255.3C196.1 253.5 191.9 250.8 190.5 249.9M159.8 230.8C159.5 232.4 158.4 237.3 157.8 240.6C157.3 243.9 156.8 247.2 156.5 250.5C156.1 253.8 155.9 257.2 155.7 260.5C155.5 263.8 155.5 267.1 155.5 270.5C155.6 273.8 155.7 277.1 156 280.5C156.2 283.8 156.5 287.1 157 290.4C157.4 293.7 158 297 158.6 300.3C159.2 303.6 159.9 306.8 160.8 310.1C161.6 313.3 163 318.1 163.5 319.7M311.5 268.9C310.5 267.6 307.6 263.5 305.5 260.9C303.5 258.3 301.3 255.8 299.2 253.2C297 250.7 294.9 248.1 292.6 245.6C290.4 243.1 288.2 240.6 285.9 238.3C283.6 235.9 281.2 233.6 278.7 231.3C276.2 229.1 273.7 226.9 271.2 224.7C268.6 222.6 265.9 220.6 263.2 218.6C260.5 216.7 257.8 214.8 255 213C252.1 211.2 249.3 209.5 246.4 207.9C243.4 206.3 240.5 204.8 237.5 203.3C234.5 201.9 229.8 200 228.3 199.3M200.9 284C201.3 282.4 202.4 277.5 203.2 274.3C204.1 271.1 205.1 267.9 206.1 264.7C207.2 261.5 208.3 258.4 209.6 255.3C210.8 252.2 212.1 249.1 213.4 246.1C214.8 243 216.2 240 217.8 237.1C219.3 234.1 220.9 231.2 222.6 228.3C224.3 225.4 226 222.6 227.8 219.8C229.6 216.9 231.4 214.2 233.3 211.4C235.2 208.7 237.3 206.1 239.4 203.5C241.4 200.9 243.6 198.4 245.9 195.9C248.1 193.4 250.3 190.9 252.6 188.5C255 186.1 257.4 183.8 259.8 181.6C262.3 179.3 266.1 176.1 267.4 175M387.1 316.3C388.4 317.4 392.2 320.6 394.7 322.8C397.3 324.9 399.8 327 402.4 329.2C404.9 331.3 407.5 333.5 410 335.6C412.5 337.8 415.1 340 417.5 342.2C420 344.5 422.5 346.7 424.9 349C427.3 351.3 429.7 353.7 432 356.1C434.3 358.4 436.6 360.9 438.9 363.3C441.1 365.8 443.3 368.3 445.4 370.9C447.5 373.5 449.5 376.1 451.5 378.8C453.4 381.6 455.3 384.3 457.1 387.1C458.8 389.9 460.5 392.8 462.2 395.7C463.8 398.7 465.3 401.6 466.7 404.6C468.2 407.6 469.6 410.6 471 413.7C472.4 416.7 473.7 419.8 475 422.8C476.3 425.9 478.3 430.5 478.9 432M191.5 238.2C192.7 237 196.1 233.4 198.5 231C200.9 228.7 203.3 226.4 205.8 224.2C208.2 222 210.8 219.9 213.4 217.8C216 215.7 218.7 213.6 221.3 211.6C223.9 209.5 226.6 207.5 229.2 205.5C231.9 203.5 234.5 201.4 237.2 199.4C239.9 197.4 242.5 195.4 245.2 193.5C247.9 191.6 250.7 189.7 253.5 187.9C256.3 186 259.1 184.3 261.9 182.5C264.8 180.8 267.6 179 270.4 177.3C273.3 175.5 276.1 173.8 278.9 172C281.7 170.1 284.5 168.3 287.3 166.4C290 164.6 292.8 162.7 295.5 160.8C298.3 158.9 302.3 156 303.7 155.1M173.8 371.1C172.6 372.2 169 375.7 166.6 378C164.3 380.4 161.9 382.8 159.6 385.1C157.2 387.5 154.9 389.9 152.5 392.2C150.2 394.5 147.8 396.9 145.3 399.1C142.8 401.4 140.3 403.5 137.7 405.6C135.2 407.8 132.6 409.9 130 412C127.4 414.1 124.8 416.2 122.2 418.3C119.7 420.4 117.1 422.5 114.5 424.6C111.9 426.7 109.3 428.8 106.7 430.9C104.1 433 100.3 436.2 99 437.3M163.2 275.6C164.8 275.4 169.8 274.6 173.1 274.2C176.4 273.7 179.7 273.2 183 272.9C186.3 272.5 189.6 272.1 192.9 271.9C196.3 271.7 199.6 271.6 202.9 271.5C206.3 271.5 209.6 271.5 212.9 271.5C216.3 271.6 219.6 271.7 222.9 271.8C226.3 272 229.6 272.1 232.9 272.4C236.2 272.7 239.5 273 242.9 273.4C246.2 273.7 249.5 274.1 252.8 274.6C256.1 275.1 259.3 275.8 262.6 276.4C265.9 277 269.1 277.7 272.4 278.4C275.7 279.2 278.9 279.9 282.2 280.6C285.4 281.4 288.7 282.2 291.9 282.9C295.2 283.6 300.1 284.6 301.7 285M136.3 284.6C138 284.7 143 284.9 146.3 285C149.6 285.1 153 285.3 156.3 285.4C159.6 285.5 163 285.6 166.3 285.7C169.6 285.8 173 285.8 176.3 285.9C179.6 286 183 286.2 186.3 286.4C189.6 286.6 192.9 286.8 196.3 287C199.6 287.2 202.9 287.4 206.2 287.6C209.6 287.8 212.9 288 216.2 288.1C219.6 288.2 222.9 288.2 226.2 288.2C229.6 288.2 232.9 288.3 236.2 288.2C239.6 288.2 242.9 288.1 246.2 288C249.6 287.8 252.9 287.5 256.2 287.2C259.5 286.8 262.8 286.4 266.1 285.8C269.4 285.3 272.7 284.6 275.9 283.9C279.2 283.2 282.4 282.4 285.6 281.5C288.8 280.6 293.6 279.1 295.2 278.6M165.3 285.2C166.5 286.3 170.3 289.6 172.7 292C175.1 294.3 177.4 296.7 179.7 299.1C182 301.5 184.2 304 186.4 306.5C188.6 309 190.8 311.6 192.9 314.1C195 316.7 197.1 319.3 199.2 321.9C201.3 324.5 203.4 327.1 205.4 329.8C207.4 332.4 209.4 335.1 211.3 337.8C213.2 340.5 215.1 343.3 216.8 346.1C218.6 349 220.2 351.9 221.9 354.8C223.5 357.7 225 360.7 226.5 363.6C228 366.6 229.5 369.6 231 372.6C232.4 375.6 233.8 378.6 235.1 381.7C236.5 384.7 237.8 387.8 239.1 390.9C240.4 393.9 241.6 397 242.9 400.1C244.1 403.2 245.9 407.9 246.5 409.4M307.6 341.6C309.3 341.8 314.3 342.3 317.5 342.8C320.8 343.3 324.1 343.8 327.4 344.5C330.7 345.1 333.9 345.9 337.1 346.7C340.4 347.6 343.6 348.5 346.8 349.5C350 350.4 353.1 351.4 356.3 352.5C359.4 353.7 362.5 354.9 365.6 356.2C368.7 357.5 371.7 358.8 374.7 360.3C377.7 361.7 380.7 363.3 383.6 364.9C386.5 366.5 389.4 368.2 392.2 369.9C395.1 371.7 397.9 373.4 400.7 375.3C403.4 377.2 406.1 379.2 408.7 381.2C411.4 383.2 413.9 385.4 416.4 387.6C419 389.8 421.4 392.1 423.8 394.4C426.2 396.7 428.5 399 430.9 401.4C433.2 403.8 435.5 406.2 437.8 408.6C440.1 411 442.4 413.4 444.7 415.8C447 418.3 449.3 420.7 451.6 423.1C453.8 425.6 456 428.1 458.2 430.6C460.4 433.1 462.6 435.6 464.7 438.2C466.8 440.8 469.8 444.8 470.8 446.2M387.9 257.6C389.1 256.4 392.7 252.9 395 250.5C397.3 248.1 399.5 245.6 401.8 243.1C404 240.6 406.1 238.1 408.2 235.5C410.4 232.9 412.4 230.3 414.4 227.7C416.4 225 418.4 222.3 420.4 219.6C422.3 216.9 424.3 214.2 426.2 211.5C428 208.7 429.9 205.9 431.6 203.1C433.4 200.3 435.2 197.5 436.9 194.6C438.6 191.7 440.2 188.8 441.8 185.9C443.3 182.9 444.7 179.9 446.1 176.9C447.5 173.8 448.7 170.7 449.9 167.6C451.1 164.5 452.1 161.3 453.1 158.1C454.2 155 455.2 151.8 456 148.6C456.9 145.3 457.6 142.1 458.3 138.8C459 135.6 459.7 132.3 460.3 129C461 125.8 461.6 122.5 462.3 119.2C463 116 463.7 112.7 464.5 109.5C465.3 106.2 466.6 101.4 467 99.8M407.9 232.6C406.8 233.9 403.4 237.6 401.2 240.1C399 242.6 396.8 245.1 394.6 247.6C392.5 250.1 390.3 252.6 388.2 255.2C386 257.8 384 260.4 382 263.1C380 265.8 378.1 268.5 376.2 271.3C374.3 274 372.5 276.8 370.7 279.6C368.8 282.4 367 285.1 365.1 287.9C363.3 290.7 361.4 293.4 359.6 296.3C357.8 299.1 356.1 301.9 354.4 304.8C352.7 307.7 351.1 310.6 349.4 313.4C347.7 316.3 346 319.2 344.3 322.1C342.7 325 341.1 327.9 339.5 330.8C337.9 333.8 336.4 336.7 334.9 339.7C333.5 342.7 331.4 347.3 330.7 348.8M408.9 335C410.4 334.3 414.9 332.2 417.8 330.6C420.8 329.1 423.7 327.5 426.6 325.8C429.5 324.1 432.3 322.4 435.1 320.6C437.9 318.8 440.7 316.9 443.4 314.9C446 312.9 448.6 310.8 451.2 308.7C453.8 306.6 456.3 304.4 458.8 302.2C461.3 300 463.8 297.7 466.2 295.5C468.6 293.2 471 290.9 473.4 288.5C475.8 286.2 478.2 283.9 480.5 281.5C482.9 279.1 485.2 276.7 487.4 274.2C489.6 271.8 491.8 269.3 493.9 266.7C496 264.1 498.1 261.4 500 258.7C502 256 504.7 251.9 505.7 250.5" stroke="#3cd03a" stroke-width="0.6" fill="none" opacity="0.7" stroke-linejoin="round"/>
<path d="M191.7 249.3C192.5 247.8 194.8 243.3 196.4 240.4C198 237.5 199.7 234.6 201.5 231.8C203.2 229 205.1 226.2 207 223.5C208.9 220.7 210.8 218 212.8 215.3C214.8 212.7 216.9 210.1 219 207.5C221.2 204.9 223.3 202.4 225.6 199.9C227.8 197.5 230.1 195 232.4 192.7C234.8 190.3 237.1 188 239.6 185.7C242 183.4 244.5 181.2 247 179C249.6 176.8 252.2 174.7 254.8 172.7C257.4 170.7 261.5 167.8 262.9 166.8M214.9 359C216.1 357.8 219.6 354.3 222 351.9C224.3 349.5 226.6 347.1 228.9 344.7C231.2 342.3 233.4 339.8 235.7 337.4C237.9 334.9 240.1 332.4 242.3 329.9C244.4 327.3 246.5 324.7 248.6 322.1C250.7 319.5 252.8 316.9 254.9 314.3C256.9 311.7 259 309.1 261 306.4C262.9 303.7 264.9 301 266.8 298.3C268.7 295.5 270.6 292.8 272.4 290C274.3 287.2 276.1 284.4 277.9 281.6C279.8 278.9 281.6 276.1 283.4 273.3C285.2 270.5 287 267.7 288.7 264.8C290.5 262 292.2 259.1 293.8 256.2C295.4 253.3 297 250.3 298.5 247.3C299.9 244.4 301.3 241.3 302.7 238.3C304 235.2 305.2 232.1 306.4 229C307.6 225.9 309.2 221.2 309.8 219.6M358.5 262.4C358.1 260.8 356.8 256 355.8 252.8C354.8 249.6 353.8 246.5 352.7 243.3C351.6 240.1 350.5 237 349.4 233.9C348.3 230.7 347.1 227.6 346 224.5C344.9 221.3 343.7 218.2 342.5 215.1C341.4 212 340.3 208.8 339.1 205.7C338 202.5 336.8 199.4 335.6 196.3C334.4 193.2 333.2 190.1 331.9 187C330.7 183.9 329.4 180.8 328.1 177.8C326.8 174.7 325.5 171.6 324.1 168.6C322.7 165.6 321.2 162.6 319.7 159.6C318.2 156.7 315.8 152.3 315 150.8M150.4 277.7C150.3 279.4 149.9 284.3 149.8 287.7C149.6 291 149.5 294.3 149.4 297.7C149.3 301 149.3 304.3 149.2 307.7C149.1 311 149 314.3 148.8 317.7C148.7 321 148.5 324.3 148.3 327.6C148.1 331 147.8 334.3 147.5 337.6C147.2 340.9 146.8 344.2 146.4 347.6C146.1 350.9 145.7 354.2 145.2 357.5C144.8 360.8 144.3 364.1 143.8 367.4C143.3 370.7 142.7 374 142.2 377.2C141.7 380.5 141.2 383.8 140.7 387.1C140.2 390.4 139.6 393.7 139.1 397C138.6 400.3 138.1 403.6 137.7 406.9C137.3 410.2 136.8 413.5 136.4 416.8C136.1 420.1 135.7 423.5 135.4 426.8C135.1 430.1 134.9 433.4 134.7 436.8C134.6 440.1 134.5 443.4 134.5 446.7C134.5 450.1 134.7 455.1 134.8 456.7M316.6 387.7C315.2 388.6 310.8 391.1 307.9 392.7C305 394.3 302.1 395.9 299.1 397.5C296.2 399.1 293.3 400.7 290.4 402.3C287.4 403.8 284.4 405.3 281.5 406.9C278.6 408.5 275.7 410.1 272.7 411.7C269.8 413.3 266.9 414.9 264 416.5C261 418.1 258.1 419.7 255.2 421.4C252.3 423.1 249.5 424.7 246.6 426.5C243.8 428.2 240.9 430 238.1 431.8C235.3 433.6 232.5 435.4 229.8 437.3C227.1 439.2 224.3 441.1 221.7 443.1C219 445.1 216.4 447.2 213.8 449.3C211.3 451.5 208.8 453.7 206.3 455.9C203.8 458.2 201.4 460.5 199 462.7C196.6 465 194.2 467.3 191.8 469.6C189.4 472 187 474.3 184.6 476.6C182.3 479 179.9 481.4 177.7 483.8C175.4 486.3 172.1 490 171 491.3M131.9 393.8C132.5 392.3 134.3 387.6 135.6 384.5C136.9 381.4 138.2 378.4 139.7 375.4C141.1 372.4 142.6 369.4 144.2 366.5C145.8 363.5 147.5 360.6 149.2 357.8C150.9 354.9 152.6 352.1 154.4 349.3C156.2 346.5 158.1 343.7 160 340.9C161.8 338.2 163.8 335.5 165.7 332.8C167.7 330.1 169.7 327.4 171.8 324.8C173.9 322.2 176.1 319.7 178.2 317.2C180.4 314.7 182.7 312.2 185 309.8C187.2 307.3 190.7 303.7 191.8 302.5M308.7 306.7C310.4 306.5 315.3 305.9 318.6 305.6C322 305.4 325.3 305.2 328.6 305.1C332 305 335.3 305 338.6 305C342 305 345.3 305.1 348.6 305.2C352 305.4 355.3 305.6 358.6 305.9C361.9 306.2 365.2 306.6 368.5 307C371.8 307.5 375.1 308 378.4 308.5C381.7 309 385 309.5 388.3 310.1C391.6 310.7 394.8 311.4 398.1 312.1C401.4 312.7 404.6 313.5 407.9 314.2C411.1 314.9 414.4 315.6 417.7 316.3C420.9 316.9 424.2 317.6 427.5 318.2C430.7 318.8 434 319.5 437.3 320C440.6 320.5 443.9 321.1 447.2 321.5C450.5 321.9 453.8 322.3 457.1 322.5C460.5 322.8 463.8 322.9 467.1 323.1C470.5 323.2 473.8 323.4 477.1 323.4C480.5 323.4 483.8 323.3 487.1 323.1C490.4 323 493.8 322.7 497.1 322.4C500.4 322.1 503.7 321.7 507 321.4C510.4 321 513.7 320.7 517 320.3C520.3 319.8 523.6 319.3 526.9 318.8C530.1 318.2 533.4 317.6 536.7 316.9C540 316.3 543.2 315.5 546.4 314.7C549.7 313.8 554.4 312.3 556 311.9M369.4 401.9C371 401.7 376 401.5 379.3 401.1C382.6 400.8 386 400.4 389.3 399.9C392.6 399.4 395.8 398.8 399.1 398.2C402.4 397.6 405.6 396.9 408.9 396.2C412.2 395.5 415.4 394.7 418.6 393.9C421.9 393.1 425.1 392.3 428.3 391.5C431.6 390.7 434.8 389.8 438 388.8C441.2 387.9 444.4 387 447.5 385.9C450.7 384.8 455.4 383 456.9 382.5M403 398.4C404.2 399.6 407.8 403 410.1 405.4C412.4 407.8 414.7 410.3 416.9 412.8C419.1 415.2 421.2 417.8 423.3 420.4C425.4 423 427.4 425.7 429.4 428.4C431.3 431.1 433.2 433.9 435 436.6C436.9 439.4 438.7 442.2 440.4 445.1C442.2 447.9 443.9 450.7 445.5 453.6C447.2 456.5 448.7 459.5 450.2 462.5C451.7 465.4 453.2 468.4 454.6 471.4C456.1 474.4 457.5 477.5 458.9 480.5C460.3 483.5 461.7 486.5 463.1 489.6C464.5 492.6 465.8 495.6 467.1 498.7C468.4 501.8 469.6 504.9 470.8 508C472 511.1 473.1 514.3 474.2 517.4C475.3 520.6 476.8 525.3 477.4 526.9M397.2 260.1C397.8 258.5 399.4 253.8 400.4 250.6C401.5 247.4 402.4 244.2 403.3 241C404.2 237.8 405.2 234.6 406 231.4C406.8 228.1 407.6 224.9 408.3 221.6C409 218.4 409.6 215.1 410.1 211.8C410.6 208.5 411 205.2 411.4 201.9C411.7 198.6 412 195.2 412.2 191.9C412.4 188.6 412.5 185.3 412.5 181.9C412.5 178.6 412.4 175.2 412.3 171.9C412.1 168.6 411.7 163.6 411.6 161.9M341.2 377.7C339.9 378.7 335.9 381.6 333.2 383.7C330.6 385.7 328 387.8 325.3 389.8C322.7 391.9 320.1 393.9 317.5 396.1C315 398.2 312.4 400.3 309.9 402.5C307.4 404.7 305 407 302.6 409.3C300.2 411.6 297.8 414 295.5 416.4C293.2 418.8 291 421.3 288.8 423.8C286.6 426.4 284.5 428.9 282.4 431.5C280.2 434 278.1 436.6 276 439.2C273.9 441.8 271.8 444.4 269.8 447C267.8 449.7 265.8 452.3 263.8 455.1C261.9 457.8 260 460.5 258.2 463.3C256.4 466.2 254.7 469 253.1 471.9C251.4 474.8 249.1 479.2 248.3 480.7M233.1 251.8C234.7 252.3 239.4 254 242.6 255C245.7 256.1 248.9 257 252.2 257.9C255.4 258.7 258.6 259.5 261.9 260.2C265.2 260.9 268.4 261.5 271.7 262C275 262.5 278.3 263 281.6 263.4C284.9 263.8 288.3 264.1 291.6 264.3C294.9 264.6 298.2 264.7 301.6 264.8C304.9 264.9 308.2 264.9 311.6 264.9C314.9 264.8 318.2 264.7 321.6 264.5C324.9 264.3 329.9 263.8 331.5 263.7M368.3 334.7C369.4 336 372.7 339.7 375 342.1C377.3 344.6 379.6 347 381.9 349.3C384.3 351.7 386.7 354 389.1 356.3C391.6 358.5 394 360.8 396.6 362.9C399.1 365.1 401.7 367.2 404.4 369.2C407 371.3 409.7 373.2 412.4 375.1C415.1 377.1 417.9 378.9 420.7 380.8C423.4 382.6 426.2 384.5 429 386.3C431.8 388.2 434.6 389.9 437.4 391.8C440.2 393.6 443 395.4 445.7 397.3C448.5 399.2 451.1 401.2 453.8 403.1C456.5 405.1 459.2 407.1 461.9 409.1C464.5 411.1 467.1 413.2 469.7 415.3C472.3 417.4 474.9 419.5 477.4 421.7C480 423.8 482.5 426 485 428.2C487.5 430.4 489.9 432.7 492.4 434.9C494.8 437.2 498.5 440.6 499.7 441.7M156.6 415.7C157.8 414.5 161.3 411 163.7 408.7C166.1 406.4 168.5 404.1 171 401.9C173.6 399.7 176.1 397.6 178.7 395.5C181.4 393.5 184 391.5 186.7 389.5C189.4 387.6 192.2 385.7 195 383.9C197.8 382.1 200.6 380.3 203.5 378.6C206.4 377 209.3 375.4 212.2 373.8C215.2 372.2 218.1 370.6 221.1 369.2C224.1 367.7 227.1 366.3 230.2 365C233.3 363.7 236.4 362.4 239.5 361.3C242.6 360.1 245.7 358.9 248.9 357.9C252 356.8 255.2 355.8 258.4 354.8C261.6 353.9 264.8 352.9 268 352C271.2 351.1 274.5 350.3 277.7 349.5C280.9 348.7 284.1 347.8 287.4 347.1C290.7 346.4 295.6 345.4 297.2 345.1M381.7 294.6C383.1 293.8 387.5 291.3 390.3 289.6C393.2 288 396.1 286.3 399 284.7C401.9 283 404.8 281.3 407.6 279.6C410.5 277.8 413.3 276 416.1 274.2C418.9 272.4 421.6 270.5 424.4 268.7C427.2 266.8 429.9 264.9 432.6 263C435.4 261.1 438.1 259.2 440.7 257.1C443.4 255.1 446 253 448.5 250.9C451.1 248.7 453.5 246.5 456 244.2C458.4 241.9 460.8 239.6 463.1 237.2C465.4 234.8 467.6 232.3 469.8 229.8C472.1 227.3 474.3 224.8 476.4 222.2C478.5 219.7 480.7 217.1 482.7 214.5C484.8 211.9 486.8 209.2 488.7 206.5C490.6 203.7 492.4 201 494.2 198.1C496 195.3 498.5 191 499.4 189.6M171.8 265.3C170.2 265.7 165.3 266.9 162.1 267.7C158.9 268.5 155.6 269.2 152.3 269.9C149.1 270.7 145.9 271.4 142.6 272.1C139.3 272.9 136.1 273.6 132.8 274.3C129.6 275 126.3 275.7 123 276.3C119.8 277 116.5 277.6 113.2 278.2C109.9 278.8 106.6 279.3 103.3 279.7C100 280.2 96.7 280.5 93.4 280.9C90.1 281.3 86.8 281.7 83.5 282C80.2 282.4 76.8 282.8 73.5 283.1C70.2 283.4 66.9 283.6 63.6 283.8C60.2 284 56.9 284 53.6 284C50.2 284 46.9 283.9 43.6 283.8C40.2 283.6 36.9 283.3 33.6 283C30.3 282.7 27 282.3 23.7 281.8C20.4 281.4 15.4 280.5 13.8 280.3M161.5 340.5C161.9 338.9 163 334 163.9 330.8C164.7 327.6 165.6 324.4 166.5 321.2C167.5 318 168.6 314.8 169.7 311.7C170.8 308.5 172 305.4 173.3 302.4C174.6 299.3 176 296.2 177.4 293.2C178.8 290.2 180.3 287.2 181.8 284.3C183.4 281.3 184.9 278.4 186.6 275.5C188.2 272.6 190 269.7 191.7 266.9C193.5 264.1 195.3 261.3 197.2 258.5C199.1 255.8 201 253 203 250.4C205.1 247.7 207.1 245.1 209.3 242.6C211.4 240 213.7 237.6 215.9 235.1C218.2 232.7 220.5 230.3 222.9 227.9C225.3 225.6 227.7 223.3 230.2 221.1C232.7 218.9 235.2 216.7 237.8 214.6C240.4 212.6 243.1 210.6 245.8 208.6C248.5 206.6 251.1 204.6 253.9 202.7C256.7 200.9 260.9 198.2 262.3 197.3M391.4 296.1C390.3 297.3 387.1 301.1 384.8 303.6C382.6 306.1 380.4 308.6 378.2 311.1C376 313.6 373.8 316.1 371.6 318.6C369.4 321.1 367.1 323.5 364.9 326C362.7 328.5 360.5 331 358.3 333.5C356.1 336 353.9 338.5 351.7 341C349.5 343.5 347.3 346 345.1 348.6C342.9 351.1 340.8 353.6 338.6 356.2C336.5 358.8 334.4 361.3 332.4 364C330.3 366.6 327.5 370.7 326.5 372.1M116.4 246.2C118 246.3 123 246.8 126.3 247.2C129.7 247.5 133 247.8 136.3 248.2C139.6 248.5 142.9 248.9 146.2 249.3C149.5 249.7 152.8 250.1 156.1 250.6C159.4 251.1 162.7 251.5 166 252.1C169.3 252.6 172.6 253.3 175.9 253.9C179.1 254.6 182.4 255.3 185.6 256C188.9 256.7 192.1 257.5 195.4 258.2C198.6 259 201.9 259.8 205.1 260.5C208.4 261.3 211.6 262 214.9 262.7C218.1 263.5 221.4 264.2 224.6 264.9C227.9 265.7 231.1 266.5 234.3 267.3C237.6 268.2 242.4 269.6 244 270.1M223.2 279.1C223.1 277.4 222.8 272.5 222.6 269.1C222.4 265.8 222.3 262.5 222.3 259.1C222.2 255.8 222.3 252.5 222.4 249.1C222.5 245.8 222.7 242.5 222.8 239.1C223 235.8 223.2 232.5 223.4 229.2C223.7 225.8 223.9 222.5 224.1 219.2C224.4 215.9 224.6 212.5 224.8 209.2C225 205.9 225.2 202.5 225.4 199.2C225.5 195.9 225.6 192.6 225.7 189.2C225.7 185.9 225.8 182.6 225.7 179.2C225.7 175.9 225.6 172.6 225.4 169.2C225.2 165.9 225 162.6 224.7 159.3C224.5 155.9 224.3 152.6 223.9 149.3C223.6 146 223.3 142.6 222.8 139.3C222.4 136 221.8 132.8 221.2 129.5C220.6 126.2 219.9 122.9 219.1 119.7C218.3 116.5 217.4 113.3 216.5 110C215.6 106.8 214.6 103.7 213.6 100.5C212.7 97.3 211.2 92.5 210.7 90.9M245 418C246.6 418.5 251.4 419.8 254.6 420.7C257.9 421.5 261.1 422.4 264.3 423.3C267.5 424.1 270.8 424.9 274 425.8C277.2 426.7 280.4 427.5 283.6 428.4C286.8 429.3 290.1 430.2 293.3 431.1C296.5 432 299.7 432.9 302.9 433.9C306.1 434.8 309.2 435.8 312.4 436.9C315.6 437.9 318.7 439.1 321.8 440.2C324.9 441.4 329.6 443.4 331.1 444M201.2 256.4C199.8 257.2 195.4 259.5 192.4 261C189.4 262.4 186.3 263.8 183.3 265.1C180.2 266.4 177.1 267.7 174 269C171 270.3 167.9 271.5 164.7 272.7C161.6 273.8 158.4 274.9 155.3 275.9C152.1 276.8 148.9 277.8 145.6 278.6C142.4 279.4 139.2 280.2 135.9 280.8C132.6 281.5 129.3 282.1 126 282.6C122.8 283.1 119.4 283.5 116.1 283.8C112.8 284.2 109.5 284.4 106.2 284.6C102.8 284.7 99.5 284.8 96.2 284.8C92.8 284.8 89.5 284.8 86.2 284.6C82.8 284.5 79.5 284.2 76.2 283.9C72.9 283.6 69.5 283.3 66.2 282.8C62.9 282.3 59.7 281.8 56.4 281.2C53.1 280.6 49.9 279.8 46.6 279.1C43.4 278.3 40.1 277.4 36.9 276.6C33.7 275.7 30.5 274.7 27.3 273.8C24.1 272.9 20.9 272 17.7 271.2C14.4 270.3 11.2 269.5 8 268.7C4.7 267.9 1.5 267.2 -1.8 266.6C-5.1 266 -8.4 265.4 -11.6 264.9C-14.9 264.4 -18.3 264 -21.6 263.6C-24.9 263.2 -28.2 262.9 -31.5 262.6C-34.8 262.4 -39.8 262.1 -41.5 262M298.4 411C297.8 412.6 296.2 417.3 295 420.4C293.8 423.5 292.5 426.6 291.1 429.6C289.8 432.7 288.4 435.7 286.9 438.7C285.4 441.7 283.9 444.6 282.3 447.5C280.7 450.5 279 453.4 277.4 456.3C275.7 459.2 274.1 462.1 272.4 465C270.8 467.9 269.1 470.7 267.4 473.6C265.7 476.5 264.1 479.4 262.5 482.3C260.9 485.3 259.4 488.2 257.9 491.2C256.4 494.2 254.8 497.1 253.3 500.1C251.9 503.1 250.4 506.1 249 509.1C247.6 512.1 246.2 515.2 244.9 518.2C243.6 521.3 242.2 524.4 241 527.4C239.7 530.5 238.6 533.6 237.4 536.8C236.2 539.9 235.1 543 233.9 546.2C232.8 549.3 231.2 554 230.7 555.6M178.1 383.6C178.4 385.3 179.1 390.2 179.7 393.5C180.3 396.8 181.1 400 181.8 403.3C182.6 406.5 183.3 409.8 184.2 413C185 416.2 185.9 419.4 186.9 422.6C187.9 425.8 189 428.9 190.2 432.1C191.3 435.2 192.5 438.3 193.9 441.4C195.2 444.4 196.6 447.5 198 450.5C199.5 453.5 201 456.4 202.6 459.4C204.2 462.3 205.9 465.2 207.6 468C209.3 470.9 211.1 473.7 212.8 476.5C214.6 479.3 216.4 482.1 218.2 484.9C220.1 487.7 221.9 490.5 223.7 493.3C225.6 496.1 227.5 498.8 229.3 501.6C231.2 504.3 233 507.1 234.8 509.9C236.6 512.7 238.5 515.5 240.2 518.3C242 521.2 243.7 524 245.4 526.9C247.1 529.8 248.7 532.7 250.3 535.6C252 538.5 253.6 541.4 255.2 544.4C256.8 547.3 258.5 550.2 260.1 553.1C261.7 556 263.4 558.9 264.9 561.8C266.5 564.7 268 567.7 269.5 570.7C271.1 573.7 272.5 576.6 274.1 579.6C275.6 582.6 277.2 585.5 278.7 588.5C280.2 591.4 281.8 594.4 283.3 597.3C284.8 600.3 287 604.8 287.7 606.3M142.1 298.5C140.8 297.6 136.6 294.8 133.9 292.9C131.1 291 128.4 289.1 125.7 287.1C123 285.1 120.4 283.1 117.8 281C115.1 279 112.5 276.9 110 274.8C107.4 272.6 104.9 270.4 102.5 268.1C100.1 265.8 97.7 263.5 95.3 261.2C92.9 258.8 90.6 256.4 88.3 254C86 251.6 83.7 249.2 81.5 246.7C79.3 244.2 77.2 241.6 75.1 239C73 236.4 70.9 233.9 68.8 231.2C66.8 228.6 64.8 225.9 62.9 223.2C61 220.5 59.1 217.7 57.3 214.9C55.6 212 53.9 209.2 52.2 206.3C50.6 203.4 49 200.4 47.5 197.4C46 194.5 44.6 191.4 43.3 188.4C41.9 185.3 40.7 182.3 39.5 179.1C38.3 176 37.2 172.9 36.1 169.7C35.1 166.6 33.6 161.8 33 160.2M237.9 284C236.3 284.4 231.4 285.6 228.2 286.4C224.9 287.2 221.7 288 218.5 288.9C215.3 289.7 212 290.5 208.8 291.4C205.6 292.2 202.4 293.1 199.1 293.8C195.9 294.6 192.6 295.4 189.4 296.1C186.1 296.8 182.9 297.5 179.6 298.1C176.3 298.7 173 299.3 169.7 299.9C166.5 300.5 163.2 301 159.9 301.4C156.6 301.9 153.3 302.4 149.9 302.8C146.6 303.2 143.3 303.4 140 303.7C136.7 304 133.3 304.2 130 304.4C126.7 304.6 123.4 304.8 120 305.1C116.7 305.3 113.4 305.5 110.1 305.9C106.8 306.2 103.4 306.6 100.1 307.1C96.8 307.5 93.6 308.1 90.3 308.8C87 309.4 83.8 310.1 80.5 310.9C77.3 311.7 74.1 312.6 70.9 313.6C67.7 314.5 64.5 315.5 61.4 316.6C58.2 317.7 55.1 318.9 52 320.2C48.9 321.4 45.9 322.8 42.8 324.2C39.8 325.6 36.8 327.1 33.9 328.6C31 330.2 28 331.8 25.2 333.5C22.3 335.2 19.5 337 16.7 338.8C13.9 340.6 9.8 343.5 8.4 344.5M202.5 392.3C200.9 392.7 196 393.7 192.7 394.2C189.4 394.8 186.1 395.4 182.8 395.8C179.5 396.3 176.2 396.6 172.9 396.9C169.6 397.2 166.2 397.4 162.9 397.7C159.6 397.9 156.2 398.1 152.9 398.2C149.6 398.4 146.3 398.5 142.9 398.7C139.6 398.8 136.3 398.9 132.9 399.1C129.6 399.3 126.3 399.5 123 399.7C119.6 400 116.3 400.3 113 400.6C109.7 400.9 106.4 401.3 103 401.6C99.7 401.9 96.4 402.3 93.1 402.5C89.8 402.8 84.8 403.1 83.1 403.2M370.7 261.7C372.3 262.4 376.9 264.2 380 265.5C383.1 266.8 386.1 268.2 389.2 269.5C392.2 270.8 395.3 272.2 398.3 273.6C401.3 275 404.3 276.5 407.3 278C410.2 279.5 413.2 281.1 416.1 282.8C419 284.4 421.8 286.2 424.6 288C427.4 289.8 430.1 291.7 432.9 293.6C435.6 295.5 438.3 297.4 441 299.4C443.7 301.4 446.3 303.5 448.9 305.6C451.5 307.7 454 309.9 456.5 312.1C459 314.3 461.4 316.6 463.8 318.9C466.2 321.2 468.6 323.5 471 325.9C473.3 328.2 475.7 330.6 477.9 333C480.2 335.5 482.4 338 484.5 340.6C486.7 343.1 488.8 345.7 490.9 348.3C493 350.9 495 353.5 497.1 356.1C499.1 358.8 501.1 361.4 503.1 364.1C505 366.8 507 369.6 508.8 372.3C510.7 375.1 513.4 379.3 514.4 380.6" stroke="#d8d040" stroke-width="0.65" fill="none" opacity="0.8" stroke-linejoin="round"/>
<path d="M365.2 384.2C365.8 385.8 367.6 390.4 368.9 393.5C370.2 396.6 371.6 399.6 373.1 402.6C374.5 405.6 376 408.6 377.6 411.5C379.1 414.5 380.7 417.4 382.3 420.3C383.9 423.3 385.5 426.2 387.1 429.1C388.7 432.1 390.2 435 391.8 438C393.3 440.9 394.8 443.9 396.3 446.9C397.9 449.8 399.4 452.8 401 455.7C402.5 458.7 404.1 461.6 405.8 464.5C407.4 467.4 409.1 470.3 410.9 473.1C412.7 475.9 414.5 478.7 416.4 481.4C418.2 484.2 420.1 487 422.1 489.7C424 492.4 426.1 495 428.2 497.6C430.2 500.2 432.3 502.8 434.5 505.4C436.6 507.9 440 511.6 441.1 512.8M403.7 284.5C403.6 286.2 403.3 291.2 403.1 294.5C402.9 297.8 402.6 301.1 402.3 304.4C402 307.8 401.5 311.1 401.1 314.4C400.7 317.7 400.2 321 399.7 324.3C399.2 327.6 398.6 330.9 398.1 334.1C397.5 337.4 396.9 340.7 396.4 344C395.8 347.3 395.2 350.6 394.6 353.8C394 357.1 393.4 360.4 392.8 363.7C392.1 366.9 391.5 370.2 390.8 373.5C390 376.7 389.3 380 388.5 383.2C387.7 386.4 386.8 389.7 385.9 392.9C384.9 396 383.9 399.2 382.8 402.4C381.6 405.5 380.4 408.6 379.2 411.7C378 414.8 376.6 417.9 375.3 420.9C374 424 372.6 427 371.3 430.1C369.9 433.1 368.5 436.1 367.1 439.2C365.7 442.2 364.2 445.1 362.7 448.1C361.3 451.1 359.8 454.1 358.3 457.1C356.9 460.1 354.8 464.7 354.1 466.2M409.8 294C411.4 293.5 416.2 292.2 419.4 291.2C422.6 290.2 425.7 289.2 428.9 288.1C432.1 287.1 435.2 286.1 438.4 284.9C441.5 283.8 444.7 282.7 447.8 281.5C450.9 280.3 454 279 457 277.8C460.1 276.5 463.2 275.2 466.3 273.9C469.3 272.6 472.4 271.2 475.4 269.9C478.5 268.6 481.6 267.3 484.7 266C487.7 264.7 490.8 263.4 493.9 262.2C497 260.9 500.1 259.7 503.2 258.5C506.3 257.4 509.5 256.2 512.6 255.2C515.8 254.1 519 253.1 522.2 252.2C525.4 251.2 528.6 250.4 531.8 249.6C535.1 248.9 538.3 248.2 541.6 247.6C544.9 247 548.2 246.5 551.5 246C554.8 245.5 559.8 244.9 561.4 244.7M112.5 397.1C110.8 397 105.8 396.6 102.5 396.6C99.2 396.5 95.8 396.5 92.5 396.6C89.2 396.7 85.9 396.8 82.5 397.1C79.2 397.3 75.9 397.6 72.6 398C69.3 398.4 66 398.9 62.7 399.5C59.4 400 56.1 400.7 52.9 401.4C49.6 402.1 46.4 402.9 43.2 403.8C39.9 404.7 36.8 405.6 33.6 406.7C30.4 407.7 27.3 408.9 24.2 410C21 411.2 17.9 412.4 14.8 413.6C11.7 414.8 8.6 416.1 5.5 417.3C2.4 418.5 -2.2 420.4 -3.8 421M166 401.1C164.5 400.3 160.1 397.9 157.2 396.3C154.2 394.8 151.2 393.4 148.2 392C145.1 390.6 142.1 389.3 139 388.1C135.9 386.9 132.7 385.7 129.6 384.6C126.4 383.6 123.2 382.6 120 381.6C116.9 380.7 113.6 379.8 110.4 378.9C107.2 378 104 377.2 100.7 376.4C97.5 375.6 94.3 374.8 91 374.1C87.8 373.4 84.5 372.8 81.2 372.2C77.9 371.7 74.6 371.1 71.3 370.6C68 370.1 64.7 369.7 61.4 369.3C58.1 368.9 54.8 368.7 51.4 368.5C48.1 368.3 44.8 368.2 41.4 368.1C38.1 368 34.8 367.9 31.4 368C28.1 368 24.8 368.1 21.5 368.3C18.1 368.5 14.8 368.7 11.5 369C8.2 369.3 4.8 369.6 1.5 370.1C-1.8 370.5 -6.7 371.3 -8.3 371.6M175.4 246.8C173.8 247.1 168.8 248.1 165.6 248.7C162.3 249.3 159 249.9 155.7 250.5C152.5 251.2 149.2 251.8 145.9 252.5C142.7 253.2 139.4 254 136.2 254.8C133 255.6 129.7 256.4 126.5 257.3C123.3 258.2 120.1 259.2 117 260.2C113.8 261.3 110.6 262.4 107.5 263.5C104.4 264.7 101.3 265.9 98.2 267.1C95.1 268.4 92 269.6 89 271C85.9 272.4 83 273.9 80 275.4C77 276.9 74.1 278.4 71.1 280.1C68.2 281.7 65.4 283.4 62.6 285.2C59.7 287 55.6 289.8 54.2 290.7M342.2 296.7C343.2 298 346.4 301.8 348.6 304.3C350.8 306.8 353.1 309.3 355.4 311.7C357.7 314.1 360.1 316.4 362.5 318.7C365 320.9 367.4 323.2 369.9 325.4C372.4 327.6 375 329.8 377.5 331.9C380.1 334 382.7 336.1 385.3 338.2C387.9 340.2 390.5 342.3 393.2 344.3C395.9 346.3 398.5 348.3 401.3 350.2C404 352.1 406.8 354 409.6 355.8C412.4 357.5 415.3 359.2 418.2 360.9C421.1 362.5 424 364.2 427 365.7C429.9 367.2 434.4 369.4 435.9 370.1M105.2 287.9C106.8 288.5 111.5 290.3 114.6 291.4C117.7 292.6 120.8 293.8 123.9 295C127 296.2 130.1 297.5 133.2 298.7C136.3 299.9 139.4 301.2 142.5 302.4C145.6 303.7 148.7 304.9 151.8 306.2C154.8 307.5 157.9 308.8 160.9 310.2C164 311.5 167 312.9 170.1 314.2C173.1 315.6 177.7 317.5 179.3 318.2M166.1 293C165.7 294.6 164.7 299.5 164 302.8C163.4 306.1 162.9 309.4 162.3 312.6C161.8 315.9 161.3 319.2 160.9 322.5C160.5 325.8 160.1 329.2 159.9 332.5C159.6 335.8 159.4 339.1 159.3 342.5C159.2 345.8 159.2 349.1 159.3 352.5C159.3 355.8 159.4 359.1 159.6 362.5C159.7 365.8 160 369.1 160.3 372.4C160.6 375.8 161.1 379.1 161.5 382.4C162 385.7 163 390.6 163.3 392.2M273.7 277.1C273 275.6 270.9 271.1 269.6 268C268.3 264.9 267 261.8 265.8 258.7C264.6 255.7 263.3 252.6 262.2 249.4C261 246.3 260 243.1 258.9 240C257.9 236.8 256.9 233.6 255.9 230.4C254.9 227.3 253.9 224.1 253.1 220.9C252.2 217.6 251.4 214.4 250.6 211.2C249.8 207.9 249 204.7 248.2 201.5C247.4 198.2 246.6 195 245.8 191.7C245 188.5 244.2 185.3 243.4 182C242.5 178.8 241.6 175.6 240.7 172.4C239.8 169.2 238.4 164.4 238 162.8M130 306C130.6 307.5 132.3 312.2 133.3 315.4C134.4 318.6 135.4 321.8 136.3 325C137.2 328.2 138.1 331.4 138.9 334.6C139.6 337.9 140.3 341.1 140.9 344.4C141.6 347.7 142.1 351 142.6 354.3C143 357.6 143.4 360.9 143.7 364.2C144 367.5 144.3 370.8 144.5 374.2C144.6 377.5 144.8 380.8 144.9 384.2C144.9 387.5 144.8 390.8 144.7 394.2C144.7 397.5 144.5 400.8 144.3 404.2C144.2 407.5 144 410.8 143.7 414.1C143.4 417.5 143.1 420.8 142.6 424.1C142.2 427.4 141.7 430.7 141.2 434C140.7 437.3 140.1 440.6 139.5 443.8C139 447.1 138.4 450.4 137.8 453.7C137.1 457 136.1 461.8 135.7 463.5M233.7 287.7C233.7 289.3 233.8 294.3 234 297.7C234.2 301 234.5 304.3 234.8 307.6C235.2 310.9 235.6 314.2 236.1 317.5C236.5 320.8 237.1 324.1 237.6 327.4C238.1 330.7 238.7 334 239.2 337.3C239.8 340.6 240.3 343.9 240.9 347.2C241.4 350.4 242 353.7 242.7 357C243.3 360.3 244.1 363.5 244.8 366.8C245.5 370 246.3 373.3 247 376.5C247.8 379.8 248.6 383 249.4 386.2C250.2 389.5 251.1 392.7 252 395.9C252.9 399.1 253.9 402.3 254.9 405.5C255.9 408.6 257 411.8 258 415C259.1 418.1 260.3 421.2 261.4 424.4C262.5 427.5 263.6 430.7 264.7 433.8C265.8 436.9 267 440.1 268.1 443.2C269.2 446.3 270.9 451.1 271.5 452.6M349.4 277.5C350 279.1 351.9 283.7 353.2 286.8C354.6 289.8 356 292.8 357.5 295.8C359 298.8 360.5 301.8 362.1 304.7C363.7 307.6 365.3 310.6 367 313.4C368.6 316.3 370.4 319.2 372.2 322C374 324.8 375.9 327.5 377.8 330.2C379.7 333 381.6 335.7 383.7 338.3C385.7 341 387.8 343.6 389.9 346.1C392.1 348.7 394.2 351.2 396.4 353.7C398.6 356.2 400.8 358.7 403.1 361.2C405.4 363.6 407.8 365.9 410.2 368.3C412.5 370.6 415 372.9 417.4 375.1C419.9 377.4 422.4 379.5 425 381.7C427.6 383.8 431.6 386.8 432.9 387.8M382.7 240.8C381.7 242.2 379 246.4 377.2 249.2C375.4 252 373.6 254.8 371.8 257.6C370.1 260.5 368.3 263.3 366.5 266.1C364.7 268.9 362.9 271.7 361 274.5C359.2 277.2 357.3 280 355.4 282.7C353.4 285.4 351.5 288.1 349.6 290.9C347.7 293.6 345.8 296.3 343.9 299.1C342 301.8 340.2 304.6 338.4 307.4C336.5 310.2 334.7 313 332.9 315.8C331.1 318.6 329.4 321.4 327.6 324.3C325.9 327.1 324.2 330 322.4 332.8C320.7 335.7 318.9 338.5 317.1 341.3C315.4 344.1 313.6 346.9 311.8 349.8C310 352.6 308.2 355.4 306.4 358.2C304.6 361 302.8 363.8 301 366.6C299.2 369.4 297.3 372.2 295.5 375C293.7 377.7 291.8 380.5 290 383.3C288.2 386.1 286.4 388.9 284.7 391.8C282.9 394.6 280.4 398.9 279.5 400.3M408.3 264.6C409.3 263.3 412.4 259.3 414.5 256.8C416.6 254.2 418.7 251.6 420.9 249C423 246.5 425.1 243.9 427.3 241.3C429.4 238.8 431.5 236.2 433.6 233.6C435.7 231 437.8 228.4 439.8 225.8C441.8 223.1 443.8 220.4 445.7 217.7C447.6 215 449.5 212.2 451.2 209.4C453 206.5 454.7 203.7 456.4 200.8C458 197.9 459.6 195 461.2 192C462.8 189.1 464.3 186.1 465.8 183.2C467.4 180.2 468.9 177.2 470.3 174.2C471.8 171.2 473.1 168.2 474.4 165.1C475.7 162 476.9 158.9 478.1 155.8C479.3 152.7 480.9 147.9 481.4 146.4M290.8 411C289.6 412.1 285.7 415.2 283.1 417.4C280.6 419.5 278.1 421.7 275.6 424C273.1 426.2 270.7 428.5 268.3 430.8C265.9 433.1 263.5 435.5 261.1 437.8C258.7 440.1 256.3 442.4 253.9 444.6C251.4 446.9 249 449.2 246.5 451.4C244 453.6 241.4 455.7 238.9 457.9C236.3 460 233.7 462.1 231.1 464.1C228.5 466.2 225.9 468.3 223.2 470.3C220.5 472.3 217.8 474.2 215 476.1C212.3 477.9 209.5 479.8 206.7 481.6C203.9 483.3 201 485 198.1 486.7C195.2 488.3 192.3 489.9 189.3 491.5C186.4 493.1 183.5 494.7 180.5 496.2C177.5 497.7 174.6 499.2 171.5 500.7C168.5 502.1 165.5 503.4 162.4 504.7C159.4 506.1 156.3 507.4 153.2 508.6C150.1 509.9 147 511.2 144 512.5C140.9 513.8 136.4 515.9 134.8 516.6M152.4 325C152.5 326.6 153 331.6 153.3 334.9C153.5 338.3 153.8 341.6 153.9 344.9C154 348.2 154.1 351.6 154.1 354.9C154.1 358.2 154 361.6 153.9 364.9C153.7 368.2 153.4 371.6 153.1 374.9C152.8 378.2 152.4 381.5 151.8 384.8C151.3 388.1 150.7 391.4 150.1 394.6C149.4 397.9 148.3 402.8 148 404.4M97.2 241.7C98.9 241.7 103.9 241.9 107.2 241.9C110.5 242 113.9 242.1 117.2 242.2C120.5 242.2 123.9 242.3 127.2 242.2C130.5 242.2 133.9 242.1 137.2 242C140.5 241.9 143.9 241.7 147.2 241.6C150.5 241.4 153.8 241.3 157.2 241C160.5 240.8 163.8 240.5 167.1 240.1C170.4 239.7 173.7 239.3 177 238.8C180.3 238.3 183.6 237.8 186.9 237.2C190.2 236.6 193.5 235.9 196.7 235.1C199.9 234.4 204.8 233 206.4 232.6M344.8 388C344.4 389.6 343.4 394.5 342.7 397.8C342.1 401 341.4 404.3 340.7 407.6C340.1 410.8 339.4 414.1 338.9 417.4C338.3 420.7 337.8 424 337.3 427.3C336.8 430.6 336.4 433.9 336 437.2C335.7 440.5 335.3 443.8 335.1 447.1C334.8 450.5 334.6 453.8 334.5 457.1C334.4 460.4 334.4 465.4 334.4 467.1M218.4 329.8C219.9 329 224.2 326.6 227.2 325.1C230.1 323.5 233.1 321.9 236 320.4C239 318.9 242 317.5 245 316C248 314.5 251 313.1 254 311.6C256.9 310.1 259.9 308.6 262.9 307C265.8 305.5 268.8 304 271.7 302.4C274.7 300.8 279 298.3 280.4 297.5M332.8 229.9C331.2 229.8 326.2 229.4 322.9 229.3C319.5 229.1 316.2 229.1 312.9 229.1C309.5 229.2 306.2 229.3 302.9 229.5C299.5 229.7 296.2 230 292.9 230.3C289.6 230.6 286.3 231.1 283 231.4C279.6 231.8 276.3 232.1 273 232.5C269.7 232.9 266.4 233.3 263.1 233.8C259.8 234.2 254.9 235 253.2 235.3M219.5 261.3C219.4 259.6 219.3 254.6 219.2 251.3C219.1 247.9 219 244.6 218.9 241.3C218.7 237.9 218.6 234.6 218.3 231.3C218 228 217.7 224.6 217.3 221.3C216.9 218 216.4 214.7 215.9 211.4C215.3 208.1 214.7 204.9 214 201.6C213.3 198.4 212.5 195.1 211.6 191.9C210.7 188.7 209.8 185.5 208.7 182.3C207.7 179.2 206.6 176 205.4 172.9C204.2 169.8 202.9 166.7 201.6 163.6C200.4 160.5 199.1 157.5 197.7 154.4C196.4 151.4 195.1 148.3 193.6 145.3C192.2 142.3 189.9 137.8 189.1 136.4M276.3 338.9C274.9 339.8 270.5 342.2 267.6 343.8C264.7 345.4 261.7 347 258.8 348.6C255.8 350.1 252.9 351.6 249.9 353.1C246.9 354.6 243.9 356.1 240.9 357.6C238 359.1 234.9 360.5 232 362C229 363.5 226 364.9 223 366.4C220 367.9 217 369.4 214.1 370.9C211.1 372.4 208.1 373.9 205.1 375.4C202.1 376.9 199.1 378.3 196.1 379.8C193.1 381.2 190.1 382.7 187.1 384.1C184.1 385.4 181 386.8 178 388.1C174.9 389.5 171.8 390.8 168.8 392.1C165.7 393.4 162.7 394.7 159.6 396C156.5 397.3 151.8 399.1 150.3 399.7M390.4 391.4C388.8 391.2 383.8 390.5 380.5 390.1C377.2 389.7 373.9 389.4 370.6 389.1C367.3 388.8 363.9 388.7 360.6 388.5C357.3 388.4 353.9 388.3 350.6 388.3C347.3 388.3 343.9 388.5 340.6 388.6C337.3 388.7 333.9 388.9 330.6 389.2C327.3 389.4 324 389.7 320.6 389.9C317.3 390.2 314 390.4 310.7 390.7C307.4 390.9 304 391.2 300.7 391.5C297.4 391.7 292.4 392.1 290.7 392.2M97.2 384.6C98.2 383.3 101.4 379.3 103.4 376.7C105.5 374.1 107.5 371.5 109.5 368.8C111.6 366.2 113.6 363.5 115.6 360.8C117.6 358.2 119.6 355.5 121.6 352.9C123.6 350.2 125.7 347.6 127.8 345C129.9 342.4 131.9 339.8 134.1 337.2C136.2 334.7 138.3 332.1 140.5 329.6C142.7 327.1 145 324.7 147.3 322.2C149.6 319.8 151.9 317.4 154.2 315C156.5 312.6 158.9 310.3 161.3 308C163.8 305.7 166.2 303.4 168.7 301.2C171.1 298.9 173.5 296.6 176 294.3C178.4 292.1 182 288.6 183.2 287.5" stroke="#4cc8c0" stroke-width="0.8" fill="none" opacity="0.7" stroke-linejoin="round"/>
<path d="M398.5 244.6l3.7 3.6M401.3 242.2l0.1 0.1M401.4 242.3l0.8 6M401.8 297.1l0.4 2.1M402.2 299.2l1.6 1.5M404.7 240.6l-2 1.8M401.4 242.3l1.4 0.1M398.5 244.6l-2.7 1.4M395.8 246l1.2 3M397 249l5.1 2.9M403 251.1l-0.9 0.8M291.6 407.6l-5.9 1.3M284.5 408.8l1.2 0.2M280.8 405l-1.3 -8.3M293.7 395.9l0.6 3.8M293.7 395.9l-10.4 -0.6M291.6 407.6l2.7 -7.9M283.3 395.3l-3.8 1.4M401.3 242.2l-2.6 -5M403.4 232.1l-4.7 5.1M395.8 246l-7 -5.2M388.7 240.8l2.1 -2.2M398.7 237.2l-7.9 1.4M388.7 240.8l-1.2 0.5M387.6 241.3l-2.1 7.2M390.2 254l-4.8 -5.4M261.7 247l-6 -3M261.7 247l2.6 -9.5M264.2 237.5l-8.5 -2.3M255.7 235.2l-2 5.2M253.6 240.4l2 3.6M255.7 235.2l-0.7 -1.8M186.6 229.4l-0.2 0.2M124 255.3l10.2 0.3M124 255.3l1 -9.6M129.5 243.8l-4.1 1.4M129.5 243.8l4.4 2.9M125 245.6l0.4 -0.4M134.1 255.5l-0.2 -8.8M142.8 411l6.7 -0.1M404.8 290l-1.8 -10M404.8 290l-4.3 0.5M396 286.3l4.7 -6.3M400.7 280l1.9 -0.3M403 280l-0.4 -0.3M398 296.2l3.8 0.9M389.9 301.2l-0.8 -6.3M396 296.6l-3 -2.9M393.1 293.7l-3.9 1M389.1 294.9l0.1 -0.3M384.6 302.1l5.3 -0.9M393.7 287.5l-0.6 6.2M393.7 287.5l2.3 -1.2M383.8 299.8l0.5 2.5M384.2 302.2l0.4 -0.2M386 293.3l3.1 1.3M394.6 302.8l0.5 1.8M395.1 304.6l4.3 2.2M399.4 306.8l1.4 1.4M404.2 308.9l-1.1 0.2M399 318.1l1.8 -0M399 318.1l-2.7 -5.8M396.3 312.3l4.5 -4.2M403.1 309.1l-2.2 9M377.1 287.8l1.5 1M377.1 287.8l3.6 -4.7M380.8 283.1l6.1 -0.8M393.3 287.3l-6.4 -5M383.8 299.8l-0.7 -1.2M383.1 298.6l-4.5 -9.7M392.7 275.4l-5.9 6.9M314.4 400.7l-1.1 1.1M314.4 400.7l11.7 7.1M314.4 407.5l-1.2 -5.7M400.5 257.1l0.9 -2.5M402.1 251.9l-0.7 2.8M222.9 384l-7.3 -11.6M222.9 384l2.7 -2.6M215.6 372.4l2.3 -3.1M217.9 369.3l4.8 -0.8M252.3 409.1l-6.4 -2.3M245.9 406.8l-0.2 0M258.4 405l10.2 -1M258.4 405l-0.4 1.5M268.6 404.1l1.8 6.6M169 298.6l-0.7 -4M179.6 299.6l-1.8 2.2M168.4 294.6l2 -1.2M174.3 303.5l3.5 -1.7M385.4 248.6l-0.9 0.4M384.5 249l-3.8 -0.5M377.1 234.6l-0.1 -0M382 237l-4.9 -2.5M372.1 246.2l-3.4 -0.1M368.7 246.1l-0.9 -0.2M369.2 238.2l-2.4 3.2M367.8 245.9l-1 -4.5M366.9 241.4l-0.1 -0M393.5 266l8 -1.8M391.7 271.8l10.8 -3M402.8 267.7l-0.3 -2.3M401.5 264.2l1 1.2M403.5 276.4l-1 -7.6M400 257.7l0.5 -0.6M241 317.6l-14.9 -3.7M241 317.6l1.4 -7.4M240.5 306.5l-11 3.5M253.6 240.4l-1.7 0.4M255.7 244l-7.9 10.1M244.8 249.8l1.8 3.1M244.8 249.8l0.3 -4.8M247.7 254.1l-1.2 -1.2M245.1 244.9l6.8 -4.2M255 233.4l-10.9 1.7M244.8 249.8l-10.4 -1.4M245.1 244.9l-3 -4.8M234.4 248.4l7.7 -8.2M244 235.1l-0.3 -0M243.8 235l-2.1 4.1M243.6 234.4l-1.1 -1.6M243.8 235l-0.2 -0.6M238 231l4.4 1.7M212.8 256.9l-11.7 0.3M201.1 257.2l-1.5 -0.3M209.5 250.5l-9.8 6.3M209.5 250.5l2.5 2.4M141.4 263.5l6.7 0.9M141.4 263.5l-5 6.6M136.4 270.1l5.4 7.3M157.2 247.9l-7.1 9.1M157.2 247.9l9.9 8.8M167.1 256.8l-18.1 6.6M148.9 263.4l1.2 -6.4M166.3 263.9l0.7 -7.1M154.4 270.2l-4.9 -3.3M116.7 236.7l-9.1 -1.5M116 244.2l-1.4 1.1M128.5 229.7l0.9 2.9M120.5 234.7l-1.7 1.3M117.6 236.2l1.2 -0.3M130 236.4l-0.5 7.4M129.1 233.8l-8.6 0.9M125.4 245.3l-6.5 -9.3M129.1 233.8l0.4 -1.2M103.9 233.3l2 1.3M116 244.2l8.1 1.5M124 255.3l-4.3 3.6M135.5 257.5l-8.7 6.3M119.6 258.9l7.2 5M134.3 271l2.1 -0.9M138.9 259.7l-3.4 -2.2M128.3 269.7l-1.6 -5.8M141.4 280.7l0.4 -3.2M132.6 279l4.4 3.2M148.5 254.5l-5.4 -2M112.8 357l2 2.9M112.8 357l-0.6 -0.1M112.2 356.9l-5.2 7M107 363.8l1.5 5.8M108.5 369.7l2.4 0.9M110.9 370.6l0.4 -0.4M117.5 361.9l0.9 4.4M117.5 361.9l-2.7 -2M118.4 366.3l-7.1 3.9M99.6 373.4l8.9 -3.7M125.8 374.3l-0 -3.2M125.8 371.1l-7.4 -4.8M209.7 389.9l-6.1 0.9M211 384l-8.2 3.2M202.8 387.2l0.8 3.6M219.3 385.3l-7.5 -0.3M212.8 396.7l-3.2 -6.8M222.9 384l-0.2 0.6M212 373.4l3.6 -1M212 373.4l-0.9 2.3M222.7 384.6l-3.4 0.7M213.1 398.1l-10.9 -2.2M202.2 396l1.1 -4.7M193.5 408.9l5.2 1.9M185.7 411.6l1.4 -2.4M203.1 410.5l-4.4 0.3M137.7 406.6l-4.8 -2.4M132.9 404.2l-0.2 -0.3M132.7 403.9l5.7 -7M138.4 396.8l3.8 0.4M142.2 397.2l8.6 3.3M142.8 411l-5.1 -4.5M149.6 411l2.5 -2.5M152.1 408.5l-1.2 -7.6M143.2 383.5l0.8 0.2M144 383.7l4.3 5.6M137.8 389.2l0.5 7.6M153.5 397.1l0.6 -3.3M153.5 397.1l-2.6 3.4M148.3 389.4l5.8 4.4M152.1 408.5l2.5 0.6M160.4 388.4l1.3 1.2M172.3 393.4l-4 -8.3M172.3 393.4l-0.7 1M171.6 394.4l-9.9 -4.8M160.5 387.7l7.9 -2.6M144 383.7l7.9 -2.8M160.4 388.4l-6.3 5.4M160.5 387.7l-1.4 -4.8M159 382.9l-2.5 -2.1M380.5 255.2l4 -6.2M380.5 255.2l2.9 5.6M390.2 254l1.1 3.2M383.4 260.8l7.8 -3.6M391.2 257.2l0.7 0.6M393.5 266l-1.6 -7.9M391.9 257.7l-0 0.4M366.4 280.9l-3.8 -3.7M366.4 280.9l10.9 -10.8M362.6 277.3l-0.6 -7.6M377.4 270.2l-13.9 -1.9M363.5 268.3l-1.5 1.4M354.7 267.4l-5.4 9.2M354.7 267.4l7.3 2.2M349.3 276.7l1.9 1.9M374.9 308.8l-4.6 -14.3M378.2 297.2l-2 -9.1M370.3 294.6l2.3 -6.1M383.1 298.6l-4.9 -1.4M384.2 302.2l-4.3 6.2M380.4 313.2l3.2 0.8M380.4 313.2l-0 -0M383.6 314l11.5 -9.4M308.9 331.1l-9.8 13.6M298.6 338.1l-1.5 5M309.1 330.9l-1.7 -2.5M309.1 330.9l-0.2 0.2M294 329l4.6 9.1M294 329l0.3 -1.1M294.3 327.8l1.7 -0.9M299.6 326.3l-3.6 0.6M382 328.1l-2.2 2.7M379.8 330.8l-7 -3.6M372.8 327.1l-0.5 -1.3M303.8 412.7l6.1 -10.5M308.5 401.6l1.4 0.6M293.7 395.9l1.1 -1.5M294.8 394.4l6.3 -2.3M301.1 392.2l7.4 9.4M313.3 401.8l-3.4 0.4M314.4 400.7l1.9 -4.1M304.9 388.4l8.1 1M326.7 398.6l-1.1 -1.7M326.7 398.6l1.3 7.3M326.1 407.8l1.9 -1.9M316.3 396.6l8.4 -0.7M325.6 396.9l-0.9 -1M241 317.6l0.5 1M227.5 323.9l11.2 2.8M227.5 323.9l-3.2 -4.5M224.4 319.4l-0.4 -0.7M224 318.8l0.4 -4.2M238.8 326.7l3 -1.4M226.1 313.9l-1.7 0.6M241.5 318.6l0.2 6.7M254.1 362.7l0.6 2.8M254.1 362.7l3.5 -6.5M257.7 356.2l5 6.9M262.7 363.1l-1.6 3.9M254.7 365.6l6.3 1.4M327.2 388.5l-2.5 7.4M323.9 385.9l-5.6 -3.2M221.4 250.6l9.5 1.4M230.9 252l0.6 5.2M231.5 257.2l-0.1 0.6M231.4 257.8l-5 0.1M220.8 264.2l1.9 -0.6M220.8 264.2l-5.6 -3.5M222.7 263.5l0.7 -3.8M215.2 260.7l3.9 -2.7M221.1 255.4l-2 2.6M226.5 257.9l-3 1.9M232.2 264.4l-0.4 -5.2M247.3 258.7l0.5 -1.1M232.1 264.8l-9.4 -1.2M232.1 264.8l0 -0.3M231.4 257.8l0.4 1.5M248.6 256.5l-0.8 1.2M246.6 252.8l-15.1 4.3M258.4 267.8l-6.8 2.1M251.7 269.9l-6.2 -3.3M245.5 266.6l1.8 -7.9M203.9 313.4l-9.4 -5.1M203.9 313.4l-2 5.6M192.3 312.9l2.2 -4.6M192.3 312.9l0.1 7.4M192.4 320.4l3.7 2.2M196.7 322.6l-0.5 0.1M203.9 330.9l-7.2 -8.4M196.1 322.6l-3.3 9.1M181 321.9l2.5 12.3M183.5 334.1l1 0.1M192.8 331.7l-8.3 2.5M224 318.8l-5.7 4.1M218.5 335.7l-2 -0.3M216.5 335.4l1.8 -12.5M190.6 302.3l2.8 2.2M190.6 302.3l-1.6 -3M201.7 294.7l-0.2 4.3M201.7 294.7l-8 -2M193.7 292.7l-4.6 6.6M197.3 303.1l4.2 -4.1M307.2 312.4l0.5 1.2M307.7 313.6l2 0.7M309.7 314.3l6.8 0M316.6 314.3l-4.2 -6.7M306.4 327.7l1.4 -14M315.6 319.5l-5.9 -5.2M313.3 297.1l3.7 1.4M308.7 303.8l1.5 3.7M318.5 306.1l-6.1 1.5M309.6 261.1l3.5 -5.8M309.6 261.1l6.8 4.5M321.5 257.8l-1 -4M321.5 257.8l-4.8 7.8M313.1 255.3l7.4 -1.6M269.6 237.3l-2.6 -1.2M261.7 247l1.5 3M271.2 244.1l-8.1 5.9M263.2 253.6l-0 -3.6M280.1 234.5l4.3 2.3M271.2 244.1l8.3 3.9M283.7 245l-4.2 3M284.2 244.3l0.2 -0.4M289.6 232.4l-5.3 4.4M289.6 232.4l4.8 5.1M294.4 237.5l2.1 8.8M306.9 261l2.7 0.1M306.9 261l-0.1 -0.3M306.4 250.9l-0.3 1M306.4 250.9l2.1 -1.1M308.5 249.8l4.6 5.5M301.3 237.1l-2.5 -5.6M280.1 234.5l-2.6 -5.2M375.7 252.8l-3.7 -3.4M375.7 252.8l1.7 3M377.4 255.8l-2.3 2.3M368.7 246.1l3.3 3.3M380.5 255.2l-3.1 0.6M370.5 258.2l-0.5 -0.8M363.9 266.9l-2.2 -8.3M374.9 258.4l0.3 -0.3M370 257.5l-2.9 -10.1M270.7 360l-3.7 0M270.7 360l0.4 -8.2M270.1 351.8l1 0M270.1 351.8l-3.9 5.7M266.2 357.5l0.9 2.5M261.8 349.8l8.3 1.9M261.8 349.8l-1.8 1M260 350.8l6.2 6.7M260 350.8l-3.3 0.8M256.7 351.6l1 4.6M262.7 363.1l0.2 -0.1M273.9 362.3l-2.7 4.6M273.9 362.3l3.3 -0.5M278 362.7l1.4 12M271.2 366.9l-0.7 4.3M272.2 372.6l5.8 3M272.2 372.6l-1.6 -1.4M277.9 375.6l1.5 -0.9M262.9 363.1l8.4 3.8M262.9 372.1l7.7 -0.9M262.9 372.1l-1 -1.4M261.9 370.6l-0.8 -3.6M278.5 382.9l5.2 2.3M283.4 393.3l0.2 -8.1M282.5 364.4l-4.6 -1.7M279.4 374.7l6 -0.8M285.4 373.8l-2.7 -9.3M294.8 394.4l-3.4 -10.1M303.2 384.1l1.4 2.9M304.6 387l0.3 1.3M291.4 384.4l5.6 -3.2M283.4 393.3l6.4 -10.2M291.4 384.4l-1.6 -1.3M255.4 351.1l1.1 -11M267.3 339l-1 -2M266.3 337l-2.7 -0.4M267.9 339.3l-0.5 -0.3M273.4 347.9l-0.7 2.9M271.1 351.8l1.5 -0.8M272.6 351l0.1 -0.1M213.2 323.1l-2.6 0.6M213.2 323.1l0.2 -5.6M232.7 273.4l6.8 3M232.7 273.4l-0.8 -4.3M231.9 269.1l0.7 -2.1M232.6 267l11.4 0.8M239.4 276.5l4.5 -4.8M227.3 281.5l-5.7 -6.7M226.1 270.3l-4.5 4.5M226.1 270.3l5.7 -1.2M229.5 280.5l3.2 -7.1M232.1 264.8l0.5 2.3M226.1 270.3l-5.1 -2.5M221 267.8l-0.2 -3.7M245.5 266.6l-1.5 1.2M214.2 261.9l-4 2.1M214.2 261.9l0.9 5.1M208 267l2 1.7M208 267l2.2 -2.9M210 268.7l5.1 -1.6M221 267.8l-4.7 4.3M216.3 272.1l-1.2 -5M191.9 236.1l-0.5 -5.9M191.9 236.1l11.2 -3.7M203 232.4l-10.3 -3.4M191.4 230.2l1.4 -1.1M190.5 239.7l1.4 -3.6M237.4 239.1l-4.2 -4.1M233.4 233.5l-0.6 1M184.8 251.9l-8.1 1.8M182.8 257.2l-9 1M176.7 253.7l-4.7 3.3M173.9 258.2l-1.8 -1.2M184.8 242.6l-1.8 -0.5M187.5 249.9l-2.7 2.1M179.3 264.5l-5.5 -6.3M166.3 263.9l1.5 6M168.1 256.3l3.9 0.7M168.1 256.3l-1 0.4M195.7 256.1l0.7 0.9M202.1 240.2l-6.3 1.5M187.5 249.9l8.2 6.2M194.6 262.4l-0.3 0.3M194.6 262.4l1.8 -5.4M190.5 239.7l5.3 1.9M209.5 250.5l-0.7 -3.6M199.6 256.9l-2.8 0M205.3 268.2l2.7 -1.2M203 239.4l0.3 -6.9M203 239.4l-1 0.8M168.1 256.3l0.1 -0.5M183 242.1l-0.4 -0.2M168.2 255.9l14.3 -14M181.2 231.7l-1.9 4.3M182.5 241.9l-2.4 -1.8M179.3 236l-5.4 -3.2M171.4 230l2.4 2.8M180.2 240.1l-0.3 0.1M173.8 232.8l-3.5 4.9M173.9 287.5l-3.5 5.8M173.9 287.5l1.7 0.2M175.6 287.7l6.1 5.5M157.8 276.2l-8.6 2.1M157.8 276.2l4.6 4M162.4 280.2l-0.7 1.1M161.8 281.4l-8.1 4.5M149.3 278.3l-1.4 7.7M147.8 286l5.5 -0M153.3 286l0.3 -0.1M154.4 270.2l3.4 6M166.5 278.8l2.4 -3.3M169 275.5l-1.2 -5.6M166.5 278.8l7.4 8.8M168.4 294.6l-5.2 -1.3M163.1 293.3l-1.4 -11.9M141.4 280.7l6.1 5.5M147.5 286.2l0.3 -0.2M155.5 294.2l-4.1 1.1M155.5 294.2l4.2 2.1M151.4 295.4l-0.1 0.6M151.2 295.9l3 7.1M159.7 296.4l-0 0.4M154.2 303.1l2 0.7M110 246l3.1 1.1M113.1 247.1l1.1 6.8M103.8 247.5l-0.7 0.7M103.2 248.3l9.4 12M114.2 253.9l-0.4 5.8M113.8 259.7l-0.7 0.7M114.6 245.3l-1.5 1.8M102 248.6l1.2 -0.3M119.6 258.9l-5.9 0.8M110 277.1l3.8 -3M113.8 274.2l3.9 3.1M108.3 287.6l-3.4 -3.6M113.3 284.9l0.4 -1.9M112 268l1.8 6.2M113 260.4l0.4 2.4M112 268l1.5 -5.2M137 282.2l-1.3 5.9M147 287.1l-11.3 1M147 287.1l-0.7 4M129.9 280.4l-4 3.5M129.9 280.4l-4.7 -8.8M125.2 271.6l-2.4 0.9M132.6 279l-2.7 1.4M113.4 262.8l9.4 9.7M117.7 277.2l3.4 -0.9M142.5 296.9l-5.4 -1.5M143.4 294.4l-6.8 -4.6M137.1 295.4l-0.5 -5.6M143.4 294.4l2.9 -3.3M135.7 288.1l-0.2 0.2M136.6 289.8l-1.1 -1.4M123.2 413.1l-0.9 -4.9M122.3 408.1l-6.3 0.2M110.8 386.6l-5.5 -3.8M110.8 386.6l1.8 -7.4M112.6 379.1l-0.5 -1M112.1 378.1l-9.1 -0.7M103 377.4l2.3 5.4M126.2 376.7l-13.6 2.4M126.2 376.7l0.2 -0.2M126.4 376.5l-0.6 -2.2M101.3 375.9l1.7 1.4M100.3 383.9l5 -1.1M137 372.4l6.5 7.2M139.4 369l4.2 3.6M143.4 379.6l1.4 -5.1M139 365.2l0.1 0.2M128.2 366.1l-2.4 5M126.4 376.5l3.7 0.6M130.1 377.1l6.8 -4.7M139.1 365.3l0.3 3.7M143.2 383.5l0.2 -3.9M139.1 364.9l6.5 -3.7M143.5 356.9l-5.6 0.3M117.5 361.9l8.5 -2.3M112.8 357l3.8 -2.5M126 359.5l-0.6 -1.6M108.2 346.2l3.9 -1.1M108.2 346.2l-2.4 4.8M116.6 354.5l0.8 -1.4M192.1 401.9l3.1 -3.6M195.1 398.2l-2.8 -3.5M192.3 394.7l-2.5 -1.8M189.8 392.9l-5.3 2M184.6 395l-2.7 5.3M203.1 409l-0 1.5M203.1 409l-4.7 -9.6M198.4 399.4l-3.3 -1.1M187 409.2l-0.3 -4.1M202.2 396l-3.7 3.4M203.3 391.2l-4.8 -1.4M177.2 388.9l7.3 6.1M189.9 392.7l-0 0.3M178 382.6l10.3 6.1M184.8 411.8l-6.4 -6.9M178.5 404.9l-2.6 4.7M175.8 409.5l-7.8 1.8M168.1 411.3l-1 -0.1M186.2 361.6l3.6 -2M186.2 361.6l-7.2 -0.4M189.8 359.6l-5 -7.5M179.1 361.2l-0 -0.4M179 360.8l5 -8.9M184.8 352.1l-0.7 -0.5M184 351.8l0.2 -0.2M194.3 360.2l-4.8 9.1M189.4 369.4l-3.2 -1M186 367.2l0.2 1.2M186 367.2l0.2 -5.6M175.9 353.6l-1.1 1.2M175.9 353.6l8 -1.8M183.7 348l8.9 -3.3M195.4 351.1l-10.6 1M195.4 351.1l-2.9 -6.5M183.7 348l-3.8 -4M175.9 353.6l1 -7.4M179.9 343.9l-3 2.3M189.4 369.4l1 1.7M181.1 378.2l5.7 0.2M181.1 378.2l-1.7 -5.8M190.5 371.1l-3.7 7.3M201.6 358.8l-7.3 1.5M190.5 371.1l8.6 1.3M186 367.2l-7.5 -3.8M178.3 362.3l0.1 1.1M174.8 354.8l-5.7 -0.7M176.9 346.2l-6.1 1.7M169.1 354.1l1.7 -6.3M179.9 321l-13.9 4.4M169.2 316.6l4.5 -4.9M169.2 316.6l-3.3 8.8M179.5 316.8l-5.8 -5.1M139.1 365.3l7.5 2M143.5 372.5l3.2 -5.1M146.6 367.3l0.2 0.2M156.5 380.8l0.2 -9.5M150.5 376.1l1.3 -5M144.8 374.4l5.8 -3.8M151.8 371.1l-1.1 -0.4M399 318.1l-4.1 0.8M396.3 312.3l-8.7 4M395 319l-3.2 -0.3M391.8 318.6l-4.2 -2.3M383.6 314l2.7 2M387.6 316.3l-1.3 -0.3M399.3 335l2.1 -3.4M396.6 343.8l-4.5 -0.8M396.6 343.8l3 -3.4M400.6 327.9l0.9 3.7M389.9 270.7l-9.3 10.4M378.6 269l-0.8 1.1M380 267.7l0.6 -0.2M377.8 270.1l2.7 10.9M391.1 271l-1.2 -0.4M391.9 258.1l-6.4 10.5M374.9 258.4l5.1 9.3M363.9 266.9l-0.4 1.4M368.7 285.5l0.9 1.1M369.6 286.6l3 1.9M368.7 285.5l-11.5 1.7M360.1 278.4l-4.3 7.2M351.2 278.6l-0.1 6.9M355.8 285.6l-4.6 -0.1M341.7 284l-1.2 -1.3M341.7 284l6.2 -7.5M405.3 410.7l-2 0.9M360.7 351.8l1.7 6.8M362.4 358.7l1.5 2.3M368.1 350.7l-2.8 10.3M378.7 352.6l-5.3 -0.6M378.7 352.6l2.2 4.5M373.4 352l-0.4 12.6M358 363.9l5.9 -2.9M358 363.9l5.1 8.8M365.2 361.1l5.3 3.4M363.1 372.7l7.5 -8.3M368.7 350l-0.6 0.7M368.7 350l4.4 1.7M373.1 351.7l0.3 0.3M372.9 364.6l-0.1 0.1M345.4 312.3l4.9 -4.8M345.4 312.3l-2.9 -3.7M350.3 307.4l-7.5 -5.4M342.6 308.5l-1.2 -3.8M342.8 302l-1.4 2.7M335.3 306.7l-0.6 7M335.3 306.7l6.1 -2M334.6 313.7l7.9 -5.2M330.5 296.3l1.5 4M331.4 295.3l12.9 1.7M344.3 297.1l-0 -0.1M342.4 287.8l-9.2 1.6M342.4 287.8l1.8 1.6M333.2 289.5l-1.8 5.8M344.4 294.4l-0.1 2.5M342.8 302l0.1 -1.4M352.1 299.4l0.2 7.6M352.1 299.4l-7.7 -2.3M341.7 284l0.7 3.8M340.5 282.7l-9 -2.5M333.5 274.2l-2.2 5.5M309.8 331.3l6.4 1.1M309.8 331.3l-0.7 -0.5M316.2 332.4l3.3 -0.6M319.5 331.8l0.6 -0.4M315.6 319.5l2.1 -1.1M320.2 331.4l4.4 -8.7M316.6 314.3l1.2 0.6M318.5 306.1l4.9 2.5M317.8 315l5.6 -6.3M331.8 303.7l-8.2 4.9M324.3 300l-0.8 8.6M324.3 300l4.8 -3.7M323.4 308.6l0.1 -0M330.4 354.5l2.5 -5.4M330.4 354.5l-10 -8.1M332.9 349l-6.8 -5.8M320.3 346.4l5.7 -3.1M307.2 312.4l-0.2 -0M307.1 312.4l-8.5 -6.5M330.2 380.3l-3.1 0.8M330.2 380.3l1.5 -2.9M330.2 370.5l1.2 1.4M330.2 370.5l-9.7 4M327.2 381.2l-6.6 -6.7M331.7 377.5l-0.4 -5.6M362.4 358.7l-8.6 -4.3M352.8 364.5l-1.2 -1.9M351.6 362.6l0.4 -5.6M352 357l1.9 -2.7M360.7 351.8l-3.8 -2.5M356.9 349.4l-1.7 0.6M353.9 354.3l1.4 -4.4M356.9 349.4l1.1 -1.6M350.2 345.6l1 -5.4M350.2 345.6l2.7 2.8M355.2 349.9l-2.3 -1.5M368.7 350l-1.2 -5.8M361.1 344.6l6.4 -0.4M320.3 346.4l-1.8 0.6M319.5 331.8l6.6 10.7M326.1 342.5l-0.1 0.8M318.5 347l-0.2 0M293.7 351.7l6.4 8.9M293.7 351.7l5.9 -2.9M309.8 331.3l-0.6 14.2M299.1 344.6l1.5 2.5M309.2 345.5l-6 1.8M304.6 387l7.7 -11.1M312.3 375.9l-8.1 -2.1M312.3 375.9l5.6 -0.1M327.2 381.2l-3.3 4.7M320.6 374.5l-2.2 0.7M319.9 358.5l-4.1 -9.3M319.9 358.5l-5.8 5.2M314.1 363.8l-2.9 -0.6M307.4 357.1l-0.7 2.4M307.4 357.1l7.5 -7.9M314.9 349.2l0.9 0.1M329 359.8l-9.2 -1.3M318.3 347l-2.6 2.3M331.5 363.5l-1.3 7M318.3 375.2l-4.2 -11.4M304.3 373.8l-0.7 -0.8M298.2 371l5.3 2M300.5 360.3l6.1 -0.8M309.2 345.5l5.7 3.6M219.1 335.7l4.5 0.6M226.6 332l-2.9 4.4M219.5 346.8l2.7 -1.3M222.2 345.5l2.3 -5.5M223.7 336.3l0.3 0.4M232.3 371.2l3.1 -0.7M232.3 371.2l-2.1 2.4M230.2 373.6l-0 1.1M235.3 370.5l4.5 3.8M239.8 374.3l0.2 2M222.6 368.5l2.5 -2.8M223.6 369.8l6.5 3.8M225.6 381.4l3.3 -1.8M228.8 379.6l1.3 -4.9M236.2 346.3l-6.8 -0.1M239.3 350.2l-6.5 5.6M229.4 346.2l-3.2 2.7M224.9 352.7l1.3 -3.8M246.2 351.1l-1 0.6M236 343.4l0.2 2.9M245.1 351.7l-5.9 -1.5M225.1 361.8l-5.3 -6.7M225.1 361.8l7.1 -4.1M219.9 355.2l5.1 -2.5M232.3 357.8l0.5 -2M222.2 345.5l4.1 3.5M224.5 339.9l4.9 6.3M219.5 346.8l-7.5 7.1M254.1 362.7l-5.3 -2M249.3 369l1.1 -0M249.3 369l-1.1 -0.7M248.8 360.8l-0.6 7.6M246.2 351.1l9.3 -0M245.1 351.7l-0 1.6M254 376.1l-2.2 -5.9M250.4 369l1.4 1.2M261.9 370.6l-5.3 0.9M242.1 405.2l1 -9.2M242.1 405.2l-4.8 1.2M243.1 396l-0.1 -0.2M243 395.9l-5.2 -0.8M237.7 395.1l-3.7 3.4M248 397.2l3.9 -0.8M248 397.2l1.7 5.5M249.8 402.7l2.1 -1.2M244.1 396.1l11 -4.9M255.1 391.2l0.4 0.6M242.1 405.2l3.5 1.6M245.9 406.8l3.9 -4.1M257.7 402.7l-5.7 -1.2M255.5 391.9l4.5 3.1M268.6 404.1l1.7 -7.5M267 394.4l3.3 2.2M276.4 395.6l-1 0M275.4 395.6l-5.1 1M229.7 390.4l0.3 6.2M229.7 390.4l0.5 -0.1M237.7 395.1l-2.1 -3.4M234 398.5l-4 -1.8M230.2 390.3l5.4 1.3M222.7 384.6l1.2 2.3M229.7 390.4l-5.8 -3.6M230.2 390.3l8.6 -8.8M240.8 379.6l-1.9 1.9M240.8 379.6l-0.8 -3.2M238.8 381.5l0.1 -0M244.6 391l-5 -6.1M244.6 391l-1.3 3M243.3 394l-0.7 -0.6M242.6 393.4l-4.1 -5.2M238.5 388.2l1.1 -3.2M237.5 389.9l1 -1.8M238.9 381.5l0.7 3.4M217.9 369.3l-6.7 -15.3M225.1 365.7l-0 -3.8M212 353.9l-0.9 0.1M211.1 354l0 -0M202.2 367.5l9.7 5.9M211.1 354l-9.2 4.1M201.3 357.2l0.6 0.9M201.2 339.5l-1.7 4.8M201.2 339.5l-4 -1.5M199.6 344.3l-6.6 -1M196.5 334.6l0.7 3.3M192.6 344.7l0.4 -1.4M199.8 344.6l1.5 12.5M208.4 331.3l5.6 4.6M201.9 339.4l5.5 4.2M201.2 339.5l0.7 -0M201.9 319l7.7 5.4M209.6 324.4l-1.2 6.9M218.3 322.9l-5.1 0.2M199.8 344.6l7.6 -1M190.6 302.3l-3.3 3.8M193.5 304.5l1.1 3.9M191.2 312.9l-5.2 -2.2M187.3 306.1l-1.3 4.6M191.2 312.9l-8.8 1.6M186 310.6l-3.6 3.8M179.9 321l1.1 0.9M179.5 316.8l0.5 -0.7M179.9 316.1l2.5 -1.6M224.4 314.6l-3.5 -3.1M213.4 317.5l5 -5.5M220.9 311.5l-2.5 0.4M218.4 311.9l-11.8 -0.2M203.9 313.4l2.6 -1.6M206.6 311.8l0 0M306.2 289l6.4 4.1M312.7 295.9l-0.1 -2.8M300.8 297.7l0.9 3.2M313.3 297.1l-0.6 -1.2M282.8 348.8l5.3 -3.3M288.1 345.5l1.6 -4.7M278.4 345.4l0.5 -4.8M291.6 352.1l-3.5 -6.6M291.6 352.1l2.1 -0.4M297.1 343.1l-7.4 -2.2M267.9 339.3l9.7 0M273.4 347.9l5 -2.5M277.5 339.3l1.4 1.3M321.5 257.8l5.8 2.5M316.7 265.6l3.9 2.3M320.6 267.9l1.4 0.3M321.9 268.2l9 -0.6M331 267.6l0 -0M327.3 260.3l3.7 7.2M343.3 272.8l0.1 -2.4M333.5 274.2l-2.5 -5.9M337.3 266.5l-3.3 -0.7M334 265.9l-3 1.7M275.2 267.3l4 -7.6M278.2 267.6l4.6 -5.9M282.8 261.8l-3.2 -2.2M279.3 259.7l0.3 -0.2M306.4 250.9l-7.5 -3.2M299 247.7l2.5 7.2M306.9 261l-2.4 1.8M306.9 260.8l-5.5 -5.7M283.7 245l6.7 15.7M290.4 260.7l4.4 -4.7M294.9 255.6l-0 0.4M301.3 255.1l0.1 -0.2M310.6 246.4l3.6 -1.5M320.5 253.8l0.5 -2M321 251.7l-6.8 -6.9M298.8 231.5l6.2 -0.7M301.3 237.1l6 -0.8M307.3 236.3l2.3 -2.3M343.3 270.4l5.3 -6.9M337.3 266.5l9.2 -5.6M349.3 276.7l-1.3 -0.1M352.9 265.5l-1.7 -1.4M348.7 263.5l2.5 0.6M367.1 247.3l-4.2 2.9M361.7 258.6l-0.1 -0.1M362.9 250.2l-1.2 8.3M351.7 263.3l3.3 -9.6M351.7 263.3l5.9 -5.7M355 253.7l2.6 3.8M352.9 265.5l7 -7M351.2 264.1l0.5 -0.9M357.6 257.5l2.3 1M361.6 258.5l-1.7 0M289.4 382.9l0.4 0.2M289.4 382.9l-3.2 -9M289.8 383.1l7.5 -9.3M286.1 373.9l2.4 -1.6M288.6 372.3l9.1 -0.9M297.7 371.4l-0.4 2.4M283.7 385.2l5.7 -2.3M289.8 383.1l-0 -0M276.8 380.3l1.2 -4.7M276.8 380.3l1.7 2.6M285.4 373.8l0.8 0.1M297 381.2l0.2 -7.5M288.2 365.2l0.4 7M298.2 371l-0.5 0.3M256.6 340.1l-5.1 -3.1M263.6 336.6l-6.1 -5.5M251.4 337l6.1 -5.8M247.4 341.1l2.1 -4.1M240 338l6.2 -6.8M249.5 336.9l-3.3 -5.8M291.6 352.1l-2.2 4.4M298.2 362.3l-7.7 -2.6M289.4 356.5l1.1 3.2M282.5 364.4l3.8 -3.6M277.3 361.8l1.2 -2.4M288.2 365.2l2.3 -5.4M286.3 360.8l4.1 -1M290.5 359.8l0.1 -0.1M282.7 349.1l-1.2 1.3M281.6 350.4l-3 6.1M278.5 356.5l0.4 1.3M272.6 351l5.9 5.5M278.5 359.3l0.4 -1.5M240.5 306.5l0.1 -2.5M236.9 298.8l-5 -0.7M227.3 281.5l-4.9 6.2M270.3 286.6l-0.6 -1.1M269.6 285.5l-4.1 1.6M266.3 293l-0.8 -5.9M277 281.7l-1.8 -3.1M277 281.7l0.8 3.6M277.8 285.2l-6.9 1.9M270.9 287.1l-0.6 -0.5M269.6 284.4l0 1.1M275.7 276.1l-4.8 -3.5M266.3 281.3l3.3 3.1M266.3 281.3l-0 -4.8M266.2 276.5l4.6 -3.9M275.7 276.1l3.7 -1.2M278.2 267.6l1.2 7.2M270.9 272.6l-1.2 -3.6M284 289.3l3 -10.3M281.6 289.4l0.2 -6.8M281.8 282.6l3.8 -5.2M277.8 285.2l3.8 4.2M280 292.6l1.8 -2.7M280 292.6l-8.7 -4.9M284.4 274.8l1.2 2.7M300.8 297.7l-3.1 -1.9M306 287.9l0.3 1M306 287.9l-7.3 1.3M298.6 289.3l-0.8 3.9M287.1 289.7l3.7 -2.9M287.1 289.7l5.1 6.6M292.2 296.3l1.1 -7.5M290.8 286.8l1.6 -0.2M293.3 288.8l-0.6 -2M292.4 286.6l0.4 0.2M287.4 279.2l-0.4 -0.2M287.4 279.2l3.3 7.5M284 289.3l3.1 0.4M279.8 293.3l0.2 -0.7M279.8 293.3l7.6 8.2M287.4 301.6l0.7 0.1M288.1 301.6l4.2 -5.2M297.7 295.8l-5.4 0.6M297.8 293.1l-4.5 -4.4M294.7 279.9l-2.3 6.7M294.7 279.9l-2.1 -0.3M292.6 279.6l-5.1 -0.4M298.6 289.3l-1 -2.2M221.6 274.9l-4.4 -0.5M217.4 283.9l5 3.8M215.9 279.2l1.3 -4.8M210 268.7l3.7 3.6M216.3 272.1l-0.1 0.4M213.7 272.4l2.5 0.1M217.2 274.4l-1 -1.9M205.6 272.4l-7.6 2M197.9 274.4l4.1 4M195.6 272.4l-2 -6M195.6 272.4l0.8 1.4M193.5 266.4l0.8 -3.7M196.3 273.8l1.6 0.6M208.7 246.9l0.9 -3M203 239.4l5 3.1M209.6 243.9l-1.6 -1.4M208 242.5l5.6 -9.6M221.7 235.8l2.9 -0.6M224.9 243.2l7.5 5.6M232.3 243.1l1.1 1.5M232.3 243.1l-6.1 -7M226.2 236.1l-0.6 -0.1M233.3 244.6l-0.4 3.8M232.5 248.8l0.5 -0.4M237.4 239.1l-4.1 5.5M224.6 235.2l1 0.8M230.9 252l1.5 -3.2M179.1 269.5l-1.4 3.6M179.1 269.5l11.1 -0.6M190.3 269l-3.3 4.6M179.3 264.6l-0.2 4.9M176.9 274.2l0.9 -1M193.5 266.4l-3.2 2.6M170.4 237.7l-2.2 0.6M168.1 238.3l0 0.2M174.4 243.1l-6.2 -4.6M168.1 238.3l-2.9 -2.9M168.4 230.2l-3.2 5.2M159.6 243.1l3.1 -7.3M159.6 243.1l-3.1 3.4M155.1 245.7l-0.8 -7.5M154.3 238.2l5.5 -4.5M159.8 233.6l3 2.2M152.4 235.7l-0.3 -5.1M152.1 230.6l5.3 -1.1M159.8 233.6l-2.4 -4.2M151.2 230.3l0.9 0.4M156.5 304.3l9 -1.3M156.5 304.3l0.6 3.2M157 307.5l0 0.1M164.8 310.3l1.7 -0.8M165.4 303l2.4 5.6M166.5 309.5l1.4 -0.9M161.7 324.1l-7 -10.4M161.7 324.1l3 -13.8M154.7 313l0 0.8M154.7 313l2.4 -5.4M171.3 308.4l3 -4.9M171.3 308.4l-3.4 0.2M169.2 316.6l-2.6 -7.1M173.7 311.7l-2.4 -3.3M106.6 295l1.1 0.9M107.6 295.9l3.3 7.6M102.1 310.1l3.2 0.1M110.9 303.4l-5.6 6.7M113.3 284.9l5.7 2.5M107.6 295.9l4.4 -0.4M112 295.5l7 -8.1M119 287.4l3.8 1.4M135.5 288.3l-5 1.5M128.9 289.1l1.6 0.7M130.5 289.8l1.7 6.9M143.1 252.5l1 -4.1M144.1 248.4l1 -0.2M133.9 246.8l4.9 -1.7M144.1 248.4l-5.3 -3.3M147.2 331.8l-2 6.3M147.2 331.8l6.7 -2.7M145.3 338.2l7.9 2M153.2 340.1l0.4 -0.3M153.6 339.9l3.7 -11M161.7 324.1l0.2 1.1M165.8 325.4l-3.6 0.4M161.9 325.3l0.2 0.5M128.8 403l-8.6 -6.5M128.8 403l-0.4 -13.7M137.8 389.2l-9.5 0.1M128.8 403l-0 -0M126.2 376.7l-1.6 7.9M124.6 384.6l1.4 2.7M101.2 413.2l2.5 -7.6M99.8 402.3l3.2 0.2M103.7 405.6l-0.6 -3.2M111.3 389.1l0.3 0.1M169.7 362.6l8.6 -0.3M137.1 357.4l-10.1 3.3M127.1 360.7l-0.5 -0.7M139 365.2l0.1 -0.2M126 359.5l0.6 0.5M117.4 353.1l3.9 -4.7M121.3 348.4l-4.1 -5.5M121.6 348.4l5 -9.1M126.7 339.3l-0 -0M125.5 358l0.5 -8M133.2 353l-0.2 -0.5M127.7 349.6l5.3 2.9M127.7 349.6l-1.7 0.3M117.2 342.9l2.3 -7.9M120.1 334.8l6.5 4.6M171.6 395.2l-2.7 5.5M181.3 400.5l-2.7 3.1M171.6 394.4l0 0.8M177.2 388.9l-4.9 4.5M178.5 404.9l0.2 -1.3M167.2 406.6l-6.9 -3.6M168.3 403.3l-8.9 -3.9M167.1 411.3l0.2 -4.7M168.8 402.3l-0.5 1M154.5 409.1l5.8 -6.1M163.6 397.5l-4.2 2M199.1 372.4l-0.3 4.1M210.6 383.3l-6.3 -1.5M202.5 378.9l1.9 2.9M202.8 387.2l-0.7 -1.2M198.4 389.8l-1.3 -5M202.2 386l-5 -1.1M202.2 386l2.2 -4.1M170.8 338l5.2 1.5M176 339.5l3.6 0.1M183.5 334.1l-2.3 2.1M166 325.4l5.8 6.2M179.9 343.9l-0.3 -4.4M170.8 347.9l-0.9 -1.1M163.2 379.4l1.1 0.1M172.9 381.9l-1.2 0.5M169.7 362.6l-0.4 4M167.4 359.7l-5.3 2.7M169.3 366.6l-5.3 4.3M163.2 379.4l1.8 -6.7M164 370.9l1 1.8M159.5 369.2l-0.8 0.2M146.8 367.5l1.1 0.5M147.8 368l2.7 2.5M382 328.1l2.2 -0.3M386.3 316l1 8.3M387.3 324.2l-3.1 3.5M384.1 335.3l1.2 -6.5M384.1 335.3l-2.3 0.3M381.8 335.6l-1.9 -4.8M384.2 327.8l1.1 1M401.9 326.4l0.6 -1.7M357.3 292.2l-7.9 -4.9M357.9 293.9l-0.5 1.8M348.7 287.8l0.7 -0.4M357.3 287.2l0 5M369.6 286.6l-11.7 7.4M344.4 294.4l8.8 -1.1M352.1 299.4l5.3 -2.4M357.3 297l0 -1.2M344.2 289.4l4.5 -1.6M370.3 294.6l-0.2 0.1M357.3 297l2.5 2.1M371 308.6l-6.7 -2.6M372.9 321.7l-10.6 -3.1M406.8 389.1l-0.2 3.3M405.3 410.7l-1.5 -5.6M400.2 410.8l3.1 0.8M400.2 410.8l-2.2 -6.2M398 404.6l0.5 -0.6M403.8 405l-5.3 -1M398.5 369.5l-1.7 -4.1M398.5 369.5l4.4 4.7M402.9 374.1l2.9 -0.6M396.8 365.4l9.9 -9.7M396.6 343.8l1.4 2.7M398 346.5l5.8 7.6M393.6 350.8l1.1 4M393.6 350.8l-6 -1.4M388.1 355.1l-0.7 -5.6M388.1 355.1l2.9 1M391.1 356.1l3.6 -1.3M387.5 349.5l0.1 -0.1M403.9 354.1l-9.2 0.7M392.1 343l-3.2 2.4M388.8 345.8l-1.2 3.5M380.2 350.4l-1.5 2.1M380.2 350.4l3.1 -1M383.3 349.4l4.1 0.1M321.9 268.2l0.6 2.5M331 268.3l-6.8 7.4M318.5 285.7l0.1 -0.6M318.5 285.7l2.9 7.7M318.6 285.1l6.5 1.3M321.4 293.4l5 0.9M318.8 297.7l2.6 -4.2M312.6 293.1l5.8 -7.4M329.1 296.3l-2.7 -1.9M330.2 285.6l-5.1 0.8M306.1 286.8l-0.2 1.2M306.1 286.8l9.8 -4.6M318.6 285.1l-0.7 -1.7M316 282.2l1.9 1.2M331.4 279.7l-7.7 -1.9M317.8 283.4l5.8 -5.6M320.6 267.9l-0.6 5.7M322.5 270.7l-1.3 3.9M324.3 275.6l-0.6 1.5M324.5 322.7l3.7 -1.9M328.2 320.8l7 11.6M335.2 332.4l-1.9 1.5M326.1 342.5l6.7 -6.9M332.9 335.6l0.5 -1.7M328.2 320.8l0.1 -0.2M329.6 316.3l4.9 -2.2M345.4 312.3l-0 2.2M345.4 314.4l-10.7 -0.2M334.5 314.1l0.2 0.1M328.3 320.6l12.3 3.1M345.4 314.4l-0 -0M345.4 314.4l-0.3 2.8M341 322l4.2 -4.8M351 323.1l-5.9 -5.9M279.8 293.3l-8 7M271.3 287.8l-0.3 12.6M271.9 300.3l-0.9 -0M287.4 301.6l-8.2 4.9M271.9 300.3l7.3 6.1M299.6 326.3l-0.2 -10.7M307.1 312.4l-7.2 2.2M342.5 367.5l10 -1.6M342.5 367.5l1.2 5.3M345.3 373.4l7 -6M352.3 367.4l0.2 -1.5M340.8 360.8l-2 1.3M340.8 360.8l10.8 1.8M338.7 362.1l3.8 5.4M331.5 363.5l7.2 -1.3M331.4 371.9l6.6 2.3M338 374.2l5.6 -1.3M357.2 376.6l-4.9 -9.2M357.2 376.6l5.3 -2.2M363.1 372.7l-0.6 1.7M338 374.2l3.2 9.4M345.3 373.4l1.4 3.4M341.2 383.6l5.5 -6.8M357.2 376.6l-1.2 2.7M356 379.3l-3.4 0.5M346.7 376.8l5.9 3M346.5 346.2l-2.9 -2.7M346.5 346.2l-0.2 0.4M346.3 346.6l-10.6 1.8M343.7 343.5l-5.5 0.9M338.1 344.4l-2 1.5M336.1 346l-1 2.1M335.2 348l0.6 0.3M351.2 340.2l-6.7 -1.7M344.5 338.4l-0.9 5.1M332.9 335.6l3.3 10.4M344.6 350.5l-3.2 1.8M344.6 350.5l2.5 1.5M348.5 355.1l-1.4 -3M342 356l-0.6 -3.7M335.7 348.3l5.7 4M352 357l-3.5 -2M354.3 334.2l0.3 2.1M354.3 334.2l1.8 -2.8M362.8 332.6l-3.5 5.2M358.2 338.1l1.1 -0.3M368.1 336.8l-3.9 -4.3M364.1 332.5l-1.4 0.1M353.6 337.9l1.1 -1.5M367.5 344.2l3 -4.9M370.5 339.4l-0.9 -1.8M365.8 327.4l-1.6 3.2M364.2 330.6l-7 -3.9M357.3 322.5l-0.1 4.2M372.4 325.8l-6.6 1.6M357.2 322.1l0.1 0.4M357.8 320.4l4.5 -1.8M372.8 327.1l-3.2 10.4M364.1 332.5l0.1 -1.9M356.1 331.4l1 -4.7M339.5 392.2l1.6 -5M333.7 393.8l-5.2 -5.7M333.7 393.8l2.6 1.1M329.1 387.7l-0.6 0.4M329.1 387.7l9 -1.6M341.1 387.2l-0.4 -0.5M327.2 388.5l1.3 -0.4M325.6 396.9l8.1 -3.1M330.2 380.3l-1.2 7.4M331.7 377.5l6.3 8.6M341.2 383.6l-0.5 3.1M337.5 406.3l3 1.9M337.5 406.3l-0.8 -4.7M340.5 408.2l0 -0M328 405.9l9.6 0.4M335.5 397.5l1.2 4.1M341.7 395.7l-2.2 -3.5M234.6 341.8l-6.8 -4.2M227.8 337.6l5.6 -2.2M236 343.4l-1.4 -1.6M238.9 338.3l-3 -6.3M235.3 332.3l-1.9 3.1M223.9 336.7l3.9 0.9M235.5 369.2l-1.3 -5.6M235.5 369.2l4.1 -2.7M234.2 363.6l0.2 -0.3M228.7 366.2l5.5 -2.6M234.4 363.2l-0 0.1M236.9 362.6l5 3.7M236.9 362.6l5.8 -3.8M242.7 358.8l0.1 7.6M241.9 366.3l0.9 0.1M234.4 363.2l2.5 -0.6M239.6 366.6l2.4 -0.3M245.1 353.2l-2.4 5.6M244.2 368.3l-1.3 -1.8M213.1 398.1l0.1 0.1M223.9 386.9l-3.9 10.8M220 397.6l-5.9 0.7M214.1 398.4l-1 -0.2M203.1 409l9.4 -9.8M212.5 399.2l0.6 -1M237.3 406.4l-1.8 1.5M233.2 413l2.3 -5.1M260.9 378l-5.5 1.1M254.1 378.6l1.2 0.5M263.5 383.2l-2.5 -5.2M263.5 383.2l-7.8 5.6M255.4 379.1l0.3 9.8M177.9 301.9l3.2 7.4M177.9 301.9l6.3 5.5M184.1 307.4l-3 1.9M177.8 301.8l0 0.1M189 299.3l-6.1 -1.8M187.3 306.1l-3.2 1.3M205 291.6l-1.4 1.8M205 291.6l4.2 3.6M208.8 300.6l0.5 -5.3M205 291.6l0.1 -0.3M208.8 289l-2.3 -0.1M208.8 289l7.4 5M209.3 295.2l6.9 -1.2M217.4 283.9l-2.5 0.6M216.9 294.3l-0.8 -0.3M201.4 304.6l4.9 -2.8M201.4 304.6l5.1 6M206.6 310.6l2.2 -8.2M206.4 301.8l2.4 0.6M197.3 303.1l4.1 1.5M201.6 299l4.8 2.8M206.6 311.8l-0 -1.2M201.7 294.7l1.9 -1.3M208.8 300.6l0.4 1.5M304.5 262.9l-1 1.7M313 271.4l-7 -1.6M282.8 261.8l5.8 1.9M284.4 274.8l2.6 -3.9M287 270.9l1.6 -7.2M292.6 279.6l-1 -6.5M287 270.9l4.7 2.3M297.8 256.7l-3 -0.6M303.5 264.5l-2.6 0.8M300.8 265.4l-7.2 -0.5M293.6 264.9l-4.3 -1.7M279.5 248l-1.6 3.6M279.6 259.5l-1.7 -7.9M289.4 263.2l-0.8 0.4M297.7 247.1l-0.2 -0.4M297.5 246.7l3.1 -5.6M300.6 241.1l5.3 0.8M307.5 244l-1.6 -2M299 247.7l-0.2 -0.1M294.9 255.6l2.8 -8.5M296.5 246.3l1 0.4M300.5 240.8l0 0.3M306.9 239.5l0.4 -3.2M306.9 239.5l-1 2.5M359.7 239.1l-1.8 -1.7M257.5 330.9l-11.6 -1.4M257.5 330.9l0.9 -9.2M257.8 321.6l-12.8 5.8M245 327.4l0.9 2.1M257.5 331.1l-0.1 -0.2M246.2 331.2l-0.3 -1.7M266.3 337l0.9 -1.9M249.3 316.9l5.3 1.5M260.3 309.9l-5.8 -0.7M254.6 318.4l-1.3 -7.9M254.5 309.2l-1.3 1.3M249.3 316.9l0.6 -6M253.2 310.5l-3.4 0.4M242.4 310.2l4.3 -0.4M240.5 304.1l0.8 -0.4M236.9 298.8l6 -7.6M241.4 303.7l6.9 -7.7M260.2 267.1l9.5 1.8M260.2 267.1l3.5 -12.9M263.8 254.2l1.3 0.5M266.2 276.5l-2.2 -0.4M269.7 268.9l-0 -0M258.8 267.9l0.2 3.2M258.4 267.8l0.4 0.1M277.9 251.6l-12.8 3.1M207.3 275l-0.6 7.9M207.3 275l0.3 0M207.6 275.1l3.7 3.9M208.8 282.3l-2.1 0.7M205.7 283.9l1 -0.9M202 279.4l0 -1M207.1 274.9l0.2 0.1M213.7 272.4l-6.1 2.7M205.7 283.9l-0.4 1.6M206.5 288.9l-1.2 -3.4M212 253l1.9 -5.2M209.6 243.9l0 -0M209.6 243.9l4.2 3.9M221.4 250.6l-1.3 -1.4M221 246.6l-0.8 1.6M220.2 248.2l-0.1 1M220.1 249.2l-1.3 0.5M213.9 238.6l-1.1 4.1M213.9 238.6l5 1.3M218.6 240.6l0.4 -0.8M218.6 240.6l-4.7 2.2M214.4 233.6l-0.5 5M209.6 243.9l3.2 -1.3M221.7 235.8l-2.7 4M221 246.6l-2.4 -6M162.9 242.9l4.7 -0.5M162.9 242.9l7.1 5.1M167.5 242.4l2.6 4.8M170 248l0.2 -0.7M168.1 238.5l-0.6 3.9M157.2 247.9l-0.7 -1.5M168.2 255.9l1.7 -7.9M174.4 243.1l-4.2 4.2M168.4 230.2l-0.1 -0.2M176.9 274.2l0.7 0.9M177.5 275.1l1.6 6.3M120.5 296.7l8.3 11.2M120.9 294.9l5.8 2.7M126.7 297.6l4.3 2.9M128.8 307.9l2.2 -7.4M110.9 303.4l5.4 2.2M112 295.5l8.5 -0.1M116.3 305.7l4.2 -8.9M131.4 300.1l-0.3 0.4M114.8 313.8l1.9 -7.6M114.8 313.8l12.7 -1M127.5 312.8l1.9 -3.2M128.8 308.5l0.6 1M105.3 310.2l7 8.1M112.3 318.3l2.5 -4.5M110.3 332l-0.6 -10.1M108.2 346.2l-3.9 -10.5M119.5 335l-9.2 -3.1M112.3 318.3l0 0.5M140.2 241.7l4.6 -0.2M144.8 241.5l1.9 -4.3M140.3 237.5l2.4 -3.9M146.7 237.2l-3.3 -3.5M138.8 245l1.4 -3.3M151.2 230.3l-7.8 3.5M148 243.1l2.3 2.6M148 243.1l-1 -5.7M150.3 245.8l2.4 0M154.3 245.7l-1.6 0.1M145.1 248.2l5.2 -2.4M155.1 245.7l-0.8 -0.1M148.3 253.3l4.4 -7.5M132.9 310.5l9.8 -10.1M145.7 302.8l-0.3 -0.4M142.5 296.9l0.3 3.5M142.8 300.4l-0.2 0.1M161.9 325.3l-12.3 -4.9M148.1 317.8l1.6 2.6M154 329.1l-6.2 -4.8M157.4 328.8l4.7 -2.8M162 326l0.1 -0.3M147.2 331.8l-5.2 -5.8M147.8 324.3l-5.8 1.8M107.8 391.3l-2.9 8.5M103.4 401.6l1.4 -1.7M103.1 402.5l0.3 -0.9M115.2 399.6l-5.6 1M115.4 407.5l-0.6 -0.2M116.9 395.9l-1.7 3.8M104.8 399.9l4.8 0.7M116.1 408.3l-0.7 -0.8M103.7 405.6l11.1 1.7M161.2 352.9l1.1 -4.9M164.5 353.7l0.9 -6.5M159.2 353l0.1 7.1M159.2 353l2 -0.2M162.1 362.5l-2.7 -2.3M151.3 349.8l2.1 1.1M148.5 357.8l2.2 0.8M148.5 357.8l-2.8 3.5M145.7 361.3l1.9 1.4M147.6 362.7l3.1 0.4M150.7 363.1l0.9 -0.1M151.6 359.5l-0.9 -0.9M147.5 350.3l3.8 -0.4M153.4 351l-2.7 7.6M143.5 356.9l3.4 -3.7M145.6 361.3l0.1 0M146.6 367.3l1 -4.6M150.5 370.4l1.2 -7.5M156.1 351.8l0.4 0.3M138.6 355.5l-0.8 -5.7M138.6 355.5l3.7 -3.8M142.3 351.7l-4.5 -1.9M137.9 357.2l0.7 -1.7M147.5 350.3l-0.9 -0.5M146.7 349.8l-4.4 1.9M146.7 349.8l-3.8 -5.6M137.8 349.8l-0.2 -0.3M144.2 338.8l1 -0.6M144.2 338.8l-1.7 4.2M153 342.9l0.2 -2.8M142.6 342.9l0.3 1.2M189 381.8l-1.8 -3.2M198.8 376.5l-0.4 0.4M197.2 384.9l-0.9 -0.7M186.8 378.4l0.3 0.2M178 382.6l3.1 -4.3M189.9 392.7l6.2 -8.4M168.5 374.3l5.5 -3.6M168.5 374.3l1.4 2.6M172.9 381.9l-2.5 -4.5M178.3 371.3l-1.7 -0.1M167.7 345.2l0.9 -3.8M161.3 341.8l0.2 0.8M161.5 342.5l0.1 0.1M168.1 338.3l-3.8 -2M162.3 348l-0.8 -5.3M165.4 347.3l1.4 -2.1M169.9 346.8l-2.2 -1.6M171.7 342.3l-3.1 -0.9M158.5 346.1l3 -3.6M153.6 339.9l7.6 1.9M170.8 338l-2.7 0.4M159.2 353l-2.7 -0.8M153.1 363.1l1.4 0.5M153.1 363.1l2.2 -5M154.5 363.6l2.3 -3M158.6 369.4l-4.2 -5.8M159.3 360.2l-2.6 0.5M389.3 327.3l0.1 2.8M389.3 327.3l4.4 -1.9M396.6 327.7l-2.9 -2.3M396.6 327.7l-6.1 5.4M390.5 333.1l-1.1 -3M387.3 324.2l2 3M399.3 327.6l-2.7 0.1M390.4 333.8l0.1 -0.7M361.3 303.5l-7.8 4.2M362.2 309.1l-6.6 3.5M353.5 307.7l2.1 4.9M364.3 306.1l-0.1 -0M362.9 317.2l-0.8 -8.1M355.3 315.3l0.3 -2.7M392.1 393.1l-1 0.8M392.1 393.1l6.4 3.4M390.7 397.7l7.3 3.1M398 400.8l0.8 -1.8M398 404.6l-3.7 2.2M390.5 397.9l0.2 -0.2M390.5 397.9l-0.5 5.5M390.1 403.5l4.2 3.4M390.5 397.9l-3.7 0.6M356 379.3l4 8.2M379.4 372.7l-2.6 6.7M366.4 376.9l8.5 3.2M376.8 379.4l-1.9 0.6M402.9 374.1l-1.2 2.2M401.7 376.3l-9.1 -1.7M392.6 359.7l4.1 5.6M392.6 359.7l-6.5 4.1M396.6 365.4l-10.7 2.9M386.1 363.8l-0.1 4.4M396.8 365.4l-0.1 -0M385.3 357.6l0.7 6.3M383.1 371.6l2.9 -3.3M383.1 371.6l7.3 4.4M390.4 375.9l2.3 -1.4M380.5 344.4l0.3 -5.1M376.3 346.1l2 0.3M376.3 346.1l-4.7 -6.6M371.6 339.6l8.6 -1.6M380.2 337.9l0.6 1.3M373.1 351.7l3.2 -5.6M381.8 335.6l-1.6 2.3M397.9 413.1l-0.5 -0.1M400.2 410.8l-2.2 2.3M393.7 408.3l3.7 4.7M393.7 408.3l-2.4 2.1M349.4 403.6l1.6 -5.7M349.4 403.6l-4.7 1.7M349.8 396.8l-5.3 -9M352.6 379.8l-6.1 7.3M344.5 387.8l2 -0.7M313 271.4l0.1 1.3M320 273.6l-6 2.2M313.1 272.7l0.8 3.1M316 282.2l-2 -3.3M314 275.8l0 3M337.4 332.1l3.2 4M337.4 332.1l4.2 -4.7M341.6 327.4l4.2 0.4M344 337.6l5.3 -5.6M344 337.6l-3.3 -1.6M349.2 332l-3.5 -4.3M335.2 332.4l2.2 -0.3M338.1 344.4l2.5 -8.4M340.7 323.7l0.9 3.7M351 323.1l-5.2 4.7M344.5 338.4l-0.6 -0.8M286.9 317l-1.7 -5.1M286.9 317l-4.1 3.3M285.2 311.9l-5.8 -0.6M278.6 312.9l-0.4 6.8M278.3 319.7l4.5 0.6M288.8 317l-1.9 0M288.8 317l0.1 7.9M294.3 327.8l-3.8 -1.1M292.2 316.1l-0.3 -0.4M276.5 320.9l-1.1 5.3M276.5 320.9l-6.5 -1M269.5 320.1l0.5 -0.2M269.5 320.1l-0.9 6.8M275.5 326.2l-6.2 3.1M268.6 326.9l0.6 2.4M259 321.5l9.6 5.4M267.4 332.7l1.8 -3.4M269.3 312.1l-4.9 -0M269.3 312.1l0.6 -0.6M269.1 300.8l1 -0.4M270.1 300.4l0.3 0M262 312.6l2.4 -0.6M270 319.9l-0.8 -7.8M278.6 312.9l-8.7 -1.3M278 319.9l-1.5 1M279.2 306.4l0.3 4.9M265.8 294.1l4.4 6.4M265.8 294.1l0.5 -1.1M290 304.4l-2.5 6.7M287.5 311.1l4.5 3.2M298.6 306l-2.5 1.5M288.1 301.6l1.9 2.8M291.9 315.7l-0 -1.5M285.2 311.9l2.2 -0.8M266.7 385.3l5.5 -2.5M266.7 385.3l-0.6 -0.5M266.1 384.8l1.9 -6.7M272.8 382.3l-0.6 0.5M268.5 378l-0.5 0.1M267 394.4l-0.3 -9.1M275.4 395.6l-3.2 -12.9M263.5 383.2l2.6 1.6M262.1 375.7l5.9 2.4M272.2 372.6l-3.6 5.5M249.3 369l-1.7 9.8M247.6 378.8l2 0.5M247.6 378.8l-3.7 1.1M216.6 295.3l-6.1 6.5M216.6 295.3l3.9 11.8M220.5 307.1l-0.3 1.2M209.2 302l1.3 -0.2M228 294.9l0.3 0.6M228.3 295.5l-7.8 11.6M231.9 298.1l-3.7 -2.6M352.7 238.8l5.2 -1.3M346.5 261l-0.9 -1.8M355 253.7l-0 -0.1M345.6 259.2l9.4 -5.6M362.9 250.2l-7.6 0.8M351.2 248l4.1 3.1M355.3 251l-0.3 2.6M300.8 265.4l-0.4 1.9M300.5 267.3l-2.4 8.4M291.6 273.1l6.5 2.7M327.3 260.3l3.8 -4.2M321 251.7l2.1 -1.2M332.1 249.6l-4.9 0M347.3 237.2l1.9 -7M347.3 237.2l-7.8 8.1M352.7 238.8l-5.5 -1.6M339.5 245.3l-0 -0M339.5 245.3l2.5 2.5M342 247.8l7.6 -0.1M337.2 242.3l1.8 2.2M241.2 285.9l1.8 3.2M265.8 294.1l-5.6 -2.8M260.1 291.3l0 -3M266.3 281.3l-8.9 1.9M260.1 288.2l-2.7 -5M262.4 302.7l0.2 -0.3M260.1 291.3l-4.3 4.9M262.6 302.4l-6.8 -6.3M187.5 278.6l-0.1 0.2M187.5 278.6l0.6 -0.1M195.8 283.3l-0.3 1.7M195.5 285l-1.1 1.4M194.5 286.4l-0.9 0.8M187 273.6l0.5 5M177.5 275.1l7.9 4.7M185.5 279.8l1.9 -1M195.6 272.4l-7.5 6.1M196.3 273.8l-1.5 5.4M202 279.4l-6.2 3.9M205.3 285.5l-9.8 -0.5M205.1 291.4l-10.6 -5M193.7 292.7l-0.1 -5.5M183.9 289.7l-2.1 -4.8M183.9 289.7l3.1 -3.1M187 286.7l-2.6 -4M184.3 282.7l0.1 -0M193.6 287.2l-6.6 -0.5M179.1 281.4l5.2 1.3M121 333.4l-7.5 -14.3M121 333.4l3.7 -4.4M124.7 329.1l-3 -8.5M113.4 319.2l8.3 1.4M120.1 334.8l0.8 -1.3M127.5 312.8l-1 2.8M126.5 315.5l-4.8 5M148.1 317.8l-1.3 -0.5M142 326.1l-0.7 -0.3M135.5 349.7l-3.7 -4.8M135.5 349.7l0.9 -0.3M136.4 349.4l-0.4 -6.4M136.1 343.1l-3.2 -0.9M132.8 342.2l-1.1 2.7M127.7 349.6l4 -4.7M133 352.5l2.5 -2.8M137.6 349.6l-1.2 -0.2M142.6 342.9l-6.5 0.1M144.2 338.8l-2.9 -2.1M131.7 340.1l0.7 -1.5M131.7 340.1l1.1 2.1M141.3 336.7l-8.9 2M131.7 340.1l-5 -0.8M391.3 410.4l-6.4 2M362 390.6l-1.9 -2.7M362 390.6l-3.3 3M360.1 387.9l-10.9 0M349.2 387.9l5.5 7.5M358.7 393.6l-4 1.8M346.4 387.1l2.7 0.8M350.9 397.9l3.7 -2.5M392.1 393.1l1.4 -2.3M398.5 396.5l0.9 -2.2M393.5 390.9l0.3 -0.1M393.8 390.7l3.6 -1M397.4 389.7l2 4.6M399.4 394.3l7.1 -1.9M359.6 406.7l0.8 0.6M349.4 403.6l0.4 0.3M358.7 393.6l0.9 13.1M367.5 406.3l-7.1 1M285.8 328.6l-3.5 -1.3M285.8 328.6l-3.2 4.4M282.6 333l-4.2 -0.5M278.4 332.5l-0.6 -0.7M277.8 331.8l-0.1 -0.9M290.5 326.8l-4.7 1.8M287.1 339.3l-4.5 -6.3M275.5 326.2l2.2 4.8M267.2 335.1l10.6 -3.2M213.6 405.5l3.3 0.8M214.1 398.4l3.2 6.9M212.5 399.2l1.1 6.3M217.2 405.3l-0.3 1M219.1 405.2l3 3.9M219.1 405.2l4.7 -4.6M223.8 400.6l1.4 0.7M224.2 406.1l1 -4.8M224.2 406.1l-2.1 3M225.1 401.3l0 0M217.2 405.3l1.8 -0.1M221.9 409.5l0.1 -0.4M220 397.6l3.8 3M230 396.7l-4.9 4.6M233.2 413l-9 -6.9M235.5 407.9l-10.3 -6.6M250.9 384.2l4.5 5.4M255.1 391.1l0.3 -1.6M255.1 391.1l-7.5 -1.9M255.7 388.8l-0.3 0.7M244.6 391l3 -1.8M342.3 250.5l-7.4 8.5M335.5 262.8l-0.5 -3.8M345.6 259.2l-1.1 -1.4M334 265.9l1.4 -3.1M332.1 249.6l7.4 -4.3M306 269.8l-2.2 4.3M303.8 274.1l-1.1 0.5M298.1 275.8l0.7 1.2M306.1 286.8l-3 -4.6M297.6 287.1l2.5 -6.4M303.2 282.2l-3.1 -1.5M294.7 279.9l3.9 -1.5M300.1 280.7l-1.5 -2.3M323.1 250.5l0 -9.5M327.2 249.6l-1.5 -9.9M337.2 242.3l-8.7 -5M325.7 239.7l2.8 -2.4M327.6 234.9l0.9 2.4M239.4 276.5l1.8 3.5M241.2 285.9l0.6 -1.5M241.2 279.9l0.5 4.5M251.5 297.3l1.4 -0M252.8 297.3l0.7 7.7M247.6 302.9l1.9 2.4M249.4 305.3l4.1 -0.2M253.5 305.1l0 -0.1M248.3 296l3.2 1.3M243 289.2l8.4 -1.4M251.4 287.7l3.2 8.6M254.5 296.3l-1.7 1M246.7 309.7l2.7 -4.4M136.1 312.7l2.9 0.7M139 313.4l1.8 12.4M134.9 328.1l-0.8 -0M134.2 328.1l-0.4 -0.2M132.9 310.5l3.2 2.1M126.5 315.5l7 10.7M141.3 336.7l-6.4 -8.6M132.5 338.7l1.7 -10.6M145.6 315.9l-4.9 -2.8M140.7 313.1l4.9 -6.5M149.4 311.3l-1.3 -2.7M146.7 317.3l-1.1 -1.4M139 313.4l1.7 -0.2M145.7 302.8l-0.2 3.8M157 307.5l-8.9 1.1M391 383l0.7 5.7M391 383l-7 2.7M391.7 388.7l-7.5 -2.4M384 385.7l0.2 0.6M393.8 390.7l-0.2 -9.6M393.5 381.1l0.1 0M393.5 381.1l-2.5 1.9M376.8 379.4l0.7 1M390.4 375.9l3.1 5.2M377.5 380.4l6.6 5.3M400.9 388.5l-2.4 -0.1M398.5 388.4l-1.8 -7.1M403.9 382.9l-3.3 -3.7M403.9 382.9l-0.1 1.4M400.6 379.2l-3.9 2.2M406.5 392.4l-5.6 -3.9M406.8 389.1l-3.1 -4.8M401.7 376.3l-1.2 2.9M306 275.3l3.7 3.5M309.7 278.7l-3.5 1.5M313.1 272.7l-7.1 2.5M314 278.8l-4.3 -0.1M303.8 274.1l1.6 0.9M303.2 282.2l3.1 -2M321.6 240.8l-1.5 -7.2M321.6 240.8l-6.5 0.9M315.1 241.6l-1.1 -6.6M314 235l3 -2.6M317 232.3l3.1 1.3M327.6 234.9l-7.5 -1.3M323.1 241l-1.5 -0.2M314.2 244.9l0.9 -3.1M306.9 239.5l8.2 2.1M310.3 233.9l3.7 1.1M250.4 275.7l5.1 3.9M248.6 276l-2.2 6M246.5 282l9.5 0.6M256.3 282.2l0 0.2M256.3 282.4l-0.3 0.2M251.7 269.9l-1.2 5.7M247.1 275.4l1.6 0.6M259 271.2l-3.4 8.4M241.8 284.4l4.7 -2.4M251.4 287.7l4.6 -5.2M264.1 276.1l-7.8 6.1M257.4 283.2l-1.1 -0.8M377.7 400.7l5.8 -3.4M377.7 400.7l4.2 6.7M383 406.2l-1.1 1.2M384.3 398.1l-0.8 -0.8M386.5 404.3l-3.5 1.9M384.8 391l-2 2.6M374.2 398.6l2.6 -4.6M374.2 398.6l-4.9 1.4M376.5 393.1l0.3 0.9M376.5 393.1l-9.9 -4.9M362.8 390.7l3.8 -2.4M377.7 400.7l-3.5 -2.2M362 390.6l0.8 0.1M367.5 406.3l1.8 -6.4M377.5 380.4l-0.9 12.7M374.9 380.1l-8.2 8.2M378.8 409l-1.3 0.3M381.8 408.2l-3 0.8M374.1 409.1l3.4 0.1" stroke="#ccc440" stroke-width="0.45" fill="none" opacity="0.75"/>
<path d="M251.7 240C253.8 244.1 260.6 258.1 264 264.8C267.4 271.5 270.8 272 271.9 280.3C272.9 288.6 272.1 304.6 270.3 314.4C268.5 324.2 264.6 331.4 261 339.2C257.4 347 251.2 350.9 248.6 361C246 371.1 246 393.5 245.5 400" stroke="#48c4bc" stroke-width="1.3" fill="none" stroke-linejoin="round" stroke-linecap="round" opacity="0.85"/>
<path d="M131 244C130.7 249.8 128.6 270.9 129.4 278.8C130.2 286.7 132.9 287.1 135.6 291.2C138.3 295.3 142.5 299.6 145.7 303.7C148.9 307.8 150.1 310.3 155 316C159.9 321.7 171.7 334.3 175 338" stroke="#48c4bc" stroke-width="1.3" fill="none" stroke-linejoin="round" stroke-linecap="round" opacity="0.85"/>
<path d="M112 327.8C116.8 328.9 132.3 333.2 141 334.7C149.7 336.2 155.2 337 164.3 337C173.4 337 187 335.9 195.4 334.7C203.8 333.5 205.9 332.4 215 330C224.1 327.6 244.2 321.7 250 320" stroke="#48c4bc" stroke-width="1.0" fill="none" stroke-linejoin="round" stroke-linecap="round" opacity="0.85"/>
<path d="M112 362.7C115 363.4 122.8 366.2 130.2 366.6C137.6 367 148.3 366.8 156.6 365C164.9 363.2 173.2 358.5 179.9 355.7C186.6 352.9 191.2 350.6 197 348C202.8 345.4 212 341.3 215 340" stroke="#48c4bc" stroke-width="1.0" fill="none" stroke-linejoin="round" stroke-linecap="round" opacity="0.85"/>
<path d="M112 382C114.2 381.2 119.4 378.5 125.5 377.5C131.6 376.5 141.1 375.8 148.8 376C156.6 376.2 163.5 377.2 172 379C180.5 380.8 190.3 383.6 200 386.8C209.7 390 225 396.1 230 398" stroke="#48c4bc" stroke-width="1.3" fill="none" stroke-linejoin="round" stroke-linecap="round" opacity="0.85"/>
<path d="M324 240C323.2 243.4 322 255.2 319.4 260.5C316.8 265.8 312.8 267.3 308.3 271.5C303.8 275.7 297.3 281.5 292.6 285.7C287.9 289.9 285.1 293.3 280 296.7C274.9 300.1 265 304.4 262 306" stroke="#48c4bc" stroke-width="1.0" fill="none" stroke-linejoin="round" stroke-linecap="round" opacity="0.85"/>
<path d="M300 263C304 263.1 316.3 263.2 324 263.6C331.7 264 339.4 263.4 346 265.2C352.6 267 357.7 270.1 363.5 274.6C369.3 279.1 375.7 286.8 380.8 292C385.9 297.2 391.8 303.7 394 306" stroke="#48c4bc" stroke-width="1.0" fill="none" stroke-linejoin="round" stroke-linecap="round" opacity="0.85"/>
<path d="M310 282C312.9 283.4 320.4 286.9 327.2 290.4C334 293.9 344.1 298.8 350.9 303C357.7 307.2 363 311.8 368.2 315.6C373.4 319.4 379.7 324.3 382 326" stroke="#48c4bc" stroke-width="1.0" fill="none" stroke-linejoin="round" stroke-linecap="round" opacity="0.85"/>
<path d="M262 333C268.3 332.8 289.1 332.3 300 332C310.9 331.7 318.5 330.8 327.2 331C335.9 331.2 344.9 333.6 352.4 333.4C359.9 333.2 365.1 332.6 372 330C378.9 327.4 390.3 320 394 318" stroke="#48c4bc" stroke-width="1.0" fill="none" stroke-linejoin="round" stroke-linecap="round" opacity="0.85"/>
<path d="M290 386C291.8 385 295.6 382.1 300.5 379.8C305.4 377.5 311 374.9 319.4 372C327.8 369.1 342.2 365.1 350.9 362.5C359.5 359.9 364.1 358.6 371.3 356.2C378.5 353.8 390.2 349.4 394 348" stroke="#48c4bc" stroke-width="1.0" fill="none" stroke-linejoin="round" stroke-linecap="round" opacity="0.85"/>
<path d="M112 300C115 301.7 123.7 307 130 310C136.3 313 142.5 316 150 318C157.5 320 166.7 321.7 175 322C183.3 322.3 195.8 320.3 200 320" stroke="#48c4bc" stroke-width="1.0" fill="none" stroke-linejoin="round" stroke-linecap="round" opacity="0.85"/>
<ellipse cx="126" cy="378" rx="6" ry="2.2" fill="#58c8c8" opacity="0.9"/>
<path d="M350.9 335C352.2 335.9 356.6 337.8 358.7 340.5C360.8 343.2 361.4 348.4 363.5 351.5C365.6 354.6 368.9 356 371.3 359.4C373.7 362.8 376 367.3 377.6 372C379.2 376.7 381.9 383.8 380.8 387.7C379.8 391.6 372.9 394.3 371.3 395.6" stroke="#e0d848" stroke-width="1.3" fill="none" stroke-linejoin="round" stroke-linecap="round" opacity="0.95"/>
<path d="M114 290C118.3 289.2 130.7 288.3 140 285C149.3 281.7 160.8 275.8 170 270C179.2 264.2 189.2 254.3 195 250C200.8 245.7 203.3 245 205 244" stroke="#d8d040" stroke-width="1.0" fill="none" stroke-linejoin="round" stroke-linecap="round" opacity="0.9"/>
<path d="M140 244C141.7 247 145.8 255.2 150 262C154.2 268.8 160.3 277.8 165 285C169.7 292.2 172.2 299.2 178 305C183.8 310.8 196.3 317.5 200 320" stroke="#d0d040" stroke-width="0.9" fill="none" stroke-linejoin="round" stroke-linecap="round" opacity="0.9"/>
<path d="M114 360C117.5 358.3 127.3 355 135 350C142.7 345 150.8 336.7 160 330C169.2 323.3 180.8 315 190 310C199.2 305 210.8 301.7 215 300" stroke="#d0cc40" stroke-width="0.8" fill="none" stroke-linejoin="round" stroke-linecap="round" opacity="0.85"/>
<path d="M358.7 386.1 L379.2 373.5" stroke="#1a1a1a" stroke-width="0.6"/>
<path d="M281.6 288.8C282.4 290.1 284.5 293.6 286.3 296.7C288.1 299.8 292.1 304.3 292.6 307.7C293.1 311.1 289.9 315.4 289.4 317" stroke="#6a72a8" stroke-width="1.6" fill="none" stroke-linejoin="round" stroke-linecap="round" opacity="0.9"/>
<path d="M195.7 300C195.2 303.4 193 314.8 193 320.5C193 326.2 195 329.8 195.7 334.4C196.4 339 195.7 343.8 197.4 348.4C199.1 353 203.1 359.4 206 362.3C208.9 365.2 213.4 365.2 214.9 365.8" stroke="#c8a890" stroke-width="1.6" fill="none" stroke-linejoin="round" stroke-linecap="round" opacity="0.95"/>
<path d="M199 336C201.1 337.5 207 342.7 211.4 344.9C215.8 347.1 220.7 347.8 225.3 349.2C230 350.6 234.7 352.1 239.3 353.6C244 355.1 249.4 356.3 253.2 358C257 359.7 258.2 361.1 262 364C265.8 366.9 273.6 373.5 275.9 375.4" stroke="#d2b49c" stroke-width="2.2" fill="none" stroke-linejoin="round" stroke-linecap="round" opacity="0.95"/>
<path d="M211.4 344.9C213.7 345.6 220.7 347.8 225.3 349.2C230 350.6 234.7 352.1 239.3 353.6C244 355.1 249.4 356.3 253.2 358C257 359.7 260.5 363 262 364" stroke="#c04a24" stroke-width="0.7" fill="none" stroke-linejoin="round" stroke-linecap="round" opacity="0.9"/>
<path d="M231.2 263.3C233.3 262.3 238.7 266.9 242 268C245.3 269.1 249.5 268.9 251.3 270.2C253.1 271.5 254.5 274 252.9 275.7C251.3 277.4 245.4 279 242 280.3C238.6 281.6 234.8 284.4 232.7 283.4C230.6 282.3 229.8 277.4 229.6 274C229.3 270.6 229.1 264.3 231.2 263.3Z" stroke="#bcb68c" stroke-width="1.7" fill="none" stroke-linejoin="round" stroke-linecap="round" opacity="0.95"/>
<path d="M236 270C237.3 270.7 243.3 272.5 244 274C244.7 275.5 241.7 278 240 279C238.3 280 235 279.8 234 280" stroke="#6a70a0" stroke-width="1.0" fill="none" stroke-linejoin="round" stroke-linecap="round" opacity="0.9"/>
<path d="M249 253C249.5 253.7 251.5 256.3 252 257" stroke="#6a70a0" stroke-width="1.4" fill="none" stroke-linejoin="round" stroke-linecap="round" opacity="0.8"/>
<path d="M226.5 292.7C224.3 290.8 217.4 290.3 214 290.5C210.6 290.7 208.1 291.9 206 294C203.9 296.1 201.7 300.2 201.5 303C201.3 305.8 202.9 309.3 205 311C207.1 312.7 211 312.9 214 313C217 313.1 220.8 313.3 223 311.5C225.2 309.7 226.4 305.1 227 302C227.6 298.9 228.7 294.6 226.5 292.7Z" stroke="#d24a1c" stroke-width="2.6" fill="none" stroke-linejoin="round" stroke-linecap="round" opacity="0.95"/>
<path d="M205 312C206.4 311 210.3 314.8 211.5 317C212.7 319.2 212.8 322.6 212 325C211.2 327.4 208.5 331.8 207 331.5C205.5 331.2 203.3 326.2 203 323C202.7 319.8 203.6 313 205 312Z" stroke="#d24a1c" stroke-width="2.2" fill="none" stroke-linejoin="round" stroke-linecap="round" opacity="0.95"/>
<path d="M207 331.5C206.3 331.9 204.3 333.4 203 334C201.7 334.6 199.8 335.1 199.2 335.3" stroke="#d24a1c" stroke-width="2.0" fill="none" stroke-linejoin="round" stroke-linecap="round" opacity="0.95"/>
<path d="M211 345C208.1 345.9 209.2 351.8 209.6 355.3C209.9 358.8 211.1 362.8 213.1 365.8C215.1 368.9 218.6 372.7 221.8 373.6C225 374.5 230.7 373.8 232.3 371C233.9 368.2 232.3 360.5 231.4 357C230.5 353.5 230.4 352 227 350C223.6 348 213.9 344.1 211 345Z" stroke="#d24a1c" stroke-width="2.7" fill="none" stroke-linejoin="round" stroke-linecap="round" opacity="0.95"/>
<ellipse cx="223.6" cy="360.6" rx="4.8" ry="6" fill="none" stroke="#eaa020" stroke-width="2"/>
<path d="M199 336C200.2 335 210.5 336.1 213 337C215.5 337.9 215.2 340.4 214 341.4C212.8 342.4 208.5 343.9 206 343C203.5 342.1 197.8 337 199 336Z" stroke="#e8d040" stroke-width="1.6" fill="none" stroke-linejoin="round" stroke-linecap="round" opacity="0.95"/>
<path d="M246.7 253.2C245.4 254.1 241.2 256.9 238.9 258.6C236.6 260.3 234.8 261.9 232.7 263.3C230.6 264.7 228.6 265.7 226.5 267C224.4 268.3 220.6 269.6 220.3 271C220.1 272.4 224.2 274 225 275.7C225.8 277.4 226 279.4 225 281C224 282.6 220.6 283.3 218.8 285C217 286.7 215 288.9 214 291C213 293.1 212.1 295.1 212.6 297.4C213.1 299.7 215.1 302.7 217.2 305C219.3 307.3 224.2 309.2 225 311.3C225.8 313.4 222.4 316.5 221.9 317.5" stroke="#f0c434" stroke-width="2.1" fill="none" stroke-linejoin="round" stroke-linecap="round" opacity="0.95"/>
<path d="M225 281C225.5 281.9 227.5 284.6 228 286.5C228.5 288.4 228 291.7 228 292.7" stroke="#f0c434" stroke-width="1.8" fill="none" stroke-linejoin="round" stroke-linecap="round" opacity="0.95"/>
<rect x="114.8" y="244.3" width="276.79999999999995" height="153.79999999999998" fill="none" stroke="#8a6a50" stroke-width="0.7" opacity="0.8"/>
</g>
</g></g>
<rect x="66.3" y="150" width="9.5" height="8.6" fill="#cfe1f3" stroke="#a9c9ea" stroke-width="0.5"/>
<path d="M35 156.2 L39 152.2 M35.5 153.2 L38.5 155.2" stroke="#555" stroke-width="0.8"/>
<circle cx="46.3" cy="153.2" r="2" fill="#f4f4f4" stroke="#888" stroke-width="0.7"/>
<line x1="45.0" y1="154.6" x2="42.9" y2="156.79999999999998" stroke="#333" stroke-width="1"/>
<path d="M50 151.2 h1.5 M50 151.2 v1.5 M56 151.2 h-1.5 M56 151.2 v1.5 M56 157.2 h-1.5 M56 157.2 v-1.5" stroke="#444" stroke-width="0.7" fill="none"/>
<circle cx="54" cy="153.2" r="2" fill="#f4f4f4" stroke="#999" stroke-width="0.7"/>
<line x1="52.7" y1="154.6" x2="50.6" y2="156.79999999999998" stroke="#333" stroke-width="1"/>
<rect x="59.5" y="151.2" width="5" height="5" fill="none" stroke="#999" stroke-width="0.5"/>
<circle cx="63" cy="153.2" r="2" fill="#f4f4f4" stroke="#888" stroke-width="0.7"/>
<line x1="61.7" y1="154.6" x2="59.6" y2="156.79999999999998" stroke="#333" stroke-width="1"/>
<circle cx="71.5" cy="153.2" r="2" fill="#e2da6e" stroke="#777" stroke-width="0.7"/>
<line x1="70.2" y1="154.6" x2="68.1" y2="156.79999999999998" stroke="#222" stroke-width="1"/>
<path d="M77 152.7 a2.5 2.5 0 0 1 4.5 0.5" stroke="#333" stroke-width="0.9" fill="none"/>
<circle cx="80.6" cy="153.2" r="2" fill="#f4f4f4" stroke="#777" stroke-width="0.7"/>
<line x1="79.3" y1="154.6" x2="77.19999999999999" y2="156.79999999999998" stroke="#333" stroke-width="1"/>
<circle cx="88.5" cy="153.2" r="2" fill="#f4f4f4" stroke="#888" stroke-width="0.7"/>
<line x1="87.2" y1="154.6" x2="85.1" y2="156.79999999999998" stroke="#333" stroke-width="1"/>
<circle cx="97.6" cy="153.2" r="2" fill="#f0f0f0" stroke="#aaa" stroke-width="0.7"/>
<line x1="96.3" y1="154.6" x2="94.19999999999999" y2="156.79999999999998" stroke="#888" stroke-width="1"/>
<rect x="104.6" y="151.6" width="2.8" height="5" fill="#d02c48"/>
<rect x="113" y="151.6" width="2.8" height="5" fill="#5a4a4e"/>
<rect x="121.3" y="153.6" width="3.6" height="1.8" fill="#d23a58"/>
<path d="M129.5 155.2 q2.2 -2.2 4.5 0z" fill="#d23a58"/>
<path d="M138.3 155.2 q2.2 -2.2 4.5 0z" fill="#d23a58"/>
<rect x="147.8" y="153.39999999999998" width="2.6" height="2" fill="#d23a58"/>
<path d="M155.5 155.2 l2.5 -2.2 l2 1 l-2.5 2z" fill="#d23a58"/>
<path d="M165 155.39999999999998 h3 M166.5 152.7 h2.5" stroke="#444" stroke-width="0.8"/>
<rect x="172.8" y="151.39999999999998" width="6.8" height="5.6" rx="2" fill="#3a3a3a"/>
<rect x="183.2" y="151.2" width="3.6" height="4" fill="#9aa858"/><path d="M181.5 156.79999999999998 h5.5" stroke="#333" stroke-width="0.8"/>
<rect x="189.8" y="151.39999999999998" width="6.2" height="5.6" fill="#cdd07a" stroke="#6a6a50" stroke-width="0.5"/>
<circle cx="201.2" cy="154.2" r="1.4" fill="none" stroke="#888" stroke-width="0.7"/>
<path d="M207 152.0 q2 -1 2.5 1 l-2.5 2.6 h4" stroke="#555" stroke-width="0.8" fill="none"/><circle cx="211" cy="154.7" r="1.2" fill="none" stroke="#888" stroke-width="0.6"/>
<circle cx="219.4" cy="154.2" r="2.4" fill="none" stroke="#999" stroke-width="0.6" stroke-dasharray="1 0.6"/>
<circle cx="228.2" cy="154.2" r="2.4" fill="#e0e090" stroke="#999" stroke-width="0.5"/><path d="M228.2 151.0 v6.4" stroke="#444" stroke-width="0.6"/>
<path d="M236.5 151.7 v4 M235 156.2 h3" stroke="#777" stroke-width="0.8"/>
<rect x="243.2" y="151.6" width="3" height="2.5" fill="#333"/><rect x="244.8" y="153.79999999999998" width="3" height="3" fill="#8a96b4"/>
<path d="M250.3 151.6 h5.5 l-2.2 5.4 h-1z" fill="#8a8a8a"/>
<path d="M262.9 151.39999999999998 l2 2 l-2 2 l-2 -2z M261.5 156.6 h3" fill="#333" stroke="#333" stroke-width="0.6"/>
<path d="M272.7 151.6 l2 3.6 h-4z M270.7 156.0 h4" fill="#888" stroke="#888" stroke-width="0.6"/>
<rect x="279.4" y="153.7" width="3.2" height="1.4" fill="#444"/>
<rect x="287.59999999999997" y="153.7" width="3.2" height="1.4" fill="#444"/>
<rect x="295.9" y="153.7" width="3.2" height="1.4" fill="#444"/>
<rect x="305.0" y="153.7" width="3.2" height="1.4" fill="#444"/>
<path d="M313.5 154.2 a3 2.2 0 0 1 6 -0.5" stroke="#333" stroke-width="0.9" fill="none"/><circle cx="315.5" cy="155.79999999999998" r="0.9" fill="#222"/>
<path d="M323.5 151.39999999999998 l2 2.6 l-1.2 1 l2.2 2" stroke="#333" stroke-width="1" fill="none"/>
<path d="M333.7 151.39999999999998 v4.6 M331.5 153.7 h4.4 M332 152.2 l3.4 3" stroke="#444" stroke-width="0.7"/>
<circle cx="37" cy="164.8" r="3.1" fill="#1d4e96"/><circle cx="36.1" cy="163.70000000000002" r="1.2" fill="#5f90d0"/>
<path d="M39.2 168.0 l1.2 -1.2 v1.2z" fill="#444"/>
<circle cx="45.3" cy="164.8" r="2.6" fill="#b4bec8" stroke="#5c6470" stroke-width="0.9" stroke-dasharray="1.2 0.6"/>
<path d="M47.5 168.0 l1.2 -1.2 v1.2z" fill="#444"/>
<path d="M51.2 162.20000000000002 h4.8 v2.2 q0 2.6 -2.4 3.4 q-2.4 -0.8 -2.4 -3.4z" fill="#1f6a34"/>
<path d="M55.800000000000004 168.0 l1.2 -1.2 v1.2z" fill="#444"/>
<path d="M59.6 162.4 h5.8 v5 h-5.8z" fill="#2f8a3c"/><path d="M59.6 162.4 l2 -0.8 h5 l-1.2 0.8" fill="#5ab062"/>
<path d="M64.6 168.0 l1.2 -1.2 v1.2z" fill="#444"/>
<path d="M71 161.8 l2.8 5.6 h-5.6z" fill="#a87a26"/>
<path d="M73.2 168.0 l1.2 -1.2 v1.2z" fill="#444"/>
<rect x="76.6" y="162.20000000000002" width="5.2" height="5.2" fill="#f0f0d8" stroke="#c8c890" stroke-width="0.8"/>
<path d="M81.4 168.0 l1.2 -1.2 v1.2z" fill="#444"/>
<path d="M86.2 162.0 h3.6 v5.4 h-3.6z" fill="#4c5250"/>
<path d="M90.2 168.0 l1.2 -1.2 v1.2z" fill="#444"/>
<circle cx="36" cy="177" r="0.6" fill="#777"/>
<path d="M34.5 183.0 l3 5" stroke="#666" stroke-width="0.6" stroke-dasharray="0.8 0.5"/>
<path d="M33.5 190 h5" stroke="#555" stroke-width="0.7"/>
<circle cx="36" cy="195" r="1.8" fill="none" stroke="#777" stroke-width="0.6"/><path d="M33.5 195 h5" stroke="#555" stroke-width="0.5"/>
<rect x="34" y="200.4" width="4" height="4.4" fill="none" stroke="#666" stroke-width="0.7"/>
<path d="M33.5 214.4 q0 -5 5 -4" stroke="#555" stroke-width="0.8" fill="none"/>
<path d="M33.5 223.2 l5 -4 M36 219.2 l2.5 0" stroke="#555" stroke-width="0.8" fill="none"/>
<path d="M33 230.7 l3 -3 l3 1.5 l-3 3z" fill="#4a5aa0"/>
<path d="M33 239.2 l3 -3 l3 1.5 l-3 3z" fill="#4a5aa0"/>
<path d="M33 249.8 l2.5 -5 l3.5 2z" fill="#e8902a"/><path d="M34 248.8 l4 -4" stroke="#c05010" stroke-width="0.6"/>
<rect x="34.5" y="251.1" width="3" height="2.5" fill="#333"/><rect x="33.5" y="253.6" width="5" height="2" fill="#6a7ab0"/>
<circle cx="34.5" cy="260.8" r="0.9" fill="#555"/><circle cx="37.5" cy="263.8" r="0.9" fill="#555"/>
<path d="M33.5 272.5 q0 -5 5 -4" stroke="#555" stroke-width="0.8" fill="none"/>
<path d="M33.5 280.3 l5 -5" stroke="#777" stroke-width="0.7" stroke-dasharray="0.8 0.6"/>
<path d="M33.5 288.5 l2 -4 l3 3" stroke="#888" stroke-width="0.7" fill="none"/>
<path d="M33.5 297.2 h5" stroke="#999" stroke-width="1"/>
<rect x="34" y="302.5" width="4" height="3.5" fill="#bbb" stroke="#666" stroke-width="0.5"/>
<path d="M33.5 309.2 l1.5 1.8 l3.5 -3.6" stroke="#333" stroke-width="0.9" fill="none"/>
<ellipse cx="36" cy="315.8" rx="2.6" ry="1.8" fill="#e0d060" stroke="#999" stroke-width="0.4"/>
<path d="M50.3 464.5 v5.2 h4.5" stroke="#7a7aa0" stroke-width="0.6" fill="none"/>
<circle cx="585.3" cy="176.9" r="2.6" fill="none" stroke="#d84a3a" stroke-width="1.3"/>
<path d="M585.3 174.3 a2.6 2.6 0 0 1 2.6 2.6" stroke="#e8c030" stroke-width="1.3" fill="none"/>
<path d="M587.9 176.9 a2.6 2.6 0 0 1 -2.6 2.6" stroke="#40a848" stroke-width="1.3" fill="none"/>
<path d="M585.3 179.5 a2.6 2.6 0 0 1 -2.6 -2.6" stroke="#3a6ac8" stroke-width="1.3" fill="none"/>
<rect x="617.6" y="174.4" width="5.8" height="5.2" fill="#4862c4" stroke="#2c3c80" stroke-width="0.5"/><path d="M617.4 174.2 h6.2" stroke="#333" stroke-width="0.6"/><path d="M618.8 178.8 v-3 l1.7 2 l1.7 -2 v3" stroke="#e8ecff" stroke-width="0.6" fill="none"/>
<rect x="639.4" y="173.9" width="5.6" height="4.6" fill="#d8d8d8" stroke="#1a1a1a" stroke-width="0.8"/><path d="M641 179.9 h2.6" stroke="#222" stroke-width="0.8"/>
<path d="M668.2 174.4 l3 -1.2 l3.2 1.2 v1.6 l-3.2 1.2 l-3 -1.2z" fill="#d84a50"/><path d="M668.2 176.6 l3 1.2 l3.2 -1.2 v1.4 l-3.2 1.4 l-3 -1.4z" fill="#c83a44"/><path d="M669.4 175.6 l1.8 0.7 l2 -0.7" stroke="#fff" stroke-width="0.6" fill="none"/>
<rect x="584.6" y="184.3" width="2.4" height="3" fill="none" stroke="#888" stroke-width="0.5"/>
<rect x="594.8" y="184.3" width="2.4" height="3" fill="none" stroke="#999" stroke-width="0.5"/><rect x="595.6" y="185.1" width="2.4" height="2.6" fill="#bbb"/>
<path d="M604.3 184.4 l2.6 2.8 M606.9 184.4 l-2.6 2.8" stroke="#333" stroke-width="0.7"/>
<path d="M614.4 186.70000000000002 l1.1 -1.6 l1.1 1.6" stroke="#555" stroke-width="0.6" fill="none"/>
<path d="M624.5 185.4 l1.1 1.4 l1.1 -1.4" stroke="#bbb" stroke-width="0.6" fill="none"/>
<path d="M636.2 184.9 l-1.2 1 l1.2 1" stroke="#bbb" stroke-width="0.6" fill="none"/>
<path d="M644 184.5 h2.6 M645.3 184.5 v3" stroke="#555" stroke-width="0.7"/>
<rect x="654.1" y="184.4" width="2" height="3" fill="#aaa"/>
<path d="M663.3 187.5 l2 -2 M664.6 184.3 l1.4 1.2" stroke="#444" stroke-width="0.8"/>
<circle cx="674.6" cy="185.9" r="1.2" fill="#777"/>
<rect x="683.2" y="200.9" width="0.9" height="2.8" fill="#d8d8a8"/>
<path d="M686.6 203.5 l1.6 -2.2 M687.6 202.10000000000002 v1.4" stroke="#aab" stroke-width="0.5" fill="none"/>
<rect x="690.8" y="200.9" width="2.9" height="2.8" fill="#000"/>
<rect x="683.2" y="207.72" width="0.9" height="2.8" fill="#8a90b0"/>
<path d="M686.6 210.32 l1.6 -2.2 M687.6 208.92000000000002 v1.4" stroke="#aab" stroke-width="0.5" fill="none"/>
<rect x="690.8" y="207.72" width="2.9" height="2.8" fill="#000"/>
<rect x="683.2" y="214.54" width="0.9" height="2.8" fill="#d8d8a8"/>
<path d="M686.6 217.14 l1.6 -2.2 M687.6 215.74 v1.4" stroke="#aab" stroke-width="0.5" fill="none"/>
<rect x="690.8" y="214.54" width="2.9" height="2.8" fill="#000"/>
<path d="M679 222.96 l0.8 0.9 l1.6 -1.8" stroke="#222" stroke-width="0.6" fill="none"/>
<rect x="690.8" y="221.36" width="2.9" height="2.8" fill="#000"/>
<rect x="683.2" y="228.18" width="0.9" height="2.8" fill="#8a8a9a"/>
<path d="M686.6 230.78 l1.6 -2.2 M687.6 229.38000000000002 v1.4" stroke="#aab" stroke-width="0.5" fill="none"/>
<rect x="690.8" y="228.18" width="2.9" height="2.8" fill="#000"/>
<rect x="683.2" y="235.0" width="0.9" height="2.8" fill="#8a8a9a"/>
<path d="M686.6 237.6 l1.6 -2.2 M687.6 236.20000000000002 v1.4" stroke="#aab" stroke-width="0.5" fill="none"/>
<rect x="690.8" y="235.0" width="2.9" height="2.8" fill="#b84052"/>
<rect x="683.2" y="241.82000000000002" width="0.9" height="2.8" fill="#d8d8a8"/>
<path d="M686.6 244.42000000000002 l1.6 -2.2 M687.6 243.02000000000004 v1.4" stroke="#aab" stroke-width="0.5" fill="none"/>
<rect x="690.8" y="241.92000000000002" width="2.8" height="2.6" fill="#d4d444" stroke="#a0a030" stroke-width="0.4"/>
<rect x="683.2" y="248.64000000000001" width="0.9" height="2.8" fill="#d8d8a8"/>
<path d="M686.6 251.24 l1.6 -2.2 M687.6 249.84000000000003 v1.4" stroke="#aab" stroke-width="0.5" fill="none"/>
<rect x="690.8" y="248.64000000000001" width="2.9" height="2.8" fill="#72a272"/>
<rect x="683.2" y="255.46" width="0.9" height="2.8" fill="#d8d8a8"/>
<path d="M686.6 258.06 l1.6 -2.2 M687.6 256.66 v1.4" stroke="#aab" stroke-width="0.5" fill="none"/>
<rect x="690.8" y="255.46" width="2.9" height="2.8" fill="#72b8d2"/>
<rect x="683.2" y="262.28000000000003" width="0.9" height="2.8" fill="#d8d8a8"/>
<path d="M686.6 264.88 l1.6 -2.2 M687.6 263.48 v1.4" stroke="#aab" stroke-width="0.5" fill="none"/>
<rect x="690.8" y="262.28000000000003" width="2.9" height="2.8" fill="#a26890"/>
<rect x="683.2" y="269.1" width="0.9" height="2.8" fill="#c8d0f0"/>
<path d="M686.6 271.7 l1.6 -2.2 M687.6 270.3 v1.4" stroke="#dde" stroke-width="0.5" fill="none"/>
<rect x="690.8" y="269.1" width="2.9" height="2.8" fill="#0a0a2a"/>
</svg>
</body></html>
